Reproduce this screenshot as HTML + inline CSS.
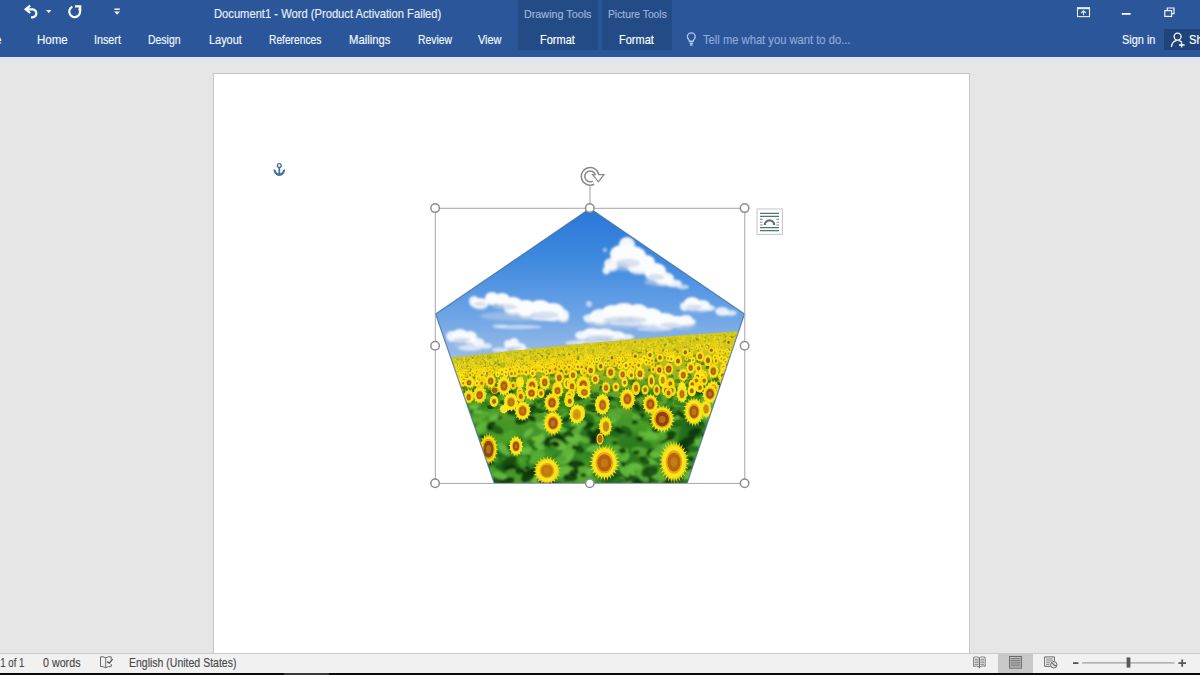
<!DOCTYPE html>
<html lang="en"><head><meta charset="utf-8"><title>Document1 - Word</title>
<style>
html,body{margin:0;padding:0}
body{width:1200px;height:675px;overflow:hidden;position:relative;background:#e6e6e6;font-family:"Liberation Sans", sans-serif}
.abs{position:absolute}
.t{position:absolute;white-space:nowrap;line-height:1.149;transform-origin:0 0;letter-spacing:0;-webkit-text-stroke:0.15px currentColor}
#ribbon{left:0;top:0;width:1200px;height:56.6px;background:#2b579a}
#strip{left:0;top:56.6px;width:1200px;height:6px;background:linear-gradient(#dfe7f4 0,#dfe7f4 35%,#e6e6e6 100%)}
.ctab{position:absolute;top:0;height:50.2px;background:#234b86}
#share{left:1164.3px;top:29.3px;width:40px;height:20.4px;background:#1e4479}
#page{left:212.9px;top:72.8px;width:754.9px;height:590px;background:#fff;border:1px solid #c6c6c6}
#status{left:0;top:652.9px;width:1200px;height:20.2px;background:#f1f1f1;border-top:1px solid #c9c9c9;box-sizing:border-box}
#black{left:0;top:672.9px;width:1200px;height:4px;background:#0a0a0a}
#selview{left:998px;top:653.9px;width:35px;height:19.1px;background:#c8c8c8}
svg{position:absolute;left:0;top:0;overflow:visible}
</style></head><body>
<div id="ribbon" class="abs"></div>
<div id="strip" class="abs"></div>
<div class="ctab" style="left:518.4px;width:79.2px"></div>
<div class="ctab" style="left:601.7px;width:70.1px"></div>
<div id="share" class="abs"></div>
<div id="page" class="abs"></div>
<div id="status" class="abs"></div>
<div id="selview" class="abs"></div>
<div id="black" class="abs"></div>
<div class="abs" style="left:284px;top:672.9px;width:45px;height:3px;background:#383838"></div>
<div class="t" style="left:213.5px;top:6.86px;font-size:12.2px;color:#e8eef8;font-weight:400;transform:scaleX(0.9176)">Document1 - Word (Product Activation Failed)</div>
<div class="t" style="left:523.8px;top:8.04px;font-size:10.9px;color:#9fb6da;font-weight:400;transform:scaleX(0.9897)">Drawing Tools</div>
<div class="t" style="left:607.5px;top:8.04px;font-size:10.9px;color:#9fb6da;font-weight:400;transform:scaleX(0.9460)">Picture Tools</div>
<div class="t" style="left:37.2px;top:32.86px;font-size:12.2px;color:#f4f7fc;font-weight:400;transform:scaleX(0.9472)">Home</div>
<div class="t" style="left:94.3px;top:32.86px;font-size:12.2px;color:#f4f7fc;font-weight:400;transform:scaleX(0.8824)">Insert</div>
<div class="t" style="left:148.3px;top:32.86px;font-size:12.2px;color:#f4f7fc;font-weight:400;transform:scaleX(0.8567)">Design</div>
<div class="t" style="left:208.7px;top:32.86px;font-size:12.2px;color:#f4f7fc;font-weight:400;transform:scaleX(0.8963)">Layout</div>
<div class="t" style="left:269.2px;top:32.86px;font-size:12.2px;color:#f4f7fc;font-weight:400;transform:scaleX(0.8391)">References</div>
<div class="t" style="left:348.7px;top:32.86px;font-size:12.2px;color:#f4f7fc;font-weight:400;transform:scaleX(0.9235)">Mailings</div>
<div class="t" style="left:417.5px;top:32.86px;font-size:12.2px;color:#f4f7fc;font-weight:400;transform:scaleX(0.8507)">Review</div>
<div class="t" style="left:478.3px;top:32.86px;font-size:12.2px;color:#f4f7fc;font-weight:400;transform:scaleX(0.8968)">View</div>
<div class="t" style="left:540.0px;top:32.86px;font-size:12.2px;color:#ffffff;font-weight:400;transform:scaleX(0.9013)">Format</div>
<div class="t" style="left:618.7px;top:32.86px;font-size:12.2px;color:#ffffff;font-weight:400;transform:scaleX(0.9013)">Format</div>
<div class="t" style="left:702.5px;top:32.86px;font-size:12.2px;color:#8eaad6;font-weight:400;transform:scaleX(0.9186)">Tell me what you want to do...</div>
<div class="t" style="left:1121.8px;top:32.86px;font-size:12.2px;color:#f4f7fc;font-weight:400;transform:scaleX(0.8963)">Sign in</div>
<div class="t" style="left:1188.9px;top:32.86px;font-size:12.2px;color:#ffffff;font-weight:400;transform:scaleX(0.9253)">Share</div>
<div class="t" style="left:-17.6px;top:32.86px;font-size:12.2px;color:#f4f7fc;font-weight:400;transform:scaleX(0.9928)">File</div>
<div class="t" style="left:-24.6px;top:655.66px;font-size:12.2px;color:#4a4a4a;font-weight:400;transform:scaleX(0.7924)">Page 1 of 1</div>
<div class="t" style="left:43.3px;top:655.66px;font-size:12.2px;color:#4a4a4a;font-weight:400;transform:scaleX(0.8785)">0 words</div>
<div class="t" style="left:128.8px;top:655.66px;font-size:12.2px;color:#4a4a4a;font-weight:400;transform:scaleX(0.8616)">English (United States)</div>
<svg width="1200" height="675" viewBox="0 0 1200 675">
<defs>
<clipPath id="pc"><polygon points="590.0,208.6 744.5,314.0 687.0,483.4 494.3,483.4 435.6,314.0"/></clipPath>
<linearGradient id="sky" gradientUnits="userSpaceOnUse" x1="0" y1="209" x2="0" y2="358">
<stop offset="0" stop-color="#2a77d8"/><stop offset="0.35" stop-color="#3f8ae0"/><stop offset="0.7" stop-color="#6ba3e6"/><stop offset="1" stop-color="#9bbce6"/></linearGradient>
<linearGradient id="fld" gradientUnits="userSpaceOnUse" x1="0" y1="330" x2="0" y2="484">
<stop offset="0" stop-color="#d6c81c"/><stop offset="0.14" stop-color="#cdc41e"/><stop offset="0.26" stop-color="#a8b422"/><stop offset="0.40" stop-color="#6ea228"/><stop offset="0.60" stop-color="#48962a"/><stop offset="1" stop-color="#3c8e28"/></linearGradient>
<filter id="b1" x="-20%" y="-20%" width="140%" height="140%"><feGaussianBlur stdDeviation="1.6"/></filter>
<filter id="b2" x="-20%" y="-20%" width="140%" height="140%"><feGaussianBlur stdDeviation="0.9"/></filter>
<filter id="b3"><feGaussianBlur stdDeviation="0.35"/></filter>
<filter id="b5" x="-20%" y="-20%" width="140%" height="140%"><feGaussianBlur stdDeviation="0.6"/></filter>
<filter id="b4" x="-20%" y="-20%" width="140%" height="140%"><feGaussianBlur stdDeviation="2.2"/></filter>
</defs>
<g clip-path="url(#pc)"><g filter="url(#b3)">
<rect x="430" y="205" width="320" height="160" fill="url(#sky)"/>
<g filter="url(#b1)">
<ellipse cx="628" cy="266" rx="20" ry="5" fill="#c9d6ea" opacity="0.6"/>
<ellipse cx="660" cy="282" rx="16" ry="4" fill="#c9d6ea" opacity="0.55"/>
<ellipse cx="520" cy="316" rx="40" ry="5" fill="#c9d6ea" opacity="0.45"/>
<ellipse cx="628" cy="324" rx="40" ry="5" fill="#c9d6ea" opacity="0.45"/>
<ellipse cx="684" cy="326" rx="12" ry="4" fill="#c9d6ea" opacity="0.4"/>
<ellipse cx="600" cy="340" rx="26" ry="4" fill="#c9d6ea" opacity="0.4"/>
<ellipse cx="470" cy="345" rx="16" ry="4" fill="#c9d6ea" opacity="0.35"/>
<ellipse cx="515" cy="351" rx="14" ry="3" fill="#c9d6ea" opacity="0.35"/>
<ellipse cx="697" cy="310" rx="14" ry="3" fill="#c9d6ea" opacity="0.35"/>
</g><g filter="url(#b2)">
<ellipse cx="627.5" cy="249.4" rx="7.6" ry="6.4" fill="#cfd9ec" opacity="0.85"/>
<ellipse cx="621.5" cy="258.9" rx="10.4" ry="7.2" fill="#cfd9ec" opacity="0.90"/>
<ellipse cx="633.5" cy="261.5" rx="12.3" ry="8.0" fill="#cfd9ec" opacity="0.90"/>
<ellipse cx="611.5" cy="267.3" rx="6.6" ry="4.8" fill="#cfd9ec" opacity="0.81"/>
<ellipse cx="606.5" cy="271.9" rx="3.3" ry="2.8" fill="#cfd9ec" opacity="0.72"/>
<ellipse cx="646.5" cy="265.9" rx="8.5" ry="5.6" fill="#cfd9ec" opacity="0.90"/>
<ellipse cx="640.5" cy="270.8" rx="11.4" ry="4.0" fill="#cfd9ec" opacity="0.81"/>
<ellipse cx="655.5" cy="275.4" rx="10.4" ry="6.4" fill="#cfd9ec" opacity="0.90"/>
<ellipse cx="664.5" cy="281.3" rx="9.5" ry="4.8" fill="#cfd9ec" opacity="0.85"/>
<ellipse cx="674.5" cy="284.9" rx="7.6" ry="2.8" fill="#cfd9ec" opacity="0.72"/>
<ellipse cx="474.5" cy="303.8" rx="4.8" ry="4.0" fill="#cfd9ec" opacity="0.81"/>
<ellipse cx="480.5" cy="305.8" rx="7.6" ry="4.0" fill="#cfd9ec" opacity="0.85"/>
<ellipse cx="492.5" cy="301.3" rx="6.6" ry="4.8" fill="#cfd9ec" opacity="0.90"/>
<ellipse cx="502.5" cy="302.3" rx="7.6" ry="4.8" fill="#cfd9ec" opacity="0.90"/>
<ellipse cx="513.5" cy="309.4" rx="9.5" ry="6.4" fill="#cfd9ec" opacity="0.90"/>
<ellipse cx="526.5" cy="312.4" rx="9.5" ry="6.4" fill="#cfd9ec" opacity="0.90"/>
<ellipse cx="540.5" cy="312.4" rx="10.4" ry="6.4" fill="#cfd9ec" opacity="0.90"/>
<ellipse cx="553.5" cy="315.4" rx="10.4" ry="6.4" fill="#cfd9ec" opacity="0.90"/>
<ellipse cx="563.5" cy="318.3" rx="5.7" ry="4.8" fill="#cfd9ec" opacity="0.81"/>
<ellipse cx="590.5" cy="320.2" rx="6.6" ry="3.2" fill="#cfd9ec" opacity="0.72"/>
<ellipse cx="600.5" cy="319.9" rx="9.5" ry="5.6" fill="#cfd9ec" opacity="0.85"/>
<ellipse cx="612.5" cy="317.4" rx="9.5" ry="6.4" fill="#cfd9ec" opacity="0.90"/>
<ellipse cx="624.5" cy="315.4" rx="11.4" ry="6.4" fill="#cfd9ec" opacity="0.90"/>
<ellipse cx="638.5" cy="316.4" rx="9.5" ry="6.4" fill="#cfd9ec" opacity="0.90"/>
<ellipse cx="650.5" cy="320.4" rx="11.4" ry="6.4" fill="#cfd9ec" opacity="0.90"/>
<ellipse cx="664.5" cy="323.9" rx="11.4" ry="5.6" fill="#cfd9ec" opacity="0.90"/>
<ellipse cx="676.5" cy="323.8" rx="9.5" ry="4.0" fill="#cfd9ec" opacity="0.90"/>
<ellipse cx="686.5" cy="322.8" rx="6.6" ry="4.0" fill="#cfd9ec" opacity="0.85"/>
<ellipse cx="684.5" cy="308.2" rx="3.8" ry="3.2" fill="#cfd9ec" opacity="0.72"/>
<ellipse cx="692.5" cy="306.3" rx="7.6" ry="4.8" fill="#cfd9ec" opacity="0.90"/>
<ellipse cx="702.5" cy="307.8" rx="7.6" ry="4.0" fill="#cfd9ec" opacity="0.85"/>
<ellipse cx="722.5" cy="313.2" rx="6.6" ry="3.2" fill="#cfd9ec" opacity="0.72"/>
<ellipse cx="582.5" cy="337.2" rx="6.6" ry="3.2" fill="#cfd9ec" opacity="0.77"/>
<ellipse cx="592.5" cy="335.8" rx="8.5" ry="4.0" fill="#cfd9ec" opacity="0.85"/>
<ellipse cx="604.5" cy="335.5" rx="9.5" ry="3.6" fill="#cfd9ec" opacity="0.85"/>
<ellipse cx="616.5" cy="337.2" rx="8.5" ry="3.2" fill="#cfd9ec" opacity="0.81"/>
<ellipse cx="452.5" cy="338.8" rx="5.7" ry="4.0" fill="#cfd9ec" opacity="0.77"/>
<ellipse cx="460.5" cy="338.3" rx="7.6" ry="4.8" fill="#cfd9ec" opacity="0.85"/>
<ellipse cx="470.5" cy="340.3" rx="6.6" ry="4.8" fill="#cfd9ec" opacity="0.85"/>
<ellipse cx="478.5" cy="344.2" rx="5.7" ry="3.2" fill="#cfd9ec" opacity="0.77"/>
<ellipse cx="508.5" cy="346.2" rx="3.8" ry="3.2" fill="#cfd9ec" opacity="0.77"/>
<ellipse cx="514.5" cy="345.8" rx="4.8" ry="4.0" fill="#cfd9ec" opacity="0.81"/>
<ellipse cx="520.5" cy="349.2" rx="5.7" ry="3.2" fill="#cfd9ec" opacity="0.77"/>
<ellipse cx="627" cy="245" rx="8" ry="8" fill="#fbfcfe" opacity="0.95"/>
<ellipse cx="621" cy="254" rx="11" ry="9" fill="#fbfcfe" opacity="1"/>
<ellipse cx="633" cy="256" rx="13" ry="10" fill="#fbfcfe" opacity="1"/>
<ellipse cx="611" cy="264" rx="7" ry="6" fill="#fbfcfe" opacity="0.9"/>
<ellipse cx="606" cy="270" rx="3.5" ry="3.5" fill="#fbfcfe" opacity="0.8"/>
<ellipse cx="646" cy="262" rx="9" ry="7" fill="#fbfcfe" opacity="1"/>
<ellipse cx="640" cy="268" rx="12" ry="5" fill="#fbfcfe" opacity="0.9"/>
<ellipse cx="655" cy="271" rx="11" ry="8" fill="#fbfcfe" opacity="1"/>
<ellipse cx="664" cy="278" rx="10" ry="6" fill="#fbfcfe" opacity="0.95"/>
<ellipse cx="674" cy="283" rx="8" ry="3.5" fill="#fbfcfe" opacity="0.8"/>
<ellipse cx="683" cy="287" rx="6" ry="2.5" fill="#fbfcfe" opacity="0.6"/>
<ellipse cx="605" cy="250" rx="2" ry="2" fill="#fbfcfe" opacity="0.6"/>
<ellipse cx="474" cy="301" rx="5" ry="5" fill="#fbfcfe" opacity="0.9"/>
<ellipse cx="480" cy="303" rx="8" ry="5" fill="#fbfcfe" opacity="0.95"/>
<ellipse cx="492" cy="298" rx="7" ry="6" fill="#fbfcfe" opacity="1"/>
<ellipse cx="502" cy="299" rx="8" ry="6" fill="#fbfcfe" opacity="1"/>
<ellipse cx="513" cy="305" rx="10" ry="8" fill="#fbfcfe" opacity="1"/>
<ellipse cx="526" cy="308" rx="10" ry="8" fill="#fbfcfe" opacity="1"/>
<ellipse cx="540" cy="308" rx="11" ry="8" fill="#fbfcfe" opacity="1"/>
<ellipse cx="553" cy="311" rx="11" ry="8" fill="#fbfcfe" opacity="1"/>
<ellipse cx="563" cy="315" rx="6" ry="6" fill="#fbfcfe" opacity="0.9"/>
<ellipse cx="545" cy="318" rx="14" ry="3" fill="#fbfcfe" opacity="0.6"/>
<ellipse cx="518" cy="327" rx="24" ry="2.2" fill="#fbfcfe" opacity="0.5"/>
<ellipse cx="500" cy="326" rx="8" ry="2" fill="#fbfcfe" opacity="0.4"/>
<ellipse cx="590" cy="318" rx="7" ry="4" fill="#fbfcfe" opacity="0.8"/>
<ellipse cx="600" cy="316" rx="10" ry="7" fill="#fbfcfe" opacity="0.95"/>
<ellipse cx="612" cy="313" rx="10" ry="8" fill="#fbfcfe" opacity="1"/>
<ellipse cx="624" cy="311" rx="12" ry="8" fill="#fbfcfe" opacity="1"/>
<ellipse cx="638" cy="312" rx="10" ry="8" fill="#fbfcfe" opacity="1"/>
<ellipse cx="650" cy="316" rx="12" ry="8" fill="#fbfcfe" opacity="1"/>
<ellipse cx="664" cy="320" rx="12" ry="7" fill="#fbfcfe" opacity="1"/>
<ellipse cx="676" cy="321" rx="10" ry="5" fill="#fbfcfe" opacity="1"/>
<ellipse cx="686" cy="320" rx="7" ry="5" fill="#fbfcfe" opacity="0.95"/>
<ellipse cx="692" cy="322" rx="4" ry="3" fill="#fbfcfe" opacity="0.8"/>
<ellipse cx="640" cy="323" rx="30" ry="3" fill="#fbfcfe" opacity="0.6"/>
<ellipse cx="589" cy="304" rx="3" ry="3" fill="#fbfcfe" opacity="0.6"/>
<ellipse cx="684" cy="306" rx="4" ry="4" fill="#fbfcfe" opacity="0.8"/>
<ellipse cx="692" cy="303" rx="8" ry="6" fill="#fbfcfe" opacity="1"/>
<ellipse cx="702" cy="305" rx="8" ry="5" fill="#fbfcfe" opacity="0.95"/>
<ellipse cx="710" cy="308" rx="5" ry="3" fill="#fbfcfe" opacity="0.8"/>
<ellipse cx="722" cy="311" rx="7" ry="4" fill="#fbfcfe" opacity="0.8"/>
<ellipse cx="731" cy="313" rx="6" ry="3" fill="#fbfcfe" opacity="0.7"/>
<ellipse cx="712" cy="286" rx="5" ry="2.5" fill="#fbfcfe" opacity="0.6"/>
<ellipse cx="582" cy="335" rx="7" ry="4" fill="#fbfcfe" opacity="0.85"/>
<ellipse cx="592" cy="333" rx="9" ry="5" fill="#fbfcfe" opacity="0.95"/>
<ellipse cx="604" cy="333" rx="10" ry="4.5" fill="#fbfcfe" opacity="0.95"/>
<ellipse cx="616" cy="335" rx="9" ry="4" fill="#fbfcfe" opacity="0.9"/>
<ellipse cx="627" cy="337" rx="7" ry="3" fill="#fbfcfe" opacity="0.8"/>
<ellipse cx="575" cy="343" rx="10" ry="2.5" fill="#fbfcfe" opacity="0.6"/>
<ellipse cx="600" cy="342" rx="22" ry="2" fill="#fbfcfe" opacity="0.45"/>
<ellipse cx="452" cy="336" rx="6" ry="5" fill="#fbfcfe" opacity="0.85"/>
<ellipse cx="460" cy="335" rx="8" ry="6" fill="#fbfcfe" opacity="0.95"/>
<ellipse cx="470" cy="337" rx="7" ry="6" fill="#fbfcfe" opacity="0.95"/>
<ellipse cx="478" cy="342" rx="6" ry="4" fill="#fbfcfe" opacity="0.85"/>
<ellipse cx="486" cy="346" rx="6" ry="3" fill="#fbfcfe" opacity="0.7"/>
<ellipse cx="470" cy="348" rx="12" ry="3" fill="#fbfcfe" opacity="0.6"/>
<ellipse cx="508" cy="344" rx="4" ry="4" fill="#fbfcfe" opacity="0.85"/>
<ellipse cx="514" cy="343" rx="5" ry="5" fill="#fbfcfe" opacity="0.9"/>
<ellipse cx="520" cy="347" rx="6" ry="4" fill="#fbfcfe" opacity="0.85"/>
<ellipse cx="528" cy="351" rx="5" ry="2.5" fill="#fbfcfe" opacity="0.6"/>
<ellipse cx="500" cy="350" rx="8" ry="2.5" fill="#fbfcfe" opacity="0.6"/>
<ellipse cx="655" cy="329" rx="18" ry="2.5" fill="#fbfcfe" opacity="0.5"/>
</g><g filter="url(#b2)">
<ellipse cx="628" cy="263" rx="12" ry="4" fill="#bccae2" opacity=".55"/>
<ellipse cx="656" cy="277" rx="8" ry="3" fill="#bccae2" opacity=".55"/>
<ellipse cx="505" cy="307" rx="12" ry="3" fill="#bccae2" opacity=".55"/>
<ellipse cx="545" cy="315" rx="14" ry="3.5" fill="#bccae2" opacity=".55"/>
<ellipse cx="480" cy="304" rx="6" ry="2" fill="#bccae2" opacity=".55"/>
<ellipse cx="625" cy="320" rx="22" ry="3.5" fill="#bccae2" opacity=".55"/>
<ellipse cx="670" cy="325" rx="10" ry="2.5" fill="#bccae2" opacity=".55"/>
<ellipse cx="694" cy="307" rx="8" ry="2.5" fill="#bccae2" opacity=".55"/>
<ellipse cx="600" cy="337" rx="14" ry="2" fill="#bccae2" opacity=".55"/>
<ellipse cx="462" cy="340" rx="8" ry="2.5" fill="#bccae2" opacity=".55"/>
<ellipse cx="516" cy="348" rx="6" ry="2" fill="#bccae2" opacity=".55"/>
</g>
<polygon points="430,359.5 438,358.8 446,358.0 454,357.3 462,356.4 470,355.5 478,354.6 486,353.8 494,352.9 502,352.0 510,351.1 518,350.3 526,349.4 534,348.6 542,347.8 550,346.9 558,346.1 566,345.3 574,344.6 582,343.8 590,343.1 598,342.3 606,341.6 614,340.9 622,340.2 630,339.5 638,338.9 646,338.2 654,337.6 662,336.9 670,336.3 678,335.7 686,335.1 694,334.5 702,333.9 710,333.3 718,332.8 726,332.2 734,331.6 742,330.9 750,330.2 752,486 430,486" fill="url(#fld)"/>
<g filter="url(#b4)">
<ellipse cx="530" cy="369" rx="9" ry="3" fill="#5f9a22" opacity="0.8"/>
<ellipse cx="697" cy="388" rx="10" ry="9" fill="#1f6a18" opacity="0.9"/>
<ellipse cx="575" cy="440" rx="30" ry="22" fill="#1e6b19" opacity="0.7"/>
<ellipse cx="640" cy="450" rx="25" ry="20" fill="#216f1a" opacity="0.7"/>
<ellipse cx="520" cy="470" rx="30" ry="12" fill="#1a5c16" opacity="0.8"/>
<ellipse cx="630" cy="478" rx="30" ry="8" fill="#174f14" opacity="0.9"/>
<ellipse cx="690" cy="440" rx="12" ry="25" fill="#1c6418" opacity="0.8"/>
<ellipse cx="480" cy="420" rx="14" ry="14" fill="#2b7d1e" opacity="0.7"/>
<ellipse cx="560" cy="395" rx="20" ry="5" fill="#3d8a22" opacity="0.6"/>
<ellipse cx="640" cy="384" rx="20" ry="4" fill="#4a9424" opacity="0.6"/>
<ellipse cx="612" cy="366" rx="10" ry="2.5" fill="#5f9f26" opacity="0.7"/>
<ellipse cx="690" cy="358" rx="10" ry="3" fill="#5c9c24" opacity="0.7"/>
<ellipse cx="665" cy="344" rx="10" ry="2" fill="#86ad24" opacity="0.6"/>
<ellipse cx="505" cy="440" rx="18" ry="14" fill="#3f9426" opacity="0.6"/>
<ellipse cx="585" cy="452" rx="14" ry="10" fill="#3f9a28" opacity="0.6"/>
<ellipse cx="640" cy="425" rx="18" ry="10" fill="#46a02a" opacity="0.6"/>
<ellipse cx="560" cy="455" rx="10" ry="12" fill="#46a02a" opacity="0.5"/>
</g>
<g filter="url(#b5)">
<ellipse cx="538.4" cy="353.8" rx="1.2" ry="0.8" fill="#8ba01c" opacity=".8"/>
<ellipse cx="604.1" cy="358.9" rx="1.5" ry="0.9" fill="#76981c" opacity=".8"/>
<ellipse cx="449.6" cy="374.6" rx="1.5" ry="1.0" fill="#72971c" opacity=".8"/>
<ellipse cx="569.6" cy="395.9" rx="2.8" ry="1.8" fill="#34801d" opacity=".8"/>
<ellipse cx="632.5" cy="406.5" rx="4.3" ry="2.7" fill="#2f7f1e" opacity=".8"/>
<ellipse cx="740.6" cy="333.9" rx="1.0" ry="0.7" fill="#92a21c" opacity=".8"/>
<ellipse cx="482.7" cy="358.4" rx="1.1" ry="0.7" fill="#768e17" opacity=".8"/>
<ellipse cx="494.0" cy="380.2" rx="2.5" ry="1.6" fill="#5e8f1d" opacity=".8"/>
<ellipse cx="607.8" cy="344.5" rx="1.0" ry="0.6" fill="#91a11c" opacity=".8"/>
<ellipse cx="648.9" cy="360.1" rx="1.8" ry="1.1" fill="#6e951c" opacity=".8"/>
<ellipse cx="578.5" cy="356.9" rx="1.6" ry="1.0" fill="#7e9b1c" opacity=".8"/>
<ellipse cx="513.7" cy="378.5" rx="2.3" ry="1.5" fill="#466e14" opacity=".8"/>
<ellipse cx="664.1" cy="350.1" rx="1.7" ry="1.1" fill="#7e9b1c" opacity=".8"/>
<ellipse cx="567.6" cy="389.9" rx="2.6" ry="1.7" fill="#3f851d" opacity=".8"/>
<ellipse cx="450.2" cy="388.2" rx="2.9" ry="1.8" fill="#558c1d" opacity=".8"/>
<ellipse cx="709.4" cy="348.8" rx="1.7" ry="1.1" fill="#7b9a1c" opacity=".8"/>
<ellipse cx="617.8" cy="364.0" rx="2.3" ry="1.4" fill="#527615" opacity=".8"/>
<ellipse cx="585.0" cy="381.5" rx="2.2" ry="1.4" fill="#4d891d" opacity=".8"/>
<ellipse cx="638.6" cy="411.3" rx="5.1" ry="3.2" fill="#2f7f1e" opacity=".8"/>
<ellipse cx="557.6" cy="383.1" rx="2.1" ry="1.4" fill="#4e8a1d" opacity=".8"/>
<ellipse cx="490.1" cy="357.6" rx="1.0" ry="0.7" fill="#768e17" opacity=".8"/>
<ellipse cx="478.1" cy="363.5" rx="1.3" ry="0.8" fill="#6c8716" opacity=".8"/>
<ellipse cx="463.0" cy="374.5" rx="1.9" ry="1.2" fill="#587a15" opacity=".8"/>
<ellipse cx="692.0" cy="397.2" rx="3.4" ry="2.1" fill="#2f7f1e" opacity=".8"/>
<ellipse cx="549.2" cy="401.4" rx="4.5" ry="2.8" fill="#2f7f1e" opacity=".8"/>
<ellipse cx="492.6" cy="361.4" rx="1.2" ry="0.8" fill="#859d1c" opacity=".8"/>
<ellipse cx="620.6" cy="351.7" rx="1.2" ry="0.8" fill="#819c1c" opacity=".8"/>
<ellipse cx="552.5" cy="375.7" rx="2.8" ry="1.8" fill="#5d8f1d" opacity=".8"/>
<ellipse cx="597.8" cy="377.2" rx="2.8" ry="1.8" fill="#548c1d" opacity=".8"/>
<ellipse cx="716.9" cy="388.0" rx="4.0" ry="2.6" fill="#1c5112" opacity=".8"/>
<ellipse cx="559.6" cy="364.1" rx="1.5" ry="1.0" fill="#73971c" opacity=".8"/>
<ellipse cx="457.3" cy="359.9" rx="1.0" ry="0.6" fill="#90a11c" opacity=".8"/>
<ellipse cx="543.4" cy="350.4" rx="1.0" ry="0.6" fill="#91a21c" opacity=".8"/>
<ellipse cx="469.5" cy="369.5" rx="1.4" ry="0.9" fill="#618016" opacity=".8"/>
<ellipse cx="628.4" cy="345.7" rx="1.1" ry="0.7" fill="#8b9f1c" opacity=".8"/>
<ellipse cx="550.9" cy="351.6" rx="1.2" ry="0.7" fill="#758d17" opacity=".8"/>
<ellipse cx="582.5" cy="368.1" rx="1.7" ry="1.1" fill="#68931c" opacity=".8"/>
<ellipse cx="544.2" cy="358.0" rx="1.5" ry="1.0" fill="#829c1c" opacity=".8"/>
<ellipse cx="445.2" cy="408.2" rx="3.7" ry="2.3" fill="#2f7f1e" opacity=".8"/>
<ellipse cx="606.4" cy="343.9" rx="1.0" ry="0.6" fill="#7a9117" opacity=".8"/>
<ellipse cx="705.6" cy="380.0" rx="2.7" ry="1.7" fill="#43861d" opacity=".8"/>
<ellipse cx="489.8" cy="393.8" rx="3.1" ry="2.0" fill="#2b5b13" opacity=".8"/>
<ellipse cx="540.2" cy="356.5" rx="1.4" ry="0.9" fill="#6e8817" opacity=".8"/>
<ellipse cx="702.3" cy="391.0" rx="4.1" ry="2.6" fill="#307f1d" opacity=".8"/>
<ellipse cx="508.3" cy="375.2" rx="2.0" ry="1.3" fill="#66921c" opacity=".8"/>
<ellipse cx="446.7" cy="367.6" rx="1.3" ry="0.8" fill="#829c1c" opacity=".8"/>
<ellipse cx="734.5" cy="357.0" rx="2.4" ry="1.5" fill="#517515" opacity=".8"/>
<ellipse cx="734.1" cy="350.9" rx="1.6" ry="1.0" fill="#74971c" opacity=".8"/>
<ellipse cx="499.0" cy="359.7" rx="1.3" ry="0.8" fill="#6f8917" opacity=".8"/>
<ellipse cx="698.5" cy="361.3" rx="2.3" ry="1.4" fill="#4d7215" opacity=".8"/>
<ellipse cx="464.3" cy="387.1" rx="3.0" ry="1.9" fill="#3d6814" opacity=".8"/>
<ellipse cx="670.5" cy="362.6" rx="1.9" ry="1.2" fill="#4e7315" opacity=".8"/>
<ellipse cx="541.1" cy="394.4" rx="4.0" ry="2.5" fill="#3a831d" opacity=".8"/>
<ellipse cx="562.4" cy="406.9" rx="4.4" ry="2.8" fill="#2f7f1e" opacity=".8"/>
<ellipse cx="477.4" cy="360.0" rx="1.2" ry="0.8" fill="#748c17" opacity=".8"/>
<ellipse cx="483.3" cy="398.1" rx="4.0" ry="2.5" fill="#3b831d" opacity=".8"/>
<ellipse cx="546.6" cy="374.8" rx="1.9" ry="1.2" fill="#60901d" opacity=".8"/>
<ellipse cx="739.0" cy="374.5" rx="2.9" ry="1.8" fill="#326013" opacity=".8"/>
<ellipse cx="572.5" cy="399.9" rx="4.2" ry="2.7" fill="#2f7f1e" opacity=".8"/>
<ellipse cx="516.1" cy="361.9" rx="1.4" ry="0.9" fill="#7f9b1c" opacity=".8"/>
<ellipse cx="518.4" cy="368.4" rx="1.6" ry="1.0" fill="#5a7b15" opacity=".8"/>
<ellipse cx="547.7" cy="368.7" rx="2.0" ry="1.3" fill="#547715" opacity=".8"/>
<ellipse cx="568.4" cy="404.2" rx="3.8" ry="2.4" fill="#2f7f1e" opacity=".8"/>
<ellipse cx="600.3" cy="344.3" rx="1.0" ry="0.6" fill="#92a21c" opacity=".8"/>
<ellipse cx="439.2" cy="397.3" rx="2.6" ry="1.6" fill="#43861d" opacity=".8"/>
<ellipse cx="662.8" cy="369.2" rx="2.2" ry="1.4" fill="#5b8e1d" opacity=".8"/>
<ellipse cx="610.2" cy="391.0" rx="2.7" ry="1.7" fill="#38821d" opacity=".8"/>
<ellipse cx="515.0" cy="361.2" rx="1.5" ry="1.0" fill="#819c1c" opacity=".8"/>
<ellipse cx="612.1" cy="388.7" rx="3.8" ry="2.4" fill="#3c831d" opacity=".8"/>
<ellipse cx="627.9" cy="367.0" rx="2.2" ry="1.4" fill="#63911c" opacity=".8"/>
<ellipse cx="578.2" cy="371.8" rx="2.2" ry="1.4" fill="#497014" opacity=".8"/>
<ellipse cx="654.8" cy="399.0" rx="4.6" ry="3.0" fill="#2f7f1e" opacity=".8"/>
<ellipse cx="611.4" cy="406.2" rx="4.8" ry="3.0" fill="#2f7f1e" opacity=".8"/>
<ellipse cx="475.7" cy="373.1" rx="1.6" ry="1.0" fill="#70961c" opacity=".8"/>
<ellipse cx="460.7" cy="387.8" rx="2.9" ry="1.8" fill="#3c6714" opacity=".8"/>
<ellipse cx="485.9" cy="389.8" rx="3.0" ry="1.9" fill="#4c891d" opacity=".8"/>
<ellipse cx="711.7" cy="408.3" rx="3.7" ry="2.3" fill="#174e12" opacity=".8"/>
<ellipse cx="561.5" cy="369.6" rx="2.5" ry="1.6" fill="#507415" opacity=".8"/>
<ellipse cx="488.1" cy="371.5" rx="1.8" ry="1.2" fill="#71961c" opacity=".8"/>
<ellipse cx="498.7" cy="364.7" rx="1.6" ry="1.0" fill="#7d9a1c" opacity=".8"/>
<ellipse cx="609.8" cy="363.4" rx="1.6" ry="1.0" fill="#6d951c" opacity=".8"/>
<ellipse cx="631.4" cy="367.3" rx="1.8" ry="1.2" fill="#4a7014" opacity=".8"/>
<ellipse cx="682.4" cy="408.9" rx="3.4" ry="2.2" fill="#2f7f1e" opacity=".8"/>
<ellipse cx="450.3" cy="395.6" rx="2.6" ry="1.7" fill="#45871d" opacity=".8"/>
<ellipse cx="568.9" cy="403.6" rx="4.4" ry="2.8" fill="#2f7f1e" opacity=".8"/>
<ellipse cx="484.3" cy="405.3" rx="3.7" ry="2.4" fill="#2f7f1e" opacity=".8"/>
<ellipse cx="465.7" cy="358.7" rx="1.0" ry="0.7" fill="#91a11c" opacity=".8"/>
<ellipse cx="460.4" cy="407.1" rx="3.9" ry="2.5" fill="#174e12" opacity=".8"/>
<ellipse cx="464.0" cy="400.8" rx="2.6" ry="1.7" fill="#205412" opacity=".8"/>
<ellipse cx="578.7" cy="359.1" rx="1.7" ry="1.1" fill="#618016" opacity=".8"/>
<ellipse cx="521.0" cy="354.7" rx="1.1" ry="0.7" fill="#8da01c" opacity=".8"/>
<ellipse cx="471.9" cy="360.9" rx="1.1" ry="0.7" fill="#8b9f1c" opacity=".8"/>
<ellipse cx="534.7" cy="360.9" rx="1.6" ry="1.0" fill="#7e9b1c" opacity=".8"/>
<ellipse cx="593.0" cy="349.8" rx="1.2" ry="0.8" fill="#899f1c" opacity=".8"/>
<ellipse cx="515.6" cy="352.6" rx="1.0" ry="0.6" fill="#92a21c" opacity=".8"/>
<ellipse cx="496.7" cy="373.4" rx="2.3" ry="1.5" fill="#6c941c" opacity=".8"/>
<ellipse cx="691.9" cy="358.1" rx="2.0" ry="1.2" fill="#547715" opacity=".8"/>
<ellipse cx="559.9" cy="371.1" rx="2.3" ry="1.5" fill="#4d7215" opacity=".8"/>
<ellipse cx="544.2" cy="397.0" rx="3.7" ry="2.4" fill="#35811d" opacity=".8"/>
<ellipse cx="563.5" cy="360.8" rx="1.4" ry="0.9" fill="#79991c" opacity=".8"/>
<ellipse cx="459.9" cy="392.7" rx="2.5" ry="1.6" fill="#4a881d" opacity=".8"/>
<ellipse cx="464.2" cy="399.7" rx="3.8" ry="2.4" fill="#3a831d" opacity=".8"/>
<ellipse cx="525.4" cy="358.7" rx="1.3" ry="0.8" fill="#849d1c" opacity=".8"/>
<ellipse cx="486.8" cy="372.4" rx="1.7" ry="1.1" fill="#587915" opacity=".8"/>
<ellipse cx="739.5" cy="365.1" rx="2.2" ry="1.4" fill="#436b14" opacity=".8"/>
<ellipse cx="534.0" cy="363.7" rx="1.4" ry="0.9" fill="#78991c" opacity=".8"/>
<ellipse cx="585.1" cy="369.2" rx="1.9" ry="1.2" fill="#65921c" opacity=".8"/>
<ellipse cx="439.5" cy="367.6" rx="1.2" ry="0.8" fill="#839d1c" opacity=".8"/>
<ellipse cx="450.9" cy="359.8" rx="1.0" ry="0.6" fill="#92a21c" opacity=".8"/>
<ellipse cx="619.5" cy="369.2" rx="2.5" ry="1.6" fill="#60901d" opacity=".8"/>
<ellipse cx="660.0" cy="399.2" rx="3.6" ry="2.3" fill="#2f7f1e" opacity=".8"/>
<ellipse cx="743.3" cy="337.4" rx="1.2" ry="0.8" fill="#8b9f1c" opacity=".8"/>
<ellipse cx="451.6" cy="399.6" rx="3.8" ry="2.4" fill="#3d841d" opacity=".8"/>
<ellipse cx="665.5" cy="392.3" rx="2.9" ry="1.8" fill="#307f1d" opacity=".8"/>
<ellipse cx="594.4" cy="396.0" rx="4.0" ry="2.6" fill="#184f12" opacity=".8"/>
<ellipse cx="619.1" cy="401.1" rx="4.2" ry="2.7" fill="#2f7f1e" opacity=".8"/>
<ellipse cx="509.3" cy="353.5" rx="1.0" ry="0.6" fill="#92a21c" opacity=".8"/>
<ellipse cx="470.5" cy="399.1" rx="3.3" ry="2.1" fill="#3b831d" opacity=".8"/>
<ellipse cx="632.1" cy="381.0" rx="2.9" ry="1.8" fill="#49881d" opacity=".8"/>
<ellipse cx="685.3" cy="385.6" rx="3.2" ry="2.1" fill="#3b831d" opacity=".8"/>
<ellipse cx="642.4" cy="341.7" rx="1.1" ry="0.7" fill="#91a11c" opacity=".8"/>
<ellipse cx="461.1" cy="365.8" rx="1.5" ry="0.9" fill="#839c1c" opacity=".8"/>
<ellipse cx="667.3" cy="409.3" rx="4.3" ry="2.7" fill="#2f7f1e" opacity=".8"/>
<ellipse cx="586.5" cy="383.0" rx="3.2" ry="2.0" fill="#4a881d" opacity=".8"/>
<ellipse cx="637.3" cy="342.4" rx="1.0" ry="0.6" fill="#90a11c" opacity=".8"/>
<ellipse cx="668.4" cy="350.8" rx="1.6" ry="1.0" fill="#7c9a1c" opacity=".8"/>
<ellipse cx="456.8" cy="366.4" rx="1.5" ry="0.9" fill="#839c1c" opacity=".8"/>
<ellipse cx="647.5" cy="351.4" rx="1.5" ry="1.0" fill="#7e9b1c" opacity=".8"/>
<ellipse cx="582.6" cy="348.5" rx="1.2" ry="0.7" fill="#8da01c" opacity=".8"/>
<ellipse cx="741.2" cy="404.6" rx="3.1" ry="2.0" fill="#2f7f1e" opacity=".8"/>
<ellipse cx="692.2" cy="408.4" rx="4.2" ry="2.7" fill="#2f7f1e" opacity=".8"/>
<ellipse cx="503.0" cy="407.3" rx="3.2" ry="2.1" fill="#2f7f1e" opacity=".8"/>
<ellipse cx="481.9" cy="377.4" rx="2.5" ry="1.6" fill="#66921c" opacity=".8"/>
<ellipse cx="692.3" cy="364.0" rx="2.6" ry="1.6" fill="#61911d" opacity=".8"/>
<ellipse cx="509.7" cy="403.2" rx="3.6" ry="2.3" fill="#2f7f1e" opacity=".8"/>
<ellipse cx="439.1" cy="378.4" rx="1.9" ry="1.2" fill="#6c941c" opacity=".8"/>
<ellipse cx="481.6" cy="367.5" rx="1.5" ry="1.0" fill="#638116" opacity=".8"/>
<ellipse cx="438.5" cy="394.1" rx="3.3" ry="2.1" fill="#4a881d" opacity=".8"/>
<ellipse cx="725.2" cy="381.1" rx="3.7" ry="2.4" fill="#40851d" opacity=".8"/>
<ellipse cx="553.4" cy="364.2" rx="2.1" ry="1.3" fill="#74971c" opacity=".8"/>
<ellipse cx="549.8" cy="366.6" rx="1.7" ry="1.1" fill="#70961c" opacity=".8"/>
<ellipse cx="469.5" cy="399.1" rx="2.9" ry="1.8" fill="#235612" opacity=".8"/>
<ellipse cx="515.3" cy="360.7" rx="1.4" ry="0.9" fill="#829c1c" opacity=".8"/>
<ellipse cx="553.7" cy="407.9" rx="4.8" ry="3.0" fill="#174e12" opacity=".8"/>
<ellipse cx="633.6" cy="403.0" rx="4.8" ry="3.1" fill="#2f7f1e" opacity=".8"/>
<ellipse cx="661.1" cy="339.8" rx="1.0" ry="0.7" fill="#91a21c" opacity=".8"/>
<ellipse cx="671.3" cy="376.4" rx="2.5" ry="1.6" fill="#4d891d" opacity=".8"/>
<ellipse cx="725.3" cy="337.8" rx="1.1" ry="0.7" fill="#8da01c" opacity=".8"/>
<ellipse cx="530.3" cy="389.7" rx="3.6" ry="2.3" fill="#45861d" opacity=".8"/>
<ellipse cx="641.4" cy="352.4" rx="1.6" ry="1.0" fill="#7d9a1c" opacity=".8"/>
<ellipse cx="489.9" cy="359.0" rx="1.1" ry="0.7" fill="#738c17" opacity=".8"/>
<ellipse cx="592.1" cy="351.8" rx="1.4" ry="0.9" fill="#6d8817" opacity=".8"/>
<ellipse cx="577.5" cy="349.7" rx="1.1" ry="0.7" fill="#8ca01c" opacity=".8"/>
<ellipse cx="544.0" cy="351.3" rx="1.0" ry="0.7" fill="#8fa11c" opacity=".8"/>
<ellipse cx="614.6" cy="400.6" rx="4.3" ry="2.7" fill="#2f7f1e" opacity=".8"/>
<ellipse cx="566.3" cy="371.9" rx="2.1" ry="1.3" fill="#63911c" opacity=".8"/>
<ellipse cx="457.2" cy="366.7" rx="1.6" ry="1.0" fill="#829c1c" opacity=".8"/>
<ellipse cx="594.1" cy="378.3" rx="3.1" ry="1.9" fill="#528b1d" opacity=".8"/>
<ellipse cx="522.0" cy="359.3" rx="1.3" ry="0.8" fill="#839d1c" opacity=".8"/>
<ellipse cx="733.7" cy="394.9" rx="4.5" ry="2.8" fill="#2f7f1e" opacity=".8"/>
<ellipse cx="448.0" cy="391.0" rx="3.2" ry="2.0" fill="#4f8a1d" opacity=".8"/>
<ellipse cx="620.0" cy="342.4" rx="1.0" ry="0.6" fill="#7b9117" opacity=".8"/>
<ellipse cx="693.9" cy="396.2" rx="4.6" ry="3.0" fill="#2f7f1e" opacity=".8"/>
<ellipse cx="471.8" cy="360.6" rx="1.2" ry="0.7" fill="#8ba01c" opacity=".8"/>
<ellipse cx="729.9" cy="381.8" rx="3.4" ry="2.1" fill="#265812" opacity=".8"/>
<ellipse cx="579.8" cy="373.0" rx="1.9" ry="1.2" fill="#466e14" opacity=".8"/>
<ellipse cx="510.1" cy="405.1" rx="4.0" ry="2.5" fill="#2f7f1e" opacity=".8"/>
<ellipse cx="477.7" cy="363.7" rx="1.4" ry="0.9" fill="#849d1c" opacity=".8"/>
<ellipse cx="472.8" cy="358.2" rx="1.0" ry="0.7" fill="#90a11c" opacity=".8"/>
<ellipse cx="558.3" cy="354.9" rx="1.3" ry="0.9" fill="#859d1c" opacity=".8"/>
<ellipse cx="531.5" cy="370.0" rx="2.3" ry="1.5" fill="#6c941c" opacity=".8"/>
<ellipse cx="712.0" cy="360.4" rx="1.9" ry="1.2" fill="#66921c" opacity=".8"/>
<ellipse cx="735.8" cy="379.9" rx="2.8" ry="1.8" fill="#41851d" opacity=".8"/>
<ellipse cx="592.5" cy="382.0" rx="2.7" ry="1.7" fill="#4b891d" opacity=".8"/>
<ellipse cx="644.9" cy="404.1" rx="3.4" ry="2.2" fill="#2f7f1e" opacity=".8"/>
<ellipse cx="542.8" cy="366.7" rx="2.0" ry="1.2" fill="#71961c" opacity=".8"/>
<ellipse cx="685.1" cy="384.7" rx="3.2" ry="2.0" fill="#3c831d" opacity=".8"/>
<ellipse cx="738.7" cy="347.0" rx="1.7" ry="1.1" fill="#7b9a1c" opacity=".8"/>
<ellipse cx="506.6" cy="392.3" rx="2.7" ry="1.7" fill="#2b5b13" opacity=".8"/>
<ellipse cx="591.7" cy="350.3" rx="1.2" ry="0.7" fill="#889e1c" opacity=".8"/>
<ellipse cx="644.2" cy="406.6" rx="3.4" ry="2.1" fill="#2f7f1e" opacity=".8"/>
<ellipse cx="504.0" cy="409.8" rx="3.2" ry="2.0" fill="#2f7f1e" opacity=".8"/>
<ellipse cx="456.6" cy="372.1" rx="1.9" ry="1.2" fill="#5e7e16" opacity=".8"/>
<ellipse cx="665.1" cy="411.7" rx="5.4" ry="3.5" fill="#2f7f1e" opacity=".8"/>
<ellipse cx="495.5" cy="406.6" rx="4.2" ry="2.7" fill="#2f7f1e" opacity=".8"/>
<ellipse cx="644.0" cy="357.1" rx="1.7" ry="1.1" fill="#74971c" opacity=".8"/>
<ellipse cx="490.5" cy="355.3" rx="1.0" ry="0.6" fill="#92a21c" opacity=".8"/>
<ellipse cx="734.2" cy="337.0" rx="1.2" ry="0.8" fill="#8da01c" opacity=".8"/>
<ellipse cx="548.6" cy="395.9" rx="3.9" ry="2.5" fill="#36811d" opacity=".8"/>
<ellipse cx="453.3" cy="376.5" rx="1.8" ry="1.2" fill="#567815" opacity=".8"/>
<ellipse cx="497.8" cy="367.1" rx="1.9" ry="1.2" fill="#78991c" opacity=".8"/>
<ellipse cx="565.3" cy="394.7" rx="3.8" ry="2.4" fill="#36811d" opacity=".8"/>
<ellipse cx="448.8" cy="360.6" rx="1.1" ry="0.7" fill="#90a11c" opacity=".8"/>
<ellipse cx="669.7" cy="401.1" rx="3.6" ry="2.3" fill="#2f7f1e" opacity=".8"/>
<ellipse cx="734.9" cy="371.6" rx="2.4" ry="1.5" fill="#508a1d" opacity=".8"/>
<ellipse cx="536.1" cy="359.3" rx="1.3" ry="0.8" fill="#698516" opacity=".8"/>
<ellipse cx="722.1" cy="373.6" rx="3.3" ry="2.1" fill="#4d891d" opacity=".8"/>
<ellipse cx="510.5" cy="372.4" rx="2.3" ry="1.5" fill="#537615" opacity=".8"/>
<ellipse cx="557.8" cy="356.2" rx="1.4" ry="0.9" fill="#839c1c" opacity=".8"/>
<ellipse cx="725.7" cy="340.3" rx="1.3" ry="0.8" fill="#889e1c" opacity=".8"/>
<ellipse cx="693.1" cy="387.8" rx="3.5" ry="2.2" fill="#36811d" opacity=".8"/>
<ellipse cx="537.1" cy="363.7" rx="1.8" ry="1.2" fill="#78991c" opacity=".8"/>
<ellipse cx="499.2" cy="392.0" rx="2.6" ry="1.7" fill="#45871d" opacity=".8"/>
<ellipse cx="448.5" cy="381.2" rx="2.0" ry="1.3" fill="#4c7215" opacity=".8"/>
<ellipse cx="711.9" cy="410.6" rx="3.9" ry="2.5" fill="#2f7f1e" opacity=".8"/>
<ellipse cx="467.9" cy="376.9" rx="2.2" ry="1.4" fill="#6a941c" opacity=".8"/>
<ellipse cx="510.6" cy="368.9" rx="1.9" ry="1.2" fill="#72971c" opacity=".8"/>
<ellipse cx="669.9" cy="395.8" rx="4.0" ry="2.5" fill="#2f7f1e" opacity=".8"/>
<ellipse cx="698.7" cy="348.2" rx="1.6" ry="1.0" fill="#7d9a1c" opacity=".8"/>
<ellipse cx="666.8" cy="345.1" rx="1.2" ry="0.8" fill="#879e1c" opacity=".8"/>
<ellipse cx="485.5" cy="402.5" rx="3.6" ry="2.3" fill="#31801d" opacity=".8"/>
<ellipse cx="560.8" cy="411.3" rx="4.2" ry="2.7" fill="#2f7f1e" opacity=".8"/>
<ellipse cx="688.6" cy="376.6" rx="3.4" ry="2.2" fill="#4b891d" opacity=".8"/>
<ellipse cx="585.2" cy="394.8" rx="4.0" ry="2.5" fill="#1c5112" opacity=".8"/>
<ellipse cx="450.5" cy="367.9" rx="1.3" ry="0.8" fill="#809c1c" opacity=".8"/>
<ellipse cx="739.6" cy="368.3" rx="3.0" ry="1.9" fill="#558c1d" opacity=".8"/>
<ellipse cx="706.5" cy="358.6" rx="1.8" ry="1.2" fill="#527515" opacity=".8"/>
<ellipse cx="731.2" cy="336.5" rx="1.1" ry="0.7" fill="#8ea11c" opacity=".8"/>
<ellipse cx="505.5" cy="366.7" rx="1.5" ry="0.9" fill="#78991c" opacity=".8"/>
<ellipse cx="517.0" cy="380.0" rx="2.6" ry="1.6" fill="#5a8e1d" opacity=".8"/>
<ellipse cx="441.5" cy="370.1" rx="1.6" ry="1.0" fill="#7d9b1c" opacity=".8"/>
<ellipse cx="534.8" cy="356.1" rx="1.3" ry="0.9" fill="#879e1c" opacity=".8"/>
<ellipse cx="457.6" cy="360.6" rx="1.1" ry="0.7" fill="#8fa11c" opacity=".8"/>
<ellipse cx="636.1" cy="343.0" rx="1.0" ry="0.7" fill="#8fa11c" opacity=".8"/>
<ellipse cx="565.0" cy="357.2" rx="1.4" ry="0.9" fill="#688416" opacity=".8"/>
<ellipse cx="534.8" cy="376.7" rx="2.2" ry="1.4" fill="#5e8f1d" opacity=".8"/>
<ellipse cx="705.9" cy="411.6" rx="4.1" ry="2.6" fill="#2f7f1e" opacity=".8"/>
<ellipse cx="663.7" cy="345.5" rx="1.2" ry="0.7" fill="#6e8917" opacity=".8"/>
<ellipse cx="569.4" cy="395.3" rx="3.2" ry="2.1" fill="#1d5212" opacity=".8"/>
<ellipse cx="580.9" cy="350.2" rx="1.1" ry="0.7" fill="#8a9f1c" opacity=".8"/>
<ellipse cx="636.6" cy="402.6" rx="3.1" ry="2.0" fill="#2f7f1e" opacity=".8"/>
<ellipse cx="553.0" cy="371.3" rx="1.8" ry="1.2" fill="#66921c" opacity=".8"/>
<ellipse cx="599.6" cy="404.6" rx="3.1" ry="2.0" fill="#2f7f1e" opacity=".8"/>
<ellipse cx="687.5" cy="408.3" rx="3.6" ry="2.3" fill="#2f7f1e" opacity=".8"/>
<ellipse cx="730.4" cy="409.2" rx="4.4" ry="2.8" fill="#2f7f1e" opacity=".8"/>
<ellipse cx="725.1" cy="353.0" rx="2.1" ry="1.3" fill="#71961c" opacity=".8"/>
<ellipse cx="693.6" cy="341.4" rx="1.3" ry="0.8" fill="#8a9f1c" opacity=".8"/>
<ellipse cx="563.4" cy="397.7" rx="4.1" ry="2.6" fill="#317f1d" opacity=".8"/>
<ellipse cx="505.6" cy="368.4" rx="1.8" ry="1.1" fill="#74971c" opacity=".8"/>
<ellipse cx="476.1" cy="363.6" rx="1.4" ry="0.9" fill="#6c8716" opacity=".8"/>
<ellipse cx="450.7" cy="381.7" rx="2.4" ry="1.5" fill="#63911c" opacity=".8"/>
<ellipse cx="697.8" cy="339.3" rx="1.1" ry="0.7" fill="#8da01c" opacity=".8"/>
<ellipse cx="632.4" cy="353.3" rx="1.5" ry="1.0" fill="#7c9a1c" opacity=".8"/>
<ellipse cx="570.0" cy="381.7" rx="2.6" ry="1.7" fill="#4f8a1d" opacity=".8"/>
<ellipse cx="445.2" cy="385.4" rx="2.4" ry="1.5" fill="#5c8f1d" opacity=".8"/>
<ellipse cx="674.7" cy="389.0" rx="3.3" ry="2.1" fill="#36811d" opacity=".8"/>
<ellipse cx="584.7" cy="347.9" rx="1.0" ry="0.7" fill="#8ea11c" opacity=".8"/>
<ellipse cx="466.4" cy="373.8" rx="1.9" ry="1.2" fill="#71961c" opacity=".8"/>
<ellipse cx="635.3" cy="342.7" rx="1.1" ry="0.7" fill="#788f17" opacity=".8"/>
<ellipse cx="596.6" cy="345.3" rx="1.0" ry="0.6" fill="#91a21c" opacity=".8"/>
<ellipse cx="732.8" cy="337.6" rx="1.2" ry="0.8" fill="#748c17" opacity=".8"/>
<ellipse cx="664.9" cy="392.6" rx="3.0" ry="1.9" fill="#184e12" opacity=".8"/>
<ellipse cx="590.5" cy="407.7" rx="4.9" ry="3.1" fill="#2f7f1e" opacity=".8"/>
<ellipse cx="682.4" cy="404.4" rx="3.2" ry="2.0" fill="#2f7f1e" opacity=".8"/>
<ellipse cx="672.4" cy="342.8" rx="1.3" ry="0.8" fill="#8a9f1c" opacity=".8"/>
<ellipse cx="690.8" cy="340.8" rx="1.2" ry="0.7" fill="#738c17" opacity=".8"/>
<ellipse cx="502.6" cy="361.8" rx="1.4" ry="0.9" fill="#829c1c" opacity=".8"/>
<ellipse cx="449.4" cy="363.8" rx="1.1" ry="0.7" fill="#728b17" opacity=".8"/>
<ellipse cx="648.7" cy="401.0" rx="3.2" ry="2.0" fill="#174e12" opacity=".8"/>
<ellipse cx="473.7" cy="378.3" rx="2.2" ry="1.4" fill="#66921c" opacity=".8"/>
<ellipse cx="708.6" cy="367.1" rx="2.5" ry="1.6" fill="#426b14" opacity=".8"/>
<ellipse cx="470.4" cy="411.4" rx="4.2" ry="2.6" fill="#2f7f1e" opacity=".8"/>
<ellipse cx="685.3" cy="347.3" rx="1.6" ry="1.0" fill="#809c1c" opacity=".8"/>
<ellipse cx="549.7" cy="391.1" rx="3.0" ry="1.9" fill="#3f851d" opacity=".8"/>
<ellipse cx="668.5" cy="339.2" rx="1.0" ry="0.7" fill="#91a21c" opacity=".8"/>
<ellipse cx="636.2" cy="410.3" rx="4.5" ry="2.9" fill="#2f7f1e" opacity=".8"/>
<ellipse cx="534.9" cy="350.5" rx="1.0" ry="0.6" fill="#92a21c" opacity=".8"/>
<ellipse cx="629.0" cy="361.6" rx="1.9" ry="1.2" fill="#557815" opacity=".8"/>
<ellipse cx="478.9" cy="362.5" rx="1.4" ry="0.9" fill="#869e1c" opacity=".8"/>
<ellipse cx="438.8" cy="371.5" rx="1.4" ry="0.9" fill="#7b9a1c" opacity=".8"/>
<ellipse cx="507.5" cy="379.5" rx="2.4" ry="1.6" fill="#5d8f1d" opacity=".8"/>
<ellipse cx="631.4" cy="364.5" rx="1.8" ry="1.1" fill="#507415" opacity=".8"/>
<ellipse cx="513.5" cy="356.2" rx="1.1" ry="0.7" fill="#8ca01c" opacity=".8"/>
<ellipse cx="708.1" cy="388.4" rx="3.2" ry="2.1" fill="#34801d" opacity=".8"/>
<ellipse cx="441.6" cy="387.1" rx="2.5" ry="1.6" fill="#598e1d" opacity=".8"/>
<ellipse cx="638.1" cy="361.9" rx="2.3" ry="1.5" fill="#6c941c" opacity=".8"/>
<ellipse cx="515.0" cy="403.6" rx="2.8" ry="1.8" fill="#2f7f1e" opacity=".8"/>
<ellipse cx="563.9" cy="355.0" rx="1.2" ry="0.8" fill="#6c8716" opacity=".8"/>
<ellipse cx="441.8" cy="381.5" rx="2.5" ry="1.6" fill="#65921c" opacity=".8"/>
<ellipse cx="499.9" cy="381.6" rx="2.4" ry="1.5" fill="#5a8e1d" opacity=".8"/>
<ellipse cx="690.1" cy="342.3" rx="1.2" ry="0.8" fill="#899f1c" opacity=".8"/>
<ellipse cx="453.0" cy="403.5" rx="3.9" ry="2.5" fill="#34801d" opacity=".8"/>
<ellipse cx="440.0" cy="400.5" rx="3.6" ry="2.3" fill="#3c831d" opacity=".8"/>
<ellipse cx="667.9" cy="360.8" rx="1.8" ry="1.2" fill="#6a941c" opacity=".8"/>
<ellipse cx="510.0" cy="353.6" rx="1.0" ry="0.6" fill="#92a21c" opacity=".8"/>
<ellipse cx="653.5" cy="395.9" rx="4.0" ry="2.6" fill="#2f7f1e" opacity=".8"/>
<ellipse cx="609.7" cy="363.1" rx="2.1" ry="1.4" fill="#6d951c" opacity=".8"/>
<ellipse cx="520.2" cy="382.9" rx="3.1" ry="2.0" fill="#548c1d" opacity=".8"/>
<ellipse cx="710.8" cy="335.4" rx="1.0" ry="0.6" fill="#93a21c" opacity=".8"/>
<ellipse cx="668.6" cy="406.0" rx="4.7" ry="3.0" fill="#2f7f1e" opacity=".8"/>
<ellipse cx="710.9" cy="349.7" rx="1.5" ry="1.0" fill="#618016" opacity=".8"/>
<ellipse cx="633.5" cy="382.0" rx="3.2" ry="2.0" fill="#2f5e13" opacity=".8"/>
<ellipse cx="583.5" cy="396.7" rx="3.8" ry="2.4" fill="#184f12" opacity=".8"/>
<ellipse cx="573.5" cy="386.9" rx="3.1" ry="2.0" fill="#44861d" opacity=".8"/>
<ellipse cx="503.7" cy="382.4" rx="2.0" ry="1.3" fill="#406914" opacity=".8"/>
<ellipse cx="482.8" cy="356.4" rx="1.0" ry="0.6" fill="#7a9017" opacity=".8"/>
<ellipse cx="544.9" cy="352.8" rx="1.1" ry="0.7" fill="#8ca01c" opacity=".8"/>
<ellipse cx="652.7" cy="376.2" rx="2.9" ry="1.9" fill="#4f8a1d" opacity=".8"/>
<ellipse cx="458.4" cy="383.0" rx="2.2" ry="1.4" fill="#476e14" opacity=".8"/>
<ellipse cx="692.1" cy="400.1" rx="3.0" ry="1.9" fill="#174e12" opacity=".8"/>
<ellipse cx="721.5" cy="405.6" rx="3.3" ry="2.1" fill="#2f7f1e" opacity=".8"/>
<ellipse cx="472.7" cy="357.6" rx="1.0" ry="0.7" fill="#7a9017" opacity=".8"/>
<ellipse cx="634.6" cy="394.2" rx="3.7" ry="2.4" fill="#307f1d" opacity=".8"/>
<ellipse cx="469.0" cy="359.3" rx="1.1" ry="0.7" fill="#8fa11c" opacity=".8"/>
<ellipse cx="536.9" cy="367.3" rx="1.5" ry="1.0" fill="#71961c" opacity=".8"/>
<ellipse cx="525.6" cy="388.1" rx="2.7" ry="1.7" fill="#49881d" opacity=".8"/>
<ellipse cx="736.8" cy="361.5" rx="2.6" ry="1.6" fill="#61911d" opacity=".8"/>
<ellipse cx="447.6" cy="373.7" rx="1.7" ry="1.1" fill="#5d7d16" opacity=".8"/>
<ellipse cx="545.5" cy="386.4" rx="2.9" ry="1.9" fill="#49881d" opacity=".8"/>
<ellipse cx="705.3" cy="337.8" rx="1.1" ry="0.7" fill="#8fa11c" opacity=".8"/>
<ellipse cx="438.4" cy="365.4" rx="1.3" ry="0.8" fill="#708a17" opacity=".8"/>
<ellipse cx="439.4" cy="378.3" rx="2.0" ry="1.2" fill="#547715" opacity=".8"/>
<ellipse cx="495.2" cy="374.7" rx="1.9" ry="1.2" fill="#517515" opacity=".8"/>
<ellipse cx="518.8" cy="407.0" rx="3.4" ry="2.2" fill="#2f7f1e" opacity=".8"/>
<ellipse cx="654.8" cy="365.0" rx="1.8" ry="1.2" fill="#64911c" opacity=".8"/>
<ellipse cx="463.1" cy="395.9" rx="3.3" ry="2.1" fill="#2b5b13" opacity=".8"/>
<ellipse cx="632.7" cy="356.3" rx="1.6" ry="1.0" fill="#77981c" opacity=".8"/>
<ellipse cx="714.0" cy="337.0" rx="1.1" ry="0.7" fill="#8fa11c" opacity=".8"/>
<ellipse cx="501.9" cy="361.8" rx="1.5" ry="1.0" fill="#829c1c" opacity=".8"/>
<ellipse cx="555.6" cy="401.3" rx="3.2" ry="2.0" fill="#2f7f1e" opacity=".8"/>
<ellipse cx="602.8" cy="388.5" rx="3.5" ry="2.3" fill="#3e841d" opacity=".8"/>
<ellipse cx="546.0" cy="361.0" rx="1.4" ry="0.9" fill="#638116" opacity=".8"/>
<ellipse cx="643.3" cy="386.2" rx="2.7" ry="1.7" fill="#3e841d" opacity=".8"/>
<ellipse cx="677.8" cy="370.5" rx="2.1" ry="1.3" fill="#578d1d" opacity=".8"/>
<ellipse cx="712.4" cy="344.1" rx="1.3" ry="0.8" fill="#839d1c" opacity=".8"/>
<ellipse cx="656.0" cy="395.7" rx="3.0" ry="1.9" fill="#2f7f1e" opacity=".8"/>
<ellipse cx="514.8" cy="363.7" rx="1.6" ry="1.0" fill="#7c9a1c" opacity=".8"/>
<ellipse cx="539.7" cy="355.1" rx="1.4" ry="0.9" fill="#889e1c" opacity=".8"/>
<ellipse cx="469.6" cy="409.0" rx="3.0" ry="1.9" fill="#2f7f1e" opacity=".8"/>
<ellipse cx="743.0" cy="388.9" rx="3.9" ry="2.5" fill="#307f1d" opacity=".8"/>
<ellipse cx="498.8" cy="383.7" rx="2.1" ry="1.3" fill="#568d1d" opacity=".8"/>
<ellipse cx="558.4" cy="348.5" rx="1.0" ry="0.6" fill="#7a9017" opacity=".8"/>
<ellipse cx="653.0" cy="365.3" rx="2.3" ry="1.5" fill="#63911c" opacity=".8"/>
<ellipse cx="482.0" cy="382.4" rx="2.3" ry="1.5" fill="#5c8f1d" opacity=".8"/>
<ellipse cx="719.5" cy="356.5" rx="2.0" ry="1.3" fill="#6c941c" opacity=".8"/>
<ellipse cx="568.6" cy="354.2" rx="1.4" ry="0.9" fill="#6d8816" opacity=".8"/>
<ellipse cx="678.0" cy="381.2" rx="3.5" ry="2.2" fill="#43861d" opacity=".8"/>
<ellipse cx="636.9" cy="362.7" rx="1.9" ry="1.2" fill="#6a941c" opacity=".8"/>
<ellipse cx="468.3" cy="372.5" rx="2.0" ry="1.2" fill="#73971c" opacity=".8"/>
<ellipse cx="633.2" cy="350.1" rx="1.4" ry="0.9" fill="#829c1c" opacity=".8"/>
<ellipse cx="630.7" cy="359.9" rx="2.0" ry="1.3" fill="#587a15" opacity=".8"/>
<ellipse cx="494.7" cy="385.1" rx="2.9" ry="1.8" fill="#548c1d" opacity=".8"/>
<ellipse cx="589.9" cy="409.5" rx="3.1" ry="2.0" fill="#2f7f1e" opacity=".8"/>
<ellipse cx="487.9" cy="394.6" rx="3.7" ry="2.4" fill="#41851d" opacity=".8"/>
<ellipse cx="469.3" cy="381.3" rx="2.3" ry="1.5" fill="#60901d" opacity=".8"/>
<ellipse cx="596.8" cy="379.0" rx="3.1" ry="1.9" fill="#518b1d" opacity=".8"/>
<ellipse cx="565.2" cy="407.0" rx="3.4" ry="2.1" fill="#2f7f1e" opacity=".8"/>
<ellipse cx="559.7" cy="390.6" rx="2.6" ry="1.6" fill="#275912" opacity=".8"/>
<ellipse cx="548.2" cy="350.0" rx="1.0" ry="0.6" fill="#91a11c" opacity=".8"/>
<ellipse cx="442.1" cy="374.4" rx="1.7" ry="1.1" fill="#74971c" opacity=".8"/>
<ellipse cx="547.2" cy="357.8" rx="1.3" ry="0.8" fill="#829c1c" opacity=".8"/>
<ellipse cx="729.4" cy="363.8" rx="2.1" ry="1.3" fill="#466d14" opacity=".8"/>
<ellipse cx="559.5" cy="354.2" rx="1.2" ry="0.8" fill="#6e8917" opacity=".8"/>
<ellipse cx="689.0" cy="374.8" rx="2.7" ry="1.7" fill="#4e8a1d" opacity=".8"/>
<ellipse cx="508.1" cy="408.8" rx="3.6" ry="2.3" fill="#2f7f1e" opacity=".8"/>
<ellipse cx="691.8" cy="392.2" rx="3.5" ry="2.2" fill="#2f7f1e" opacity=".8"/>
<ellipse cx="608.0" cy="346.5" rx="1.2" ry="0.8" fill="#8da01c" opacity=".8"/>
<ellipse cx="701.7" cy="346.5" rx="1.4" ry="0.9" fill="#809b1c" opacity=".8"/>
<ellipse cx="570.1" cy="352.2" rx="1.1" ry="0.7" fill="#889f1c" opacity=".8"/>
<ellipse cx="525.2" cy="358.8" rx="1.3" ry="0.8" fill="#849d1c" opacity=".8"/>
<ellipse cx="570.8" cy="380.0" rx="2.8" ry="1.8" fill="#528b1d" opacity=".8"/>
<ellipse cx="725.9" cy="395.6" rx="2.9" ry="1.9" fill="#174e12" opacity=".8"/>
<ellipse cx="718.8" cy="388.4" rx="2.8" ry="1.8" fill="#1b5112" opacity=".8"/>
<ellipse cx="634.3" cy="341.3" rx="0.9" ry="0.6" fill="#7b9117" opacity=".8"/>
<ellipse cx="641.3" cy="349.5" rx="1.3" ry="0.8" fill="#829c1c" opacity=".8"/>
<ellipse cx="510.4" cy="393.4" rx="2.9" ry="1.8" fill="#40851d" opacity=".8"/>
<ellipse cx="718.3" cy="389.2" rx="2.9" ry="1.8" fill="#1a5012" opacity=".8"/>
<ellipse cx="626.6" cy="390.3" rx="3.6" ry="2.3" fill="#205412" opacity=".8"/>
<ellipse cx="682.3" cy="394.7" rx="3.1" ry="2.0" fill="#2f7f1e" opacity=".8"/>
<ellipse cx="602.5" cy="387.4" rx="3.0" ry="1.9" fill="#285913" opacity=".8"/>
<ellipse cx="610.1" cy="352.6" rx="1.3" ry="0.8" fill="#819c1c" opacity=".8"/>
<ellipse cx="590.9" cy="345.9" rx="1.0" ry="0.7" fill="#91a11c" opacity=".8"/>
<ellipse cx="590.3" cy="368.6" rx="2.2" ry="1.4" fill="#4d7315" opacity=".8"/>
<ellipse cx="440.0" cy="400.2" rx="3.1" ry="2.0" fill="#3d841d" opacity=".8"/>
<ellipse cx="644.2" cy="395.6" rx="3.4" ry="2.1" fill="#2f7f1e" opacity=".8"/>
<ellipse cx="735.8" cy="335.1" rx="1.1" ry="0.7" fill="#90a11c" opacity=".8"/>
<ellipse cx="446.8" cy="384.7" rx="2.5" ry="1.6" fill="#456d14" opacity=".8"/>
<ellipse cx="540.4" cy="410.3" rx="4.1" ry="2.6" fill="#2f7f1e" opacity=".8"/>
<ellipse cx="716.2" cy="335.4" rx="1.0" ry="0.6" fill="#92a21c" opacity=".8"/>
<ellipse cx="543.0" cy="399.5" rx="3.3" ry="2.1" fill="#307f1d" opacity=".8"/>
<ellipse cx="600.9" cy="390.0" rx="2.8" ry="1.8" fill="#3b831d" opacity=".8"/>
<ellipse cx="568.9" cy="373.8" rx="2.6" ry="1.7" fill="#5e901d" opacity=".8"/>
<ellipse cx="694.6" cy="355.8" rx="1.9" ry="1.2" fill="#70961c" opacity=".8"/>
<ellipse cx="595.0" cy="409.5" rx="4.5" ry="2.9" fill="#174e12" opacity=".8"/>
<ellipse cx="540.6" cy="361.0" rx="1.5" ry="0.9" fill="#7c9a1c" opacity=".8"/>
<ellipse cx="634.8" cy="390.3" rx="2.6" ry="1.6" fill="#37811d" opacity=".8"/>
<ellipse cx="712.5" cy="366.1" rx="1.9" ry="1.2" fill="#5b8e1d" opacity=".8"/>
<ellipse cx="439.9" cy="364.8" rx="1.3" ry="0.8" fill="#899f1c" opacity=".8"/>
<ellipse cx="642.0" cy="390.6" rx="4.0" ry="2.6" fill="#36811d" opacity=".8"/>
<ellipse cx="629.2" cy="376.5" rx="2.9" ry="1.8" fill="#518b1d" opacity=".8"/>
<ellipse cx="649.1" cy="347.0" rx="1.4" ry="0.9" fill="#869e1c" opacity=".8"/>
<ellipse cx="674.4" cy="340.4" rx="1.0" ry="0.7" fill="#8ea11c" opacity=".8"/>
<ellipse cx="678.1" cy="402.6" rx="4.3" ry="2.8" fill="#2f7f1e" opacity=".8"/>
<ellipse cx="693.0" cy="389.2" rx="3.5" ry="2.2" fill="#34801d" opacity=".8"/>
<ellipse cx="531.6" cy="367.6" rx="1.7" ry="1.1" fill="#71961c" opacity=".8"/>
<ellipse cx="636.9" cy="405.1" rx="3.1" ry="2.0" fill="#2f7f1e" opacity=".8"/>
<ellipse cx="450.2" cy="361.8" rx="1.2" ry="0.7" fill="#8ea01c" opacity=".8"/>
<ellipse cx="722.8" cy="357.6" rx="1.7" ry="1.1" fill="#6a941c" opacity=".8"/>
<ellipse cx="621.5" cy="405.6" rx="5.0" ry="3.2" fill="#2f7f1e" opacity=".8"/>
<ellipse cx="565.8" cy="349.5" rx="1.1" ry="0.7" fill="#8ea11c" opacity=".8"/>
<ellipse cx="485.0" cy="356.0" rx="1.0" ry="0.6" fill="#92a21c" opacity=".8"/>
<ellipse cx="475.7" cy="409.2" rx="3.0" ry="1.9" fill="#174e12" opacity=".8"/>
<ellipse cx="478.0" cy="356.8" rx="1.0" ry="0.6" fill="#92a21c" opacity=".8"/>
<ellipse cx="665.4" cy="344.6" rx="1.1" ry="0.7" fill="#708a17" opacity=".8"/>
<ellipse cx="659.2" cy="396.8" rx="4.1" ry="2.6" fill="#2f7f1e" opacity=".8"/>
<ellipse cx="632.9" cy="383.5" rx="2.9" ry="1.9" fill="#2c5c13" opacity=".8"/>
<ellipse cx="516.8" cy="408.8" rx="4.4" ry="2.8" fill="#2f7f1e" opacity=".8"/>
<ellipse cx="442.6" cy="387.5" rx="2.8" ry="1.8" fill="#588d1d" opacity=".8"/>
<ellipse cx="534.4" cy="388.8" rx="2.5" ry="1.6" fill="#2e5d13" opacity=".8"/>
<ellipse cx="588.8" cy="346.1" rx="1.0" ry="0.6" fill="#91a11c" opacity=".8"/>
<ellipse cx="574.0" cy="383.0" rx="2.3" ry="1.5" fill="#346113" opacity=".8"/>
<ellipse cx="550.6" cy="381.6" rx="2.8" ry="1.8" fill="#528b1d" opacity=".8"/>
<ellipse cx="557.6" cy="392.7" rx="3.9" ry="2.5" fill="#235612" opacity=".8"/>
<ellipse cx="613.7" cy="353.8" rx="1.3" ry="0.8" fill="#668316" opacity=".8"/>
<ellipse cx="656.0" cy="394.0" rx="3.3" ry="2.1" fill="#2f7f1e" opacity=".8"/>
<ellipse cx="741.0" cy="392.9" rx="3.9" ry="2.5" fill="#2f7f1e" opacity=".8"/>
<ellipse cx="570.9" cy="401.4" rx="3.5" ry="2.2" fill="#2f7f1e" opacity=".8"/>
<ellipse cx="624.6" cy="401.4" rx="4.4" ry="2.8" fill="#2f7f1e" opacity=".8"/>
<ellipse cx="438.5" cy="367.6" rx="1.3" ry="0.9" fill="#839d1c" opacity=".8"/>
<ellipse cx="691.0" cy="399.7" rx="3.0" ry="1.9" fill="#174e12" opacity=".8"/>
<ellipse cx="689.6" cy="397.5" rx="3.9" ry="2.5" fill="#2f7f1e" opacity=".8"/>
<ellipse cx="701.9" cy="391.1" rx="3.8" ry="2.4" fill="#184e12" opacity=".8"/>
<ellipse cx="545.5" cy="350.9" rx="1.1" ry="0.7" fill="#778f17" opacity=".8"/>
<ellipse cx="500.1" cy="391.8" rx="3.6" ry="2.3" fill="#45871d" opacity=".8"/>
<ellipse cx="626.1" cy="381.0" rx="2.8" ry="1.8" fill="#49881d" opacity=".8"/>
<ellipse cx="517.0" cy="391.2" rx="3.4" ry="2.2" fill="#44861d" opacity=".8"/>
<ellipse cx="465.2" cy="397.1" rx="3.5" ry="2.2" fill="#40851d" opacity=".8"/>
<ellipse cx="617.7" cy="401.5" rx="4.6" ry="2.9" fill="#2f7f1e" opacity=".8"/>
<ellipse cx="585.7" cy="375.6" rx="2.1" ry="1.4" fill="#598e1d" opacity=".8"/>
<ellipse cx="494.0" cy="388.4" rx="2.6" ry="1.6" fill="#4d891d" opacity=".8"/>
<ellipse cx="562.8" cy="371.6" rx="1.9" ry="1.2" fill="#64911c" opacity=".8"/>
<ellipse cx="747.1" cy="350.7" rx="1.6" ry="1.0" fill="#73971c" opacity=".8"/>
<ellipse cx="682.1" cy="342.0" rx="1.2" ry="0.8" fill="#8a9f1c" opacity=".8"/>
<ellipse cx="599.0" cy="344.4" rx="1.0" ry="0.6" fill="#7a9117" opacity=".8"/>
<ellipse cx="706.5" cy="361.5" rx="2.2" ry="1.4" fill="#64921c" opacity=".8"/>
<ellipse cx="679.5" cy="358.3" rx="2.3" ry="1.4" fill="#557815" opacity=".8"/>
<ellipse cx="691.8" cy="407.9" rx="3.7" ry="2.4" fill="#2f7f1e" opacity=".8"/>
<ellipse cx="500.3" cy="358.6" rx="1.1" ry="0.7" fill="#899f1c" opacity=".8"/>
<ellipse cx="610.8" cy="399.1" rx="3.6" ry="2.3" fill="#174e12" opacity=".8"/>
<ellipse cx="720.1" cy="335.9" rx="1.0" ry="0.7" fill="#91a11c" opacity=".8"/>
<ellipse cx="475.2" cy="408.7" rx="3.3" ry="2.1" fill="#2f7f1e" opacity=".8"/>
<ellipse cx="636.6" cy="407.4" rx="4.5" ry="2.9" fill="#2f7f1e" opacity=".8"/>
<ellipse cx="577.0" cy="350.5" rx="1.3" ry="0.8" fill="#738b17" opacity=".8"/>
<ellipse cx="506.7" cy="353.9" rx="1.0" ry="0.6" fill="#92a21c" opacity=".8"/>
<ellipse cx="717.9" cy="401.2" rx="4.7" ry="3.0" fill="#2f7f1e" opacity=".8"/>
<ellipse cx="681.8" cy="382.0" rx="3.3" ry="2.1" fill="#2a5a13" opacity=".8"/>
<ellipse cx="455.3" cy="362.1" rx="1.2" ry="0.8" fill="#748c17" opacity=".8"/>
<ellipse cx="647.8" cy="351.8" rx="1.6" ry="1.0" fill="#658216" opacity=".8"/>
<ellipse cx="470.7" cy="367.5" rx="1.4" ry="0.9" fill="#7d9a1c" opacity=".8"/>
<ellipse cx="587.2" cy="349.9" rx="1.1" ry="0.7" fill="#8a9f1c" opacity=".8"/>
<ellipse cx="648.1" cy="340.1" rx="1.0" ry="0.6" fill="#93a21c" opacity=".8"/>
<ellipse cx="449.2" cy="406.4" rx="3.1" ry="1.9" fill="#174e12" opacity=".8"/>
<ellipse cx="706.7" cy="399.6" rx="3.2" ry="2.0" fill="#2f7f1e" opacity=".8"/>
<ellipse cx="468.1" cy="406.3" rx="4.2" ry="2.7" fill="#2f7f1e" opacity=".8"/>
<ellipse cx="578.2" cy="359.2" rx="1.8" ry="1.1" fill="#79991c" opacity=".8"/>
<ellipse cx="632.7" cy="345.1" rx="1.1" ry="0.7" fill="#8ca01c" opacity=".8"/>
<ellipse cx="659.3" cy="369.1" rx="2.0" ry="1.3" fill="#446c14" opacity=".8"/>
<ellipse cx="520.6" cy="367.9" rx="1.6" ry="1.0" fill="#72971c" opacity=".8"/>
<ellipse cx="698.3" cy="350.9" rx="1.5" ry="0.9" fill="#78991c" opacity=".8"/>
<ellipse cx="536.6" cy="403.3" rx="3.0" ry="1.9" fill="#174e12" opacity=".8"/>
<ellipse cx="455.6" cy="403.9" rx="3.7" ry="2.4" fill="#33801d" opacity=".8"/>
<ellipse cx="586.0" cy="355.6" rx="1.4" ry="0.9" fill="#7f9b1c" opacity=".8"/>
<ellipse cx="550.9" cy="411.2" rx="5.2" ry="3.3" fill="#174e12" opacity=".8"/>
<ellipse cx="468.2" cy="366.2" rx="1.6" ry="1.0" fill="#809c1c" opacity=".8"/>
<ellipse cx="663.2" cy="350.5" rx="1.7" ry="1.1" fill="#7d9b1c" opacity=".8"/>
<ellipse cx="688.2" cy="351.9" rx="1.5" ry="0.9" fill="#78991c" opacity=".8"/>
<ellipse cx="696.0" cy="365.3" rx="2.0" ry="1.3" fill="#5f901d" opacity=".8"/>
<ellipse cx="720.7" cy="342.5" rx="1.4" ry="0.9" fill="#859d1c" opacity=".8"/>
<ellipse cx="493.8" cy="393.5" rx="3.3" ry="2.1" fill="#43861d" opacity=".8"/>
<ellipse cx="462.6" cy="359.7" rx="1.1" ry="0.7" fill="#8fa11c" opacity=".8"/>
<ellipse cx="522.9" cy="357.4" rx="1.3" ry="0.8" fill="#879e1c" opacity=".8"/>
<ellipse cx="689.6" cy="370.3" rx="2.2" ry="1.4" fill="#568d1d" opacity=".8"/>
<ellipse cx="665.1" cy="357.8" rx="2.0" ry="1.3" fill="#70961c" opacity=".8"/>
<ellipse cx="689.3" cy="351.4" rx="1.8" ry="1.2" fill="#607f16" opacity=".8"/>
<ellipse cx="590.8" cy="345.1" rx="1.0" ry="0.6" fill="#92a21c" opacity=".8"/>
<ellipse cx="708.3" cy="346.0" rx="1.3" ry="0.8" fill="#688416" opacity=".8"/>
<ellipse cx="551.8" cy="352.9" rx="1.2" ry="0.7" fill="#8a9f1c" opacity=".8"/>
<ellipse cx="439.4" cy="379.9" rx="2.0" ry="1.3" fill="#69931c" opacity=".8"/>
<ellipse cx="475.4" cy="390.2" rx="3.2" ry="2.0" fill="#356213" opacity=".8"/>
<ellipse cx="537.5" cy="387.3" rx="2.7" ry="1.7" fill="#315f13" opacity=".8"/>
<ellipse cx="457.0" cy="402.2" rx="4.1" ry="2.6" fill="#36811d" opacity=".8"/>
<ellipse cx="597.1" cy="370.5" rx="2.3" ry="1.5" fill="#61901d" opacity=".8"/>
<ellipse cx="737.9" cy="341.6" rx="1.2" ry="0.8" fill="#849d1c" opacity=".8"/>
<ellipse cx="515.6" cy="396.5" rx="2.5" ry="1.6" fill="#39821d" opacity=".8"/>
<ellipse cx="654.7" cy="345.7" rx="1.1" ry="0.7" fill="#879e1c" opacity=".8"/>
<ellipse cx="616.7" cy="368.9" rx="2.4" ry="1.5" fill="#61911d" opacity=".8"/>
<ellipse cx="707.6" cy="382.0" rx="2.4" ry="1.5" fill="#3f851d" opacity=".8"/>
<ellipse cx="591.0" cy="368.7" rx="2.0" ry="1.2" fill="#65921c" opacity=".8"/>
<ellipse cx="563.8" cy="350.8" rx="1.2" ry="0.7" fill="#748d17" opacity=".8"/>
<ellipse cx="483.6" cy="380.3" rx="2.5" ry="1.6" fill="#60901d" opacity=".8"/>
<ellipse cx="694.1" cy="405.0" rx="3.9" ry="2.5" fill="#2f7f1e" opacity=".8"/>
<ellipse cx="698.3" cy="365.1" rx="2.2" ry="1.4" fill="#476e14" opacity=".8"/>
<ellipse cx="678.8" cy="352.3" rx="1.5" ry="1.0" fill="#78991c" opacity=".8"/>
<ellipse cx="573.0" cy="410.2" rx="4.8" ry="3.1" fill="#174e12" opacity=".8"/>
<ellipse cx="690.7" cy="395.5" rx="2.9" ry="1.8" fill="#2f7f1e" opacity=".8"/>
<ellipse cx="734.9" cy="404.4" rx="3.6" ry="2.3" fill="#2f7f1e" opacity=".8"/>
<ellipse cx="634.1" cy="356.8" rx="1.7" ry="1.1" fill="#76981c" opacity=".8"/>
<ellipse cx="572.2" cy="370.1" rx="1.7" ry="1.1" fill="#65921c" opacity=".8"/>
<ellipse cx="738.6" cy="387.1" rx="4.2" ry="2.6" fill="#34801d" opacity=".8"/>
<ellipse cx="688.9" cy="399.4" rx="4.6" ry="3.0" fill="#2f7f1e" opacity=".8"/>
<ellipse cx="636.9" cy="350.7" rx="1.5" ry="1.0" fill="#819c1c" opacity=".8"/>
<ellipse cx="606.1" cy="404.4" rx="4.2" ry="2.7" fill="#2f7f1e" opacity=".8"/>
<ellipse cx="599.3" cy="363.6" rx="2.2" ry="1.4" fill="#6e951c" opacity=".8"/>
<ellipse cx="532.7" cy="382.7" rx="2.2" ry="1.4" fill="#538b1d" opacity=".8"/>
<ellipse cx="734.4" cy="362.5" rx="2.1" ry="1.3" fill="#60901d" opacity=".8"/>
<ellipse cx="603.5" cy="347.7" rx="1.1" ry="0.7" fill="#8ba01c" opacity=".8"/>
<ellipse cx="529.0" cy="366.9" rx="1.7" ry="1.1" fill="#73971c" opacity=".8"/>
<ellipse cx="465.2" cy="379.8" rx="2.5" ry="1.6" fill="#64921c" opacity=".8"/>
<ellipse cx="614.8" cy="379.1" rx="2.4" ry="1.5" fill="#4e8a1d" opacity=".8"/>
<ellipse cx="580.9" cy="372.7" rx="2.4" ry="1.5" fill="#5f901d" opacity=".8"/>
<ellipse cx="534.3" cy="357.9" rx="1.3" ry="0.8" fill="#849d1c" opacity=".8"/>
<ellipse cx="556.8" cy="376.8" rx="1.9" ry="1.2" fill="#5a8e1d" opacity=".8"/>
<ellipse cx="705.2" cy="344.6" rx="1.4" ry="0.9" fill="#839d1c" opacity=".8"/>
<ellipse cx="526.3" cy="410.9" rx="3.6" ry="2.3" fill="#174e12" opacity=".8"/>
<ellipse cx="487.2" cy="356.6" rx="1.1" ry="0.7" fill="#90a11c" opacity=".8"/>
<ellipse cx="457.2" cy="371.8" rx="1.7" ry="1.1" fill="#77981c" opacity=".8"/>
<ellipse cx="471.9" cy="363.2" rx="1.4" ry="0.9" fill="#869e1c" opacity=".8"/>
<ellipse cx="485.9" cy="366.8" rx="1.5" ry="1.0" fill="#7c9a1c" opacity=".8"/>
<ellipse cx="629.1" cy="396.8" rx="4.2" ry="2.7" fill="#2f7f1e" opacity=".8"/>
<ellipse cx="667.0" cy="385.6" rx="3.6" ry="2.3" fill="#3d831d" opacity=".8"/>
<ellipse cx="681.3" cy="381.9" rx="3.6" ry="2.3" fill="#42851d" opacity=".8"/>
<ellipse cx="708.0" cy="335.5" rx="1.0" ry="0.6" fill="#93a21c" opacity=".8"/>
<ellipse cx="592.3" cy="408.3" rx="4.2" ry="2.7" fill="#2f7f1e" opacity=".8"/>
<ellipse cx="680.9" cy="398.2" rx="4.0" ry="2.6" fill="#2f7f1e" opacity=".8"/>
<ellipse cx="578.2" cy="366.6" rx="2.2" ry="1.4" fill="#6b941c" opacity=".8"/>
<ellipse cx="559.1" cy="374.5" rx="2.2" ry="1.4" fill="#5f901d" opacity=".8"/>
<ellipse cx="682.0" cy="395.8" rx="3.7" ry="2.4" fill="#2f7f1e" opacity=".8"/>
<ellipse cx="495.1" cy="364.3" rx="1.3" ry="0.9" fill="#7f9b1c" opacity=".8"/>
<ellipse cx="618.3" cy="344.3" rx="1.1" ry="0.7" fill="#8fa11c" opacity=".8"/>
<ellipse cx="699.5" cy="394.3" rx="4.5" ry="2.9" fill="#2f7f1e" opacity=".8"/>
<ellipse cx="570.2" cy="403.5" rx="2.8" ry="1.8" fill="#2f7f1e" opacity=".8"/>
<ellipse cx="613.1" cy="367.2" rx="2.5" ry="1.6" fill="#4d7215" opacity=".8"/>
<ellipse cx="604.9" cy="411.8" rx="4.3" ry="2.8" fill="#2f7f1e" opacity=".8"/>
<ellipse cx="650.4" cy="357.4" rx="1.7" ry="1.1" fill="#72971c" opacity=".8"/>
<ellipse cx="546.8" cy="407.2" rx="4.3" ry="2.7" fill="#2f7f1e" opacity=".8"/>
<ellipse cx="468.7" cy="370.1" rx="1.6" ry="1.0" fill="#78991c" opacity=".8"/>
<ellipse cx="616.0" cy="399.9" rx="4.6" ry="2.9" fill="#2f7f1e" opacity=".8"/>
<ellipse cx="574.5" cy="378.8" rx="3.1" ry="2.0" fill="#548c1d" opacity=".8"/>
<ellipse cx="602.3" cy="394.1" rx="2.9" ry="1.8" fill="#33801d" opacity=".8"/>
<ellipse cx="741.3" cy="392.3" rx="3.7" ry="2.3" fill="#2f7f1e" opacity=".8"/>
<ellipse cx="715.3" cy="379.1" rx="3.4" ry="2.2" fill="#2c5c13" opacity=".8"/>
<ellipse cx="713.3" cy="356.1" rx="1.7" ry="1.1" fill="#6d951c" opacity=".8"/>
<ellipse cx="596.6" cy="368.7" rx="1.9" ry="1.2" fill="#64921c" opacity=".8"/>
<ellipse cx="633.3" cy="374.4" rx="2.4" ry="1.5" fill="#3d6714" opacity=".8"/>
<ellipse cx="635.3" cy="341.7" rx="1.0" ry="0.6" fill="#7a9017" opacity=".8"/>
<ellipse cx="533.1" cy="385.9" rx="2.2" ry="1.4" fill="#4c891d" opacity=".8"/>
<ellipse cx="699.1" cy="370.2" rx="2.7" ry="1.7" fill="#558c1d" opacity=".8"/>
<ellipse cx="592.3" cy="372.5" rx="2.1" ry="1.3" fill="#5e8f1d" opacity=".8"/>
<ellipse cx="602.8" cy="411.7" rx="4.5" ry="2.8" fill="#2f7f1e" opacity=".8"/>
<ellipse cx="475.7" cy="360.3" rx="1.2" ry="0.8" fill="#8b9f1c" opacity=".8"/>
<ellipse cx="469.0" cy="361.5" rx="1.2" ry="0.8" fill="#728b17" opacity=".8"/>
<ellipse cx="628.0" cy="392.6" rx="2.7" ry="1.7" fill="#33801d" opacity=".8"/>
<ellipse cx="676.9" cy="351.4" rx="1.7" ry="1.1" fill="#7a991c" opacity=".8"/>
<ellipse cx="490.5" cy="363.1" rx="1.3" ry="0.8" fill="#6a8616" opacity=".8"/>
<ellipse cx="618.5" cy="356.8" rx="1.6" ry="1.0" fill="#78991c" opacity=".8"/>
<ellipse cx="455.0" cy="403.6" rx="3.6" ry="2.3" fill="#1c5112" opacity=".8"/>
<ellipse cx="574.3" cy="378.5" rx="2.3" ry="1.5" fill="#558c1d" opacity=".8"/>
<ellipse cx="726.6" cy="395.7" rx="3.4" ry="2.2" fill="#174e12" opacity=".8"/>
<ellipse cx="690.9" cy="349.3" rx="1.6" ry="1.0" fill="#648216" opacity=".8"/>
<ellipse cx="591.6" cy="407.0" rx="3.5" ry="2.2" fill="#2f7f1e" opacity=".8"/>
<ellipse cx="660.7" cy="346.6" rx="1.3" ry="0.8" fill="#6d8816" opacity=".8"/>
<ellipse cx="588.2" cy="392.4" rx="2.9" ry="1.8" fill="#38821d" opacity=".8"/>
<ellipse cx="549.1" cy="354.1" rx="1.4" ry="0.9" fill="#899f1c" opacity=".8"/>
<ellipse cx="612.1" cy="345.7" rx="1.1" ry="0.7" fill="#8ea01c" opacity=".8"/>
<ellipse cx="563.0" cy="348.7" rx="1.0" ry="0.6" fill="#788f17" opacity=".8"/>
<ellipse cx="546.9" cy="356.9" rx="1.3" ry="0.8" fill="#849d1c" opacity=".8"/>
<ellipse cx="511.5" cy="353.4" rx="1.0" ry="0.6" fill="#92a21c" opacity=".8"/>
<ellipse cx="486.3" cy="389.1" rx="2.3" ry="1.4" fill="#4d891d" opacity=".8"/>
<ellipse cx="696.9" cy="339.8" rx="1.1" ry="0.7" fill="#758d17" opacity=".8"/>
<ellipse cx="687.5" cy="341.7" rx="1.2" ry="0.7" fill="#8a9f1c" opacity=".8"/>
<ellipse cx="554.8" cy="408.1" rx="3.4" ry="2.2" fill="#174e12" opacity=".8"/>
<ellipse cx="594.5" cy="351.9" rx="1.3" ry="0.8" fill="#859d1c" opacity=".8"/>
<ellipse cx="657.0" cy="349.0" rx="1.6" ry="1.0" fill="#819c1c" opacity=".8"/>
<ellipse cx="552.1" cy="356.5" rx="1.4" ry="0.9" fill="#839d1c" opacity=".8"/>
<ellipse cx="708.4" cy="338.7" rx="1.1" ry="0.7" fill="#8da01c" opacity=".8"/>
<ellipse cx="521.8" cy="392.6" rx="2.9" ry="1.9" fill="#40851d" opacity=".8"/>
<ellipse cx="614.0" cy="354.9" rx="1.5" ry="1.0" fill="#7c9a1c" opacity=".8"/>
<ellipse cx="492.9" cy="399.7" rx="3.1" ry="1.9" fill="#36811d" opacity=".8"/>
<ellipse cx="471.8" cy="380.4" rx="2.1" ry="1.3" fill="#62911d" opacity=".8"/>
<ellipse cx="530.1" cy="352.0" rx="1.0" ry="0.6" fill="#90a11c" opacity=".8"/>
<ellipse cx="477.1" cy="390.3" rx="2.5" ry="1.6" fill="#4c891d" opacity=".8"/>
<ellipse cx="719.8" cy="387.4" rx="4.0" ry="2.6" fill="#1d5212" opacity=".8"/>
<ellipse cx="479.0" cy="364.6" rx="1.2" ry="0.8" fill="#819c1c" opacity=".8"/>
<ellipse cx="643.7" cy="355.3" rx="1.6" ry="1.0" fill="#77981c" opacity=".8"/>
<ellipse cx="654.8" cy="348.5" rx="1.5" ry="1.0" fill="#829c1c" opacity=".8"/>
<ellipse cx="632.9" cy="346.7" rx="1.1" ry="0.7" fill="#718a17" opacity=".8"/>
<ellipse cx="665.6" cy="382.8" rx="2.4" ry="1.5" fill="#42851d" opacity=".8"/>
<ellipse cx="488.2" cy="360.5" rx="1.2" ry="0.8" fill="#889e1c" opacity=".8"/>
<ellipse cx="450.2" cy="368.7" rx="1.5" ry="1.0" fill="#7f9b1c" opacity=".8"/>
<ellipse cx="698.2" cy="368.8" rx="2.7" ry="1.7" fill="#588d1d" opacity=".8"/>
<ellipse cx="572.8" cy="383.7" rx="2.6" ry="1.7" fill="#4b891d" opacity=".8"/>
<ellipse cx="696.6" cy="388.1" rx="3.0" ry="1.9" fill="#35811d" opacity=".8"/>
<ellipse cx="702.8" cy="371.9" rx="2.1" ry="1.3" fill="#528b1d" opacity=".8"/>
<ellipse cx="472.5" cy="395.8" rx="2.6" ry="1.7" fill="#295a13" opacity=".8"/>
<ellipse cx="670.4" cy="340.1" rx="1.1" ry="0.7" fill="#8fa11c" opacity=".8"/>
<ellipse cx="669.7" cy="393.9" rx="3.2" ry="2.0" fill="#2f7f1e" opacity=".8"/>
<ellipse cx="731.4" cy="355.4" rx="2.3" ry="1.4" fill="#6d951c" opacity=".8"/>
<ellipse cx="667.0" cy="394.1" rx="3.8" ry="2.4" fill="#2f7f1e" opacity=".8"/>
<ellipse cx="454.8" cy="390.0" rx="2.6" ry="1.6" fill="#518b1d" opacity=".8"/>
<ellipse cx="725.7" cy="337.8" rx="1.2" ry="0.7" fill="#8da01c" opacity=".8"/>
<ellipse cx="655.8" cy="391.9" rx="3.0" ry="1.9" fill="#32801d" opacity=".8"/>
<ellipse cx="738.5" cy="373.3" rx="2.8" ry="1.8" fill="#4c891d" opacity=".8"/>
<ellipse cx="456.4" cy="370.4" rx="1.6" ry="1.0" fill="#7a991c" opacity=".8"/>
<ellipse cx="534.3" cy="353.7" rx="1.2" ry="0.7" fill="#8ca01c" opacity=".8"/>
<ellipse cx="511.7" cy="360.0" rx="1.4" ry="0.9" fill="#849d1c" opacity=".8"/>
<ellipse cx="728.1" cy="350.3" rx="1.6" ry="1.0" fill="#5e7e16" opacity=".8"/>
<ellipse cx="482.0" cy="379.8" rx="2.1" ry="1.3" fill="#497014" opacity=".8"/>
<ellipse cx="608.0" cy="388.9" rx="2.7" ry="1.7" fill="#3c831d" opacity=".8"/>
<ellipse cx="623.6" cy="364.0" rx="2.2" ry="1.4" fill="#527515" opacity=".8"/>
<ellipse cx="473.5" cy="365.7" rx="1.4" ry="0.9" fill="#809c1c" opacity=".8"/>
<ellipse cx="456.7" cy="366.9" rx="1.3" ry="0.8" fill="#819c1c" opacity=".8"/>
<ellipse cx="576.9" cy="348.8" rx="1.1" ry="0.7" fill="#8ea01c" opacity=".8"/>
<ellipse cx="550.5" cy="353.2" rx="1.1" ry="0.7" fill="#8a9f1c" opacity=".8"/>
<ellipse cx="745.6" cy="384.2" rx="2.6" ry="1.7" fill="#38821d" opacity=".8"/>
<ellipse cx="741.9" cy="366.4" rx="2.1" ry="1.3" fill="#588d1d" opacity=".8"/>
<ellipse cx="572.6" cy="352.1" rx="1.3" ry="0.8" fill="#889e1c" opacity=".8"/>
<ellipse cx="723.1" cy="374.6" rx="3.0" ry="1.9" fill="#336113" opacity=".8"/>
<ellipse cx="640.3" cy="349.7" rx="1.3" ry="0.8" fill="#829c1c" opacity=".8"/>
<ellipse cx="446.6" cy="395.4" rx="3.4" ry="2.2" fill="#46871d" opacity=".8"/>
<ellipse cx="495.6" cy="383.9" rx="2.9" ry="1.8" fill="#3e6814" opacity=".8"/>
<ellipse cx="490.2" cy="394.7" rx="3.6" ry="2.3" fill="#41851d" opacity=".8"/>
<ellipse cx="539.3" cy="355.0" rx="1.3" ry="0.8" fill="#899f1c" opacity=".8"/>
<ellipse cx="552.2" cy="374.6" rx="2.2" ry="1.4" fill="#486f14" opacity=".8"/>
<ellipse cx="512.2" cy="353.4" rx="1.0" ry="0.6" fill="#91a21c" opacity=".8"/>
<ellipse cx="692.1" cy="381.3" rx="3.6" ry="2.3" fill="#2a5b13" opacity=".8"/>
<ellipse cx="591.3" cy="368.6" rx="1.9" ry="1.2" fill="#65921c" opacity=".8"/>
<ellipse cx="618.1" cy="344.1" rx="1.1" ry="0.7" fill="#90a11c" opacity=".8"/>
<ellipse cx="575.4" cy="409.1" rx="3.2" ry="2.0" fill="#2f7f1e" opacity=".8"/>
<ellipse cx="574.2" cy="352.0" rx="1.3" ry="0.8" fill="#889e1c" opacity=".8"/>
<ellipse cx="698.7" cy="396.2" rx="4.3" ry="2.7" fill="#2f7f1e" opacity=".8"/>
<ellipse cx="525.8" cy="384.0" rx="2.7" ry="1.7" fill="#518b1d" opacity=".8"/>
<ellipse cx="543.0" cy="367.8" rx="2.0" ry="1.3" fill="#577915" opacity=".8"/>
<ellipse cx="718.2" cy="339.9" rx="1.2" ry="0.7" fill="#8a9f1c" opacity=".8"/>
<ellipse cx="612.6" cy="357.2" rx="1.5" ry="1.0" fill="#78991c" opacity=".8"/>
<ellipse cx="538.3" cy="369.5" rx="2.3" ry="1.5" fill="#547715" opacity=".8"/>
<ellipse cx="706.3" cy="409.1" rx="5.4" ry="3.5" fill="#2f7f1e" opacity=".8"/>
<ellipse cx="689.5" cy="337.9" rx="1.0" ry="0.7" fill="#91a11c" opacity=".8"/>
<ellipse cx="530.1" cy="377.3" rx="2.8" ry="1.8" fill="#5e8f1d" opacity=".8"/>
<ellipse cx="638.7" cy="352.5" rx="1.5" ry="0.9" fill="#658216" opacity=".8"/>
<ellipse cx="446.6" cy="364.2" rx="1.3" ry="0.8" fill="#899f1c" opacity=".8"/>
<ellipse cx="464.4" cy="387.1" rx="2.4" ry="1.5" fill="#558c1d" opacity=".8"/>
<ellipse cx="567.1" cy="372.2" rx="2.3" ry="1.5" fill="#62911d" opacity=".8"/>
<ellipse cx="473.4" cy="361.4" rx="1.3" ry="0.8" fill="#899f1c" opacity=".8"/>
<ellipse cx="472.8" cy="401.1" rx="2.9" ry="1.9" fill="#36811d" opacity=".8"/>
<ellipse cx="602.5" cy="352.5" rx="1.4" ry="0.9" fill="#829c1c" opacity=".8"/>
<ellipse cx="508.2" cy="378.8" rx="1.9" ry="1.2" fill="#5f901d" opacity=".8"/>
<ellipse cx="620.4" cy="343.9" rx="1.0" ry="0.7" fill="#90a11c" opacity=".8"/>
<ellipse cx="574.3" cy="399.1" rx="3.7" ry="2.3" fill="#2f7f1e" opacity=".8"/>
<ellipse cx="672.6" cy="341.0" rx="1.2" ry="0.8" fill="#8ea01c" opacity=".8"/>
<ellipse cx="469.6" cy="398.7" rx="3.0" ry="1.9" fill="#3c831d" opacity=".8"/>
<ellipse cx="735.6" cy="366.7" rx="2.8" ry="1.8" fill="#588d1d" opacity=".8"/>
<ellipse cx="678.6" cy="338.7" rx="1.0" ry="0.6" fill="#91a21c" opacity=".8"/>
<ellipse cx="442.7" cy="384.0" rx="2.0" ry="1.3" fill="#5f901d" opacity=".8"/>
<ellipse cx="657.3" cy="359.5" rx="2.2" ry="1.4" fill="#6e951c" opacity=".8"/>
<ellipse cx="708.4" cy="367.8" rx="2.9" ry="1.8" fill="#416a14" opacity=".8"/>
<ellipse cx="490.1" cy="391.8" rx="2.7" ry="1.7" fill="#2f5e13" opacity=".8"/>
<ellipse cx="649.0" cy="394.0" rx="2.9" ry="1.8" fill="#2f7f1d" opacity=".8"/>
<ellipse cx="666.5" cy="406.4" rx="4.6" ry="3.0" fill="#2f7f1e" opacity=".8"/>
<ellipse cx="625.2" cy="344.1" rx="1.1" ry="0.7" fill="#778e17" opacity=".8"/>
<ellipse cx="473.0" cy="406.0" rx="3.9" ry="2.5" fill="#2f7f1e" opacity=".8"/>
<ellipse cx="497.9" cy="371.6" rx="2.1" ry="1.3" fill="#6f951c" opacity=".8"/>
<ellipse cx="473.2" cy="357.3" rx="1.0" ry="0.6" fill="#7a9017" opacity=".8"/>
<ellipse cx="495.4" cy="378.4" rx="2.0" ry="1.3" fill="#62911d" opacity=".8"/>
<ellipse cx="556.1" cy="351.8" rx="1.2" ry="0.8" fill="#8ca01c" opacity=".8"/>
<ellipse cx="651.8" cy="392.2" rx="4.2" ry="2.7" fill="#32801d" opacity=".8"/>
<ellipse cx="544.1" cy="353.2" rx="1.2" ry="0.7" fill="#738c17" opacity=".8"/>
<ellipse cx="686.1" cy="337.6" rx="1.0" ry="0.6" fill="#7a9017" opacity=".8"/>
<ellipse cx="648.6" cy="357.7" rx="1.8" ry="1.1" fill="#72971c" opacity=".8"/>
<ellipse cx="700.0" cy="354.8" rx="2.1" ry="1.3" fill="#71961c" opacity=".8"/>
<ellipse cx="461.5" cy="368.6" rx="1.4" ry="0.9" fill="#658216" opacity=".8"/>
<ellipse cx="620.7" cy="342.9" rx="1.0" ry="0.6" fill="#92a21c" opacity=".8"/>
<ellipse cx="583.0" cy="374.8" rx="2.3" ry="1.5" fill="#5b8e1d" opacity=".8"/>
<ellipse cx="439.9" cy="383.2" rx="2.1" ry="1.3" fill="#61911d" opacity=".8"/>
<ellipse cx="580.4" cy="410.7" rx="3.2" ry="2.0" fill="#2f7f1e" opacity=".8"/>
<ellipse cx="646.0" cy="350.4" rx="1.4" ry="0.9" fill="#809b1c" opacity=".8"/>
<ellipse cx="519.2" cy="377.8" rx="2.3" ry="1.5" fill="#476e14" opacity=".8"/>
<ellipse cx="745.6" cy="333.1" rx="1.0" ry="0.6" fill="#7a9117" opacity=".8"/>
<ellipse cx="708.4" cy="387.6" rx="3.6" ry="2.3" fill="#35811d" opacity=".8"/>
<ellipse cx="550.5" cy="358.3" rx="1.6" ry="1.0" fill="#688416" opacity=".8"/>
<ellipse cx="729.0" cy="377.9" rx="2.7" ry="1.7" fill="#2d5d13" opacity=".8"/>
<ellipse cx="667.3" cy="365.2" rx="2.3" ry="1.5" fill="#62911d" opacity=".8"/>
<ellipse cx="608.7" cy="361.1" rx="1.6" ry="1.0" fill="#71961c" opacity=".8"/>
<ellipse cx="538.2" cy="410.9" rx="4.0" ry="2.6" fill="#2f7f1e" opacity=".8"/>
<ellipse cx="513.5" cy="359.5" rx="1.3" ry="0.8" fill="#859d1c" opacity=".8"/>
<ellipse cx="440.2" cy="402.4" rx="3.2" ry="2.1" fill="#38821d" opacity=".8"/>
<ellipse cx="614.3" cy="354.4" rx="1.4" ry="0.9" fill="#7d9a1c" opacity=".8"/>
<ellipse cx="531.5" cy="361.3" rx="1.6" ry="1.0" fill="#7e9b1c" opacity=".8"/>
<ellipse cx="728.6" cy="349.5" rx="1.9" ry="1.2" fill="#77981c" opacity=".8"/>
<ellipse cx="462.8" cy="362.4" rx="1.2" ry="0.8" fill="#728b17" opacity=".8"/>
<ellipse cx="548.7" cy="392.0" rx="3.0" ry="1.9" fill="#265812" opacity=".8"/>
<ellipse cx="459.0" cy="376.7" rx="2.3" ry="1.4" fill="#6c941c" opacity=".8"/>
<ellipse cx="517.8" cy="352.5" rx="1.0" ry="0.6" fill="#92a21c" opacity=".8"/>
<ellipse cx="656.4" cy="346.8" rx="1.3" ry="0.8" fill="#859d1c" opacity=".8"/>
<ellipse cx="624.9" cy="398.2" rx="4.0" ry="2.5" fill="#2f7f1e" opacity=".8"/>
<ellipse cx="665.5" cy="408.0" rx="4.5" ry="2.8" fill="#2f7f1e" opacity=".8"/>
<ellipse cx="688.9" cy="398.4" rx="3.5" ry="2.2" fill="#2f7f1e" opacity=".8"/>
<ellipse cx="496.3" cy="377.2" rx="2.5" ry="1.6" fill="#64921c" opacity=".8"/>
<ellipse cx="724.1" cy="341.9" rx="1.3" ry="0.8" fill="#859d1c" opacity=".8"/>
<ellipse cx="639.2" cy="359.1" rx="2.0" ry="1.3" fill="#71961c" opacity=".8"/>
<ellipse cx="455.8" cy="373.2" rx="1.5" ry="1.0" fill="#74971c" opacity=".8"/>
<ellipse cx="541.7" cy="371.4" rx="2.2" ry="1.4" fill="#68931c" opacity=".8"/>
<ellipse cx="581.6" cy="345.9" rx="1.0" ry="0.6" fill="#92a21c" opacity=".8"/>
<ellipse cx="744.1" cy="333.8" rx="1.0" ry="0.7" fill="#91a21c" opacity=".8"/>
<ellipse cx="540.0" cy="351.7" rx="1.0" ry="0.7" fill="#8fa11c" opacity=".8"/>
<ellipse cx="675.8" cy="339.9" rx="1.1" ry="0.7" fill="#8fa11c" opacity=".8"/>
<ellipse cx="605.0" cy="374.5" rx="2.5" ry="1.6" fill="#588d1d" opacity=".8"/>
<ellipse cx="624.5" cy="355.3" rx="1.7" ry="1.1" fill="#7a991c" opacity=".8"/>
<ellipse cx="658.5" cy="387.7" rx="3.7" ry="2.4" fill="#39821d" opacity=".8"/>
<ellipse cx="677.5" cy="409.5" rx="4.2" ry="2.7" fill="#2f7f1e" opacity=".8"/>
<ellipse cx="600.2" cy="406.1" rx="3.2" ry="2.1" fill="#2f7f1e" opacity=".8"/>
<ellipse cx="585.5" cy="380.8" rx="3.1" ry="1.9" fill="#4f8a1d" opacity=".8"/>
<ellipse cx="744.8" cy="341.3" rx="1.4" ry="0.9" fill="#849d1c" opacity=".8"/>
<ellipse cx="446.7" cy="362.5" rx="1.1" ry="0.7" fill="#8da01c" opacity=".8"/>
<ellipse cx="610.1" cy="348.6" rx="1.3" ry="0.9" fill="#899f1c" opacity=".8"/>
<ellipse cx="484.3" cy="360.1" rx="1.3" ry="0.8" fill="#728b17" opacity=".8"/>
<ellipse cx="488.2" cy="355.8" rx="1.0" ry="0.7" fill="#92a21c" opacity=".8"/>
<ellipse cx="742.5" cy="360.8" rx="2.4" ry="1.5" fill="#62911d" opacity=".8"/>
<ellipse cx="686.2" cy="360.5" rx="1.9" ry="1.2" fill="#507415" opacity=".8"/>
<ellipse cx="471.4" cy="391.7" rx="2.3" ry="1.4" fill="#4a881d" opacity=".8"/>
<ellipse cx="562.6" cy="399.3" rx="2.8" ry="1.8" fill="#2f7f1e" opacity=".8"/>
<ellipse cx="565.1" cy="404.3" rx="4.7" ry="3.0" fill="#2f7f1e" opacity=".8"/>
<ellipse cx="507.5" cy="360.8" rx="1.3" ry="0.8" fill="#839d1c" opacity=".8"/>
<ellipse cx="509.7" cy="358.6" rx="1.3" ry="0.8" fill="#879e1c" opacity=".8"/>
<ellipse cx="530.5" cy="411.5" rx="3.5" ry="2.2" fill="#2f7f1e" opacity=".8"/>
<ellipse cx="486.6" cy="400.8" rx="4.0" ry="2.5" fill="#35811d" opacity=".8"/>
<ellipse cx="671.0" cy="393.3" rx="3.2" ry="2.0" fill="#2f7f1e" opacity=".8"/>
<ellipse cx="588.5" cy="401.4" rx="3.1" ry="2.0" fill="#2f7f1e" opacity=".8"/>
<ellipse cx="623.3" cy="363.4" rx="2.1" ry="1.3" fill="#537615" opacity=".8"/>
<ellipse cx="503.0" cy="402.2" rx="3.3" ry="2.1" fill="#184e12" opacity=".8"/>
<ellipse cx="705.6" cy="341.6" rx="1.3" ry="0.8" fill="#708a17" opacity=".8"/>
<ellipse cx="530.3" cy="351.2" rx="1.0" ry="0.6" fill="#7a9017" opacity=".8"/>
<ellipse cx="440.9" cy="405.3" rx="2.9" ry="1.8" fill="#32801d" opacity=".8"/>
<ellipse cx="468.2" cy="361.5" rx="1.2" ry="0.8" fill="#8a9f1c" opacity=".8"/>
<ellipse cx="543.3" cy="404.5" rx="4.2" ry="2.7" fill="#174e12" opacity=".8"/>
<ellipse cx="741.7" cy="333.4" rx="1.0" ry="0.6" fill="#7a9117" opacity=".8"/>
<ellipse cx="651.7" cy="340.3" rx="1.0" ry="0.6" fill="#92a21c" opacity=".8"/>
<ellipse cx="571.5" cy="349.0" rx="1.0" ry="0.7" fill="#768e17" opacity=".8"/>
<ellipse cx="536.1" cy="401.1" rx="2.9" ry="1.8" fill="#2f7f1e" opacity=".8"/>
<ellipse cx="480.1" cy="372.0" rx="1.6" ry="1.0" fill="#72961c" opacity=".8"/>
<ellipse cx="483.9" cy="391.5" rx="2.9" ry="1.8" fill="#48881d" opacity=".8"/>
<ellipse cx="547.6" cy="371.1" rx="2.4" ry="1.5" fill="#67931c" opacity=".8"/>
<ellipse cx="504.7" cy="409.2" rx="4.7" ry="3.0" fill="#2f7f1e" opacity=".8"/>
<ellipse cx="522.6" cy="356.3" rx="1.2" ry="0.7" fill="#899f1c" opacity=".8"/>
<ellipse cx="451.4" cy="378.6" rx="2.0" ry="1.2" fill="#6a931c" opacity=".8"/>
<ellipse cx="550.4" cy="349.0" rx="1.0" ry="0.6" fill="#92a21c" opacity=".8"/>
<ellipse cx="606.6" cy="371.4" rx="2.5" ry="1.6" fill="#466d14" opacity=".8"/>
<ellipse cx="709.0" cy="382.0" rx="3.0" ry="1.9" fill="#3f841d" opacity=".8"/>
<ellipse cx="567.9" cy="409.4" rx="3.8" ry="2.4" fill="#2f7f1e" opacity=".8"/>
<ellipse cx="565.1" cy="350.9" rx="1.2" ry="0.8" fill="#8ca01c" opacity=".8"/>
<ellipse cx="626.4" cy="404.4" rx="3.5" ry="2.2" fill="#2f7f1e" opacity=".8"/>
<ellipse cx="554.9" cy="356.0" rx="1.3" ry="0.8" fill="#849d1c" opacity=".8"/>
<ellipse cx="699.3" cy="388.8" rx="4.1" ry="2.6" fill="#34801d" opacity=".8"/>
<ellipse cx="653.2" cy="353.0" rx="1.7" ry="1.1" fill="#7a991c" opacity=".8"/>
<ellipse cx="535.8" cy="409.4" rx="3.0" ry="1.9" fill="#2f7f1e" opacity=".8"/>
<ellipse cx="702.6" cy="363.6" rx="2.3" ry="1.5" fill="#496f14" opacity=".8"/>
<ellipse cx="510.7" cy="382.5" rx="2.8" ry="1.8" fill="#578d1d" opacity=".8"/>
<ellipse cx="658.8" cy="357.2" rx="1.8" ry="1.2" fill="#72961c" opacity=".8"/>
<ellipse cx="647.9" cy="353.2" rx="1.7" ry="1.1" fill="#7a9a1c" opacity=".8"/>
<ellipse cx="507.2" cy="381.5" rx="2.2" ry="1.4" fill="#416a14" opacity=".8"/>
<ellipse cx="584.7" cy="386.3" rx="3.0" ry="1.9" fill="#44861d" opacity=".8"/>
<ellipse cx="506.6" cy="356.6" rx="1.2" ry="0.8" fill="#8ca01c" opacity=".8"/>
<ellipse cx="600.4" cy="370.1" rx="2.5" ry="1.6" fill="#61911d" opacity=".8"/>
<ellipse cx="491.4" cy="397.5" rx="3.2" ry="2.0" fill="#3b831d" opacity=".8"/>
<ellipse cx="694.5" cy="400.3" rx="4.7" ry="3.0" fill="#2f7f1e" opacity=".8"/>
<ellipse cx="556.2" cy="396.7" rx="4.0" ry="2.5" fill="#34801d" opacity=".8"/>
<ellipse cx="485.7" cy="362.9" rx="1.2" ry="0.8" fill="#849d1c" opacity=".8"/>
<ellipse cx="687.0" cy="365.2" rx="2.2" ry="1.4" fill="#60901d" opacity=".8"/>
<ellipse cx="560.6" cy="411.7" rx="4.6" ry="2.9" fill="#2f7f1e" opacity=".8"/>
<ellipse cx="586.3" cy="392.9" rx="3.7" ry="2.4" fill="#37821d" opacity=".8"/>
<ellipse cx="648.9" cy="356.0" rx="1.7" ry="1.1" fill="#75981c" opacity=".8"/>
<ellipse cx="552.9" cy="361.2" rx="1.6" ry="1.0" fill="#7a991c" opacity=".8"/>
<ellipse cx="500.3" cy="379.1" rx="1.9" ry="1.2" fill="#5f901d" opacity=".8"/>
<ellipse cx="660.6" cy="349.5" rx="1.4" ry="0.9" fill="#809b1c" opacity=".8"/>
<ellipse cx="696.6" cy="338.4" rx="1.1" ry="0.7" fill="#778f17" opacity=".8"/>
<ellipse cx="500.5" cy="370.1" rx="2.0" ry="1.3" fill="#72961c" opacity=".8"/>
<ellipse cx="553.2" cy="349.2" rx="1.0" ry="0.6" fill="#91a21c" opacity=".8"/>
<ellipse cx="658.9" cy="350.9" rx="1.5" ry="0.9" fill="#7d9b1c" opacity=".8"/>
<ellipse cx="689.4" cy="352.6" rx="1.6" ry="1.0" fill="#76981c" opacity=".8"/>
<ellipse cx="724.7" cy="340.8" rx="1.4" ry="0.9" fill="#879e1c" opacity=".8"/>
<ellipse cx="553.4" cy="383.0" rx="2.5" ry="1.6" fill="#4f8a1d" opacity=".8"/>
<ellipse cx="672.4" cy="355.4" rx="1.8" ry="1.1" fill="#73971c" opacity=".8"/>
<ellipse cx="717.4" cy="385.7" rx="2.5" ry="1.6" fill="#38821d" opacity=".8"/>
<ellipse cx="581.4" cy="366.6" rx="2.3" ry="1.4" fill="#6b941c" opacity=".8"/>
<ellipse cx="584.8" cy="401.4" rx="3.6" ry="2.3" fill="#2f7f1e" opacity=".8"/>
<ellipse cx="596.7" cy="395.0" rx="3.7" ry="2.4" fill="#32801d" opacity=".8"/>
<ellipse cx="562.5" cy="348.2" rx="1.0" ry="0.7" fill="#92a21c" opacity=".8"/>
<ellipse cx="676.5" cy="387.9" rx="2.7" ry="1.7" fill="#37821d" opacity=".8"/>
<ellipse cx="461.9" cy="398.0" rx="2.5" ry="1.6" fill="#3e841d" opacity=".8"/>
<ellipse cx="671.5" cy="369.5" rx="2.0" ry="1.3" fill="#5a8e1d" opacity=".8"/>
<ellipse cx="658.4" cy="363.6" rx="1.8" ry="1.1" fill="#66921c" opacity=".8"/>
<ellipse cx="567.6" cy="376.1" rx="2.9" ry="1.9" fill="#426b14" opacity=".8"/>
<ellipse cx="708.3" cy="339.7" rx="1.1" ry="0.7" fill="#8ba01c" opacity=".8"/>
<ellipse cx="439.9" cy="411.1" rx="3.3" ry="2.1" fill="#2f7f1e" opacity=".8"/>
<ellipse cx="535.0" cy="358.4" rx="1.5" ry="1.0" fill="#839c1c" opacity=".8"/>
<ellipse cx="596.4" cy="362.9" rx="1.6" ry="1.0" fill="#70961c" opacity=".8"/>
<ellipse cx="706.7" cy="390.5" rx="4.1" ry="2.6" fill="#307f1d" opacity=".8"/>
<ellipse cx="500.6" cy="354.8" rx="1.0" ry="0.7" fill="#91a21c" opacity=".8"/>
<ellipse cx="581.9" cy="368.4" rx="2.2" ry="1.4" fill="#67931c" opacity=".8"/>
<ellipse cx="686.4" cy="343.8" rx="1.4" ry="0.9" fill="#879e1c" opacity=".8"/>
<ellipse cx="453.9" cy="368.6" rx="1.5" ry="1.0" fill="#7e9b1c" opacity=".8"/>
<ellipse cx="613.1" cy="355.7" rx="1.5" ry="0.9" fill="#638116" opacity=".8"/>
<ellipse cx="528.4" cy="387.6" rx="3.3" ry="2.1" fill="#49881d" opacity=".8"/>
<ellipse cx="578.9" cy="405.7" rx="3.8" ry="2.4" fill="#174e12" opacity=".8"/>
<ellipse cx="455.9" cy="374.2" rx="1.9" ry="1.2" fill="#72971c" opacity=".8"/>
<ellipse cx="705.4" cy="337.1" rx="1.1" ry="0.7" fill="#90a11c" opacity=".8"/>
<ellipse cx="723.9" cy="367.0" rx="2.8" ry="1.8" fill="#598e1d" opacity=".8"/>
<ellipse cx="646.9" cy="380.0" rx="2.6" ry="1.7" fill="#49881d" opacity=".8"/>
<ellipse cx="697.9" cy="340.4" rx="1.2" ry="0.8" fill="#8ba01c" opacity=".8"/>
<ellipse cx="469.3" cy="359.2" rx="1.1" ry="0.7" fill="#778e17" opacity=".8"/>
<ellipse cx="566.6" cy="381.9" rx="2.4" ry="1.5" fill="#376313" opacity=".8"/>
<ellipse cx="650.6" cy="344.2" rx="1.1" ry="0.7" fill="#8b9f1c" opacity=".8"/>
<ellipse cx="450.9" cy="399.7" rx="2.9" ry="1.8" fill="#3c831d" opacity=".8"/>
<ellipse cx="618.4" cy="355.0" rx="1.6" ry="1.0" fill="#7b9a1c" opacity=".8"/>
<ellipse cx="720.7" cy="348.9" rx="1.8" ry="1.1" fill="#79991c" opacity=".8"/>
<ellipse cx="685.8" cy="409.8" rx="4.1" ry="2.6" fill="#2f7f1e" opacity=".8"/>
<ellipse cx="555.8" cy="381.0" rx="2.3" ry="1.5" fill="#528b1d" opacity=".8"/>
<ellipse cx="467.0" cy="375.0" rx="2.1" ry="1.3" fill="#6e951c" opacity=".8"/>
<ellipse cx="648.5" cy="342.8" rx="1.2" ry="0.7" fill="#8ea01c" opacity=".8"/>
<ellipse cx="724.2" cy="411.5" rx="5.6" ry="3.5" fill="#2f7f1e" opacity=".8"/>
<ellipse cx="528.1" cy="363.7" rx="1.7" ry="1.1" fill="#79991c" opacity=".8"/>
<ellipse cx="726.2" cy="336.4" rx="1.1" ry="0.7" fill="#778e17" opacity=".8"/>
<ellipse cx="623.3" cy="369.9" rx="1.9" ry="1.2" fill="#5f901d" opacity=".8"/>
<ellipse cx="522.1" cy="402.6" rx="4.2" ry="2.7" fill="#2f7f1e" opacity=".8"/>
<ellipse cx="724.6" cy="334.7" rx="1.0" ry="0.6" fill="#7a9117" opacity=".8"/>
<ellipse cx="544.7" cy="406.9" rx="4.2" ry="2.7" fill="#2f7f1e" opacity=".8"/>
<ellipse cx="541.3" cy="368.6" rx="1.8" ry="1.1" fill="#6d951c" opacity=".8"/>
<ellipse cx="493.4" cy="394.8" rx="2.8" ry="1.8" fill="#40851d" opacity=".8"/>
<ellipse cx="611.3" cy="345.2" rx="1.1" ry="0.7" fill="#778e17" opacity=".8"/>
<ellipse cx="622.6" cy="364.0" rx="1.7" ry="1.1" fill="#6a941c" opacity=".8"/>
<ellipse cx="468.1" cy="386.0" rx="2.1" ry="1.3" fill="#578d1d" opacity=".8"/>
<ellipse cx="547.4" cy="363.6" rx="1.8" ry="1.1" fill="#76981c" opacity=".8"/>
<ellipse cx="490.6" cy="407.1" rx="3.4" ry="2.2" fill="#174e12" opacity=".8"/>
<ellipse cx="708.8" cy="360.9" rx="1.8" ry="1.2" fill="#65921c" opacity=".8"/>
<ellipse cx="710.5" cy="338.4" rx="1.1" ry="0.7" fill="#8da01c" opacity=".8"/>
<ellipse cx="474.5" cy="374.6" rx="1.7" ry="1.1" fill="#6d951c" opacity=".8"/>
<ellipse cx="595.1" cy="359.6" rx="1.5" ry="1.0" fill="#76981c" opacity=".8"/>
<ellipse cx="501.1" cy="356.7" rx="1.1" ry="0.7" fill="#758d17" opacity=".8"/>
<ellipse cx="593.6" cy="401.3" rx="2.8" ry="1.8" fill="#174e12" opacity=".8"/>
<ellipse cx="589.4" cy="392.2" rx="3.4" ry="2.2" fill="#38821d" opacity=".8"/>
<ellipse cx="509.1" cy="391.4" rx="2.5" ry="1.6" fill="#45861d" opacity=".8"/>
<ellipse cx="447.6" cy="372.7" rx="1.7" ry="1.1" fill="#77981c" opacity=".8"/>
<ellipse cx="714.1" cy="336.9" rx="1.1" ry="0.7" fill="#90a11c" opacity=".8"/>
<ellipse cx="622.5" cy="390.6" rx="3.7" ry="2.3" fill="#38821d" opacity=".8"/>
<ellipse cx="514.2" cy="380.2" rx="2.9" ry="1.9" fill="#5b8e1d" opacity=".8"/>
<ellipse cx="629.7" cy="382.1" rx="3.3" ry="2.1" fill="#47871d" opacity=".8"/>
<ellipse cx="689.3" cy="360.4" rx="2.4" ry="1.5" fill="#68931c" opacity=".8"/>
<ellipse cx="729.5" cy="354.6" rx="1.8" ry="1.2" fill="#6e951c" opacity=".8"/>
<ellipse cx="513.9" cy="390.0" rx="3.2" ry="2.0" fill="#47871d" opacity=".8"/>
<ellipse cx="544.7" cy="352.8" rx="1.1" ry="0.7" fill="#8ca01c" opacity=".8"/>
<ellipse cx="540.6" cy="409.8" rx="5.1" ry="3.2" fill="#174e12" opacity=".8"/>
<ellipse cx="586.7" cy="368.7" rx="2.4" ry="1.5" fill="#4e7315" opacity=".8"/>
<ellipse cx="671.0" cy="375.7" rx="2.4" ry="1.5" fill="#4e8a1d" opacity=".8"/>
<ellipse cx="700.2" cy="389.0" rx="2.7" ry="1.7" fill="#33801d" opacity=".8"/>
<ellipse cx="546.3" cy="353.4" rx="1.3" ry="0.8" fill="#8a9f1c" opacity=".8"/>
<ellipse cx="669.1" cy="342.0" rx="1.2" ry="0.8" fill="#748d17" opacity=".8"/>
<ellipse cx="718.5" cy="384.4" rx="3.8" ry="2.4" fill="#225512" opacity=".8"/>
<ellipse cx="621.0" cy="362.3" rx="2.2" ry="1.4" fill="#557815" opacity=".8"/>
<ellipse cx="708.0" cy="348.0" rx="1.8" ry="1.1" fill="#7c9a1c" opacity=".8"/>
<ellipse cx="731.2" cy="336.9" rx="1.2" ry="0.8" fill="#758d17" opacity=".8"/>
<ellipse cx="516.1" cy="398.2" rx="2.9" ry="1.9" fill="#36811d" opacity=".8"/>
<ellipse cx="580.0" cy="353.6" rx="1.4" ry="0.9" fill="#6c8716" opacity=".8"/>
<ellipse cx="650.5" cy="383.0" rx="2.9" ry="1.8" fill="#2b5b13" opacity=".8"/>
<ellipse cx="684.0" cy="379.4" rx="3.5" ry="2.3" fill="#2e5d13" opacity=".8"/>
<ellipse cx="563.9" cy="349.2" rx="1.1" ry="0.7" fill="#778f17" opacity=".8"/>
<ellipse cx="543.3" cy="378.2" rx="2.8" ry="1.8" fill="#426b14" opacity=".8"/>
<ellipse cx="439.4" cy="378.2" rx="1.6" ry="1.0" fill="#6c941c" opacity=".8"/>
<ellipse cx="689.8" cy="357.2" rx="2.0" ry="1.3" fill="#6e951c" opacity=".8"/>
<ellipse cx="542.0" cy="355.9" rx="1.3" ry="0.8" fill="#6e8917" opacity=".8"/>
<ellipse cx="630.0" cy="352.6" rx="1.3" ry="0.9" fill="#7e9b1c" opacity=".8"/>
<ellipse cx="655.4" cy="360.8" rx="2.1" ry="1.3" fill="#537715" opacity=".8"/>
<ellipse cx="475.4" cy="388.0" rx="2.1" ry="1.3" fill="#396514" opacity=".8"/>
<ellipse cx="495.1" cy="362.9" rx="1.6" ry="1.0" fill="#829c1c" opacity=".8"/>
<ellipse cx="507.5" cy="402.6" rx="3.8" ry="2.4" fill="#174e12" opacity=".8"/>
<ellipse cx="560.3" cy="370.5" rx="2.5" ry="1.6" fill="#66921c" opacity=".8"/>
<ellipse cx="744.5" cy="339.3" rx="1.4" ry="0.9" fill="#879e1c" opacity=".8"/>
<ellipse cx="601.4" cy="344.0" rx="1.0" ry="0.6" fill="#7b9117" opacity=".8"/>
<ellipse cx="578.9" cy="394.1" rx="2.9" ry="1.9" fill="#36811d" opacity=".8"/>
<ellipse cx="469.3" cy="380.0" rx="2.5" ry="1.6" fill="#63911c" opacity=".8"/>
<ellipse cx="554.8" cy="405.3" rx="4.6" ry="2.9" fill="#2f7f1e" opacity=".8"/>
<ellipse cx="461.5" cy="384.9" rx="2.4" ry="1.5" fill="#426b14" opacity=".8"/>
<ellipse cx="550.2" cy="382.8" rx="2.9" ry="1.8" fill="#508a1d" opacity=".8"/>
<ellipse cx="599.9" cy="381.9" rx="3.3" ry="2.1" fill="#4b891d" opacity=".8"/>
<ellipse cx="550.8" cy="409.8" rx="3.1" ry="2.0" fill="#174e12" opacity=".8"/>
<ellipse cx="649.9" cy="369.9" rx="2.3" ry="1.5" fill="#436c14" opacity=".8"/>
<ellipse cx="714.2" cy="382.9" rx="3.6" ry="2.3" fill="#3d841d" opacity=".8"/>
<ellipse cx="538.8" cy="353.2" rx="1.2" ry="0.8" fill="#748d17" opacity=".8"/>
<ellipse cx="482.8" cy="381.3" rx="2.4" ry="1.5" fill="#5e8f1d" opacity=".8"/>
<ellipse cx="559.6" cy="389.3" rx="3.3" ry="2.1" fill="#42851d" opacity=".8"/>
<ellipse cx="674.4" cy="349.6" rx="1.5" ry="1.0" fill="#7e9b1c" opacity=".8"/>
<ellipse cx="741.2" cy="374.3" rx="3.2" ry="2.1" fill="#4a881d" opacity=".8"/>
<ellipse cx="556.0" cy="408.5" rx="4.4" ry="2.8" fill="#2f7f1e" opacity=".8"/>
<ellipse cx="524.0" cy="355.6" rx="1.2" ry="0.8" fill="#738b17" opacity=".8"/>
<ellipse cx="684.0" cy="352.5" rx="1.5" ry="0.9" fill="#77981c" opacity=".8"/>
<ellipse cx="710.0" cy="340.3" rx="1.3" ry="0.8" fill="#8a9f1c" opacity=".8"/>
<ellipse cx="534.7" cy="351.3" rx="1.0" ry="0.6" fill="#91a21c" opacity=".8"/>
<ellipse cx="737.7" cy="407.6" rx="3.6" ry="2.3" fill="#2f7f1e" opacity=".8"/>
<ellipse cx="730.6" cy="340.7" rx="1.2" ry="0.8" fill="#879e1c" opacity=".8"/>
<ellipse cx="471.6" cy="364.6" rx="1.3" ry="0.9" fill="#839d1c" opacity=".8"/>
<ellipse cx="736.7" cy="344.3" rx="1.3" ry="0.9" fill="#688416" opacity=".8"/>
<ellipse cx="577.6" cy="396.6" rx="3.7" ry="2.4" fill="#194f12" opacity=".8"/>
</g>
<g filter="url(#b2)">
<ellipse cx="486.4" cy="422.2" rx="6.4" ry="3.5" fill="#4ea42e" opacity=".9" transform="rotate(25 486.4 422.2)"/>
<ellipse cx="550.6" cy="418.4" rx="6.9" ry="3.8" fill="#70c040" opacity=".9" transform="rotate(35 550.6 418.4)"/>
<ellipse cx="577.1" cy="403.6" rx="3.5" ry="1.9" fill="#70c040" opacity=".9" transform="rotate(-15 577.1 403.6)"/>
<ellipse cx="521.0" cy="482.2" rx="7.8" ry="4.3" fill="#55aa30" opacity=".9" transform="rotate(25 521.0 482.2)"/>
<ellipse cx="565.9" cy="457.1" rx="9.4" ry="5.2" fill="#70c040" opacity=".9" transform="rotate(-33 565.9 457.1)"/>
<ellipse cx="660.5" cy="408.9" rx="6.0" ry="3.3" fill="#4ea42e" opacity=".9" transform="rotate(-11 660.5 408.9)"/>
<ellipse cx="666.4" cy="482.3" rx="8.4" ry="4.6" fill="#58ae34" opacity=".9" transform="rotate(-15 666.4 482.3)"/>
<ellipse cx="705.8" cy="409.8" rx="5.5" ry="3.0" fill="#70c040" opacity=".9" transform="rotate(-37 705.8 409.8)"/>
<ellipse cx="460.1" cy="424.5" rx="5.3" ry="2.9" fill="#44982a" opacity=".9" transform="rotate(8 460.1 424.5)"/>
<ellipse cx="615.0" cy="430.8" rx="5.5" ry="3.0" fill="#174a12" opacity=".9" transform="rotate(-35 615.0 430.8)"/>
<ellipse cx="670.0" cy="456.5" rx="8.0" ry="4.4" fill="#1c5a16" opacity=".9" transform="rotate(24 670.0 456.5)"/>
<ellipse cx="637.9" cy="470.8" rx="10.9" ry="6.0" fill="#4ea42e" opacity=".9" transform="rotate(11 637.9 470.8)"/>
<ellipse cx="460.5" cy="418.4" rx="5.5" ry="3.0" fill="#123c0e" opacity=".9" transform="rotate(11 460.5 418.4)"/>
<ellipse cx="534.3" cy="478.8" rx="8.4" ry="4.6" fill="#55aa30" opacity=".9" transform="rotate(-14 534.3 478.8)"/>
<ellipse cx="462.0" cy="459.1" rx="9.6" ry="5.3" fill="#4a9e2a" opacity=".9" transform="rotate(-4 462.0 459.1)"/>
<ellipse cx="576.3" cy="465.3" rx="8.4" ry="4.6" fill="#0f340c" opacity=".9" transform="rotate(5 576.3 465.3)"/>
<ellipse cx="452.1" cy="469.5" rx="10.4" ry="5.7" fill="#44982a" opacity=".9" transform="rotate(-21 452.1 469.5)"/>
<ellipse cx="734.2" cy="481.9" rx="9.6" ry="5.3" fill="#44982a" opacity=".9" transform="rotate(-22 734.2 481.9)"/>
<ellipse cx="616.1" cy="485.5" rx="10.9" ry="6.0" fill="#62b638" opacity=".9" transform="rotate(-47 616.1 485.5)"/>
<ellipse cx="569.3" cy="440.4" rx="5.1" ry="2.8" fill="#1c5a16" opacity=".9" transform="rotate(8 569.3 440.4)"/>
<ellipse cx="596.2" cy="430.4" rx="6.7" ry="3.7" fill="#4a9e2a" opacity=".9" transform="rotate(30 596.2 430.4)"/>
<ellipse cx="540.5" cy="484.3" rx="12.5" ry="6.9" fill="#66ba3c" opacity=".9" transform="rotate(8 540.5 484.3)"/>
<ellipse cx="735.6" cy="433.4" rx="8.3" ry="4.6" fill="#44982a" opacity=".9" transform="rotate(-16 735.6 433.4)"/>
<ellipse cx="562.9" cy="410.2" rx="4.5" ry="2.4" fill="#4a9e2a" opacity=".9" transform="rotate(-6 562.9 410.2)"/>
<ellipse cx="654.6" cy="411.0" rx="4.4" ry="2.4" fill="#70c040" opacity=".9" transform="rotate(25 654.6 411.0)"/>
<ellipse cx="720.6" cy="483.0" rx="10.8" ry="6.0" fill="#1c5a16" opacity=".9" transform="rotate(-15 720.6 483.0)"/>
<ellipse cx="694.8" cy="432.1" rx="7.2" ry="4.0" fill="#0f340c" opacity=".9" transform="rotate(-24 694.8 432.1)"/>
<ellipse cx="489.9" cy="426.1" rx="6.3" ry="3.5" fill="#123c0e" opacity=".9" transform="rotate(-39 489.9 426.1)"/>
<ellipse cx="650.9" cy="463.0" rx="7.9" ry="4.3" fill="#66ba3c" opacity=".9" transform="rotate(27 650.9 463.0)"/>
<ellipse cx="701.7" cy="424.9" rx="5.7" ry="3.2" fill="#236a1a" opacity=".9" transform="rotate(49 701.7 424.9)"/>
<ellipse cx="682.4" cy="479.5" rx="9.1" ry="5.0" fill="#174a12" opacity=".9" transform="rotate(35 682.4 479.5)"/>
<ellipse cx="516.6" cy="442.7" rx="6.5" ry="3.6" fill="#4a9e2a" opacity=".9" transform="rotate(44 516.6 442.7)"/>
<ellipse cx="524.9" cy="410.5" rx="5.9" ry="3.2" fill="#4ea42e" opacity=".9" transform="rotate(-34 524.9 410.5)"/>
<ellipse cx="573.2" cy="478.1" rx="7.0" ry="3.9" fill="#4ea42e" opacity=".9" transform="rotate(-47 573.2 478.1)"/>
<ellipse cx="736.8" cy="470.1" rx="6.4" ry="3.5" fill="#174a12" opacity=".9" transform="rotate(39 736.8 470.1)"/>
<ellipse cx="461.6" cy="443.3" rx="6.1" ry="3.4" fill="#236a1a" opacity=".9" transform="rotate(-2 461.6 443.3)"/>
<ellipse cx="502.7" cy="453.4" rx="6.4" ry="3.5" fill="#236a1a" opacity=".9" transform="rotate(38 502.7 453.4)"/>
<ellipse cx="707.7" cy="401.4" rx="6.2" ry="3.4" fill="#66ba3c" opacity=".9" transform="rotate(26 707.7 401.4)"/>
<ellipse cx="659.4" cy="446.7" rx="9.1" ry="5.0" fill="#44982a" opacity=".9" transform="rotate(22 659.4 446.7)"/>
<ellipse cx="708.6" cy="437.1" rx="7.4" ry="4.1" fill="#66ba3c" opacity=".9" transform="rotate(10 708.6 437.1)"/>
<ellipse cx="512.8" cy="398.0" rx="5.2" ry="2.9" fill="#4ea42e" opacity=".9" transform="rotate(7 512.8 398.0)"/>
<ellipse cx="508.4" cy="463.5" rx="9.5" ry="5.2" fill="#174a12" opacity=".9" transform="rotate(-41 508.4 463.5)"/>
<ellipse cx="684.8" cy="485.7" rx="6.7" ry="3.7" fill="#44982a" opacity=".9" transform="rotate(44 684.8 485.7)"/>
<ellipse cx="676.5" cy="484.1" rx="6.7" ry="3.7" fill="#4ea42e" opacity=".9" transform="rotate(-24 676.5 484.1)"/>
<ellipse cx="445.6" cy="406.7" rx="5.0" ry="2.8" fill="#55aa30" opacity=".9" transform="rotate(-31 445.6 406.7)"/>
<ellipse cx="489.7" cy="469.5" rx="8.7" ry="4.8" fill="#4ea42e" opacity=".9" transform="rotate(42 489.7 469.5)"/>
<ellipse cx="699.7" cy="392.2" rx="4.6" ry="2.5" fill="#0f340c" opacity=".9" transform="rotate(6 699.7 392.2)"/>
<ellipse cx="681.5" cy="450.8" rx="7.8" ry="4.3" fill="#0f340c" opacity=".9" transform="rotate(12 681.5 450.8)"/>
<ellipse cx="644.6" cy="435.9" rx="7.0" ry="3.9" fill="#62b638" opacity=".9" transform="rotate(33 644.6 435.9)"/>
<ellipse cx="579.7" cy="469.9" rx="6.6" ry="3.6" fill="#174a12" opacity=".9" transform="rotate(17 579.7 469.9)"/>
<ellipse cx="626.9" cy="486.4" rx="7.1" ry="3.9" fill="#55aa30" opacity=".9" transform="rotate(-41 626.9 486.4)"/>
<ellipse cx="708.8" cy="414.9" rx="7.3" ry="4.0" fill="#70c040" opacity=".9" transform="rotate(-20 708.8 414.9)"/>
<ellipse cx="485.1" cy="465.2" rx="8.9" ry="4.9" fill="#174a12" opacity=".9" transform="rotate(-49 485.1 465.2)"/>
<ellipse cx="474.7" cy="399.2" rx="4.5" ry="2.5" fill="#4ea42e" opacity=".9" transform="rotate(-4 474.7 399.2)"/>
<ellipse cx="626.4" cy="431.1" rx="7.0" ry="3.9" fill="#1c5a16" opacity=".9" transform="rotate(41 626.4 431.1)"/>
<ellipse cx="658.6" cy="472.4" rx="6.2" ry="3.4" fill="#236a1a" opacity=".9" transform="rotate(30 658.6 472.4)"/>
<ellipse cx="628.7" cy="397.3" rx="4.0" ry="2.2" fill="#62b638" opacity=".9" transform="rotate(-25 628.7 397.3)"/>
<ellipse cx="546.3" cy="420.9" rx="5.1" ry="2.8" fill="#66ba3c" opacity=".9" transform="rotate(-34 546.3 420.9)"/>
<ellipse cx="640.0" cy="482.9" rx="9.3" ry="5.1" fill="#123c0e" opacity=".9" transform="rotate(-23 640.0 482.9)"/>
<ellipse cx="565.8" cy="416.0" rx="3.9" ry="2.2" fill="#58ae34" opacity=".9" transform="rotate(42 565.8 416.0)"/>
<ellipse cx="675.0" cy="423.6" rx="7.1" ry="3.9" fill="#1c5a16" opacity=".9" transform="rotate(3 675.0 423.6)"/>
<ellipse cx="691.8" cy="402.1" rx="4.4" ry="2.4" fill="#123c0e" opacity=".9" transform="rotate(-44 691.8 402.1)"/>
<ellipse cx="579.7" cy="403.7" rx="4.0" ry="2.2" fill="#44982a" opacity=".9" transform="rotate(44 579.7 403.7)"/>
<ellipse cx="718.7" cy="431.1" rx="7.4" ry="4.1" fill="#1c5a16" opacity=".9" transform="rotate(15 718.7 431.1)"/>
<ellipse cx="670.3" cy="412.9" rx="6.7" ry="3.7" fill="#236a1a" opacity=".9" transform="rotate(22 670.3 412.9)"/>
<ellipse cx="493.8" cy="487.0" rx="9.3" ry="5.1" fill="#123c0e" opacity=".9" transform="rotate(25 493.8 487.0)"/>
<ellipse cx="518.4" cy="415.9" rx="3.8" ry="2.1" fill="#174a12" opacity=".9" transform="rotate(14 518.4 415.9)"/>
<ellipse cx="640.1" cy="451.4" rx="8.8" ry="4.8" fill="#55aa30" opacity=".9" transform="rotate(10 640.1 451.4)"/>
<ellipse cx="532.7" cy="458.7" rx="5.8" ry="3.2" fill="#4a9e2a" opacity=".9" transform="rotate(-43 532.7 458.7)"/>
<ellipse cx="610.0" cy="399.2" rx="5.1" ry="2.8" fill="#0f340c" opacity=".9" transform="rotate(19 610.0 399.2)"/>
<ellipse cx="674.7" cy="418.3" rx="4.7" ry="2.6" fill="#70c040" opacity=".9" transform="rotate(-11 674.7 418.3)"/>
<ellipse cx="492.8" cy="458.9" rx="10.4" ry="5.7" fill="#236a1a" opacity=".9" transform="rotate(-16 492.8 458.9)"/>
<ellipse cx="449.4" cy="471.9" rx="10.6" ry="5.8" fill="#44982a" opacity=".9" transform="rotate(30 449.4 471.9)"/>
<ellipse cx="524.7" cy="456.4" rx="5.4" ry="3.0" fill="#55aa30" opacity=".9" transform="rotate(-34 524.7 456.4)"/>
<ellipse cx="619.0" cy="455.3" rx="8.6" ry="4.8" fill="#62b638" opacity=".9" transform="rotate(-2 619.0 455.3)"/>
<ellipse cx="457.5" cy="472.3" rx="7.4" ry="4.1" fill="#44982a" opacity=".9" transform="rotate(-44 457.5 472.3)"/>
<ellipse cx="521.8" cy="420.4" rx="7.0" ry="3.8" fill="#123c0e" opacity=".9" transform="rotate(-14 521.8 420.4)"/>
<ellipse cx="482.2" cy="461.4" rx="9.5" ry="5.2" fill="#58ae34" opacity=".9" transform="rotate(-33 482.2 461.4)"/>
<ellipse cx="706.1" cy="455.7" rx="10.0" ry="5.5" fill="#4ea42e" opacity=".9" transform="rotate(43 706.1 455.7)"/>
<ellipse cx="637.8" cy="394.9" rx="5.3" ry="2.9" fill="#123c0e" opacity=".9" transform="rotate(-26 637.8 394.9)"/>
<ellipse cx="520.2" cy="477.7" rx="6.2" ry="3.4" fill="#4ea42e" opacity=".9" transform="rotate(34 520.2 477.7)"/>
<ellipse cx="449.0" cy="414.5" rx="4.8" ry="2.6" fill="#66ba3c" opacity=".9" transform="rotate(6 449.0 414.5)"/>
<ellipse cx="563.4" cy="439.2" rx="6.8" ry="3.7" fill="#174a12" opacity=".9" transform="rotate(-7 563.4 439.2)"/>
<ellipse cx="498.2" cy="397.8" rx="3.6" ry="2.0" fill="#44982a" opacity=".9" transform="rotate(44 498.2 397.8)"/>
<ellipse cx="461.8" cy="445.3" rx="5.8" ry="3.2" fill="#0f340c" opacity=".9" transform="rotate(11 461.8 445.3)"/>
<ellipse cx="723.2" cy="488.0" rx="8.9" ry="4.9" fill="#4ea42e" opacity=".9" transform="rotate(2 723.2 488.0)"/>
<ellipse cx="492.0" cy="415.0" rx="6.2" ry="3.4" fill="#55aa30" opacity=".9" transform="rotate(-2 492.0 415.0)"/>
<ellipse cx="728.6" cy="437.0" rx="8.2" ry="4.5" fill="#66ba3c" opacity=".9" transform="rotate(13 728.6 437.0)"/>
<ellipse cx="525.6" cy="401.4" rx="5.1" ry="2.8" fill="#66ba3c" opacity=".9" transform="rotate(-2 525.6 401.4)"/>
<ellipse cx="443.3" cy="409.3" rx="5.0" ry="2.7" fill="#4a9e2a" opacity=".9" transform="rotate(14 443.3 409.3)"/>
<ellipse cx="449.8" cy="457.9" rx="8.5" ry="4.7" fill="#0f340c" opacity=".9" transform="rotate(-36 449.8 457.9)"/>
<ellipse cx="558.1" cy="427.0" rx="7.5" ry="4.1" fill="#4a9e2a" opacity=".9" transform="rotate(36 558.1 427.0)"/>
<ellipse cx="715.3" cy="427.3" rx="5.2" ry="2.8" fill="#66ba3c" opacity=".9" transform="rotate(40 715.3 427.3)"/>
<ellipse cx="506.2" cy="399.9" rx="3.2" ry="1.8" fill="#62b638" opacity=".9" transform="rotate(34 506.2 399.9)"/>
<ellipse cx="535.8" cy="421.2" rx="4.7" ry="2.6" fill="#4a9e2a" opacity=".9" transform="rotate(18 535.8 421.2)"/>
<ellipse cx="729.3" cy="393.2" rx="3.9" ry="2.1" fill="#66ba3c" opacity=".9" transform="rotate(17 729.3 393.2)"/>
<ellipse cx="716.3" cy="412.4" rx="4.6" ry="2.5" fill="#70c040" opacity=".9" transform="rotate(50 716.3 412.4)"/>
<ellipse cx="509.0" cy="435.8" rx="8.3" ry="4.6" fill="#4ea42e" opacity=".9" transform="rotate(-32 509.0 435.8)"/>
<ellipse cx="656.2" cy="431.7" rx="6.8" ry="3.7" fill="#174a12" opacity=".9" transform="rotate(33 656.2 431.7)"/>
<ellipse cx="625.3" cy="392.0" rx="3.7" ry="2.0" fill="#4ea42e" opacity=".9" transform="rotate(-36 625.3 392.0)"/>
<ellipse cx="476.8" cy="415.1" rx="6.4" ry="3.5" fill="#62b638" opacity=".9" transform="rotate(50 476.8 415.1)"/>
<ellipse cx="538.0" cy="405.0" rx="5.3" ry="2.9" fill="#4ea42e" opacity=".9" transform="rotate(-33 538.0 405.0)"/>
<ellipse cx="578.0" cy="448.2" rx="7.0" ry="3.8" fill="#174a12" opacity=".9" transform="rotate(36 578.0 448.2)"/>
<ellipse cx="522.0" cy="483.9" rx="12.2" ry="6.7" fill="#4a9e2a" opacity=".9" transform="rotate(-6 522.0 483.9)"/>
<ellipse cx="735.1" cy="470.7" rx="11.1" ry="6.1" fill="#62b638" opacity=".9" transform="rotate(37 735.1 470.7)"/>
<ellipse cx="601.5" cy="432.3" rx="7.9" ry="4.3" fill="#0f340c" opacity=".9" transform="rotate(8 601.5 432.3)"/>
<ellipse cx="592.4" cy="434.8" rx="6.7" ry="3.7" fill="#123c0e" opacity=".9" transform="rotate(40 592.4 434.8)"/>
<ellipse cx="498.8" cy="484.4" rx="6.9" ry="3.8" fill="#0f340c" opacity=".9" transform="rotate(-12 498.8 484.4)"/>
<ellipse cx="731.8" cy="474.5" rx="9.8" ry="5.4" fill="#70c040" opacity=".9" transform="rotate(18 731.8 474.5)"/>
<ellipse cx="666.1" cy="399.0" rx="5.0" ry="2.8" fill="#58ae34" opacity=".9" transform="rotate(30 666.1 399.0)"/>
<ellipse cx="585.0" cy="392.9" rx="4.5" ry="2.5" fill="#174a12" opacity=".9" transform="rotate(-3 585.0 392.9)"/>
<ellipse cx="736.2" cy="423.1" rx="8.0" ry="4.4" fill="#44982a" opacity=".9" transform="rotate(4 736.2 423.1)"/>
<ellipse cx="480.8" cy="430.5" rx="7.0" ry="3.8" fill="#58ae34" opacity=".9" transform="rotate(-12 480.8 430.5)"/>
<ellipse cx="551.3" cy="439.5" rx="8.9" ry="4.9" fill="#123c0e" opacity=".9" transform="rotate(-39 551.3 439.5)"/>
<ellipse cx="709.8" cy="440.9" rx="7.6" ry="4.2" fill="#236a1a" opacity=".9" transform="rotate(8 709.8 440.9)"/>
<ellipse cx="616.0" cy="482.5" rx="8.5" ry="4.7" fill="#236a1a" opacity=".9" transform="rotate(-19 616.0 482.5)"/>
<ellipse cx="651.4" cy="469.9" rx="9.7" ry="5.3" fill="#236a1a" opacity=".9" transform="rotate(-13 651.4 469.9)"/>
<ellipse cx="673.9" cy="484.4" rx="11.6" ry="6.4" fill="#174a12" opacity=".9" transform="rotate(20 673.9 484.4)"/>
<ellipse cx="499.9" cy="484.8" rx="11.2" ry="6.2" fill="#70c040" opacity=".9" transform="rotate(-34 499.9 484.8)"/>
<ellipse cx="578.8" cy="398.2" rx="4.8" ry="2.6" fill="#1c5a16" opacity=".9" transform="rotate(-30 578.8 398.2)"/>
<ellipse cx="603.1" cy="393.4" rx="4.7" ry="2.6" fill="#55aa30" opacity=".9" transform="rotate(30 603.1 393.4)"/>
<ellipse cx="466.2" cy="472.4" rx="7.3" ry="4.0" fill="#62b638" opacity=".9" transform="rotate(-23 466.2 472.4)"/>
<ellipse cx="741.1" cy="460.3" rx="5.7" ry="3.1" fill="#55aa30" opacity=".9" transform="rotate(47 741.1 460.3)"/>
<ellipse cx="542.3" cy="406.3" rx="4.8" ry="2.7" fill="#4ea42e" opacity=".9" transform="rotate(25 542.3 406.3)"/>
<ellipse cx="541.6" cy="476.0" rx="11.5" ry="6.3" fill="#70c040" opacity=".9" transform="rotate(-41 541.6 476.0)"/>
<ellipse cx="652.5" cy="451.9" rx="6.5" ry="3.6" fill="#123c0e" opacity=".9" transform="rotate(-16 652.5 451.9)"/>
<ellipse cx="497.5" cy="439.2" rx="8.4" ry="4.6" fill="#4a9e2a" opacity=".9" transform="rotate(25 497.5 439.2)"/>
<ellipse cx="569.0" cy="472.5" rx="7.7" ry="4.2" fill="#70c040" opacity=".9" transform="rotate(30 569.0 472.5)"/>
<ellipse cx="468.7" cy="469.0" rx="9.0" ry="5.0" fill="#66ba3c" opacity=".9" transform="rotate(30 468.7 469.0)"/>
<ellipse cx="510.5" cy="468.0" rx="6.3" ry="3.5" fill="#0f340c" opacity=".9" transform="rotate(-6 510.5 468.0)"/>
<ellipse cx="724.7" cy="393.3" rx="3.8" ry="2.1" fill="#236a1a" opacity=".9" transform="rotate(-26 724.7 393.3)"/>
<ellipse cx="569.2" cy="416.8" rx="5.6" ry="3.1" fill="#1c5a16" opacity=".9" transform="rotate(-27 569.2 416.8)"/>
<ellipse cx="596.4" cy="394.3" rx="3.6" ry="2.0" fill="#236a1a" opacity=".9" transform="rotate(11 596.4 394.3)"/>
<ellipse cx="502.4" cy="478.6" rx="8.1" ry="4.4" fill="#123c0e" opacity=".9" transform="rotate(-37 502.4 478.6)"/>
<ellipse cx="581.2" cy="398.0" rx="4.0" ry="2.2" fill="#123c0e" opacity=".9" transform="rotate(-10 581.2 398.0)"/>
<ellipse cx="533.4" cy="442.2" rx="8.1" ry="4.5" fill="#70c040" opacity=".9" transform="rotate(-45 533.4 442.2)"/>
<ellipse cx="486.1" cy="441.3" rx="8.6" ry="4.7" fill="#236a1a" opacity=".9" transform="rotate(-47 486.1 441.3)"/>
<ellipse cx="679.4" cy="422.8" rx="6.9" ry="3.8" fill="#236a1a" opacity=".9" transform="rotate(3 679.4 422.8)"/>
<ellipse cx="472.4" cy="466.4" rx="6.1" ry="3.3" fill="#66ba3c" opacity=".9" transform="rotate(-43 472.4 466.4)"/>
<ellipse cx="596.6" cy="469.1" rx="8.4" ry="4.6" fill="#236a1a" opacity=".9" transform="rotate(27 596.6 469.1)"/>
<ellipse cx="576.3" cy="427.7" rx="7.7" ry="4.3" fill="#0f340c" opacity=".9" transform="rotate(-45 576.3 427.7)"/>
<ellipse cx="466.8" cy="465.8" rx="10.6" ry="5.8" fill="#62b638" opacity=".9" transform="rotate(-44 466.8 465.8)"/>
<ellipse cx="450.7" cy="457.7" rx="8.6" ry="4.7" fill="#123c0e" opacity=".9" transform="rotate(-6 450.7 457.7)"/>
<ellipse cx="560.1" cy="400.2" rx="3.5" ry="1.9" fill="#1c5a16" opacity=".9" transform="rotate(-47 560.1 400.2)"/>
<ellipse cx="644.4" cy="479.3" rx="9.4" ry="5.2" fill="#123c0e" opacity=".9" transform="rotate(-34 644.4 479.3)"/>
<ellipse cx="694.1" cy="443.1" rx="5.8" ry="3.2" fill="#4ea42e" opacity=".9" transform="rotate(21 694.1 443.1)"/>
<ellipse cx="711.8" cy="426.8" rx="6.2" ry="3.4" fill="#55aa30" opacity=".9" transform="rotate(-24 711.8 426.8)"/>
<ellipse cx="712.0" cy="463.1" rx="10.5" ry="5.8" fill="#62b638" opacity=".9" transform="rotate(10 712.0 463.1)"/>
<ellipse cx="581.9" cy="419.7" rx="6.4" ry="3.5" fill="#174a12" opacity=".9" transform="rotate(25 581.9 419.7)"/>
<ellipse cx="589.8" cy="479.9" rx="11.5" ry="6.3" fill="#44982a" opacity=".9" transform="rotate(-47 589.8 479.9)"/>
<ellipse cx="688.3" cy="441.2" rx="8.0" ry="4.4" fill="#0f340c" opacity=".9" transform="rotate(-18 688.3 441.2)"/>
<ellipse cx="667.1" cy="408.6" rx="4.8" ry="2.6" fill="#4ea42e" opacity=".9" transform="rotate(-44 667.1 408.6)"/>
<ellipse cx="510.7" cy="392.0" rx="3.5" ry="1.9" fill="#123c0e" opacity=".9" transform="rotate(11 510.7 392.0)"/>
<ellipse cx="730.4" cy="478.3" rx="8.2" ry="4.5" fill="#123c0e" opacity=".9" transform="rotate(45 730.4 478.3)"/>
<ellipse cx="628.4" cy="421.0" rx="5.5" ry="3.0" fill="#44982a" opacity=".9" transform="rotate(-49 628.4 421.0)"/>
<ellipse cx="670.7" cy="456.9" rx="9.3" ry="5.1" fill="#44982a" opacity=".9" transform="rotate(32 670.7 456.9)"/>
<ellipse cx="455.9" cy="453.8" rx="9.4" ry="5.2" fill="#62b638" opacity=".9" transform="rotate(31 455.9 453.8)"/>
<ellipse cx="640.1" cy="416.3" rx="5.2" ry="2.9" fill="#174a12" opacity=".9" transform="rotate(-26 640.1 416.3)"/>
<ellipse cx="644.6" cy="460.5" rx="5.9" ry="3.2" fill="#174a12" opacity=".9" transform="rotate(35 644.6 460.5)"/>
<ellipse cx="482.4" cy="476.4" rx="11.6" ry="6.4" fill="#0f340c" opacity=".9" transform="rotate(15 482.4 476.4)"/>
<ellipse cx="705.4" cy="396.6" rx="4.8" ry="2.6" fill="#58ae34" opacity=".9" transform="rotate(-3 705.4 396.6)"/>
<ellipse cx="668.4" cy="436.3" rx="8.2" ry="4.5" fill="#123c0e" opacity=".9" transform="rotate(-25 668.4 436.3)"/>
<ellipse cx="539.8" cy="401.6" rx="3.3" ry="1.8" fill="#174a12" opacity=".9" transform="rotate(-13 539.8 401.6)"/>
<ellipse cx="591.9" cy="451.0" rx="5.5" ry="3.0" fill="#236a1a" opacity=".9" transform="rotate(-19 591.9 451.0)"/>
<ellipse cx="555.3" cy="437.8" rx="7.3" ry="4.0" fill="#0f340c" opacity=".9" transform="rotate(-3 555.3 437.8)"/>
<ellipse cx="663.8" cy="478.4" rx="8.1" ry="4.4" fill="#0f340c" opacity=".9" transform="rotate(41 663.8 478.4)"/>
<ellipse cx="744.3" cy="449.6" rx="9.5" ry="5.2" fill="#66ba3c" opacity=".9" transform="rotate(-8 744.3 449.6)"/>
<ellipse cx="643.0" cy="476.5" rx="7.4" ry="4.1" fill="#58ae34" opacity=".9" transform="rotate(43 643.0 476.5)"/>
<ellipse cx="703.3" cy="455.2" rx="8.7" ry="4.8" fill="#66ba3c" opacity=".9" transform="rotate(9 703.3 455.2)"/>
<ellipse cx="658.8" cy="433.5" rx="6.4" ry="3.5" fill="#70c040" opacity=".9" transform="rotate(32 658.8 433.5)"/>
<ellipse cx="548.8" cy="467.7" rx="7.0" ry="3.9" fill="#1c5a16" opacity=".9" transform="rotate(-28 548.8 467.7)"/>
<ellipse cx="742.7" cy="476.8" rx="8.7" ry="4.8" fill="#55aa30" opacity=".9" transform="rotate(43 742.7 476.8)"/>
<ellipse cx="532.0" cy="411.4" rx="4.6" ry="2.5" fill="#174a12" opacity=".9" transform="rotate(-1 532.0 411.4)"/>
<ellipse cx="443.3" cy="464.2" rx="10.1" ry="5.6" fill="#4ea42e" opacity=".9" transform="rotate(50 443.3 464.2)"/>
<ellipse cx="682.5" cy="445.9" rx="5.9" ry="3.3" fill="#0f340c" opacity=".9" transform="rotate(38 682.5 445.9)"/>
<ellipse cx="613.6" cy="402.8" rx="3.6" ry="2.0" fill="#4a9e2a" opacity=".9" transform="rotate(40 613.6 402.8)"/>
<ellipse cx="657.9" cy="473.7" rx="10.1" ry="5.6" fill="#66ba3c" opacity=".9" transform="rotate(43 657.9 473.7)"/>
<ellipse cx="483.8" cy="445.8" rx="7.6" ry="4.2" fill="#236a1a" opacity=".9" transform="rotate(-36 483.8 445.8)"/>
<ellipse cx="624.3" cy="458.0" rx="6.7" ry="3.7" fill="#66ba3c" opacity=".9" transform="rotate(-45 624.3 458.0)"/>
<ellipse cx="684.8" cy="466.3" rx="10.7" ry="5.9" fill="#44982a" opacity=".9" transform="rotate(4 684.8 466.3)"/>
<ellipse cx="690.7" cy="414.3" rx="4.7" ry="2.6" fill="#44982a" opacity=".9" transform="rotate(48 690.7 414.3)"/>
<ellipse cx="473.5" cy="461.3" rx="7.9" ry="4.3" fill="#44982a" opacity=".9" transform="rotate(-23 473.5 461.3)"/>
<ellipse cx="722.2" cy="472.5" rx="6.3" ry="3.5" fill="#236a1a" opacity=".9" transform="rotate(37 722.2 472.5)"/>
<ellipse cx="713.8" cy="475.4" rx="9.4" ry="5.2" fill="#58ae34" opacity=".9" transform="rotate(-4 713.8 475.4)"/>
<ellipse cx="744.3" cy="453.3" rx="7.0" ry="3.9" fill="#174a12" opacity=".9" transform="rotate(50 744.3 453.3)"/>
<ellipse cx="705.1" cy="413.9" rx="5.2" ry="2.8" fill="#70c040" opacity=".9" transform="rotate(-34 705.1 413.9)"/>
<ellipse cx="465.9" cy="413.0" rx="4.1" ry="2.2" fill="#70c040" opacity=".9" transform="rotate(-32 465.9 413.0)"/>
<ellipse cx="574.1" cy="438.1" rx="8.7" ry="4.8" fill="#70c040" opacity=".9" transform="rotate(-3 574.1 438.1)"/>
<ellipse cx="620.6" cy="411.0" rx="4.2" ry="2.3" fill="#55aa30" opacity=".9" transform="rotate(-15 620.6 411.0)"/>
<ellipse cx="461.2" cy="428.8" rx="4.5" ry="2.5" fill="#123c0e" opacity=".9" transform="rotate(-15 461.2 428.8)"/>
<ellipse cx="559.5" cy="458.3" rx="6.2" ry="3.4" fill="#0f340c" opacity=".9" transform="rotate(5 559.5 458.3)"/>
<ellipse cx="679.3" cy="396.0" rx="4.5" ry="2.5" fill="#4ea42e" opacity=".9" transform="rotate(45 679.3 396.0)"/>
<ellipse cx="487.7" cy="451.5" rx="8.1" ry="4.5" fill="#1c5a16" opacity=".9" transform="rotate(45 487.7 451.5)"/>
<ellipse cx="551.6" cy="406.0" rx="5.7" ry="3.1" fill="#0f340c" opacity=".9" transform="rotate(7 551.6 406.0)"/>
<ellipse cx="684.3" cy="413.1" rx="4.4" ry="2.4" fill="#62b638" opacity=".9" transform="rotate(-21 684.3 413.1)"/>
<ellipse cx="715.8" cy="405.1" rx="6.6" ry="3.6" fill="#66ba3c" opacity=".9" transform="rotate(-6 715.8 405.1)"/>
<ellipse cx="599.0" cy="418.4" rx="4.1" ry="2.2" fill="#58ae34" opacity=".9" transform="rotate(14 599.0 418.4)"/>
<ellipse cx="541.4" cy="437.8" rx="6.2" ry="3.4" fill="#70c040" opacity=".9" transform="rotate(-48 541.4 437.8)"/>
<ellipse cx="460.5" cy="468.8" rx="10.2" ry="5.6" fill="#1c5a16" opacity=".9" transform="rotate(-22 460.5 468.8)"/>
<ellipse cx="690.5" cy="423.9" rx="4.9" ry="2.7" fill="#1c5a16" opacity=".9" transform="rotate(-42 690.5 423.9)"/>
<ellipse cx="664.7" cy="412.1" rx="4.3" ry="2.4" fill="#44982a" opacity=".9" transform="rotate(-44 664.7 412.1)"/>
<ellipse cx="663.7" cy="417.3" rx="6.5" ry="3.6" fill="#174a12" opacity=".9" transform="rotate(5 663.7 417.3)"/>
<ellipse cx="467.3" cy="480.5" rx="11.8" ry="6.5" fill="#44982a" opacity=".9" transform="rotate(-46 467.3 480.5)"/>
<ellipse cx="662.8" cy="439.7" rx="6.7" ry="3.7" fill="#174a12" opacity=".9" transform="rotate(10 662.8 439.7)"/>
<ellipse cx="451.6" cy="485.8" rx="6.8" ry="3.8" fill="#4a9e2a" opacity=".9" transform="rotate(-17 451.6 485.8)"/>
<ellipse cx="491.4" cy="458.7" rx="7.7" ry="4.2" fill="#44982a" opacity=".9" transform="rotate(11 491.4 458.7)"/>
<ellipse cx="735.7" cy="456.6" rx="7.3" ry="4.0" fill="#236a1a" opacity=".9" transform="rotate(-17 735.7 456.6)"/>
<ellipse cx="576.1" cy="431.3" rx="6.3" ry="3.5" fill="#62b638" opacity=".9" transform="rotate(-33 576.1 431.3)"/>
<ellipse cx="682.1" cy="477.7" rx="9.9" ry="5.4" fill="#236a1a" opacity=".9" transform="rotate(3 682.1 477.7)"/>
<ellipse cx="450.2" cy="457.3" rx="7.5" ry="4.1" fill="#0f340c" opacity=".9" transform="rotate(-49 450.2 457.3)"/>
<ellipse cx="447.0" cy="434.1" rx="6.7" ry="3.7" fill="#0f340c" opacity=".9" transform="rotate(44 447.0 434.1)"/>
<ellipse cx="719.0" cy="474.5" rx="9.3" ry="5.1" fill="#62b638" opacity=".9" transform="rotate(19 719.0 474.5)"/>
<ellipse cx="637.1" cy="407.0" rx="5.1" ry="2.8" fill="#0f340c" opacity=".9" transform="rotate(44 637.1 407.0)"/>
<ellipse cx="550.4" cy="473.1" rx="10.0" ry="5.5" fill="#4ea42e" opacity=".9" transform="rotate(23 550.4 473.1)"/>
<ellipse cx="732.8" cy="431.2" rx="8.5" ry="4.7" fill="#0f340c" opacity=".9" transform="rotate(-34 732.8 431.2)"/>
<ellipse cx="498.2" cy="477.9" rx="12.0" ry="6.6" fill="#4a9e2a" opacity=".9" transform="rotate(49 498.2 477.9)"/>
<ellipse cx="537.1" cy="458.0" rx="9.2" ry="5.1" fill="#58ae34" opacity=".9" transform="rotate(-34 537.1 458.0)"/>
<ellipse cx="589.1" cy="474.3" rx="7.6" ry="4.2" fill="#1c5a16" opacity=".9" transform="rotate(-1 589.1 474.3)"/>
<ellipse cx="454.2" cy="471.5" rx="8.3" ry="4.6" fill="#4ea42e" opacity=".9" transform="rotate(41 454.2 471.5)"/>
<ellipse cx="570.3" cy="448.3" rx="9.4" ry="5.2" fill="#62b638" opacity=".9" transform="rotate(-40 570.3 448.3)"/>
<ellipse cx="474.7" cy="418.6" rx="6.4" ry="3.5" fill="#70c040" opacity=".9" transform="rotate(-42 474.7 418.6)"/>
<ellipse cx="552.3" cy="435.1" rx="4.7" ry="2.6" fill="#123c0e" opacity=".9" transform="rotate(-29 552.3 435.1)"/>
<ellipse cx="524.8" cy="454.8" rx="7.1" ry="3.9" fill="#0f340c" opacity=".9" transform="rotate(50 524.8 454.8)"/>
<ellipse cx="614.4" cy="433.0" rx="7.8" ry="4.3" fill="#236a1a" opacity=".9" transform="rotate(14 614.4 433.0)"/>
<ellipse cx="648.4" cy="422.5" rx="6.7" ry="3.7" fill="#1c5a16" opacity=".9" transform="rotate(25 648.4 422.5)"/>
<ellipse cx="647.3" cy="405.9" rx="3.8" ry="2.1" fill="#0f340c" opacity=".9" transform="rotate(24 647.3 405.9)"/>
<ellipse cx="547.2" cy="482.0" rx="11.5" ry="6.3" fill="#123c0e" opacity=".9" transform="rotate(31 547.2 482.0)"/>
<ellipse cx="585.8" cy="395.2" rx="3.3" ry="1.8" fill="#1c5a16" opacity=".9" transform="rotate(-28 585.8 395.2)"/>
<ellipse cx="707.2" cy="449.7" rx="5.6" ry="3.1" fill="#62b638" opacity=".9" transform="rotate(46 707.2 449.7)"/>
<ellipse cx="671.1" cy="453.9" rx="8.5" ry="4.7" fill="#123c0e" opacity=".9" transform="rotate(-16 671.1 453.9)"/>
<ellipse cx="723.6" cy="407.7" rx="5.3" ry="2.9" fill="#123c0e" opacity=".9" transform="rotate(-24 723.6 407.7)"/>
<ellipse cx="489.1" cy="397.8" rx="5.1" ry="2.8" fill="#55aa30" opacity=".9" transform="rotate(13 489.1 397.8)"/>
<ellipse cx="700.7" cy="443.2" rx="7.0" ry="3.8" fill="#66ba3c" opacity=".9" transform="rotate(31 700.7 443.2)"/>
<ellipse cx="667.1" cy="457.5" rx="6.7" ry="3.7" fill="#44982a" opacity=".9" transform="rotate(42 667.1 457.5)"/>
<ellipse cx="648.6" cy="407.4" rx="5.3" ry="2.9" fill="#62b638" opacity=".9" transform="rotate(41 648.6 407.4)"/>
<ellipse cx="583.2" cy="478.3" rx="11.7" ry="6.5" fill="#55aa30" opacity=".9" transform="rotate(5 583.2 478.3)"/>
<ellipse cx="619.8" cy="465.1" rx="6.6" ry="3.6" fill="#123c0e" opacity=".9" transform="rotate(-12 619.8 465.1)"/>
<ellipse cx="735.8" cy="402.8" rx="5.1" ry="2.8" fill="#58ae34" opacity=".9" transform="rotate(-11 735.8 402.8)"/>
<ellipse cx="535.7" cy="444.6" rx="5.0" ry="2.8" fill="#55aa30" opacity=".9" transform="rotate(46 535.7 444.6)"/>
<ellipse cx="552.7" cy="435.7" rx="7.7" ry="4.2" fill="#123c0e" opacity=".9" transform="rotate(-2 552.7 435.7)"/>
<ellipse cx="500.3" cy="481.2" rx="12.1" ry="6.7" fill="#174a12" opacity=".9" transform="rotate(-14 500.3 481.2)"/>
<ellipse cx="531.6" cy="450.1" rx="9.6" ry="5.3" fill="#55aa30" opacity=".9" transform="rotate(-8 531.6 450.1)"/>
<ellipse cx="461.6" cy="412.1" rx="4.9" ry="2.7" fill="#174a12" opacity=".9" transform="rotate(17 461.6 412.1)"/>
<ellipse cx="722.6" cy="457.7" rx="10.6" ry="5.8" fill="#1c5a16" opacity=".9" transform="rotate(-23 722.6 457.7)"/>
<ellipse cx="466.7" cy="485.6" rx="8.2" ry="4.5" fill="#1c5a16" opacity=".9" transform="rotate(2 466.7 485.6)"/>
<ellipse cx="656.6" cy="425.6" rx="6.3" ry="3.5" fill="#44982a" opacity=".9" transform="rotate(49 656.6 425.6)"/>
<ellipse cx="508.4" cy="479.0" rx="7.5" ry="4.1" fill="#58ae34" opacity=".9" transform="rotate(17 508.4 479.0)"/>
<ellipse cx="742.8" cy="428.9" rx="4.7" ry="2.6" fill="#4ea42e" opacity=".9" transform="rotate(-39 742.8 428.9)"/>
<ellipse cx="522.5" cy="463.6" rx="6.4" ry="3.5" fill="#4a9e2a" opacity=".9" transform="rotate(45 522.5 463.6)"/>
<ellipse cx="743.0" cy="487.4" rx="10.5" ry="5.8" fill="#174a12" opacity=".9" transform="rotate(-13 743.0 487.4)"/>
<ellipse cx="480.7" cy="427.1" rx="7.3" ry="4.0" fill="#62b638" opacity=".9" transform="rotate(-34 480.7 427.1)"/>
<ellipse cx="473.7" cy="406.6" rx="5.2" ry="2.9" fill="#70c040" opacity=".9" transform="rotate(0 473.7 406.6)"/>
<ellipse cx="610.9" cy="447.1" rx="7.0" ry="3.8" fill="#4a9e2a" opacity=".9" transform="rotate(23 610.9 447.1)"/>
<ellipse cx="482.8" cy="414.7" rx="6.3" ry="3.5" fill="#58ae34" opacity=".9" transform="rotate(-26 482.8 414.7)"/>
<ellipse cx="585.6" cy="400.9" rx="4.3" ry="2.4" fill="#4a9e2a" opacity=".9" transform="rotate(-28 585.6 400.9)"/>
<ellipse cx="694.6" cy="456.3" rx="7.7" ry="4.3" fill="#4a9e2a" opacity=".9" transform="rotate(10 694.6 456.3)"/>
<ellipse cx="461.2" cy="409.4" rx="3.6" ry="2.0" fill="#55aa30" opacity=".9" transform="rotate(-16 461.2 409.4)"/>
<ellipse cx="670.1" cy="399.6" rx="3.6" ry="2.0" fill="#236a1a" opacity=".9" transform="rotate(-26 670.1 399.6)"/>
<ellipse cx="533.1" cy="406.9" rx="4.3" ry="2.4" fill="#0f340c" opacity=".9" transform="rotate(-7 533.1 406.9)"/>
<ellipse cx="453.9" cy="407.9" rx="3.6" ry="2.0" fill="#174a12" opacity=".9" transform="rotate(32 453.9 407.9)"/>
<ellipse cx="526.9" cy="467.9" rx="6.0" ry="3.3" fill="#44982a" opacity=".9" transform="rotate(1 526.9 467.9)"/>
<ellipse cx="644.2" cy="408.1" rx="5.0" ry="2.7" fill="#1c5a16" opacity=".9" transform="rotate(-26 644.2 408.1)"/>
<ellipse cx="654.0" cy="436.8" rx="7.5" ry="4.1" fill="#4ea42e" opacity=".9" transform="rotate(-41 654.0 436.8)"/>
<ellipse cx="743.1" cy="458.0" rx="7.3" ry="4.0" fill="#58ae34" opacity=".9" transform="rotate(-28 743.1 458.0)"/>
<ellipse cx="650.0" cy="430.5" rx="6.2" ry="3.4" fill="#55aa30" opacity=".9" transform="rotate(-44 650.0 430.5)"/>
<ellipse cx="520.3" cy="410.4" rx="5.3" ry="2.9" fill="#66ba3c" opacity=".9" transform="rotate(-25 520.3 410.4)"/>
<ellipse cx="722.1" cy="401.5" rx="5.2" ry="2.8" fill="#55aa30" opacity=".9" transform="rotate(43 722.1 401.5)"/>
<ellipse cx="584.4" cy="470.2" rx="6.7" ry="3.7" fill="#62b638" opacity=".9" transform="rotate(16 584.4 470.2)"/>
<ellipse cx="496.4" cy="394.4" rx="4.8" ry="2.6" fill="#1c5a16" opacity=".9" transform="rotate(-39 496.4 394.4)"/>
<ellipse cx="456.4" cy="422.9" rx="5.8" ry="3.2" fill="#123c0e" opacity=".9" transform="rotate(-33 456.4 422.9)"/>
<ellipse cx="564.0" cy="471.7" rx="10.6" ry="5.8" fill="#66ba3c" opacity=".9" transform="rotate(-6 564.0 471.7)"/>
<ellipse cx="467.9" cy="392.3" rx="4.0" ry="2.2" fill="#174a12" opacity=".9" transform="rotate(16 467.9 392.3)"/>
<ellipse cx="475.7" cy="417.0" rx="6.1" ry="3.4" fill="#44982a" opacity=".9" transform="rotate(-50 475.7 417.0)"/>
<ellipse cx="547.9" cy="396.1" rx="5.0" ry="2.7" fill="#123c0e" opacity=".9" transform="rotate(35 547.9 396.1)"/>
<ellipse cx="610.5" cy="463.9" rx="10.6" ry="5.9" fill="#44982a" opacity=".9" transform="rotate(-19 610.5 463.9)"/>
<ellipse cx="661.9" cy="411.6" rx="4.2" ry="2.3" fill="#44982a" opacity=".9" transform="rotate(12 661.9 411.6)"/>
<ellipse cx="479.2" cy="455.3" rx="5.4" ry="3.0" fill="#62b638" opacity=".9" transform="rotate(-46 479.2 455.3)"/>
<ellipse cx="476.3" cy="420.1" rx="5.8" ry="3.2" fill="#58ae34" opacity=".9" transform="rotate(2 476.3 420.1)"/>
<ellipse cx="722.3" cy="415.9" rx="5.8" ry="3.2" fill="#70c040" opacity=".9" transform="rotate(-21 722.3 415.9)"/>
<ellipse cx="449.7" cy="471.7" rx="7.3" ry="4.0" fill="#44982a" opacity=".9" transform="rotate(23 449.7 471.7)"/>
<ellipse cx="656.3" cy="474.8" rx="8.7" ry="4.8" fill="#58ae34" opacity=".9" transform="rotate(23 656.3 474.8)"/>
<ellipse cx="511.3" cy="411.9" rx="5.8" ry="3.2" fill="#123c0e" opacity=".9" transform="rotate(14 511.3 411.9)"/>
<ellipse cx="523.2" cy="458.6" rx="5.7" ry="3.2" fill="#4a9e2a" opacity=".9" transform="rotate(-6 523.2 458.6)"/>
<ellipse cx="711.4" cy="450.4" rx="9.4" ry="5.2" fill="#44982a" opacity=".9" transform="rotate(-16 711.4 450.4)"/>
<ellipse cx="659.5" cy="437.3" rx="7.9" ry="4.3" fill="#55aa30" opacity=".9" transform="rotate(-13 659.5 437.3)"/>
<ellipse cx="588.6" cy="417.9" rx="6.3" ry="3.5" fill="#236a1a" opacity=".9" transform="rotate(37 588.6 417.9)"/>
<ellipse cx="568.5" cy="434.2" rx="5.8" ry="3.2" fill="#174a12" opacity=".9" transform="rotate(21 568.5 434.2)"/>
<ellipse cx="458.5" cy="425.8" rx="6.3" ry="3.5" fill="#4a9e2a" opacity=".9" transform="rotate(35 458.5 425.8)"/>
<ellipse cx="570.3" cy="477.5" rx="7.3" ry="4.0" fill="#123c0e" opacity=".9" transform="rotate(1 570.3 477.5)"/>
<ellipse cx="522.8" cy="402.7" rx="4.5" ry="2.5" fill="#123c0e" opacity=".9" transform="rotate(49 522.8 402.7)"/>
<ellipse cx="496.7" cy="429.6" rx="7.1" ry="3.9" fill="#1c5a16" opacity=".9" transform="rotate(26 496.7 429.6)"/>
<ellipse cx="647.3" cy="424.0" rx="6.5" ry="3.6" fill="#4a9e2a" opacity=".9" transform="rotate(8 647.3 424.0)"/>
<ellipse cx="510.7" cy="447.0" rx="5.4" ry="3.0" fill="#174a12" opacity=".9" transform="rotate(-27 510.7 447.0)"/>
<ellipse cx="615.3" cy="448.3" rx="6.6" ry="3.6" fill="#58ae34" opacity=".9" transform="rotate(2 615.3 448.3)"/>
<ellipse cx="467.5" cy="473.6" rx="8.6" ry="4.7" fill="#66ba3c" opacity=".9" transform="rotate(-19 467.5 473.6)"/>
<ellipse cx="550.8" cy="432.0" rx="7.9" ry="4.3" fill="#4ea42e" opacity=".9" transform="rotate(-26 550.8 432.0)"/>
<ellipse cx="514.3" cy="474.2" rx="9.4" ry="5.2" fill="#4a9e2a" opacity=".9" transform="rotate(2 514.3 474.2)"/>
<ellipse cx="532.6" cy="444.8" rx="7.0" ry="3.8" fill="#236a1a" opacity=".9" transform="rotate(49 532.6 444.8)"/>
<ellipse cx="556.0" cy="397.2" rx="3.7" ry="2.0" fill="#0f340c" opacity=".9" transform="rotate(34 556.0 397.2)"/>
<ellipse cx="558.1" cy="444.6" rx="8.5" ry="4.7" fill="#70c040" opacity=".9" transform="rotate(26 558.1 444.6)"/>
<ellipse cx="726.3" cy="463.8" rx="10.4" ry="5.7" fill="#44982a" opacity=".9" transform="rotate(19 726.3 463.8)"/>
<ellipse cx="716.0" cy="398.5" rx="4.0" ry="2.2" fill="#4ea42e" opacity=".9" transform="rotate(1 716.0 398.5)"/>
<ellipse cx="654.1" cy="419.8" rx="5.9" ry="3.3" fill="#174a12" opacity=".9" transform="rotate(-40 654.1 419.8)"/>
<ellipse cx="474.8" cy="442.7" rx="6.0" ry="3.3" fill="#44982a" opacity=".9" transform="rotate(38 474.8 442.7)"/>
<ellipse cx="542.3" cy="426.3" rx="6.4" ry="3.5" fill="#70c040" opacity=".9" transform="rotate(26 542.3 426.3)"/>
<ellipse cx="658.6" cy="451.3" rx="9.3" ry="5.1" fill="#58ae34" opacity=".9" transform="rotate(-36 658.6 451.3)"/>
<ellipse cx="474.8" cy="456.7" rx="6.1" ry="3.4" fill="#58ae34" opacity=".9" transform="rotate(-28 474.8 456.7)"/>
<ellipse cx="744.5" cy="392.4" rx="3.8" ry="2.1" fill="#58ae34" opacity=".9" transform="rotate(-9 744.5 392.4)"/>
<ellipse cx="680.9" cy="414.3" rx="5.5" ry="3.0" fill="#123c0e" opacity=".9" transform="rotate(32 680.9 414.3)"/>
<ellipse cx="554.9" cy="397.6" rx="5.2" ry="2.8" fill="#4ea42e" opacity=".9" transform="rotate(18 554.9 397.6)"/>
<ellipse cx="584.1" cy="439.7" rx="5.6" ry="3.1" fill="#62b638" opacity=".9" transform="rotate(19 584.1 439.7)"/>
<ellipse cx="636.6" cy="416.8" rx="4.5" ry="2.5" fill="#62b638" opacity=".9" transform="rotate(16 636.6 416.8)"/>
<ellipse cx="528.6" cy="475.5" rx="9.2" ry="5.1" fill="#0f340c" opacity=".9" transform="rotate(-39 528.6 475.5)"/>
<ellipse cx="531.8" cy="418.3" rx="4.5" ry="2.5" fill="#0f340c" opacity=".9" transform="rotate(33 531.8 418.3)"/>
<ellipse cx="666.6" cy="456.5" rx="7.1" ry="3.9" fill="#58ae34" opacity=".9" transform="rotate(-1 666.6 456.5)"/>
<ellipse cx="490.1" cy="444.8" rx="5.1" ry="2.8" fill="#1c5a16" opacity=".9" transform="rotate(11 490.1 444.8)"/>
<ellipse cx="724.8" cy="395.2" rx="5.9" ry="3.2" fill="#123c0e" opacity=".9" transform="rotate(31 724.8 395.2)"/>
<ellipse cx="716.2" cy="398.7" rx="6.0" ry="3.3" fill="#44982a" opacity=".9" transform="rotate(-6 716.2 398.7)"/>
<ellipse cx="650.0" cy="471.7" rx="9.0" ry="4.9" fill="#174a12" opacity=".9" transform="rotate(-19 650.0 471.7)"/>
<ellipse cx="624.0" cy="452.9" rx="5.9" ry="3.3" fill="#55aa30" opacity=".9" transform="rotate(-48 624.0 452.9)"/>
<ellipse cx="455.4" cy="461.1" rx="9.0" ry="5.0" fill="#123c0e" opacity=".9" transform="rotate(42 455.4 461.1)"/>
<ellipse cx="705.4" cy="478.9" rx="12.2" ry="6.7" fill="#70c040" opacity=".9" transform="rotate(5 705.4 478.9)"/>
<ellipse cx="458.0" cy="392.5" rx="3.2" ry="1.7" fill="#66ba3c" opacity=".9" transform="rotate(11 458.0 392.5)"/>
<ellipse cx="483.8" cy="474.8" rx="10.1" ry="5.5" fill="#66ba3c" opacity=".9" transform="rotate(33 483.8 474.8)"/>
<ellipse cx="507.2" cy="482.2" rx="8.0" ry="4.4" fill="#0f340c" opacity=".9" transform="rotate(-25 507.2 482.2)"/>
<ellipse cx="560.8" cy="458.7" rx="6.6" ry="3.6" fill="#58ae34" opacity=".9" transform="rotate(-4 560.8 458.7)"/>
<ellipse cx="587.8" cy="425.4" rx="6.5" ry="3.6" fill="#123c0e" opacity=".9" transform="rotate(-10 587.8 425.4)"/>
<ellipse cx="591.4" cy="407.4" rx="6.2" ry="3.4" fill="#174a12" opacity=".9" transform="rotate(2 591.4 407.4)"/>
<ellipse cx="720.2" cy="406.8" rx="5.2" ry="2.9" fill="#44982a" opacity=".9" transform="rotate(15 720.2 406.8)"/>
<ellipse cx="614.2" cy="415.9" rx="6.9" ry="3.8" fill="#58ae34" opacity=".9" transform="rotate(14 614.2 415.9)"/>
<ellipse cx="556.2" cy="445.0" rx="3.4" ry="2.4" fill="#0d2c09" opacity=".8"/>
<ellipse cx="574.0" cy="423.1" rx="1.9" ry="1.4" fill="#0d2c09" opacity=".8"/>
<ellipse cx="519.9" cy="471.3" rx="4.7" ry="3.3" fill="#0d2c09" opacity=".8"/>
<ellipse cx="622.4" cy="450.8" rx="3.7" ry="2.6" fill="#0d2c09" opacity=".8"/>
<ellipse cx="674.3" cy="415.4" rx="2.3" ry="1.6" fill="#0d2c09" opacity=".8"/>
<ellipse cx="677.0" cy="476.6" rx="4.5" ry="3.2" fill="#0d2c09" opacity=".8"/>
<ellipse cx="573.8" cy="472.7" rx="4.4" ry="3.1" fill="#0d2c09" opacity=".8"/>
<ellipse cx="500.8" cy="484.1" rx="3.1" ry="2.2" fill="#0d2c09" opacity=".8"/>
<ellipse cx="595.3" cy="439.2" rx="2.5" ry="1.7" fill="#0d2c09" opacity=".8"/>
<ellipse cx="700.6" cy="423.4" rx="2.6" ry="1.8" fill="#0d2c09" opacity=".8"/>
<ellipse cx="499.0" cy="417.4" rx="2.6" ry="1.8" fill="#0d2c09" opacity=".8"/>
<ellipse cx="585.1" cy="420.8" rx="2.7" ry="1.9" fill="#0d2c09" opacity=".8"/>
<ellipse cx="593.6" cy="441.5" rx="3.8" ry="2.7" fill="#0d2c09" opacity=".8"/>
<ellipse cx="719.3" cy="406.4" rx="2.0" ry="1.4" fill="#0d2c09" opacity=".8"/>
<ellipse cx="671.4" cy="408.2" rx="2.6" ry="1.8" fill="#0d2c09" opacity=".8"/>
<ellipse cx="509.2" cy="449.6" rx="3.9" ry="2.7" fill="#0d2c09" opacity=".8"/>
<ellipse cx="659.4" cy="430.4" rx="2.5" ry="1.7" fill="#0d2c09" opacity=".8"/>
<ellipse cx="636.2" cy="452.5" rx="3.2" ry="2.2" fill="#0d2c09" opacity=".8"/>
<ellipse cx="464.2" cy="444.8" rx="3.4" ry="2.4" fill="#0d2c09" opacity=".8"/>
<ellipse cx="490.2" cy="462.4" rx="3.8" ry="2.6" fill="#0d2c09" opacity=".8"/>
<ellipse cx="474.8" cy="465.8" rx="4.5" ry="3.2" fill="#0d2c09" opacity=".8"/>
<ellipse cx="459.9" cy="477.2" rx="3.4" ry="2.3" fill="#0d2c09" opacity=".8"/>
<ellipse cx="519.5" cy="412.0" rx="1.8" ry="1.3" fill="#0d2c09" opacity=".8"/>
<ellipse cx="518.9" cy="445.6" rx="2.8" ry="2.0" fill="#0d2c09" opacity=".8"/>
<ellipse cx="554.6" cy="443.3" rx="3.8" ry="2.6" fill="#0d2c09" opacity=".8"/>
<ellipse cx="478.7" cy="465.0" rx="3.0" ry="2.1" fill="#0d2c09" opacity=".8"/>
<ellipse cx="542.1" cy="405.7" rx="1.8" ry="1.2" fill="#0d2c09" opacity=".8"/>
<ellipse cx="675.2" cy="462.9" rx="4.9" ry="3.4" fill="#0d2c09" opacity=".8"/>
<ellipse cx="455.8" cy="422.3" rx="2.9" ry="2.0" fill="#0d2c09" opacity=".8"/>
<ellipse cx="719.7" cy="439.2" rx="3.0" ry="2.1" fill="#0d2c09" opacity=".8"/>
<ellipse cx="466.4" cy="430.9" rx="3.5" ry="2.5" fill="#0d2c09" opacity=".8"/>
<ellipse cx="575.0" cy="447.5" rx="3.2" ry="2.2" fill="#0d2c09" opacity=".8"/>
<ellipse cx="690.1" cy="468.8" rx="3.8" ry="2.7" fill="#0d2c09" opacity=".8"/>
<ellipse cx="564.9" cy="419.8" rx="3.2" ry="2.2" fill="#0d2c09" opacity=".8"/>
<ellipse cx="640.0" cy="438.8" rx="3.3" ry="2.3" fill="#0d2c09" opacity=".8"/>
<ellipse cx="614.6" cy="443.3" rx="2.7" ry="1.9" fill="#0d2c09" opacity=".8"/>
<ellipse cx="700.1" cy="451.3" rx="2.5" ry="1.8" fill="#0d2c09" opacity=".8"/>
<ellipse cx="704.8" cy="435.6" rx="4.0" ry="2.8" fill="#0d2c09" opacity=".8"/>
<ellipse cx="630.0" cy="406.1" rx="2.5" ry="1.8" fill="#0d2c09" opacity=".8"/>
<ellipse cx="583.6" cy="475.0" rx="3.0" ry="2.1" fill="#0d2c09" opacity=".8"/>
<ellipse cx="655.2" cy="429.9" rx="3.3" ry="2.3" fill="#0d2c09" opacity=".8"/>
<ellipse cx="634.6" cy="422.0" rx="3.0" ry="2.1" fill="#0d2c09" opacity=".8"/>
<ellipse cx="451.5" cy="459.6" rx="3.4" ry="2.4" fill="#0d2c09" opacity=".8"/>
<ellipse cx="621.2" cy="432.0" rx="2.7" ry="1.9" fill="#0d2c09" opacity=".8"/>
<ellipse cx="642.8" cy="415.6" rx="2.3" ry="1.6" fill="#0d2c09" opacity=".8"/>
<ellipse cx="535.2" cy="470.6" rx="4.0" ry="2.8" fill="#0d2c09" opacity=".8"/>
<ellipse cx="479.1" cy="472.1" rx="4.5" ry="3.1" fill="#0d2c09" opacity=".8"/>
<ellipse cx="721.2" cy="410.7" rx="1.9" ry="1.3" fill="#0d2c09" opacity=".8"/>
<ellipse cx="553.8" cy="465.1" rx="3.0" ry="2.1" fill="#0d2c09" opacity=".8"/>
<ellipse cx="592.9" cy="437.8" rx="2.9" ry="2.0" fill="#0d2c09" opacity=".8"/>
<ellipse cx="599.2" cy="415.2" rx="2.3" ry="1.6" fill="#0d2c09" opacity=".8"/>
<ellipse cx="558.0" cy="485.3" rx="4.0" ry="2.8" fill="#0d2c09" opacity=".8"/>
<ellipse cx="730.8" cy="423.9" rx="2.6" ry="1.8" fill="#0d2c09" opacity=".8"/>
<ellipse cx="690.6" cy="458.6" rx="3.4" ry="2.4" fill="#0d2c09" opacity=".8"/>
<ellipse cx="527.2" cy="467.7" rx="2.8" ry="2.0" fill="#0d2c09" opacity=".8"/>
<ellipse cx="577.4" cy="408.5" rx="2.8" ry="2.0" fill="#0d2c09" opacity=".8"/>
<ellipse cx="574.9" cy="421.9" rx="3.1" ry="2.2" fill="#0d2c09" opacity=".8"/>
<ellipse cx="490.0" cy="427.9" rx="2.8" ry="1.9" fill="#0d2c09" opacity=".8"/>
<ellipse cx="721.9" cy="440.3" rx="4.0" ry="2.8" fill="#0d2c09" opacity=".8"/>
<ellipse cx="610.5" cy="424.8" rx="2.7" ry="1.9" fill="#0d2c09" opacity=".8"/>
<ellipse cx="576.1" cy="407.8" rx="2.9" ry="2.0" fill="#0d2c09" opacity=".8"/>
<ellipse cx="617.9" cy="430.1" rx="3.3" ry="2.3" fill="#0d2c09" opacity=".8"/>
<ellipse cx="717.6" cy="410.2" rx="2.0" ry="1.4" fill="#0d2c09" opacity=".8"/>
<ellipse cx="656.2" cy="430.0" rx="2.1" ry="1.5" fill="#0d2c09" opacity=".8"/>
<ellipse cx="482.4" cy="436.2" rx="2.9" ry="2.0" fill="#0d2c09" opacity=".8"/>
<ellipse cx="489.6" cy="406.3" rx="1.9" ry="1.3" fill="#0d2c09" opacity=".8"/>
<ellipse cx="471.7" cy="411.8" rx="1.9" ry="1.3" fill="#0d2c09" opacity=".8"/>
<ellipse cx="485.4" cy="448.0" rx="3.9" ry="2.7" fill="#0d2c09" opacity=".8"/>
<ellipse cx="519.3" cy="439.6" rx="2.6" ry="1.8" fill="#0d2c09" opacity=".8"/>
<ellipse cx="458.8" cy="474.7" rx="4.6" ry="3.2" fill="#0d2c09" opacity=".8"/>
<ellipse cx="719.2" cy="417.4" rx="5.1" ry="2.6" fill="#66bc40" opacity=".9" transform="rotate(10 719.2 417.4)"/>
<ellipse cx="478.6" cy="475.6" rx="6.2" ry="3.1" fill="#66bc40" opacity=".9" transform="rotate(19 478.6 475.6)"/>
<ellipse cx="655.5" cy="454.7" rx="6.2" ry="3.1" fill="#66bc40" opacity=".9" transform="rotate(-0 655.5 454.7)"/>
<ellipse cx="574.6" cy="424.2" rx="4.9" ry="2.4" fill="#66bc40" opacity=".9" transform="rotate(9 574.6 424.2)"/>
<ellipse cx="528.3" cy="432.7" rx="6.1" ry="3.0" fill="#66bc40" opacity=".9" transform="rotate(-41 528.3 432.7)"/>
<ellipse cx="591.3" cy="470.9" rx="6.7" ry="3.3" fill="#66bc40" opacity=".9" transform="rotate(-39 591.3 470.9)"/>
<ellipse cx="593.6" cy="448.7" rx="7.3" ry="3.6" fill="#66bc40" opacity=".9" transform="rotate(-13 593.6 448.7)"/>
<ellipse cx="704.4" cy="441.3" rx="5.7" ry="2.9" fill="#66bc40" opacity=".9" transform="rotate(48 704.4 441.3)"/>
<ellipse cx="732.2" cy="477.8" rx="9.7" ry="4.9" fill="#66bc40" opacity=".9" transform="rotate(-24 732.2 477.8)"/>
<ellipse cx="624.4" cy="471.9" rx="6.6" ry="3.3" fill="#66bc40" opacity=".9" transform="rotate(50 624.4 471.9)"/>
<ellipse cx="680.8" cy="459.2" rx="7.4" ry="3.7" fill="#66bc40" opacity=".9" transform="rotate(-42 680.8 459.2)"/>
<ellipse cx="500.0" cy="475.6" rx="7.0" ry="3.5" fill="#66bc40" opacity=".9" transform="rotate(12 500.0 475.6)"/>
<ellipse cx="581.8" cy="424.7" rx="5.9" ry="3.0" fill="#66bc40" opacity=".9" transform="rotate(-40 581.8 424.7)"/>
<ellipse cx="479.8" cy="460.2" rx="7.0" ry="3.5" fill="#66bc40" opacity=".9" transform="rotate(15 479.8 460.2)"/>
<ellipse cx="462.3" cy="462.2" rx="6.1" ry="3.1" fill="#66bc40" opacity=".9" transform="rotate(46 462.3 462.2)"/>
<ellipse cx="571.1" cy="439.7" rx="5.8" ry="2.9" fill="#66bc40" opacity=".9" transform="rotate(20 571.1 439.7)"/>
<ellipse cx="635.3" cy="466.3" rx="7.1" ry="3.6" fill="#66bc40" opacity=".9" transform="rotate(7 635.3 466.3)"/>
<ellipse cx="503.6" cy="449.2" rx="7.8" ry="3.9" fill="#66bc40" opacity=".9" transform="rotate(46 503.6 449.2)"/>
<ellipse cx="732.9" cy="469.1" rx="7.5" ry="3.8" fill="#66bc40" opacity=".9" transform="rotate(34 732.9 469.1)"/>
<ellipse cx="661.7" cy="428.3" rx="6.3" ry="3.1" fill="#66bc40" opacity=".9" transform="rotate(44 661.7 428.3)"/>
<ellipse cx="700.6" cy="473.3" rx="7.0" ry="3.5" fill="#66bc40" opacity=".9" transform="rotate(29 700.6 473.3)"/>
<ellipse cx="539.1" cy="446.1" rx="6.0" ry="3.0" fill="#66bc40" opacity=".9" transform="rotate(30 539.1 446.1)"/>
<ellipse cx="690.7" cy="474.0" rx="8.5" ry="4.2" fill="#66bc40" opacity=".9" transform="rotate(-33 690.7 474.0)"/>
<ellipse cx="611.9" cy="421.8" rx="4.7" ry="2.3" fill="#66bc40" opacity=".9" transform="rotate(-16 611.9 421.8)"/>
<ellipse cx="494.1" cy="417.8" rx="5.3" ry="2.6" fill="#66bc40" opacity=".9" transform="rotate(-28 494.1 417.8)"/>
<ellipse cx="543.8" cy="474.4" rx="9.1" ry="4.6" fill="#66bc40" opacity=".9" transform="rotate(-20 543.8 474.4)"/>
<ellipse cx="562.5" cy="430.3" rx="4.5" ry="2.2" fill="#66bc40" opacity=".9" transform="rotate(-6 562.5 430.3)"/>
<ellipse cx="453.6" cy="438.9" rx="6.8" ry="3.4" fill="#66bc40" opacity=".9" transform="rotate(-12 453.6 438.9)"/>
<ellipse cx="723.7" cy="410.0" rx="4.4" ry="2.2" fill="#66bc40" opacity=".9" transform="rotate(-25 723.7 410.0)"/>
<ellipse cx="478.4" cy="411.8" rx="4.9" ry="2.4" fill="#66bc40" opacity=".9" transform="rotate(8 478.4 411.8)"/>
<ellipse cx="520.2" cy="448.3" rx="5.9" ry="2.9" fill="#66bc40" opacity=".9" transform="rotate(47 520.2 448.3)"/>
<ellipse cx="732.0" cy="438.3" rx="7.3" ry="3.7" fill="#66bc40" opacity=".9" transform="rotate(-38 732.0 438.3)"/>
<ellipse cx="456.0" cy="474.5" rx="8.6" ry="4.3" fill="#66bc40" opacity=".9" transform="rotate(31 456.0 474.5)"/>
<ellipse cx="606.7" cy="462.9" rx="8.4" ry="4.2" fill="#66bc40" opacity=".9" transform="rotate(-35 606.7 462.9)"/>
<ellipse cx="525.8" cy="451.0" rx="6.3" ry="3.2" fill="#66bc40" opacity=".9" transform="rotate(-31 525.8 451.0)"/>
<ellipse cx="613.3" cy="463.8" rx="8.3" ry="4.2" fill="#66bc40" opacity=".9" transform="rotate(13 613.3 463.8)"/>
<ellipse cx="712.7" cy="455.5" rx="8.0" ry="4.0" fill="#66bc40" opacity=".9" transform="rotate(7 712.7 455.5)"/>
<ellipse cx="714.4" cy="434.8" rx="5.7" ry="2.9" fill="#66bc40" opacity=".9" transform="rotate(-40 714.4 434.8)"/>
<ellipse cx="651.3" cy="435.3" rx="7.2" ry="3.6" fill="#66bc40" opacity=".9" transform="rotate(15 651.3 435.3)"/>
<ellipse cx="717.1" cy="460.4" rx="8.2" ry="4.1" fill="#66bc40" opacity=".9" transform="rotate(-5 717.1 460.4)"/>
<ellipse cx="666.5" cy="445.1" rx="6.0" ry="3.0" fill="#66bc40" opacity=".9" transform="rotate(-39 666.5 445.1)"/>
<ellipse cx="680.6" cy="457.1" rx="6.2" ry="3.1" fill="#66bc40" opacity=".9" transform="rotate(18 680.6 457.1)"/>
<ellipse cx="486.4" cy="477.8" rx="6.6" ry="3.3" fill="#66bc40" opacity=".9" transform="rotate(-1 486.4 477.8)"/>
<ellipse cx="720.6" cy="435.4" rx="7.5" ry="3.7" fill="#66bc40" opacity=".9" transform="rotate(-5 720.6 435.4)"/>
<ellipse cx="630.0" cy="470.3" rx="6.5" ry="3.2" fill="#66bc40" opacity=".9" transform="rotate(47 630.0 470.3)"/>
</g>
<ellipse cx="745.2" cy="331.6" rx="0.7" ry="0.9" fill="#ddcf1f"/>
<ellipse cx="745.6" cy="331.7" rx="0.7" ry="0.9" fill="#d1c31b"/>
<ellipse cx="744.9" cy="331.7" rx="0.7" ry="0.9" fill="#ddd01f"/>
<ellipse cx="746.1" cy="332.1" rx="0.7" ry="0.9" fill="#ddcf1e"/>
<ellipse cx="744.4" cy="332.1" rx="0.7" ry="0.9" fill="#e5d620"/>
<ellipse cx="745.9" cy="332.3" rx="0.7" ry="0.9" fill="#d2c41a"/>
<ellipse cx="744.4" cy="332.3" rx="0.7" ry="0.9" fill="#d2c41b"/>
<ellipse cx="733.2" cy="332.6" rx="0.7" ry="0.9" fill="#c6bd1d"/>
<ellipse cx="728.0" cy="333.0" rx="0.7" ry="0.9" fill="#c6bd1d"/>
<ellipse cx="726.9" cy="333.0" rx="0.7" ry="0.9" fill="#c6bd1d"/>
<ellipse cx="734.3" cy="333.1" rx="0.7" ry="0.9" fill="#d1c41b"/>
<ellipse cx="743.3" cy="333.2" rx="0.7" ry="1.0" fill="#dfd01e"/>
<ellipse cx="747.3" cy="333.2" rx="0.8" ry="1.1" fill="#d4c51a"/>
<ellipse cx="726.5" cy="333.6" rx="0.7" ry="0.9" fill="#e5d620"/>
<ellipse cx="736.6" cy="333.5" rx="0.8" ry="1.0" fill="#e5d61f"/>
<ellipse cx="738.8" cy="333.5" rx="0.8" ry="1.0" fill="#c9c01d"/>
<ellipse cx="725.7" cy="333.6" rx="0.7" ry="0.9" fill="#c7bd1c"/>
<ellipse cx="725.7" cy="333.9" rx="0.7" ry="0.9" fill="#ded01e"/>
<ellipse cx="734.5" cy="333.9" rx="0.8" ry="1.0" fill="#ded01d"/>
<ellipse cx="742.1" cy="334.0" rx="0.8" ry="1.0" fill="#d4c519"/>
<ellipse cx="732.7" cy="334.1" rx="0.7" ry="1.0" fill="#d3c41a"/>
<ellipse cx="716.8" cy="334.3" rx="0.7" ry="0.9" fill="#ded01e"/>
<ellipse cx="708.9" cy="334.5" rx="0.7" ry="0.9" fill="#d1c31b"/>
<ellipse cx="747.1" cy="334.3" rx="0.8" ry="1.1" fill="#e1d21c"/>
<ellipse cx="736.2" cy="334.5" rx="0.8" ry="1.1" fill="#d5c61a"/>
<ellipse cx="718.6" cy="334.6" rx="0.7" ry="1.0" fill="#d2c41b"/>
<ellipse cx="717.7" cy="334.7" rx="0.8" ry="1.0" fill="#d2c41b"/>
<ellipse cx="699.4" cy="335.0" rx="0.7" ry="0.9" fill="#e4d621"/>
<ellipse cx="712.5" cy="335.0" rx="0.7" ry="0.9" fill="#d2c41a"/>
<ellipse cx="704.0" cy="335.0" rx="0.7" ry="0.9" fill="#e5d620"/>
<ellipse cx="697.8" cy="335.2" rx="0.7" ry="0.9" fill="#c6bd1d"/>
<ellipse cx="729.8" cy="335.0" rx="0.8" ry="1.1" fill="#dfd01d"/>
<ellipse cx="707.8" cy="335.2" rx="0.7" ry="1.0" fill="#d2c41b"/>
<ellipse cx="742.0" cy="335.0" rx="0.9" ry="1.2" fill="#cec21b"/>
<ellipse cx="691.5" cy="335.5" rx="0.6" ry="0.9" fill="#d0c21b"/>
<ellipse cx="692.5" cy="335.5" rx="0.7" ry="0.9" fill="#ddcf1f"/>
<ellipse cx="737.0" cy="335.2" rx="0.9" ry="1.2" fill="#cdc21b"/>
<ellipse cx="690.6" cy="335.6" rx="0.7" ry="0.9" fill="#dccf1f"/>
<ellipse cx="715.2" cy="335.5" rx="0.8" ry="1.0" fill="#d4c51a"/>
<ellipse cx="709.6" cy="335.5" rx="0.7" ry="0.9" fill="#e5d51f"/>
<ellipse cx="694.8" cy="335.7" rx="0.7" ry="0.9" fill="#d1c31a"/>
<ellipse cx="689.0" cy="335.7" rx="0.7" ry="0.9" fill="#c6bd1d"/>
<ellipse cx="707.1" cy="335.7" rx="0.7" ry="1.0" fill="#d3c41a"/>
<ellipse cx="709.8" cy="335.8" rx="0.8" ry="1.0" fill="#e6d51f"/>
<ellipse cx="739.0" cy="335.8" rx="0.9" ry="1.1" fill="#e1d01b"/>
<ellipse cx="683.6" cy="336.1" rx="0.6" ry="0.9" fill="#e4d621"/>
<ellipse cx="679.7" cy="336.4" rx="0.6" ry="0.9" fill="#e4d521"/>
<ellipse cx="709.0" cy="336.2" rx="0.8" ry="1.0" fill="#dfd01d"/>
<ellipse cx="714.4" cy="336.2" rx="0.8" ry="1.1" fill="#d5c619"/>
<ellipse cx="694.1" cy="336.4" rx="0.7" ry="0.9" fill="#decf1e"/>
<ellipse cx="678.2" cy="336.5" rx="0.7" ry="0.9" fill="#d0c31b"/>
<ellipse cx="698.5" cy="336.6" rx="0.8" ry="1.0" fill="#cac01d"/>
<ellipse cx="700.9" cy="336.6" rx="0.8" ry="1.0" fill="#d4c51a"/>
<ellipse cx="678.3" cy="336.7" rx="0.7" ry="0.9" fill="#ddcf1e"/>
<ellipse cx="694.4" cy="336.6" rx="0.8" ry="1.0" fill="#e6d61f"/>
<ellipse cx="678.9" cy="336.9" rx="0.7" ry="0.9" fill="#ddcf1f"/>
<ellipse cx="739.7" cy="336.5" rx="1.0" ry="1.4" fill="#d1c41b"/>
<ellipse cx="671.2" cy="337.0" rx="0.6" ry="0.8" fill="#ddcf1f"/>
<ellipse cx="703.7" cy="336.9" rx="0.8" ry="1.1" fill="#d5c61a"/>
<ellipse cx="671.1" cy="337.1" rx="0.7" ry="0.9" fill="#d0c21b"/>
<ellipse cx="684.7" cy="337.1" rx="0.7" ry="1.0" fill="#e6d620"/>
<ellipse cx="715.5" cy="336.9" rx="0.9" ry="1.2" fill="#e8d71f"/>
<ellipse cx="688.2" cy="337.1" rx="0.7" ry="1.0" fill="#dfd01e"/>
<ellipse cx="743.9" cy="336.7" rx="1.0" ry="1.3" fill="#dac817"/>
<ellipse cx="699.5" cy="337.1" rx="0.8" ry="1.0" fill="#e7d71f"/>
<ellipse cx="686.1" cy="337.3" rx="0.7" ry="1.0" fill="#e5d51f"/>
<ellipse cx="721.1" cy="337.1" rx="0.9" ry="1.2" fill="#d8c91c"/>
<ellipse cx="714.2" cy="337.1" rx="0.9" ry="1.2" fill="#e7d61d"/>
<ellipse cx="727.1" cy="337.1" rx="0.9" ry="1.2" fill="#e3d31b"/>
<ellipse cx="666.8" cy="337.5" rx="0.7" ry="0.9" fill="#e4d621"/>
<ellipse cx="684.0" cy="337.5" rx="0.7" ry="1.0" fill="#e6d61f"/>
<ellipse cx="739.7" cy="337.1" rx="1.0" ry="1.4" fill="#e3d019"/>
<ellipse cx="719.5" cy="337.3" rx="0.9" ry="1.2" fill="#cfc21a"/>
<ellipse cx="674.4" cy="337.7" rx="0.7" ry="1.0" fill="#c8be1d"/>
<ellipse cx="665.8" cy="337.7" rx="0.7" ry="0.9" fill="#c6bd1d"/>
<ellipse cx="676.1" cy="337.7" rx="0.8" ry="1.0" fill="#d3c51c"/>
<ellipse cx="688.7" cy="337.6" rx="0.8" ry="1.1" fill="#dfcf1d"/>
<ellipse cx="708.0" cy="337.6" rx="0.9" ry="1.2" fill="#d6c518"/>
<ellipse cx="721.9" cy="337.5" rx="0.9" ry="1.2" fill="#e2d01a"/>
<ellipse cx="679.1" cy="337.9" rx="0.7" ry="1.0" fill="#dfd01e"/>
<ellipse cx="658.2" cy="338.0" rx="0.6" ry="0.8" fill="#d0c21b"/>
<ellipse cx="662.9" cy="338.0" rx="0.7" ry="0.9" fill="#ddd01f"/>
<ellipse cx="692.7" cy="337.8" rx="0.9" ry="1.1" fill="#e7d61e"/>
<ellipse cx="699.6" cy="337.8" rx="0.9" ry="1.2" fill="#e8d920"/>
<ellipse cx="661.6" cy="338.1" rx="0.7" ry="0.9" fill="#ddd01e"/>
<ellipse cx="738.6" cy="337.7" rx="1.0" ry="1.4" fill="#ead91c"/>
<ellipse cx="719.6" cy="337.8" rx="1.0" ry="1.3" fill="#e9da20"/>
<ellipse cx="729.8" cy="337.8" rx="1.1" ry="1.4" fill="#e9d81d"/>
<ellipse cx="682.1" cy="338.1" rx="0.8" ry="1.1" fill="#e7d821"/>
<ellipse cx="658.4" cy="338.4" rx="0.7" ry="0.9" fill="#ddcf1f"/>
<ellipse cx="682.6" cy="338.3" rx="0.8" ry="1.0" fill="#e6d51e"/>
<ellipse cx="664.9" cy="338.4" rx="0.7" ry="1.0" fill="#c8bd1c"/>
<ellipse cx="656.6" cy="338.8" rx="0.7" ry="0.9" fill="#ddcf1e"/>
<ellipse cx="677.7" cy="338.7" rx="0.8" ry="1.0" fill="#cbc01b"/>
<ellipse cx="724.2" cy="338.5" rx="0.9" ry="1.2" fill="#d4c81d"/>
<ellipse cx="684.3" cy="338.6" rx="0.9" ry="1.2" fill="#e7d71f"/>
<ellipse cx="677.2" cy="338.7" rx="0.8" ry="1.1" fill="#cabf1b"/>
<ellipse cx="701.8" cy="338.6" rx="0.9" ry="1.2" fill="#e2d11b"/>
<ellipse cx="707.4" cy="338.6" rx="1.0" ry="1.3" fill="#e2d01a"/>
<ellipse cx="664.6" cy="338.9" rx="0.8" ry="1.0" fill="#e6d71f"/>
<ellipse cx="644.6" cy="339.1" rx="0.7" ry="0.9" fill="#e4d521"/>
<ellipse cx="734.4" cy="338.6" rx="1.1" ry="1.4" fill="#ecdb20"/>
<ellipse cx="726.6" cy="338.5" rx="1.1" ry="1.5" fill="#e3d019"/>
<ellipse cx="644.5" cy="339.3" rx="0.7" ry="0.9" fill="#d1c31c"/>
<ellipse cx="641.8" cy="339.3" rx="0.7" ry="0.9" fill="#e4d621"/>
<ellipse cx="647.0" cy="339.4" rx="0.7" ry="0.9" fill="#c7be1d"/>
<ellipse cx="641.1" cy="339.6" rx="0.7" ry="0.9" fill="#d1c31b"/>
<ellipse cx="714.2" cy="339.1" rx="1.0" ry="1.4" fill="#ead91c"/>
<ellipse cx="704.1" cy="339.2" rx="1.0" ry="1.3" fill="#e9d81c"/>
<ellipse cx="710.2" cy="339.1" rx="1.0" ry="1.4" fill="#e8d51b"/>
<ellipse cx="639.0" cy="339.7" rx="0.7" ry="0.9" fill="#ddd01f"/>
<ellipse cx="664.8" cy="339.6" rx="0.8" ry="1.1" fill="#e0d11e"/>
<ellipse cx="635.3" cy="340.1" rx="0.7" ry="0.9" fill="#e5d621"/>
<ellipse cx="738.7" cy="339.4" rx="1.3" ry="1.7" fill="#e7d519"/>
<ellipse cx="633.8" cy="340.2" rx="0.7" ry="0.9" fill="#d1c31b"/>
<ellipse cx="634.5" cy="340.2" rx="0.7" ry="0.9" fill="#ddd01f"/>
<ellipse cx="681.8" cy="340.1" rx="0.9" ry="1.2" fill="#cec119"/>
<ellipse cx="652.2" cy="340.2" rx="0.8" ry="1.0" fill="#dfcf1d"/>
<ellipse cx="635.0" cy="340.4" rx="0.7" ry="0.9" fill="#c7bd1c"/>
<ellipse cx="721.6" cy="340.0" rx="1.0" ry="1.3" fill="#e7d71e"/>
<ellipse cx="641.1" cy="340.4" rx="0.7" ry="0.9" fill="#c8bf1c"/>
<ellipse cx="684.0" cy="340.3" rx="0.9" ry="1.2" fill="#e2d01a"/>
<ellipse cx="742.4" cy="339.7" rx="1.3" ry="1.7" fill="#d9ca19"/>
<ellipse cx="678.4" cy="340.3" rx="0.9" ry="1.2" fill="#e2d21c"/>
<ellipse cx="626.6" cy="340.6" rx="0.7" ry="0.9" fill="#c6bd1d"/>
<ellipse cx="732.2" cy="339.9" rx="1.2" ry="1.6" fill="#d6c516"/>
<ellipse cx="644.6" cy="340.6" rx="0.7" ry="1.0" fill="#d3c41a"/>
<ellipse cx="733.0" cy="340.0" rx="1.2" ry="1.6" fill="#d8c919"/>
<ellipse cx="734.7" cy="340.2" rx="1.1" ry="1.4" fill="#e1d11c"/>
<ellipse cx="633.9" cy="340.7" rx="0.7" ry="0.9" fill="#ded01e"/>
<ellipse cx="734.6" cy="340.1" rx="1.2" ry="1.6" fill="#dec914"/>
<ellipse cx="665.5" cy="340.5" rx="0.9" ry="1.2" fill="#e8d920"/>
<ellipse cx="654.8" cy="340.7" rx="0.8" ry="1.1" fill="#d5c61a"/>
<ellipse cx="710.0" cy="340.6" rx="1.0" ry="1.3" fill="#d4c417"/>
<ellipse cx="630.7" cy="341.0" rx="0.7" ry="1.0" fill="#e5d620"/>
<ellipse cx="640.3" cy="340.9" rx="0.8" ry="1.0" fill="#e6d61f"/>
<ellipse cx="629.1" cy="341.1" rx="0.7" ry="0.9" fill="#d2c41c"/>
<ellipse cx="681.3" cy="340.7" rx="1.0" ry="1.3" fill="#e8d61c"/>
<ellipse cx="691.6" cy="340.7" rx="1.0" ry="1.3" fill="#dbca18"/>
<ellipse cx="620.6" cy="341.2" rx="0.7" ry="0.9" fill="#c6bc1d"/>
<ellipse cx="621.9" cy="341.1" rx="0.7" ry="0.9" fill="#ddcf1f"/>
<ellipse cx="682.8" cy="340.7" rx="1.0" ry="1.3" fill="#e3d11a"/>
<ellipse cx="648.7" cy="341.0" rx="0.8" ry="1.1" fill="#cbc01c"/>
<ellipse cx="678.4" cy="340.9" rx="1.0" ry="1.3" fill="#e2d01a"/>
<ellipse cx="632.1" cy="341.3" rx="0.8" ry="1.0" fill="#e6d720"/>
<ellipse cx="720.7" cy="340.7" rx="1.2" ry="1.6" fill="#deca16"/>
<ellipse cx="659.7" cy="341.1" rx="0.9" ry="1.2" fill="#d7c71a"/>
<ellipse cx="713.7" cy="340.7" rx="1.2" ry="1.6" fill="#e7d71e"/>
<ellipse cx="712.9" cy="340.8" rx="1.2" ry="1.5" fill="#ddca16"/>
<ellipse cx="738.8" cy="340.9" rx="1.2" ry="1.6" fill="#e7d116"/>
<ellipse cx="720.7" cy="341.2" rx="1.2" ry="1.5" fill="#e8d618"/>
<ellipse cx="613.1" cy="341.9" rx="0.6" ry="0.9" fill="#d0c31b"/>
<ellipse cx="701.5" cy="341.2" rx="1.1" ry="1.5" fill="#dece1c"/>
<ellipse cx="674.1" cy="341.6" rx="0.9" ry="1.2" fill="#d1c319"/>
<ellipse cx="624.4" cy="341.9" rx="0.8" ry="1.0" fill="#e5d61f"/>
<ellipse cx="686.6" cy="341.6" rx="1.1" ry="1.4" fill="#d3c518"/>
<ellipse cx="633.6" cy="341.9" rx="0.8" ry="1.0" fill="#d4c61a"/>
<ellipse cx="609.7" cy="342.1" rx="0.7" ry="0.9" fill="#c6bd1d"/>
<ellipse cx="627.4" cy="342.0" rx="0.8" ry="1.0" fill="#decf1d"/>
<ellipse cx="644.6" cy="341.8" rx="0.9" ry="1.2" fill="#d6c81c"/>
<ellipse cx="673.5" cy="341.7" rx="1.0" ry="1.3" fill="#e4d51e"/>
<ellipse cx="667.7" cy="341.7" rx="1.0" ry="1.4" fill="#e9d81d"/>
<ellipse cx="649.3" cy="342.0" rx="0.8" ry="1.1" fill="#d6c518"/>
<ellipse cx="656.3" cy="341.8" rx="0.9" ry="1.2" fill="#e3d41f"/>
<ellipse cx="608.2" cy="342.3" rx="0.7" ry="0.9" fill="#e4d520"/>
<ellipse cx="652.1" cy="342.1" rx="0.9" ry="1.2" fill="#d8c819"/>
<ellipse cx="649.7" cy="342.1" rx="0.9" ry="1.2" fill="#cec21a"/>
<ellipse cx="637.4" cy="342.2" rx="0.8" ry="1.1" fill="#e6d51e"/>
<ellipse cx="645.4" cy="342.2" rx="0.9" ry="1.2" fill="#e1d21c"/>
<ellipse cx="736.4" cy="341.5" rx="1.4" ry="1.9" fill="#ddcd16"/>
<ellipse cx="648.3" cy="342.1" rx="1.0" ry="1.3" fill="#e2d21c"/>
<ellipse cx="655.5" cy="342.2" rx="1.0" ry="1.3" fill="#e8d81e"/>
<ellipse cx="697.3" cy="342.0" rx="1.1" ry="1.4" fill="#d8cb1d"/>
<ellipse cx="619.8" cy="342.5" rx="0.8" ry="1.0" fill="#c9c01d"/>
<ellipse cx="688.0" cy="342.1" rx="1.1" ry="1.5" fill="#ead71a"/>
<ellipse cx="625.9" cy="342.5" rx="0.8" ry="1.0" fill="#d3c419"/>
<ellipse cx="639.4" cy="342.4" rx="0.8" ry="1.1" fill="#d6c619"/>
<ellipse cx="699.8" cy="342.2" rx="1.1" ry="1.5" fill="#d6c516"/>
<ellipse cx="630.5" cy="342.6" rx="0.8" ry="1.1" fill="#e0d11d"/>
<ellipse cx="600.9" cy="342.9" rx="0.6" ry="0.8" fill="#d0c31c"/>
<ellipse cx="663.9" cy="342.5" rx="1.0" ry="1.3" fill="#ead81c"/>
<ellipse cx="680.3" cy="342.3" rx="1.1" ry="1.5" fill="#ebdb20"/>
<ellipse cx="688.4" cy="342.3" rx="1.1" ry="1.5" fill="#ead519"/>
<ellipse cx="716.9" cy="342.3" rx="1.2" ry="1.6" fill="#ebd517"/>
<ellipse cx="653.3" cy="342.6" rx="1.0" ry="1.3" fill="#e3d41f"/>
<ellipse cx="707.1" cy="342.1" rx="1.3" ry="1.7" fill="#ecd91b"/>
<ellipse cx="600.8" cy="343.1" rx="0.7" ry="0.9" fill="#ddcf1f"/>
<ellipse cx="667.3" cy="342.7" rx="1.0" ry="1.3" fill="#e9d71b"/>
<ellipse cx="622.8" cy="343.0" rx="0.8" ry="1.0" fill="#e7d71f"/>
<ellipse cx="600.9" cy="343.1" rx="0.7" ry="0.9" fill="#c7be1d"/>
<ellipse cx="644.8" cy="342.8" rx="1.0" ry="1.3" fill="#d8c818"/>
<ellipse cx="651.6" cy="342.8" rx="1.0" ry="1.4" fill="#e3d21c"/>
<ellipse cx="717.3" cy="342.3" rx="1.4" ry="1.9" fill="#e9d619"/>
<ellipse cx="617.7" cy="343.1" rx="0.8" ry="1.1" fill="#dfd01d"/>
<ellipse cx="645.2" cy="342.9" rx="1.0" ry="1.3" fill="#e3d41f"/>
<ellipse cx="610.8" cy="343.3" rx="0.8" ry="1.0" fill="#ded01d"/>
<ellipse cx="693.4" cy="342.7" rx="1.3" ry="1.7" fill="#d7c516"/>
<ellipse cx="661.0" cy="343.1" rx="1.0" ry="1.4" fill="#e9d71b"/>
<ellipse cx="603.6" cy="343.5" rx="0.7" ry="1.0" fill="#c8bf1c"/>
<ellipse cx="691.8" cy="342.9" rx="1.2" ry="1.6" fill="#dacd1d"/>
<ellipse cx="615.5" cy="343.6" rx="0.8" ry="1.0" fill="#e0d11d"/>
<ellipse cx="591.8" cy="343.8" rx="0.6" ry="0.9" fill="#e5d621"/>
<ellipse cx="663.3" cy="343.1" rx="1.1" ry="1.5" fill="#d5c91d"/>
<ellipse cx="639.4" cy="343.4" rx="0.9" ry="1.2" fill="#e8d61d"/>
<ellipse cx="650.0" cy="343.5" rx="0.9" ry="1.2" fill="#ead81c"/>
<ellipse cx="590.9" cy="343.8" rx="0.7" ry="0.9" fill="#e4d621"/>
<ellipse cx="602.4" cy="343.8" rx="0.7" ry="1.0" fill="#decf1e"/>
<ellipse cx="705.1" cy="343.1" rx="1.3" ry="1.7" fill="#e2cf15"/>
<ellipse cx="648.3" cy="343.4" rx="1.0" ry="1.4" fill="#e2d01a"/>
<ellipse cx="688.8" cy="343.0" rx="1.3" ry="1.7" fill="#d7c717"/>
<ellipse cx="703.1" cy="343.1" rx="1.2" ry="1.6" fill="#dbcc17"/>
<ellipse cx="595.5" cy="343.9" rx="0.7" ry="0.9" fill="#ddcf1e"/>
<ellipse cx="595.9" cy="344.0" rx="0.7" ry="0.9" fill="#d2c41b"/>
<ellipse cx="612.0" cy="343.8" rx="0.8" ry="1.0" fill="#cbc11b"/>
<ellipse cx="616.3" cy="343.8" rx="0.8" ry="1.1" fill="#e7d71e"/>
<ellipse cx="615.5" cy="343.9" rx="0.8" ry="1.1" fill="#d5c519"/>
<ellipse cx="619.1" cy="343.9" rx="0.8" ry="1.1" fill="#e1d21c"/>
<ellipse cx="589.9" cy="344.1" rx="0.7" ry="0.9" fill="#e5d621"/>
<ellipse cx="621.2" cy="343.9" rx="0.9" ry="1.1" fill="#cdc11a"/>
<ellipse cx="644.2" cy="343.7" rx="1.0" ry="1.3" fill="#d2c519"/>
<ellipse cx="734.2" cy="343.2" rx="1.4" ry="1.8" fill="#e4ce13"/>
<ellipse cx="653.0" cy="343.6" rx="1.1" ry="1.4" fill="#d2c218"/>
<ellipse cx="739.3" cy="343.3" rx="1.4" ry="1.8" fill="#e2d015"/>
<ellipse cx="591.9" cy="344.2" rx="0.7" ry="0.9" fill="#e5d620"/>
<ellipse cx="587.2" cy="344.3" rx="0.7" ry="0.9" fill="#d1c31b"/>
<ellipse cx="743.7" cy="343.3" rx="1.4" ry="1.8" fill="#e7d216"/>
<ellipse cx="636.0" cy="343.9" rx="1.0" ry="1.3" fill="#e8d61c"/>
<ellipse cx="659.7" cy="343.9" rx="1.0" ry="1.3" fill="#dcc916"/>
<ellipse cx="584.3" cy="344.4" rx="0.6" ry="0.9" fill="#c6bd1d"/>
<ellipse cx="657.2" cy="344.0" rx="1.0" ry="1.3" fill="#d5c718"/>
<ellipse cx="728.7" cy="342.3" rx="2.7" ry="3.0" fill="#e1ca13"/>
<ellipse cx="728.7" cy="342.3" rx="1.3" ry="1.5" fill="#a0600e"/>
<ellipse cx="713.6" cy="343.8" rx="1.2" ry="1.6" fill="#e4d115"/>
<ellipse cx="686.0" cy="343.8" rx="1.3" ry="1.7" fill="#d8c515"/>
<ellipse cx="688.1" cy="343.8" rx="1.3" ry="1.8" fill="#e0cb15"/>
<ellipse cx="709.6" cy="343.8" rx="1.4" ry="1.8" fill="#efdb18"/>
<ellipse cx="583.2" cy="344.9" rx="0.7" ry="0.9" fill="#e5d721"/>
<ellipse cx="712.2" cy="343.9" rx="1.4" ry="1.9" fill="#e3cd14"/>
<ellipse cx="588.0" cy="344.9" rx="0.7" ry="0.9" fill="#d2c41a"/>
<ellipse cx="628.9" cy="344.6" rx="1.0" ry="1.3" fill="#d0c119"/>
<ellipse cx="580.7" cy="345.0" rx="0.7" ry="0.9" fill="#ddcf1f"/>
<ellipse cx="589.7" cy="344.9" rx="0.8" ry="1.0" fill="#d2c41a"/>
<ellipse cx="648.7" cy="344.4" rx="1.2" ry="1.5" fill="#ebd91b"/>
<ellipse cx="626.2" cy="344.7" rx="0.9" ry="1.2" fill="#e2d01a"/>
<ellipse cx="669.1" cy="344.4" rx="1.3" ry="1.7" fill="#eddc1f"/>
<ellipse cx="670.5" cy="344.5" rx="1.2" ry="1.5" fill="#dacd1d"/>
<ellipse cx="721.5" cy="344.3" rx="1.3" ry="1.8" fill="#e8d61c"/>
<ellipse cx="605.7" cy="345.0" rx="0.8" ry="1.1" fill="#cdc11b"/>
<ellipse cx="589.3" cy="345.2" rx="0.8" ry="1.0" fill="#c9bf1c"/>
<ellipse cx="746.0" cy="344.4" rx="1.4" ry="1.9" fill="#e8d111"/>
<ellipse cx="655.2" cy="344.8" rx="1.1" ry="1.5" fill="#ead519"/>
<ellipse cx="599.3" cy="345.2" rx="0.8" ry="1.1" fill="#e0d11d"/>
<ellipse cx="634.1" cy="344.8" rx="1.1" ry="1.4" fill="#eada20"/>
<ellipse cx="734.8" cy="344.3" rx="1.6" ry="2.0" fill="#edd817"/>
<ellipse cx="734.8" cy="344.3" rx="0.6" ry="0.8" fill="#cda015"/>
<ellipse cx="591.8" cy="345.3" rx="0.8" ry="1.1" fill="#e6d61f"/>
<ellipse cx="574.8" cy="345.5" rx="0.7" ry="0.9" fill="#ddcf1f"/>
<ellipse cx="704.1" cy="344.8" rx="1.2" ry="1.6" fill="#efdb17"/>
<ellipse cx="623.2" cy="345.2" rx="0.9" ry="1.2" fill="#d0c119"/>
<ellipse cx="628.9" cy="345.2" rx="1.0" ry="1.3" fill="#dbcc1c"/>
<ellipse cx="685.2" cy="344.9" rx="1.3" ry="1.6" fill="#e0ca13"/>
<ellipse cx="643.4" cy="345.0" rx="1.1" ry="1.5" fill="#ebd91b"/>
<ellipse cx="571.8" cy="345.8" rx="0.7" ry="0.9" fill="#ddcf1f"/>
<ellipse cx="609.3" cy="345.5" rx="0.9" ry="1.2" fill="#cec21a"/>
<ellipse cx="714.6" cy="344.7" rx="1.5" ry="2.0" fill="#efda19"/>
<ellipse cx="714.6" cy="344.7" rx="0.6" ry="0.7" fill="#cfa215"/>
<ellipse cx="616.5" cy="345.5" rx="0.9" ry="1.2" fill="#d9c918"/>
<ellipse cx="635.2" cy="345.4" rx="1.0" ry="1.3" fill="#d5c91d"/>
<ellipse cx="711.1" cy="345.0" rx="1.3" ry="1.7" fill="#e4cb12"/>
<ellipse cx="628.9" cy="345.4" rx="1.1" ry="1.4" fill="#d2c218"/>
<ellipse cx="568.6" cy="345.9" rx="0.7" ry="0.9" fill="#c6bd1d"/>
<ellipse cx="625.8" cy="345.5" rx="1.0" ry="1.4" fill="#e4d51e"/>
<ellipse cx="741.9" cy="344.6" rx="1.7" ry="2.3" fill="#f1db18"/>
<ellipse cx="741.9" cy="344.6" rx="0.7" ry="0.9" fill="#ca9b14"/>
<ellipse cx="616.3" cy="345.6" rx="1.0" ry="1.3" fill="#e3d21c"/>
<ellipse cx="674.4" cy="345.3" rx="1.2" ry="1.6" fill="#ddcf1d"/>
<ellipse cx="669.8" cy="345.1" rx="1.4" ry="1.8" fill="#e2d11c"/>
<ellipse cx="714.5" cy="345.2" rx="1.3" ry="1.7" fill="#ead113"/>
<ellipse cx="606.9" cy="345.7" rx="0.9" ry="1.2" fill="#cfc31b"/>
<ellipse cx="675.1" cy="345.2" rx="1.3" ry="1.7" fill="#e3d21c"/>
<ellipse cx="692.2" cy="345.4" rx="1.2" ry="1.6" fill="#e5d114"/>
<ellipse cx="667.8" cy="345.2" rx="1.3" ry="1.7" fill="#ecd718"/>
<ellipse cx="697.1" cy="345.4" rx="1.2" ry="1.6" fill="#eddc1d"/>
<ellipse cx="597.4" cy="345.9" rx="0.9" ry="1.2" fill="#cdc21b"/>
<ellipse cx="582.1" cy="346.0" rx="0.8" ry="1.0" fill="#e5d51f"/>
<ellipse cx="736.8" cy="345.0" rx="1.5" ry="2.0" fill="#e4ce12"/>
<ellipse cx="736.8" cy="345.0" rx="0.6" ry="0.8" fill="#cea115"/>
<ellipse cx="699.8" cy="345.3" rx="1.3" ry="1.7" fill="#eed816"/>
<ellipse cx="576.8" cy="346.1" rx="0.8" ry="1.0" fill="#d3c51c"/>
<ellipse cx="602.8" cy="345.9" rx="0.9" ry="1.1" fill="#e8d81e"/>
<ellipse cx="571.9" cy="346.2" rx="0.7" ry="1.0" fill="#ded01f"/>
<ellipse cx="738.4" cy="345.2" rx="1.5" ry="2.0" fill="#f1de1d"/>
<ellipse cx="738.4" cy="345.2" rx="0.6" ry="0.7" fill="#cfa215"/>
<ellipse cx="603.8" cy="346.1" rx="0.9" ry="1.2" fill="#e7d51c"/>
<ellipse cx="734.8" cy="345.1" rx="1.7" ry="2.3" fill="#f3e11e"/>
<ellipse cx="734.8" cy="345.1" rx="0.7" ry="0.9" fill="#ca9a14"/>
<ellipse cx="562.0" cy="346.6" rx="0.7" ry="0.9" fill="#d0c31b"/>
<ellipse cx="662.7" cy="345.9" rx="1.2" ry="1.6" fill="#e7d317"/>
<ellipse cx="601.3" cy="346.3" rx="0.9" ry="1.2" fill="#cfc21a"/>
<ellipse cx="609.9" cy="346.3" rx="1.0" ry="1.3" fill="#d1c51a"/>
<ellipse cx="574.7" cy="346.6" rx="0.7" ry="1.0" fill="#ded01d"/>
<ellipse cx="612.2" cy="346.1" rx="1.1" ry="1.4" fill="#d0c119"/>
<ellipse cx="577.8" cy="346.6" rx="0.8" ry="1.0" fill="#cac01c"/>
<ellipse cx="588.7" cy="346.5" rx="0.9" ry="1.2" fill="#e7d71f"/>
<ellipse cx="585.6" cy="346.5" rx="0.8" ry="1.1" fill="#e6d51e"/>
<ellipse cx="739.3" cy="345.5" rx="1.7" ry="2.2" fill="#f3dd14"/>
<ellipse cx="739.3" cy="345.5" rx="0.6" ry="0.8" fill="#cb9c15"/>
<ellipse cx="571.0" cy="346.8" rx="0.7" ry="0.9" fill="#c9be1c"/>
<ellipse cx="612.7" cy="346.4" rx="1.0" ry="1.4" fill="#e4d51e"/>
<ellipse cx="649.7" cy="346.2" rx="1.2" ry="1.5" fill="#e7d318"/>
<ellipse cx="609.3" cy="346.4" rx="1.0" ry="1.3" fill="#d9c817"/>
<ellipse cx="633.0" cy="346.2" rx="1.2" ry="1.6" fill="#dcca16"/>
<ellipse cx="598.9" cy="346.5" rx="1.0" ry="1.3" fill="#cfc31b"/>
<ellipse cx="622.7" cy="346.5" rx="1.0" ry="1.3" fill="#dbc716"/>
<ellipse cx="626.2" cy="346.5" rx="1.0" ry="1.4" fill="#e5d219"/>
<ellipse cx="612.6" cy="346.7" rx="0.9" ry="1.2" fill="#eadb20"/>
<ellipse cx="606.3" cy="346.8" rx="1.0" ry="1.3" fill="#d1c319"/>
<ellipse cx="679.6" cy="346.4" rx="1.2" ry="1.6" fill="#decb14"/>
<ellipse cx="585.0" cy="347.1" rx="0.8" ry="1.1" fill="#cdc21b"/>
<ellipse cx="599.8" cy="346.9" rx="1.0" ry="1.3" fill="#e9d81e"/>
<ellipse cx="743.9" cy="345.9" rx="1.7" ry="2.3" fill="#edd210"/>
<ellipse cx="743.9" cy="345.9" rx="0.7" ry="0.9" fill="#ca9a14"/>
<ellipse cx="659.3" cy="346.5" rx="1.3" ry="1.7" fill="#e7d116"/>
<ellipse cx="593.5" cy="347.1" rx="0.9" ry="1.2" fill="#d8ca1c"/>
<ellipse cx="560.8" cy="347.3" rx="0.7" ry="0.9" fill="#d2c41c"/>
<ellipse cx="597.7" cy="347.1" rx="1.0" ry="1.3" fill="#e2d11b"/>
<ellipse cx="692.9" cy="346.3" rx="1.6" ry="2.1" fill="#e1cf17"/>
<ellipse cx="692.9" cy="346.3" rx="0.6" ry="0.8" fill="#cd9f15"/>
<ellipse cx="743.4" cy="345.9" rx="1.9" ry="2.5" fill="#ecd615"/>
<ellipse cx="743.4" cy="345.9" rx="0.7" ry="0.9" fill="#c89714"/>
<ellipse cx="553.3" cy="347.5" rx="0.7" ry="0.9" fill="#e4d620"/>
<ellipse cx="554.4" cy="347.5" rx="0.7" ry="0.9" fill="#d1c31b"/>
<ellipse cx="673.2" cy="346.6" rx="1.4" ry="1.9" fill="#edd717"/>
<ellipse cx="722.2" cy="346.3" rx="1.6" ry="2.1" fill="#e5cf12"/>
<ellipse cx="722.2" cy="346.3" rx="0.6" ry="0.8" fill="#cc9e15"/>
<ellipse cx="580.4" cy="347.4" rx="0.8" ry="1.1" fill="#e1d31f"/>
<ellipse cx="551.0" cy="347.7" rx="0.7" ry="0.9" fill="#d0c21b"/>
<ellipse cx="585.3" cy="347.5" rx="0.9" ry="1.2" fill="#e2d31f"/>
<ellipse cx="694.8" cy="347.0" rx="1.3" ry="1.7" fill="#e1ca12"/>
<ellipse cx="667.3" cy="346.9" rx="1.4" ry="1.9" fill="#edd717"/>
<ellipse cx="558.7" cy="347.8" rx="0.8" ry="1.0" fill="#e6d721"/>
<ellipse cx="657.5" cy="347.1" rx="1.3" ry="1.7" fill="#ebda1e"/>
<ellipse cx="583.0" cy="347.6" rx="0.9" ry="1.2" fill="#cec31a"/>
<ellipse cx="559.8" cy="347.9" rx="0.7" ry="1.0" fill="#d3c51c"/>
<ellipse cx="548.8" cy="348.0" rx="0.7" ry="0.9" fill="#c6bd1d"/>
<ellipse cx="618.4" cy="347.4" rx="1.2" ry="1.5" fill="#ecdc1f"/>
<ellipse cx="610.9" cy="347.5" rx="1.2" ry="1.5" fill="#dccb17"/>
<ellipse cx="585.7" cy="347.8" rx="0.9" ry="1.2" fill="#e8d61d"/>
<ellipse cx="620.9" cy="347.6" rx="1.1" ry="1.4" fill="#d7c918"/>
<ellipse cx="699.6" cy="346.9" rx="1.7" ry="2.2" fill="#f1db18"/>
<ellipse cx="699.6" cy="346.9" rx="0.6" ry="0.8" fill="#cb9c15"/>
<ellipse cx="743.6" cy="346.7" rx="1.9" ry="2.6" fill="#ebd515"/>
<ellipse cx="743.6" cy="346.7" rx="0.7" ry="1.0" fill="#c69414"/>
<ellipse cx="622.7" cy="347.6" rx="1.2" ry="1.6" fill="#d8cc1d"/>
<ellipse cx="680.5" cy="347.2" rx="1.5" ry="2.0" fill="#e2d015"/>
<ellipse cx="680.5" cy="347.2" rx="0.6" ry="0.8" fill="#cea115"/>
<ellipse cx="744.3" cy="347.0" rx="1.7" ry="2.2" fill="#f2d811"/>
<ellipse cx="744.3" cy="347.0" rx="0.6" ry="0.8" fill="#cb9c15"/>
<ellipse cx="616.6" cy="347.7" rx="1.2" ry="1.6" fill="#ead519"/>
<ellipse cx="587.1" cy="348.0" rx="0.9" ry="1.3" fill="#e9d81e"/>
<ellipse cx="573.2" cy="348.2" rx="0.8" ry="1.1" fill="#e8d71e"/>
<ellipse cx="545.3" cy="348.5" rx="0.7" ry="0.9" fill="#ddcf1e"/>
<ellipse cx="542.1" cy="348.6" rx="0.7" ry="0.9" fill="#c6bd1d"/>
<ellipse cx="731.3" cy="347.1" rx="1.7" ry="2.3" fill="#f1da16"/>
<ellipse cx="731.3" cy="347.1" rx="0.7" ry="0.9" fill="#ca9a14"/>
<ellipse cx="542.1" cy="348.6" rx="0.6" ry="0.9" fill="#ddcf1f"/>
<ellipse cx="716.6" cy="347.4" rx="1.6" ry="2.1" fill="#f3dd14"/>
<ellipse cx="716.6" cy="347.4" rx="0.6" ry="0.8" fill="#cc9e15"/>
<ellipse cx="573.3" cy="348.3" rx="0.9" ry="1.2" fill="#e1d11c"/>
<ellipse cx="556.3" cy="348.5" rx="0.8" ry="1.0" fill="#d4c61c"/>
<ellipse cx="593.3" cy="348.2" rx="1.0" ry="1.3" fill="#e4d51e"/>
<ellipse cx="572.2" cy="348.4" rx="0.9" ry="1.2" fill="#cdc11a"/>
<ellipse cx="562.8" cy="348.5" rx="0.8" ry="1.1" fill="#d5c71c"/>
<ellipse cx="550.0" cy="348.7" rx="0.7" ry="1.0" fill="#d2c41a"/>
<ellipse cx="549.4" cy="348.7" rx="0.7" ry="1.0" fill="#e5d620"/>
<ellipse cx="620.7" cy="348.2" rx="1.1" ry="1.5" fill="#d9ca17"/>
<ellipse cx="721.3" cy="347.3" rx="1.8" ry="2.4" fill="#e7d011"/>
<ellipse cx="721.3" cy="347.3" rx="0.7" ry="0.9" fill="#c89714"/>
<ellipse cx="542.3" cy="348.9" rx="0.7" ry="0.9" fill="#e5d520"/>
<ellipse cx="543.2" cy="348.8" rx="0.7" ry="0.9" fill="#ddcf1f"/>
<ellipse cx="595.4" cy="348.5" rx="1.0" ry="1.3" fill="#e9d71b"/>
<ellipse cx="624.0" cy="348.1" rx="1.3" ry="1.7" fill="#ecd91b"/>
<ellipse cx="718.1" cy="347.6" rx="1.7" ry="2.2" fill="#efd612"/>
<ellipse cx="718.1" cy="347.6" rx="0.6" ry="0.8" fill="#cb9d15"/>
<ellipse cx="696.6" cy="347.8" rx="1.6" ry="2.1" fill="#eed917"/>
<ellipse cx="696.6" cy="347.8" rx="0.6" ry="0.8" fill="#cda015"/>
<ellipse cx="539.7" cy="348.9" rx="0.7" ry="0.9" fill="#d1c31b"/>
<ellipse cx="669.7" cy="347.9" rx="1.5" ry="1.9" fill="#e7d214"/>
<ellipse cx="669.7" cy="347.9" rx="0.6" ry="0.7" fill="#cfa315"/>
<ellipse cx="537.8" cy="349.0" rx="0.7" ry="0.9" fill="#ddcf1f"/>
<ellipse cx="678.7" cy="347.7" rx="1.7" ry="2.2" fill="#e0c912"/>
<ellipse cx="678.7" cy="347.7" rx="0.6" ry="0.8" fill="#cc9d15"/>
<ellipse cx="548.8" cy="348.9" rx="0.7" ry="1.0" fill="#c9bf1c"/>
<ellipse cx="668.5" cy="348.0" rx="1.5" ry="1.9" fill="#e5cf13"/>
<ellipse cx="668.5" cy="348.0" rx="0.6" ry="0.7" fill="#cfa315"/>
<ellipse cx="643.3" cy="348.3" rx="1.2" ry="1.6" fill="#eedb18"/>
<ellipse cx="637.3" cy="348.1" rx="1.4" ry="1.8" fill="#ddcf1d"/>
<ellipse cx="566.9" cy="348.8" rx="0.9" ry="1.2" fill="#e1d31f"/>
<ellipse cx="623.7" cy="348.6" rx="1.2" ry="1.5" fill="#e8d51a"/>
<ellipse cx="651.6" cy="348.4" rx="1.2" ry="1.6" fill="#ddc813"/>
<ellipse cx="544.6" cy="349.2" rx="0.7" ry="1.0" fill="#c9bf1d"/>
<ellipse cx="633.2" cy="348.6" rx="1.2" ry="1.6" fill="#dbc915"/>
<ellipse cx="616.9" cy="348.8" rx="1.1" ry="1.5" fill="#dec914"/>
<ellipse cx="554.6" cy="349.2" rx="0.8" ry="1.1" fill="#cbc01b"/>
<ellipse cx="564.7" cy="349.1" rx="0.9" ry="1.2" fill="#e8d920"/>
<ellipse cx="660.9" cy="348.4" rx="1.5" ry="2.0" fill="#e6d214"/>
<ellipse cx="660.9" cy="348.4" rx="0.6" ry="0.8" fill="#cea115"/>
<ellipse cx="706.7" cy="348.1" rx="1.7" ry="2.3" fill="#f0d916"/>
<ellipse cx="706.7" cy="348.1" rx="0.7" ry="0.9" fill="#ca9b14"/>
<ellipse cx="538.4" cy="349.5" rx="0.7" ry="1.0" fill="#ded01e"/>
<ellipse cx="557.7" cy="349.3" rx="0.9" ry="1.2" fill="#ccc01b"/>
<ellipse cx="551.2" cy="349.4" rx="0.8" ry="1.1" fill="#cbc01c"/>
<ellipse cx="671.5" cy="348.8" rx="1.3" ry="1.7" fill="#e2cd13"/>
<ellipse cx="544.3" cy="349.6" rx="0.7" ry="1.0" fill="#d3c51a"/>
<ellipse cx="600.3" cy="349.2" rx="1.1" ry="1.4" fill="#e6d519"/>
<ellipse cx="639.8" cy="348.7" rx="1.4" ry="1.9" fill="#ebdb1e"/>
<ellipse cx="612.9" cy="349.2" rx="1.1" ry="1.5" fill="#dfcb15"/>
<ellipse cx="545.8" cy="349.6" rx="0.8" ry="1.0" fill="#dfd11f"/>
<ellipse cx="585.5" cy="349.3" rx="1.0" ry="1.3" fill="#ebdb20"/>
<ellipse cx="611.3" cy="349.2" rx="1.1" ry="1.5" fill="#e8d618"/>
<ellipse cx="539.6" cy="349.7" rx="0.8" ry="1.0" fill="#decf1e"/>
<ellipse cx="746.7" cy="348.3" rx="1.9" ry="2.5" fill="#f2df1c"/>
<ellipse cx="746.7" cy="348.3" rx="0.7" ry="0.9" fill="#c89714"/>
<ellipse cx="637.1" cy="348.9" rx="1.4" ry="1.9" fill="#ebdb1e"/>
<ellipse cx="619.6" cy="349.0" rx="1.3" ry="1.7" fill="#edd91b"/>
<ellipse cx="618.3" cy="349.1" rx="1.3" ry="1.7" fill="#e1ce17"/>
<ellipse cx="579.7" cy="349.4" rx="1.1" ry="1.4" fill="#daca18"/>
<ellipse cx="554.7" cy="349.7" rx="0.9" ry="1.2" fill="#e6d51e"/>
<ellipse cx="540.4" cy="349.9" rx="0.7" ry="1.0" fill="#c9bf1c"/>
<ellipse cx="601.8" cy="349.5" rx="1.1" ry="1.4" fill="#d7c819"/>
<ellipse cx="655.1" cy="348.9" rx="1.5" ry="2.0" fill="#edd414"/>
<ellipse cx="655.1" cy="348.9" rx="0.6" ry="0.8" fill="#cea115"/>
<ellipse cx="545.3" cy="349.9" rx="0.8" ry="1.0" fill="#dfd11e"/>
<ellipse cx="580.6" cy="349.5" rx="1.1" ry="1.4" fill="#d3c51a"/>
<ellipse cx="532.0" cy="350.1" rx="0.7" ry="0.9" fill="#e5d721"/>
<ellipse cx="544.7" cy="350.0" rx="0.8" ry="1.0" fill="#cabf1b"/>
<ellipse cx="737.4" cy="348.4" rx="2.0" ry="2.7" fill="#f3db15"/>
<ellipse cx="737.4" cy="348.4" rx="0.8" ry="1.0" fill="#c49113"/>
<ellipse cx="536.8" cy="350.1" rx="0.7" ry="1.0" fill="#dfd11f"/>
<ellipse cx="574.4" cy="349.7" rx="1.0" ry="1.4" fill="#d9c817"/>
<ellipse cx="530.6" cy="350.3" rx="0.7" ry="0.9" fill="#d2c41c"/>
<ellipse cx="636.8" cy="349.2" rx="1.5" ry="2.0" fill="#dfce16"/>
<ellipse cx="636.8" cy="349.2" rx="0.6" ry="0.8" fill="#cea215"/>
<ellipse cx="540.3" cy="350.2" rx="0.8" ry="1.1" fill="#c9be1b"/>
<ellipse cx="602.6" cy="349.8" rx="1.1" ry="1.4" fill="#e0d01c"/>
<ellipse cx="545.1" cy="350.2" rx="0.8" ry="1.1" fill="#e0d11d"/>
<ellipse cx="569.8" cy="350.0" rx="1.0" ry="1.4" fill="#d0c218"/>
<ellipse cx="555.2" cy="350.3" rx="0.8" ry="1.1" fill="#e2d31f"/>
<ellipse cx="528.9" cy="350.6" rx="0.7" ry="0.9" fill="#ddcf1e"/>
<ellipse cx="569.7" cy="350.2" rx="1.0" ry="1.3" fill="#d2c51a"/>
<ellipse cx="565.6" cy="350.3" rx="1.0" ry="1.3" fill="#e2d11b"/>
<ellipse cx="660.6" cy="349.5" rx="1.5" ry="2.0" fill="#eed413"/>
<ellipse cx="660.6" cy="349.5" rx="0.6" ry="0.8" fill="#cea015"/>
<ellipse cx="579.2" cy="350.1" rx="1.1" ry="1.5" fill="#dbc917"/>
<ellipse cx="524.3" cy="350.8" rx="0.7" ry="0.9" fill="#e5d621"/>
<ellipse cx="652.1" cy="349.9" rx="1.3" ry="1.8" fill="#f0db18"/>
<ellipse cx="520.1" cy="350.9" rx="0.7" ry="0.9" fill="#d0c21b"/>
<ellipse cx="552.2" cy="350.6" rx="0.8" ry="1.1" fill="#cec31a"/>
<ellipse cx="701.4" cy="349.3" rx="1.9" ry="2.5" fill="#eed811"/>
<ellipse cx="701.4" cy="349.3" rx="0.7" ry="0.9" fill="#c89714"/>
<ellipse cx="700.6" cy="349.7" rx="1.6" ry="2.1" fill="#f2d811"/>
<ellipse cx="700.6" cy="349.7" rx="0.6" ry="0.8" fill="#cda015"/>
<ellipse cx="565.4" cy="350.4" rx="1.0" ry="1.4" fill="#e8d51b"/>
<ellipse cx="623.2" cy="349.9" rx="1.4" ry="1.8" fill="#ead619"/>
<ellipse cx="538.1" cy="350.7" rx="0.8" ry="1.1" fill="#cbc01c"/>
<ellipse cx="692.0" cy="349.4" rx="1.8" ry="2.4" fill="#f3dd14"/>
<ellipse cx="692.0" cy="349.4" rx="0.7" ry="0.9" fill="#c99814"/>
<ellipse cx="540.8" cy="350.8" rx="0.9" ry="1.1" fill="#cbbf1b"/>
<ellipse cx="551.4" cy="350.7" rx="0.9" ry="1.2" fill="#d6c518"/>
<ellipse cx="528.2" cy="351.0" rx="0.7" ry="0.9" fill="#ded01e"/>
<ellipse cx="648.5" cy="350.0" rx="1.5" ry="1.9" fill="#ecd514"/>
<ellipse cx="648.5" cy="350.0" rx="0.6" ry="0.7" fill="#cfa315"/>
<ellipse cx="522.8" cy="351.1" rx="0.7" ry="0.9" fill="#d2c41b"/>
<ellipse cx="534.1" cy="351.0" rx="0.8" ry="1.0" fill="#cac01c"/>
<ellipse cx="665.8" cy="350.2" rx="1.4" ry="1.9" fill="#f1df1d"/>
<ellipse cx="659.8" cy="349.9" rx="1.7" ry="2.2" fill="#e5d214"/>
<ellipse cx="659.8" cy="349.9" rx="0.6" ry="0.8" fill="#cc9d15"/>
<ellipse cx="537.7" cy="351.0" rx="0.8" ry="1.1" fill="#e6d61e"/>
<ellipse cx="576.2" cy="350.8" rx="1.0" ry="1.3" fill="#dccb18"/>
<ellipse cx="614.8" cy="350.6" rx="1.2" ry="1.5" fill="#ebda1e"/>
<ellipse cx="560.2" cy="350.8" rx="1.0" ry="1.4" fill="#e2d01a"/>
<ellipse cx="535.1" cy="351.2" rx="0.8" ry="1.1" fill="#cabf1b"/>
<ellipse cx="597.6" cy="350.5" rx="1.3" ry="1.7" fill="#e0ce16"/>
<ellipse cx="567.0" cy="351.0" rx="1.0" ry="1.3" fill="#d3c619"/>
<ellipse cx="544.4" cy="351.0" rx="0.9" ry="1.2" fill="#e7d61e"/>
<ellipse cx="585.3" cy="350.6" rx="1.2" ry="1.6" fill="#ebd91c"/>
<ellipse cx="583.6" cy="350.7" rx="1.2" ry="1.6" fill="#d6c617"/>
<ellipse cx="554.8" cy="351.0" rx="0.9" ry="1.2" fill="#e2d01a"/>
<ellipse cx="575.8" cy="350.8" rx="1.1" ry="1.5" fill="#d5c718"/>
<ellipse cx="733.8" cy="349.6" rx="2.1" ry="2.7" fill="#f2e01c"/>
<ellipse cx="733.8" cy="349.6" rx="0.8" ry="1.0" fill="#c49113"/>
<ellipse cx="537.0" cy="351.2" rx="0.8" ry="1.0" fill="#d5c71c"/>
<ellipse cx="603.8" cy="350.6" rx="1.3" ry="1.7" fill="#dccf1d"/>
<ellipse cx="586.2" cy="350.9" rx="1.1" ry="1.4" fill="#ddc815"/>
<ellipse cx="638.5" cy="350.5" rx="1.4" ry="1.9" fill="#e0c912"/>
<ellipse cx="562.6" cy="351.1" rx="1.0" ry="1.3" fill="#e8d51b"/>
<ellipse cx="540.1" cy="351.4" rx="0.8" ry="1.1" fill="#e8d920"/>
<ellipse cx="716.2" cy="350.3" rx="1.6" ry="2.1" fill="#f4e01c"/>
<ellipse cx="716.2" cy="350.3" rx="0.6" ry="0.8" fill="#cc9e15"/>
<ellipse cx="571.8" cy="351.0" rx="1.1" ry="1.5" fill="#ddcd1c"/>
<ellipse cx="568.1" cy="351.1" rx="1.1" ry="1.4" fill="#dccb17"/>
<ellipse cx="551.0" cy="351.3" rx="1.0" ry="1.3" fill="#d8c819"/>
<ellipse cx="512.1" cy="351.8" rx="0.7" ry="0.9" fill="#ddcf1f"/>
<ellipse cx="522.5" cy="351.6" rx="0.8" ry="1.0" fill="#e6d721"/>
<ellipse cx="609.8" cy="351.1" rx="1.2" ry="1.6" fill="#efdb18"/>
<ellipse cx="582.7" cy="351.1" rx="1.2" ry="1.6" fill="#dfd01c"/>
<ellipse cx="643.2" cy="350.6" rx="1.7" ry="2.2" fill="#efd815"/>
<ellipse cx="643.2" cy="350.6" rx="0.6" ry="0.8" fill="#cc9d15"/>
<ellipse cx="591.4" cy="351.2" rx="1.2" ry="1.6" fill="#dacb17"/>
<ellipse cx="512.8" cy="351.9" rx="0.7" ry="0.9" fill="#e5d621"/>
<ellipse cx="563.5" cy="351.6" rx="1.0" ry="1.3" fill="#e4d219"/>
<ellipse cx="510.9" cy="352.0" rx="0.7" ry="0.9" fill="#c6bd1c"/>
<ellipse cx="680.1" cy="350.9" rx="1.5" ry="2.0" fill="#f1d410"/>
<ellipse cx="680.1" cy="350.9" rx="0.6" ry="0.8" fill="#cea115"/>
<ellipse cx="586.3" cy="351.4" rx="1.2" ry="1.6" fill="#ecd91b"/>
<ellipse cx="512.1" cy="352.1" rx="0.7" ry="0.9" fill="#c7bd1c"/>
<ellipse cx="656.9" cy="350.8" rx="1.7" ry="2.2" fill="#efda14"/>
<ellipse cx="656.9" cy="350.8" rx="0.6" ry="0.8" fill="#cc9d15"/>
<ellipse cx="727.2" cy="350.8" rx="1.8" ry="2.3" fill="#f9e51c"/>
<ellipse cx="727.2" cy="350.8" rx="0.7" ry="0.9" fill="#ca9a14"/>
<ellipse cx="561.4" cy="351.8" rx="1.0" ry="1.3" fill="#e5d61e"/>
<ellipse cx="595.3" cy="351.6" rx="1.1" ry="1.5" fill="#dccc16"/>
<ellipse cx="571.2" cy="351.5" rx="1.2" ry="1.6" fill="#ecdc1f"/>
<ellipse cx="668.5" cy="351.2" rx="1.5" ry="2.0" fill="#eace0f"/>
<ellipse cx="668.5" cy="351.2" rx="0.6" ry="0.8" fill="#cea115"/>
<ellipse cx="603.8" cy="351.3" rx="1.4" ry="1.9" fill="#ded01d"/>
<ellipse cx="603.8" cy="351.3" rx="0.5" ry="0.7" fill="#cfa315"/>
<ellipse cx="539.4" cy="352.1" rx="0.9" ry="1.2" fill="#e2d41f"/>
<ellipse cx="518.4" cy="352.3" rx="0.7" ry="1.0" fill="#d3c51a"/>
<ellipse cx="541.3" cy="352.0" rx="1.0" ry="1.3" fill="#e7d51c"/>
<ellipse cx="614.7" cy="351.6" rx="1.3" ry="1.7" fill="#dec813"/>
<ellipse cx="507.5" cy="352.4" rx="0.7" ry="0.9" fill="#ddd01f"/>
<ellipse cx="570.0" cy="352.0" rx="1.1" ry="1.4" fill="#e5d018"/>
<ellipse cx="504.8" cy="352.5" rx="0.7" ry="0.9" fill="#ddcf1f"/>
<ellipse cx="603.1" cy="351.8" rx="1.2" ry="1.6" fill="#eeda1a"/>
<ellipse cx="504.7" cy="352.6" rx="0.7" ry="0.9" fill="#d1c31c"/>
<ellipse cx="519.2" cy="352.5" rx="0.8" ry="1.1" fill="#cabe1b"/>
<ellipse cx="501.6" cy="352.8" rx="0.7" ry="0.9" fill="#d0c31b"/>
<ellipse cx="666.3" cy="351.4" rx="1.8" ry="2.3" fill="#eed210"/>
<ellipse cx="666.3" cy="351.4" rx="0.7" ry="0.9" fill="#c99914"/>
<ellipse cx="666.2" cy="351.4" rx="1.8" ry="2.3" fill="#f5e21d"/>
<ellipse cx="666.2" cy="351.4" rx="0.7" ry="0.9" fill="#ca9a14"/>
<ellipse cx="556.2" cy="352.3" rx="1.1" ry="1.5" fill="#ead81d"/>
<ellipse cx="737.4" cy="351.1" rx="2.0" ry="2.7" fill="#f6d90e"/>
<ellipse cx="737.4" cy="351.1" rx="0.8" ry="1.0" fill="#c59113"/>
<ellipse cx="565.4" cy="352.2" rx="1.2" ry="1.5" fill="#ddcc18"/>
<ellipse cx="711.3" cy="350.3" rx="3.0" ry="3.5" fill="#f1da10"/>
<ellipse cx="711.3" cy="350.3" rx="1.5" ry="1.7" fill="#a0600e"/>
<ellipse cx="544.6" cy="352.5" rx="1.0" ry="1.3" fill="#d2c519"/>
<ellipse cx="558.1" cy="352.4" rx="1.1" ry="1.5" fill="#d5c718"/>
<ellipse cx="731.7" cy="351.3" rx="2.0" ry="2.6" fill="#f5d90e"/>
<ellipse cx="731.7" cy="351.3" rx="0.7" ry="1.0" fill="#c69414"/>
<ellipse cx="581.8" cy="352.5" rx="1.1" ry="1.5" fill="#e7d116"/>
<ellipse cx="502.2" cy="353.1" rx="0.7" ry="0.9" fill="#d1c31b"/>
<ellipse cx="722.5" cy="351.5" rx="1.9" ry="2.5" fill="#f1d60e"/>
<ellipse cx="722.5" cy="351.5" rx="0.7" ry="1.0" fill="#c79514"/>
<ellipse cx="536.0" cy="352.8" rx="0.9" ry="1.3" fill="#e3d31b"/>
<ellipse cx="718.0" cy="351.2" rx="2.1" ry="2.8" fill="#f9e51c"/>
<ellipse cx="718.0" cy="351.2" rx="0.8" ry="1.1" fill="#c28e13"/>
<ellipse cx="608.5" cy="352.3" rx="1.3" ry="1.7" fill="#e0ce17"/>
<ellipse cx="551.2" cy="352.6" rx="1.1" ry="1.5" fill="#d4c619"/>
<ellipse cx="601.6" cy="352.3" rx="1.4" ry="1.9" fill="#dfcd17"/>
<ellipse cx="723.8" cy="351.8" rx="1.8" ry="2.3" fill="#f7e31c"/>
<ellipse cx="723.8" cy="351.8" rx="0.7" ry="0.9" fill="#c99914"/>
<ellipse cx="510.8" cy="353.2" rx="0.8" ry="1.0" fill="#d4c61c"/>
<ellipse cx="525.1" cy="353.1" rx="0.8" ry="1.1" fill="#e1d11d"/>
<ellipse cx="510.1" cy="353.2" rx="0.8" ry="1.0" fill="#d3c51a"/>
<ellipse cx="629.0" cy="352.1" rx="1.6" ry="2.1" fill="#eed915"/>
<ellipse cx="629.0" cy="352.1" rx="0.6" ry="0.8" fill="#cc9e15"/>
<ellipse cx="572.7" cy="352.7" rx="1.2" ry="1.6" fill="#d9ca19"/>
<ellipse cx="502.1" cy="353.4" rx="0.7" ry="0.9" fill="#d2c31a"/>
<ellipse cx="719.5" cy="351.5" rx="2.2" ry="2.9" fill="#f1d60e"/>
<ellipse cx="719.5" cy="351.5" rx="0.8" ry="1.1" fill="#c28d13"/>
<ellipse cx="495.4" cy="353.5" rx="0.7" ry="0.9" fill="#e4d621"/>
<ellipse cx="656.9" cy="352.2" rx="1.7" ry="2.2" fill="#efdc1c"/>
<ellipse cx="656.9" cy="352.2" rx="0.6" ry="0.8" fill="#cb9d15"/>
<ellipse cx="527.7" cy="353.2" rx="0.9" ry="1.2" fill="#e2d41f"/>
<ellipse cx="502.9" cy="353.5" rx="0.7" ry="1.0" fill="#c8bf1d"/>
<ellipse cx="603.6" cy="352.8" rx="1.2" ry="1.6" fill="#e1d015"/>
<ellipse cx="626.5" cy="352.4" rx="1.6" ry="2.1" fill="#edd513"/>
<ellipse cx="626.5" cy="352.4" rx="0.6" ry="0.8" fill="#cd9f15"/>
<ellipse cx="516.2" cy="353.4" rx="0.9" ry="1.2" fill="#d4c419"/>
<ellipse cx="613.1" cy="352.5" rx="1.5" ry="2.0" fill="#ebd514"/>
<ellipse cx="613.1" cy="352.5" rx="0.6" ry="0.8" fill="#cea115"/>
<ellipse cx="720.0" cy="351.7" rx="2.2" ry="2.9" fill="#f4db13"/>
<ellipse cx="720.0" cy="351.7" rx="0.8" ry="1.1" fill="#c18c13"/>
<ellipse cx="575.9" cy="352.9" rx="1.3" ry="1.7" fill="#e0cc15"/>
<ellipse cx="585.0" cy="352.9" rx="1.3" ry="1.7" fill="#dcca15"/>
<ellipse cx="504.0" cy="353.6" rx="0.7" ry="1.0" fill="#e6d620"/>
<ellipse cx="579.1" cy="352.9" rx="1.3" ry="1.7" fill="#ebd517"/>
<ellipse cx="519.6" cy="353.5" rx="0.8" ry="1.1" fill="#e7d61e"/>
<ellipse cx="613.7" cy="352.6" rx="1.5" ry="2.0" fill="#e8d313"/>
<ellipse cx="613.7" cy="352.6" rx="0.6" ry="0.7" fill="#cfa215"/>
<ellipse cx="560.4" cy="353.1" rx="1.3" ry="1.6" fill="#e6d318"/>
<ellipse cx="535.5" cy="353.5" rx="0.9" ry="1.2" fill="#eada20"/>
<ellipse cx="555.7" cy="353.4" rx="1.0" ry="1.4" fill="#e7d71e"/>
<ellipse cx="595.3" cy="353.0" rx="1.3" ry="1.8" fill="#edd415"/>
<ellipse cx="520.5" cy="353.7" rx="0.9" ry="1.2" fill="#d7c719"/>
<ellipse cx="512.4" cy="353.8" rx="0.8" ry="1.1" fill="#e7d61e"/>
<ellipse cx="535.7" cy="353.6" rx="1.1" ry="1.4" fill="#e4d31b"/>
<ellipse cx="545.5" cy="353.5" rx="1.1" ry="1.5" fill="#dbc917"/>
<ellipse cx="614.9" cy="352.9" rx="1.7" ry="2.2" fill="#f1dc16"/>
<ellipse cx="614.9" cy="352.9" rx="0.6" ry="0.8" fill="#cb9d15"/>
<ellipse cx="674.8" cy="352.9" rx="1.7" ry="2.2" fill="#f0d30e"/>
<ellipse cx="674.8" cy="352.9" rx="0.6" ry="0.8" fill="#cb9c15"/>
<ellipse cx="556.9" cy="353.6" rx="1.2" ry="1.6" fill="#d8c919"/>
<ellipse cx="567.2" cy="353.6" rx="1.2" ry="1.6" fill="#edda19"/>
<ellipse cx="523.2" cy="354.0" rx="0.9" ry="1.2" fill="#e2d31b"/>
<ellipse cx="553.1" cy="353.7" rx="1.2" ry="1.5" fill="#d6c416"/>
<ellipse cx="502.9" cy="354.3" rx="0.8" ry="1.0" fill="#e6d51e"/>
<ellipse cx="630.3" cy="353.5" rx="1.4" ry="1.9" fill="#edd211"/>
<ellipse cx="616.3" cy="353.5" rx="1.4" ry="1.9" fill="#ecd212"/>
<ellipse cx="616.3" cy="353.5" rx="0.6" ry="0.7" fill="#cfa315"/>
<ellipse cx="496.0" cy="354.4" rx="0.7" ry="1.0" fill="#d2c31a"/>
<ellipse cx="664.5" cy="353.4" rx="1.5" ry="2.0" fill="#f0d20e"/>
<ellipse cx="664.5" cy="353.4" rx="0.6" ry="0.8" fill="#cea015"/>
<ellipse cx="514.8" cy="354.3" rx="0.9" ry="1.2" fill="#e1cf1b"/>
<ellipse cx="504.9" cy="354.4" rx="0.8" ry="1.1" fill="#e7d71f"/>
<ellipse cx="600.2" cy="353.3" rx="1.6" ry="2.1" fill="#edd816"/>
<ellipse cx="600.2" cy="353.3" rx="0.6" ry="0.8" fill="#cc9e15"/>
<ellipse cx="576.3" cy="353.8" rx="1.3" ry="1.7" fill="#e4d31c"/>
<ellipse cx="522.6" cy="354.2" rx="1.0" ry="1.3" fill="#d0c219"/>
<ellipse cx="543.6" cy="354.0" rx="1.2" ry="1.5" fill="#ecdb20"/>
<ellipse cx="590.7" cy="353.6" rx="1.5" ry="1.9" fill="#e5d116"/>
<ellipse cx="590.7" cy="353.6" rx="0.6" ry="0.7" fill="#cfa315"/>
<ellipse cx="535.0" cy="354.3" rx="1.0" ry="1.3" fill="#dbc917"/>
<ellipse cx="492.1" cy="354.7" rx="0.7" ry="1.0" fill="#d2c41b"/>
<ellipse cx="671.4" cy="353.5" rx="1.6" ry="2.2" fill="#f4d90f"/>
<ellipse cx="671.4" cy="353.5" rx="0.6" ry="0.8" fill="#cc9e15"/>
<ellipse cx="498.0" cy="354.6" rx="0.8" ry="1.1" fill="#d4c51a"/>
<ellipse cx="555.3" cy="354.3" rx="1.1" ry="1.5" fill="#e0cd18"/>
<ellipse cx="604.6" cy="353.8" rx="1.5" ry="1.9" fill="#f1dc16"/>
<ellipse cx="604.6" cy="353.8" rx="0.6" ry="0.7" fill="#cfa315"/>
<ellipse cx="495.2" cy="354.8" rx="0.8" ry="1.0" fill="#d3c31a"/>
<ellipse cx="643.7" cy="353.9" rx="1.5" ry="2.0" fill="#eccf0e"/>
<ellipse cx="643.7" cy="353.9" rx="0.6" ry="0.8" fill="#cea215"/>
<ellipse cx="585.4" cy="354.2" rx="1.3" ry="1.7" fill="#e2d31c"/>
<ellipse cx="691.2" cy="353.4" rx="1.9" ry="2.5" fill="#f3d40c"/>
<ellipse cx="691.2" cy="353.4" rx="0.7" ry="1.0" fill="#c79514"/>
<ellipse cx="482.0" cy="355.0" rx="0.7" ry="0.9" fill="#c6bd1d"/>
<ellipse cx="502.2" cy="354.8" rx="0.8" ry="1.1" fill="#e7d71e"/>
<ellipse cx="588.4" cy="354.3" rx="1.3" ry="1.7" fill="#e1cf17"/>
<ellipse cx="488.2" cy="355.1" rx="0.7" ry="1.0" fill="#d2c41a"/>
<ellipse cx="502.7" cy="355.0" rx="0.8" ry="1.1" fill="#cdc31d"/>
<ellipse cx="501.6" cy="355.0" rx="0.9" ry="1.1" fill="#e7d71f"/>
<ellipse cx="485.8" cy="355.2" rx="0.7" ry="0.9" fill="#e5d520"/>
<ellipse cx="728.3" cy="353.4" rx="2.1" ry="2.7" fill="#fae00e"/>
<ellipse cx="728.3" cy="353.4" rx="0.8" ry="1.0" fill="#c49113"/>
<ellipse cx="481.9" cy="355.2" rx="0.7" ry="0.9" fill="#ddcf1f"/>
<ellipse cx="491.7" cy="355.2" rx="0.8" ry="1.0" fill="#d3c51a"/>
<ellipse cx="596.8" cy="354.4" rx="1.4" ry="1.8" fill="#e2cd13"/>
<ellipse cx="622.8" cy="354.0" rx="1.7" ry="2.2" fill="#ead211"/>
<ellipse cx="622.8" cy="354.0" rx="0.6" ry="0.9" fill="#cb9b15"/>
<ellipse cx="501.3" cy="355.0" rx="0.9" ry="1.2" fill="#e7d71e"/>
<ellipse cx="531.5" cy="354.8" rx="1.1" ry="1.5" fill="#e4d219"/>
<ellipse cx="624.9" cy="354.2" rx="1.6" ry="2.1" fill="#f0d411"/>
<ellipse cx="624.9" cy="354.2" rx="0.6" ry="0.8" fill="#cd9f15"/>
<ellipse cx="534.5" cy="355.0" rx="1.0" ry="1.3" fill="#e4d018"/>
<ellipse cx="552.3" cy="354.5" rx="1.3" ry="1.7" fill="#dec914"/>
<ellipse cx="478.6" cy="355.5" rx="0.7" ry="0.9" fill="#c6bd1d"/>
<ellipse cx="731.7" cy="353.5" rx="2.2" ry="2.9" fill="#fadf12"/>
<ellipse cx="731.7" cy="353.5" rx="0.8" ry="1.1" fill="#c28d13"/>
<ellipse cx="685.3" cy="352.3" rx="3.5" ry="4.2" fill="#f1df1c"/>
<ellipse cx="685.3" cy="352.3" rx="1.7" ry="2.1" fill="#a0600e"/>
<ellipse cx="572.2" cy="354.7" rx="1.4" ry="1.8" fill="#ecd516"/>
<ellipse cx="665.5" cy="354.3" rx="1.7" ry="2.2" fill="#f3db10"/>
<ellipse cx="665.5" cy="354.3" rx="0.6" ry="0.8" fill="#cb9c15"/>
<ellipse cx="532.1" cy="355.0" rx="1.2" ry="1.5" fill="#dcc916"/>
<ellipse cx="689.8" cy="354.2" rx="1.8" ry="2.3" fill="#fae51c"/>
<ellipse cx="689.8" cy="354.2" rx="0.7" ry="0.9" fill="#c99914"/>
<ellipse cx="483.6" cy="355.6" rx="0.7" ry="0.9" fill="#decf1e"/>
<ellipse cx="479.5" cy="355.6" rx="0.7" ry="0.9" fill="#e5d520"/>
<ellipse cx="555.4" cy="354.9" rx="1.3" ry="1.7" fill="#eedd1f"/>
<ellipse cx="484.3" cy="355.6" rx="0.7" ry="1.0" fill="#e6d620"/>
<ellipse cx="495.1" cy="355.6" rx="0.8" ry="1.1" fill="#e7d71e"/>
<ellipse cx="736.1" cy="353.9" rx="2.1" ry="2.8" fill="#fadf12"/>
<ellipse cx="736.1" cy="353.9" rx="0.8" ry="1.1" fill="#c38e13"/>
<ellipse cx="518.6" cy="355.3" rx="1.1" ry="1.4" fill="#e9d71c"/>
<ellipse cx="516.2" cy="355.5" rx="0.9" ry="1.2" fill="#d2c519"/>
<ellipse cx="482.5" cy="355.7" rx="0.8" ry="1.0" fill="#d2c41a"/>
<ellipse cx="538.8" cy="355.2" rx="1.2" ry="1.6" fill="#eddc1f"/>
<ellipse cx="674.0" cy="354.4" rx="1.9" ry="2.5" fill="#f0d10c"/>
<ellipse cx="674.0" cy="354.4" rx="0.7" ry="0.9" fill="#c79614"/>
<ellipse cx="500.8" cy="355.8" rx="0.8" ry="1.1" fill="#e7d61d"/>
<ellipse cx="483.8" cy="355.9" rx="0.7" ry="1.0" fill="#c9bf1c"/>
<ellipse cx="472.5" cy="356.1" rx="0.7" ry="0.9" fill="#e4d520"/>
<ellipse cx="505.8" cy="355.8" rx="0.9" ry="1.2" fill="#d0c31b"/>
<ellipse cx="500.6" cy="355.8" rx="0.9" ry="1.2" fill="#e7d61d"/>
<ellipse cx="545.6" cy="355.5" rx="1.1" ry="1.5" fill="#edd91b"/>
<ellipse cx="679.8" cy="354.7" rx="1.8" ry="2.4" fill="#f5dd0f"/>
<ellipse cx="679.8" cy="354.7" rx="0.7" ry="0.9" fill="#c99814"/>
<ellipse cx="502.1" cy="355.9" rx="0.9" ry="1.2" fill="#e8d61d"/>
<ellipse cx="551.2" cy="355.3" rx="1.4" ry="1.8" fill="#e8d317"/>
<ellipse cx="532.8" cy="355.6" rx="1.2" ry="1.6" fill="#d8cb1d"/>
<ellipse cx="476.7" cy="356.3" rx="0.7" ry="0.9" fill="#d2c41a"/>
<ellipse cx="506.2" cy="356.1" rx="1.0" ry="1.3" fill="#e2d01a"/>
<ellipse cx="622.9" cy="354.9" rx="1.9" ry="2.5" fill="#f0d611"/>
<ellipse cx="622.9" cy="354.9" rx="0.7" ry="1.0" fill="#c79514"/>
<ellipse cx="480.9" cy="356.4" rx="0.8" ry="1.0" fill="#d4c51a"/>
<ellipse cx="497.7" cy="356.3" rx="0.9" ry="1.2" fill="#cfc51d"/>
<ellipse cx="520.5" cy="356.1" rx="1.1" ry="1.4" fill="#e6d61e"/>
<ellipse cx="486.3" cy="356.5" rx="0.8" ry="1.1" fill="#e7d71f"/>
<ellipse cx="522.2" cy="356.3" rx="1.0" ry="1.3" fill="#e5d219"/>
<ellipse cx="672.1" cy="354.8" rx="2.2" ry="2.8" fill="#f6dd13"/>
<ellipse cx="672.1" cy="354.8" rx="0.8" ry="1.1" fill="#c28d13"/>
<ellipse cx="580.5" cy="356.0" rx="1.3" ry="1.7" fill="#e3ce13"/>
<ellipse cx="522.1" cy="356.2" rx="1.2" ry="1.5" fill="#d5c71a"/>
<ellipse cx="566.3" cy="356.0" rx="1.4" ry="1.8" fill="#e9d114"/>
<ellipse cx="575.6" cy="355.9" rx="1.5" ry="1.9" fill="#e6cf12"/>
<ellipse cx="575.6" cy="355.9" rx="0.6" ry="0.7" fill="#cfa315"/>
<ellipse cx="627.7" cy="355.3" rx="1.9" ry="2.5" fill="#ebd210"/>
<ellipse cx="627.7" cy="355.3" rx="0.7" ry="0.9" fill="#c89614"/>
<ellipse cx="669.8" cy="355.2" rx="2.0" ry="2.6" fill="#f4d40c"/>
<ellipse cx="669.8" cy="355.2" rx="0.8" ry="1.0" fill="#c59313"/>
<ellipse cx="602.3" cy="356.0" rx="1.5" ry="2.0" fill="#f1db13"/>
<ellipse cx="602.3" cy="356.0" rx="0.6" ry="0.7" fill="#cfa215"/>
<ellipse cx="668.3" cy="355.6" rx="1.8" ry="2.3" fill="#f7de0f"/>
<ellipse cx="668.3" cy="355.6" rx="0.7" ry="0.9" fill="#ca9a14"/>
<ellipse cx="607.0" cy="355.6" rx="1.8" ry="2.3" fill="#eedc1c"/>
<ellipse cx="607.0" cy="355.6" rx="0.7" ry="0.9" fill="#c99914"/>
<ellipse cx="475.3" cy="357.0" rx="0.7" ry="1.0" fill="#dfd11f"/>
<ellipse cx="506.7" cy="356.8" rx="0.9" ry="1.2" fill="#dbca18"/>
<ellipse cx="468.3" cy="357.2" rx="0.7" ry="0.9" fill="#d2c41b"/>
<ellipse cx="626.5" cy="356.0" rx="1.6" ry="2.1" fill="#f5e21c"/>
<ellipse cx="626.5" cy="356.0" rx="0.6" ry="0.8" fill="#cd9f15"/>
<ellipse cx="512.9" cy="356.8" rx="1.2" ry="1.5" fill="#e5d41a"/>
<ellipse cx="463.2" cy="357.4" rx="0.7" ry="0.9" fill="#e5d621"/>
<ellipse cx="528.3" cy="356.9" rx="1.2" ry="1.5" fill="#ecd91b"/>
<ellipse cx="540.1" cy="356.9" rx="1.2" ry="1.6" fill="#dccc18"/>
<ellipse cx="617.3" cy="356.2" rx="1.7" ry="2.2" fill="#efd814"/>
<ellipse cx="617.3" cy="356.2" rx="0.6" ry="0.9" fill="#cb9c15"/>
<ellipse cx="517.5" cy="357.1" rx="1.0" ry="1.4" fill="#d8cb1d"/>
<ellipse cx="549.6" cy="356.9" rx="1.2" ry="1.6" fill="#ebd816"/>
<ellipse cx="626.9" cy="356.3" rx="1.7" ry="2.2" fill="#f0d911"/>
<ellipse cx="626.9" cy="356.3" rx="0.6" ry="0.8" fill="#cc9d15"/>
<ellipse cx="468.3" cy="357.5" rx="0.7" ry="1.0" fill="#e5d51f"/>
<ellipse cx="537.8" cy="356.8" rx="1.4" ry="1.8" fill="#e1cc14"/>
<ellipse cx="732.9" cy="355.6" rx="2.3" ry="3.0" fill="#fde81c"/>
<ellipse cx="732.9" cy="355.6" rx="0.9" ry="1.1" fill="#c08a12"/>
<ellipse cx="528.8" cy="356.9" rx="1.3" ry="1.7" fill="#eedd1f"/>
<ellipse cx="464.7" cy="357.7" rx="0.7" ry="0.9" fill="#ded11f"/>
<ellipse cx="510.5" cy="357.3" rx="1.0" ry="1.3" fill="#e6d71e"/>
<ellipse cx="586.4" cy="356.3" rx="1.8" ry="2.4" fill="#f1df1d"/>
<ellipse cx="586.4" cy="356.3" rx="0.7" ry="0.9" fill="#c99914"/>
<ellipse cx="719.6" cy="355.6" rx="2.3" ry="3.1" fill="#f6d40a"/>
<ellipse cx="719.6" cy="355.6" rx="0.9" ry="1.2" fill="#bf8812"/>
<ellipse cx="502.6" cy="357.4" rx="1.0" ry="1.3" fill="#e9d51b"/>
<ellipse cx="590.7" cy="356.6" rx="1.6" ry="2.2" fill="#f0db13"/>
<ellipse cx="590.7" cy="356.6" rx="0.6" ry="0.8" fill="#cc9d15"/>
<ellipse cx="571.9" cy="356.6" rx="1.6" ry="2.1" fill="#e8d316"/>
<ellipse cx="571.9" cy="356.6" rx="0.6" ry="0.8" fill="#cc9e15"/>
<ellipse cx="460.3" cy="357.9" rx="0.7" ry="0.9" fill="#ddcf1e"/>
<ellipse cx="620.5" cy="356.6" rx="1.7" ry="2.2" fill="#f1da10"/>
<ellipse cx="620.5" cy="356.6" rx="0.6" ry="0.8" fill="#cb9c15"/>
<ellipse cx="690.4" cy="355.8" rx="2.4" ry="3.1" fill="#f5d30a"/>
<ellipse cx="690.4" cy="355.8" rx="0.9" ry="1.2" fill="#be8712"/>
<ellipse cx="628.5" cy="356.6" rx="1.7" ry="2.3" fill="#f5dd11"/>
<ellipse cx="628.5" cy="356.6" rx="0.7" ry="0.9" fill="#ca9b14"/>
<ellipse cx="571.9" cy="356.9" rx="1.6" ry="2.1" fill="#f0d814"/>
<ellipse cx="571.9" cy="356.9" rx="0.6" ry="0.8" fill="#cc9e15"/>
<ellipse cx="481.4" cy="357.9" rx="0.9" ry="1.1" fill="#e1d21d"/>
<ellipse cx="597.8" cy="356.9" rx="1.7" ry="2.2" fill="#f3e01d"/>
<ellipse cx="597.8" cy="356.9" rx="0.6" ry="0.8" fill="#cb9d15"/>
<ellipse cx="589.9" cy="356.8" rx="1.8" ry="2.3" fill="#f1d812"/>
<ellipse cx="589.9" cy="356.8" rx="0.7" ry="0.9" fill="#c99914"/>
<ellipse cx="540.3" cy="357.5" rx="1.2" ry="1.6" fill="#ebd717"/>
<ellipse cx="650.0" cy="355.0" rx="3.5" ry="4.2" fill="#f4e11c"/>
<ellipse cx="650.0" cy="355.0" rx="1.7" ry="2.1" fill="#a0600e"/>
<ellipse cx="474.5" cy="358.1" rx="0.8" ry="1.1" fill="#d6c81c"/>
<ellipse cx="483.5" cy="358.0" rx="0.9" ry="1.2" fill="#d8c818"/>
<ellipse cx="574.5" cy="356.9" rx="1.7" ry="2.3" fill="#e6d314"/>
<ellipse cx="574.5" cy="356.9" rx="0.7" ry="0.9" fill="#ca9b14"/>
<ellipse cx="501.0" cy="357.9" rx="1.0" ry="1.3" fill="#e9d51a"/>
<ellipse cx="557.6" cy="357.2" rx="1.6" ry="2.1" fill="#e4cc11"/>
<ellipse cx="557.6" cy="357.2" rx="0.6" ry="0.8" fill="#cda015"/>
<ellipse cx="460.9" cy="358.3" rx="0.8" ry="1.0" fill="#c9bf1c"/>
<ellipse cx="523.6" cy="357.7" rx="1.2" ry="1.6" fill="#d9c816"/>
<ellipse cx="568.2" cy="357.3" rx="1.5" ry="1.9" fill="#eed817"/>
<ellipse cx="568.2" cy="357.3" rx="0.6" ry="0.7" fill="#cfa315"/>
<ellipse cx="480.2" cy="358.1" rx="0.9" ry="1.2" fill="#cec019"/>
<ellipse cx="464.6" cy="358.3" rx="0.8" ry="1.0" fill="#e6d51f"/>
<ellipse cx="630.1" cy="356.9" rx="1.8" ry="2.4" fill="#f3e11c"/>
<ellipse cx="630.1" cy="356.9" rx="0.7" ry="0.9" fill="#c89714"/>
<ellipse cx="641.1" cy="356.8" rx="1.9" ry="2.5" fill="#f2d30c"/>
<ellipse cx="641.1" cy="356.8" rx="0.7" ry="1.0" fill="#c79514"/>
<ellipse cx="525.7" cy="357.6" rx="1.3" ry="1.7" fill="#edda19"/>
<ellipse cx="618.1" cy="356.7" rx="2.0" ry="2.7" fill="#f3d910"/>
<ellipse cx="618.1" cy="356.7" rx="0.8" ry="1.0" fill="#c49113"/>
<ellipse cx="732.1" cy="356.3" rx="2.4" ry="3.1" fill="#fbe10e"/>
<ellipse cx="732.1" cy="356.3" rx="0.9" ry="1.2" fill="#be8712"/>
<ellipse cx="462.6" cy="358.4" rx="0.7" ry="1.0" fill="#d3c51a"/>
<ellipse cx="469.9" cy="358.3" rx="0.8" ry="1.1" fill="#d5c61a"/>
<ellipse cx="450.4" cy="358.5" rx="0.7" ry="0.9" fill="#c6bd1d"/>
<ellipse cx="505.8" cy="357.9" rx="1.2" ry="1.6" fill="#e5d219"/>
<ellipse cx="691.0" cy="356.9" rx="2.0" ry="2.6" fill="#f8da0c"/>
<ellipse cx="691.0" cy="356.9" rx="0.7" ry="1.0" fill="#c69414"/>
<ellipse cx="507.3" cy="358.0" rx="1.2" ry="1.6" fill="#e6d41b"/>
<ellipse cx="592.0" cy="357.2" rx="1.8" ry="2.4" fill="#f4dd13"/>
<ellipse cx="592.0" cy="357.2" rx="0.7" ry="0.9" fill="#c89714"/>
<ellipse cx="590.5" cy="357.7" rx="1.5" ry="2.0" fill="#f4dc16"/>
<ellipse cx="590.5" cy="357.7" rx="0.6" ry="0.8" fill="#cea115"/>
<ellipse cx="607.8" cy="357.4" rx="1.8" ry="2.3" fill="#f5e21c"/>
<ellipse cx="607.8" cy="357.4" rx="0.7" ry="0.9" fill="#c99a14"/>
<ellipse cx="502.1" cy="358.4" rx="1.0" ry="1.4" fill="#ead71a"/>
<ellipse cx="635.3" cy="356.3" rx="2.9" ry="3.5" fill="#f4dc14"/>
<ellipse cx="635.3" cy="356.3" rx="1.4" ry="1.7" fill="#a0600e"/>
<ellipse cx="510.3" cy="358.1" rx="1.3" ry="1.7" fill="#d7c717"/>
<ellipse cx="455.0" cy="358.9" rx="0.7" ry="0.9" fill="#decf1d"/>
<ellipse cx="498.5" cy="358.5" rx="1.0" ry="1.3" fill="#e9d51a"/>
<ellipse cx="567.2" cy="358.0" rx="1.4" ry="1.8" fill="#ecd211"/>
<ellipse cx="454.2" cy="358.9" rx="0.8" ry="1.0" fill="#d2c41b"/>
<ellipse cx="451.2" cy="358.9" rx="0.7" ry="0.9" fill="#c8be1d"/>
<ellipse cx="467.3" cy="358.9" rx="0.8" ry="1.1" fill="#d6c61a"/>
<ellipse cx="585.3" cy="357.6" rx="1.8" ry="2.4" fill="#f5e21d"/>
<ellipse cx="585.3" cy="357.6" rx="0.7" ry="0.9" fill="#c99814"/>
<ellipse cx="453.9" cy="359.1" rx="0.7" ry="0.9" fill="#ded01e"/>
<ellipse cx="507.0" cy="358.5" rx="1.2" ry="1.5" fill="#e8d81e"/>
<ellipse cx="452.5" cy="359.2" rx="0.8" ry="1.0" fill="#d2c31a"/>
<ellipse cx="492.6" cy="358.9" rx="1.0" ry="1.3" fill="#d6c91d"/>
<ellipse cx="478.5" cy="359.0" rx="0.9" ry="1.2" fill="#d1c41b"/>
<ellipse cx="509.1" cy="358.6" rx="1.2" ry="1.6" fill="#ecda1a"/>
<ellipse cx="442.5" cy="359.4" rx="0.7" ry="0.9" fill="#c7bd1c"/>
<ellipse cx="440.4" cy="359.5" rx="0.7" ry="0.9" fill="#d1c31c"/>
<ellipse cx="439.0" cy="359.5" rx="0.7" ry="0.9" fill="#e4d620"/>
<ellipse cx="563.4" cy="358.5" rx="1.4" ry="1.9" fill="#efd412"/>
<ellipse cx="717.2" cy="357.6" rx="2.2" ry="2.8" fill="#fadf12"/>
<ellipse cx="717.2" cy="357.6" rx="0.8" ry="1.1" fill="#c28d13"/>
<ellipse cx="485.8" cy="359.1" rx="1.0" ry="1.3" fill="#e4d41a"/>
<ellipse cx="471.2" cy="359.3" rx="0.9" ry="1.2" fill="#e8d61d"/>
<ellipse cx="501.5" cy="359.0" rx="1.1" ry="1.4" fill="#dfcd16"/>
<ellipse cx="747.1" cy="357.5" rx="2.2" ry="2.9" fill="#f6d40a"/>
<ellipse cx="747.1" cy="357.5" rx="0.8" ry="1.1" fill="#c18b13"/>
<ellipse cx="535.6" cy="358.7" rx="1.3" ry="1.7" fill="#dec813"/>
<ellipse cx="564.2" cy="358.4" rx="1.6" ry="2.0" fill="#eed612"/>
<ellipse cx="564.2" cy="358.4" rx="0.6" ry="0.8" fill="#cea015"/>
<ellipse cx="570.6" cy="358.6" rx="1.4" ry="1.9" fill="#f3dd14"/>
<ellipse cx="572.6" cy="358.2" rx="1.7" ry="2.2" fill="#f0d916"/>
<ellipse cx="572.6" cy="358.2" rx="0.6" ry="0.9" fill="#cb9c15"/>
<ellipse cx="485.0" cy="359.2" rx="1.0" ry="1.3" fill="#e9d51b"/>
<ellipse cx="493.7" cy="359.1" rx="1.1" ry="1.5" fill="#d6c818"/>
<ellipse cx="478.8" cy="359.4" rx="1.0" ry="1.3" fill="#dac919"/>
<ellipse cx="441.1" cy="359.8" rx="0.7" ry="0.9" fill="#c8be1c"/>
<ellipse cx="449.6" cy="359.7" rx="0.7" ry="1.0" fill="#e6d821"/>
<ellipse cx="438.4" cy="359.8" rx="0.7" ry="0.9" fill="#ddcf1e"/>
<ellipse cx="446.3" cy="359.8" rx="0.8" ry="1.0" fill="#c9c01d"/>
<ellipse cx="553.7" cy="358.8" rx="1.6" ry="2.0" fill="#e4ce12"/>
<ellipse cx="553.7" cy="358.8" rx="0.6" ry="0.8" fill="#cea015"/>
<ellipse cx="511.7" cy="359.1" rx="1.3" ry="1.7" fill="#e0cc15"/>
<ellipse cx="544.6" cy="358.8" rx="1.5" ry="2.0" fill="#f1dc16"/>
<ellipse cx="544.6" cy="358.8" rx="0.6" ry="0.8" fill="#cea015"/>
<ellipse cx="451.5" cy="359.8" rx="0.8" ry="1.0" fill="#dfd11d"/>
<ellipse cx="560.0" cy="358.9" rx="1.5" ry="1.9" fill="#e9d81c"/>
<ellipse cx="560.0" cy="358.9" rx="0.6" ry="0.7" fill="#cfa315"/>
<ellipse cx="452.0" cy="359.8" rx="0.8" ry="1.0" fill="#d5c61c"/>
<ellipse cx="474.7" cy="359.7" rx="0.9" ry="1.2" fill="#e8d51b"/>
<ellipse cx="499.6" cy="359.5" rx="1.1" ry="1.5" fill="#d8c919"/>
<ellipse cx="451.7" cy="359.9" rx="0.8" ry="1.1" fill="#cbc11d"/>
<ellipse cx="672.3" cy="357.8" rx="2.5" ry="3.2" fill="#fde81c"/>
<ellipse cx="672.3" cy="357.8" rx="0.9" ry="1.2" fill="#bc8412"/>
<ellipse cx="478.0" cy="359.8" rx="1.0" ry="1.3" fill="#daca19"/>
<ellipse cx="438.5" cy="360.1" rx="0.7" ry="0.9" fill="#e6d721"/>
<ellipse cx="495.9" cy="359.5" rx="1.2" ry="1.6" fill="#ecd91c"/>
<ellipse cx="686.5" cy="358.5" rx="2.0" ry="2.6" fill="#f6d40a"/>
<ellipse cx="686.5" cy="358.5" rx="0.8" ry="1.0" fill="#c59213"/>
<ellipse cx="509.5" cy="359.5" rx="1.2" ry="1.6" fill="#e9d618"/>
<ellipse cx="581.2" cy="358.7" rx="1.8" ry="2.4" fill="#f5de13"/>
<ellipse cx="581.2" cy="358.7" rx="0.7" ry="0.9" fill="#c89814"/>
<ellipse cx="733.5" cy="358.0" rx="2.4" ry="3.1" fill="#fde81c"/>
<ellipse cx="733.5" cy="358.0" rx="0.9" ry="1.2" fill="#be8712"/>
<ellipse cx="442.1" cy="360.1" rx="0.8" ry="1.0" fill="#decf1d"/>
<ellipse cx="612.0" cy="357.7" rx="2.9" ry="3.5" fill="#f2d70f"/>
<ellipse cx="612.0" cy="357.7" rx="1.4" ry="1.7" fill="#a0600e"/>
<ellipse cx="455.6" cy="360.1" rx="0.8" ry="1.1" fill="#e7d71e"/>
<ellipse cx="574.7" cy="359.2" rx="1.6" ry="2.1" fill="#eed714"/>
<ellipse cx="574.7" cy="359.2" rx="0.6" ry="0.8" fill="#cda015"/>
<ellipse cx="448.5" cy="360.2" rx="0.8" ry="1.1" fill="#cbc11d"/>
<ellipse cx="450.7" cy="360.2" rx="0.9" ry="1.1" fill="#e7d71f"/>
<ellipse cx="453.6" cy="360.2" rx="0.9" ry="1.1" fill="#d6c81c"/>
<ellipse cx="454.7" cy="360.3" rx="0.8" ry="1.1" fill="#e1d31f"/>
<ellipse cx="463.2" cy="360.3" rx="0.9" ry="1.2" fill="#d0c51d"/>
<ellipse cx="438.9" cy="360.4" rx="0.8" ry="1.0" fill="#c9be1c"/>
<ellipse cx="644.4" cy="358.4" rx="2.3" ry="3.1" fill="#fbe71c"/>
<ellipse cx="644.4" cy="358.4" rx="0.9" ry="1.2" fill="#bf8812"/>
<ellipse cx="567.7" cy="359.2" rx="1.7" ry="2.2" fill="#f5e21d"/>
<ellipse cx="567.7" cy="359.2" rx="0.6" ry="0.8" fill="#cb9c15"/>
<ellipse cx="715.1" cy="357.9" rx="2.7" ry="3.6" fill="#fbe10e"/>
<ellipse cx="715.1" cy="357.9" rx="1.2" ry="1.6" fill="#b87c11"/>
<ellipse cx="581.2" cy="359.4" rx="1.6" ry="2.1" fill="#f3dc12"/>
<ellipse cx="581.2" cy="359.4" rx="0.6" ry="0.8" fill="#cc9e15"/>
<ellipse cx="589.7" cy="359.0" rx="1.9" ry="2.5" fill="#f3df1c"/>
<ellipse cx="589.7" cy="359.0" rx="0.7" ry="1.0" fill="#c79514"/>
<ellipse cx="479.7" cy="360.1" rx="1.1" ry="1.4" fill="#e4d219"/>
<ellipse cx="734.9" cy="358.2" rx="2.5" ry="3.3" fill="#fbe10e"/>
<ellipse cx="734.9" cy="358.2" rx="1.0" ry="1.3" fill="#bb8211"/>
<ellipse cx="493.1" cy="360.1" rx="1.1" ry="1.4" fill="#d7c516"/>
<ellipse cx="670.6" cy="358.9" rx="2.0" ry="2.6" fill="#f6d40a"/>
<ellipse cx="670.6" cy="358.9" rx="0.8" ry="1.0" fill="#c59313"/>
<ellipse cx="668.2" cy="358.4" rx="2.4" ry="3.2" fill="#fadf12"/>
<ellipse cx="668.2" cy="358.4" rx="0.9" ry="1.2" fill="#be8612"/>
<ellipse cx="473.3" cy="360.2" rx="1.0" ry="1.4" fill="#e9d71b"/>
<ellipse cx="587.2" cy="359.0" rx="2.0" ry="2.6" fill="#f5e21c"/>
<ellipse cx="587.2" cy="359.0" rx="0.7" ry="1.0" fill="#c69314"/>
<ellipse cx="550.7" cy="359.4" rx="1.7" ry="2.2" fill="#e6d216"/>
<ellipse cx="550.7" cy="359.4" rx="0.6" ry="0.9" fill="#cb9c15"/>
<ellipse cx="472.7" cy="360.2" rx="1.0" ry="1.4" fill="#ead91c"/>
<ellipse cx="470.0" cy="360.4" rx="1.0" ry="1.3" fill="#e8d51b"/>
<ellipse cx="533.8" cy="359.5" rx="1.6" ry="2.2" fill="#e0c912"/>
<ellipse cx="533.8" cy="359.5" rx="0.6" ry="0.8" fill="#cc9e15"/>
<ellipse cx="486.4" cy="360.2" rx="1.1" ry="1.5" fill="#e7d71e"/>
<ellipse cx="618.6" cy="359.1" rx="2.0" ry="2.6" fill="#f7e31c"/>
<ellipse cx="618.6" cy="359.1" rx="0.7" ry="1.0" fill="#c69314"/>
<ellipse cx="464.3" cy="360.3" rx="1.0" ry="1.3" fill="#e8d51c"/>
<ellipse cx="540.1" cy="359.6" rx="1.6" ry="2.1" fill="#e4d214"/>
<ellipse cx="540.1" cy="359.6" rx="0.6" ry="0.8" fill="#cd9f15"/>
<ellipse cx="592.9" cy="359.6" rx="1.6" ry="2.1" fill="#f2da13"/>
<ellipse cx="592.9" cy="359.6" rx="0.6" ry="0.8" fill="#cc9e15"/>
<ellipse cx="471.4" cy="360.4" rx="1.0" ry="1.3" fill="#eada20"/>
<ellipse cx="443.4" cy="360.7" rx="0.8" ry="1.0" fill="#e6d51e"/>
<ellipse cx="438.8" cy="360.7" rx="0.8" ry="1.0" fill="#c9be1b"/>
<ellipse cx="471.0" cy="360.4" rx="1.0" ry="1.3" fill="#d1c218"/>
<ellipse cx="513.6" cy="360.0" rx="1.3" ry="1.7" fill="#e4d115"/>
<ellipse cx="445.1" cy="360.6" rx="0.8" ry="1.1" fill="#cbc11b"/>
<ellipse cx="543.0" cy="359.8" rx="1.5" ry="1.9" fill="#e4ce12"/>
<ellipse cx="543.0" cy="359.8" rx="0.6" ry="0.7" fill="#cfa315"/>
<ellipse cx="739.1" cy="358.6" rx="2.4" ry="3.2" fill="#fde81c"/>
<ellipse cx="739.1" cy="358.6" rx="0.9" ry="1.2" fill="#bd8512"/>
<ellipse cx="490.9" cy="360.2" rx="1.2" ry="1.6" fill="#d8c919"/>
<ellipse cx="454.7" cy="360.6" rx="0.9" ry="1.2" fill="#d7c91c"/>
<ellipse cx="574.5" cy="359.6" rx="1.7" ry="2.3" fill="#efd20f"/>
<ellipse cx="574.5" cy="359.6" rx="0.7" ry="0.9" fill="#ca9b14"/>
<ellipse cx="721.4" cy="358.7" rx="2.4" ry="3.2" fill="#fde81c"/>
<ellipse cx="721.4" cy="358.7" rx="0.9" ry="1.2" fill="#bd8612"/>
<ellipse cx="660.0" cy="357.7" rx="3.5" ry="4.2" fill="#fae00e"/>
<ellipse cx="660.0" cy="357.7" rx="1.7" ry="2.1" fill="#a0600e"/>
<ellipse cx="451.8" cy="360.8" rx="0.8" ry="1.1" fill="#e7d51d"/>
<ellipse cx="743.1" cy="358.1" rx="2.8" ry="3.7" fill="#f6d40a"/>
<ellipse cx="743.1" cy="358.1" rx="1.3" ry="1.7" fill="#b57810"/>
<ellipse cx="489.9" cy="360.3" rx="1.3" ry="1.7" fill="#d9cc1d"/>
<ellipse cx="506.6" cy="360.1" rx="1.4" ry="1.8" fill="#e3d31c"/>
<ellipse cx="490.8" cy="360.5" rx="1.1" ry="1.5" fill="#ecd91b"/>
<ellipse cx="556.6" cy="359.9" rx="1.6" ry="2.1" fill="#f1d812"/>
<ellipse cx="556.6" cy="359.9" rx="0.6" ry="0.8" fill="#cd9f15"/>
<ellipse cx="525.2" cy="360.2" rx="1.4" ry="1.8" fill="#f0da19"/>
<ellipse cx="573.0" cy="359.4" rx="2.0" ry="2.6" fill="#f1d410"/>
<ellipse cx="573.0" cy="359.4" rx="0.7" ry="1.0" fill="#c69414"/>
<ellipse cx="599.1" cy="359.2" rx="2.1" ry="2.8" fill="#f7df11"/>
<ellipse cx="599.1" cy="359.2" rx="0.8" ry="1.1" fill="#c28e13"/>
<ellipse cx="475.8" cy="360.6" rx="1.1" ry="1.5" fill="#ddcd1c"/>
<ellipse cx="550.1" cy="360.0" rx="1.6" ry="2.1" fill="#ebd515"/>
<ellipse cx="550.1" cy="360.0" rx="0.6" ry="0.8" fill="#cd9f15"/>
<ellipse cx="622.3" cy="359.2" rx="2.2" ry="2.9" fill="#f4d70d"/>
<ellipse cx="622.3" cy="359.2" rx="0.8" ry="1.1" fill="#c18c13"/>
<polygon points="704.8,357.2 703.1,358.1 703.6,360.3 701.8,359.9 701.3,362.1 700.0,360.5 698.6,362.1 698.1,359.8 696.3,360.2 696.9,358.0 695.2,357.1 696.7,355.7 695.6,353.7 697.5,353.5 697.4,351.2 699.1,352.2 700.0,350.3 701.0,352.3 702.6,351.3 702.6,353.6 704.4,353.8 703.3,355.7" fill="#fbe10e"/>
<polygon points="703.8,358.5 702.3,358.9 702.2,360.7 700.8,360.0 700.0,361.5 699.1,360.0 697.7,360.7 697.6,358.8 696.2,358.4 696.9,356.8 695.9,355.5 697.2,354.7 696.9,352.8 698.4,353.0 698.9,351.3 700.0,352.4 701.2,351.3 701.7,353.1 703.2,352.9 702.8,354.7 704.1,355.6 703.1,356.9" fill="#fbe620"/>
<ellipse cx="700.0" cy="356.3" rx="2.5" ry="3.1" fill="#eaa80e"/>
<ellipse cx="700.0" cy="356.5" rx="2.0" ry="2.5" fill="#a0600e"/>
<ellipse cx="700.0" cy="356.7" rx="1.0" ry="1.2" fill="#c98418" opacity=".7"/>
<ellipse cx="554.1" cy="359.8" rx="1.7" ry="2.3" fill="#f1d813"/>
<ellipse cx="554.1" cy="359.8" rx="0.7" ry="0.9" fill="#ca9a14"/>
<ellipse cx="588.2" cy="359.6" rx="1.9" ry="2.5" fill="#f8e41d"/>
<ellipse cx="588.2" cy="359.6" rx="0.7" ry="0.9" fill="#c79614"/>
<ellipse cx="439.6" cy="361.1" rx="0.8" ry="1.0" fill="#d5c61a"/>
<ellipse cx="452.9" cy="361.1" rx="0.8" ry="1.1" fill="#e8d71e"/>
<ellipse cx="508.1" cy="360.5" rx="1.3" ry="1.7" fill="#e1ca13"/>
<ellipse cx="491.0" cy="360.8" rx="1.1" ry="1.4" fill="#d8c515"/>
<ellipse cx="478.9" cy="360.7" rx="1.2" ry="1.5" fill="#ddcc17"/>
<ellipse cx="549.2" cy="359.9" rx="1.8" ry="2.3" fill="#f1d813"/>
<ellipse cx="549.2" cy="359.9" rx="0.7" ry="0.9" fill="#ca9a14"/>
<ellipse cx="528.8" cy="360.5" rx="1.4" ry="1.8" fill="#eed413"/>
<ellipse cx="552.4" cy="360.2" rx="1.6" ry="2.1" fill="#f0d411"/>
<ellipse cx="552.4" cy="360.2" rx="0.6" ry="0.8" fill="#cd9f15"/>
<ellipse cx="671.3" cy="359.1" rx="2.5" ry="3.3" fill="#fde81c"/>
<ellipse cx="671.3" cy="359.1" rx="1.0" ry="1.3" fill="#bb8211"/>
<ellipse cx="438.2" cy="361.3" rx="0.9" ry="1.1" fill="#e0d11d"/>
<ellipse cx="474.9" cy="360.9" rx="1.2" ry="1.6" fill="#d5c71a"/>
<ellipse cx="504.4" cy="360.9" rx="1.3" ry="1.7" fill="#e1ca13"/>
<ellipse cx="574.5" cy="360.5" rx="1.6" ry="2.0" fill="#f1df1c"/>
<ellipse cx="574.5" cy="360.5" rx="0.6" ry="0.8" fill="#cda015"/>
<ellipse cx="746.4" cy="359.3" rx="2.5" ry="3.2" fill="#f8da0c"/>
<ellipse cx="746.4" cy="359.3" rx="0.9" ry="1.2" fill="#bd8412"/>
<ellipse cx="456.6" cy="361.2" rx="1.0" ry="1.3" fill="#d9c819"/>
<ellipse cx="475.1" cy="361.2" rx="1.1" ry="1.4" fill="#d5c617"/>
<ellipse cx="630.5" cy="359.7" rx="2.2" ry="2.9" fill="#f5d30a"/>
<ellipse cx="630.5" cy="359.7" rx="0.8" ry="1.1" fill="#c18c13"/>
<ellipse cx="605.1" cy="360.4" rx="1.8" ry="2.3" fill="#f2d20b"/>
<ellipse cx="605.1" cy="360.4" rx="0.7" ry="0.9" fill="#c99914"/>
<ellipse cx="482.5" cy="361.2" rx="1.2" ry="1.6" fill="#d9cc1d"/>
<ellipse cx="512.4" cy="360.8" rx="1.5" ry="2.0" fill="#e9d114"/>
<ellipse cx="512.4" cy="360.8" rx="0.6" ry="0.7" fill="#cfa215"/>
<ellipse cx="451.2" cy="361.5" rx="0.9" ry="1.2" fill="#d8c819"/>
<ellipse cx="640.3" cy="360.4" rx="1.9" ry="2.5" fill="#fbe10e"/>
<ellipse cx="640.3" cy="360.4" rx="0.7" ry="0.9" fill="#c89614"/>
<ellipse cx="517.8" cy="361.0" rx="1.4" ry="1.9" fill="#e1cc13"/>
<ellipse cx="591.0" cy="360.0" rx="2.2" ry="2.9" fill="#f4d90f"/>
<ellipse cx="591.0" cy="360.0" rx="0.8" ry="1.1" fill="#c28d13"/>
<ellipse cx="566.9" cy="360.6" rx="1.7" ry="2.3" fill="#f0d911"/>
<ellipse cx="566.9" cy="360.6" rx="0.7" ry="0.9" fill="#ca9a14"/>
<ellipse cx="502.4" cy="361.3" rx="1.2" ry="1.6" fill="#eeda1a"/>
<ellipse cx="458.1" cy="361.7" rx="0.9" ry="1.2" fill="#e3d31c"/>
<ellipse cx="596.7" cy="360.1" rx="2.2" ry="2.9" fill="#f5e21c"/>
<ellipse cx="596.7" cy="360.1" rx="0.8" ry="1.1" fill="#c28d13"/>
<ellipse cx="527.6" cy="360.9" rx="1.6" ry="2.1" fill="#e9d413"/>
<ellipse cx="527.6" cy="360.9" rx="0.6" ry="0.8" fill="#cd9f15"/>
<ellipse cx="491.1" cy="361.3" rx="1.3" ry="1.7" fill="#e9d618"/>
<ellipse cx="509.0" cy="361.2" rx="1.4" ry="1.9" fill="#efda19"/>
<ellipse cx="492.0" cy="361.3" rx="1.4" ry="1.8" fill="#d9c615"/>
<ellipse cx="693.0" cy="360.1" rx="2.3" ry="3.0" fill="#fde81c"/>
<ellipse cx="693.0" cy="360.1" rx="0.9" ry="1.2" fill="#bf8912"/>
<ellipse cx="747.5" cy="360.1" rx="2.2" ry="3.0" fill="#fadf12"/>
<ellipse cx="747.5" cy="360.1" rx="0.9" ry="1.1" fill="#c08b12"/>
<ellipse cx="568.8" cy="361.0" rx="1.6" ry="2.1" fill="#f5dd15"/>
<ellipse cx="568.8" cy="361.0" rx="0.6" ry="0.8" fill="#cd9f15"/>
<ellipse cx="562.7" cy="360.9" rx="1.7" ry="2.2" fill="#edd714"/>
<ellipse cx="562.7" cy="360.9" rx="0.6" ry="0.8" fill="#cb9c15"/>
<ellipse cx="589.8" cy="360.5" rx="2.0" ry="2.7" fill="#f3d40d"/>
<ellipse cx="589.8" cy="360.5" rx="0.8" ry="1.0" fill="#c49113"/>
<ellipse cx="568.6" cy="360.8" rx="1.8" ry="2.4" fill="#f3db14"/>
<ellipse cx="568.6" cy="360.8" rx="0.7" ry="0.9" fill="#c89714"/>
<ellipse cx="588.0" cy="360.4" rx="2.1" ry="2.8" fill="#f6e21c"/>
<ellipse cx="588.0" cy="360.4" rx="0.8" ry="1.1" fill="#c38f13"/>
<ellipse cx="509.1" cy="361.3" rx="1.5" ry="2.0" fill="#ecd816"/>
<ellipse cx="509.1" cy="361.3" rx="0.6" ry="0.7" fill="#cfa215"/>
<ellipse cx="459.8" cy="361.8" rx="1.1" ry="1.4" fill="#ead81d"/>
<ellipse cx="448.8" cy="362.0" rx="1.0" ry="1.3" fill="#e9d81e"/>
<ellipse cx="740.7" cy="359.5" rx="2.9" ry="3.8" fill="#fbe10e"/>
<ellipse cx="740.7" cy="359.5" rx="1.3" ry="1.7" fill="#b57810"/>
<ellipse cx="471.4" cy="361.7" rx="1.2" ry="1.6" fill="#ead519"/>
<ellipse cx="570.5" cy="361.2" rx="1.7" ry="2.3" fill="#f0d50e"/>
<ellipse cx="570.5" cy="361.2" rx="0.7" ry="0.9" fill="#ca9a14"/>
<ellipse cx="500.2" cy="361.9" rx="1.3" ry="1.7" fill="#decb14"/>
<ellipse cx="616.2" cy="361.1" rx="1.8" ry="2.4" fill="#f5d40a"/>
<ellipse cx="616.2" cy="361.1" rx="0.7" ry="0.9" fill="#c89814"/>
<ellipse cx="451.6" cy="362.3" rx="1.0" ry="1.4" fill="#e3d31c"/>
<ellipse cx="553.3" cy="361.0" rx="2.0" ry="2.6" fill="#f4e11d"/>
<ellipse cx="553.3" cy="361.0" rx="0.7" ry="1.0" fill="#c69414"/>
<ellipse cx="641.7" cy="361.0" rx="2.0" ry="2.7" fill="#fbe10e"/>
<ellipse cx="641.7" cy="361.0" rx="0.8" ry="1.0" fill="#c59213"/>
<ellipse cx="580.8" cy="361.5" rx="1.6" ry="2.2" fill="#f6e21c"/>
<ellipse cx="580.8" cy="361.5" rx="0.6" ry="0.8" fill="#cc9d15"/>
<ellipse cx="546.8" cy="361.6" rx="1.6" ry="2.1" fill="#efd20f"/>
<ellipse cx="546.8" cy="361.6" rx="0.6" ry="0.8" fill="#cda015"/>
<ellipse cx="487.9" cy="361.9" rx="1.4" ry="1.8" fill="#eada1e"/>
<ellipse cx="591.7" cy="361.4" rx="1.8" ry="2.4" fill="#f3d70d"/>
<ellipse cx="591.7" cy="361.4" rx="0.7" ry="0.9" fill="#c99814"/>
<ellipse cx="641.3" cy="360.9" rx="2.3" ry="3.0" fill="#fde81c"/>
<ellipse cx="641.3" cy="360.9" rx="0.9" ry="1.1" fill="#c08a12"/>
<ellipse cx="522.0" cy="361.8" rx="1.5" ry="2.0" fill="#e6d314"/>
<ellipse cx="522.0" cy="361.8" rx="0.6" ry="0.8" fill="#cea115"/>
<ellipse cx="462.0" cy="362.3" rx="1.2" ry="1.5" fill="#d4c317"/>
<ellipse cx="532.1" cy="361.7" rx="1.7" ry="2.2" fill="#f0db13"/>
<ellipse cx="532.1" cy="361.7" rx="0.6" ry="0.8" fill="#cb9c15"/>
<ellipse cx="458.6" cy="362.5" rx="1.1" ry="1.4" fill="#ebdb20"/>
<ellipse cx="517.3" cy="361.7" rx="1.6" ry="2.2" fill="#efd814"/>
<ellipse cx="517.3" cy="361.7" rx="0.6" ry="0.8" fill="#cc9d15"/>
<ellipse cx="744.0" cy="360.4" rx="2.7" ry="3.6" fill="#f8da0c"/>
<ellipse cx="744.0" cy="360.4" rx="1.3" ry="1.6" fill="#b87c11"/>
<ellipse cx="652.1" cy="360.7" rx="2.5" ry="3.3" fill="#fbe10e"/>
<ellipse cx="652.1" cy="360.7" rx="1.0" ry="1.3" fill="#bc8312"/>
<ellipse cx="526.7" cy="361.9" rx="1.6" ry="2.1" fill="#eed612"/>
<ellipse cx="526.7" cy="361.9" rx="0.6" ry="0.8" fill="#cc9e15"/>
<ellipse cx="579.2" cy="361.9" rx="1.7" ry="2.2" fill="#f1d20b"/>
<ellipse cx="579.2" cy="361.9" rx="0.6" ry="0.8" fill="#cb9d15"/>
<ellipse cx="724.5" cy="360.2" rx="2.9" ry="3.9" fill="#fbe10e"/>
<ellipse cx="724.5" cy="360.2" rx="1.3" ry="1.8" fill="#b37510"/>
<ellipse cx="564.9" cy="362.0" rx="1.6" ry="2.1" fill="#edd00d"/>
<ellipse cx="564.9" cy="362.0" rx="0.6" ry="0.8" fill="#cc9e15"/>
<ellipse cx="542.3" cy="361.7" rx="1.8" ry="2.4" fill="#f3dc16"/>
<ellipse cx="542.3" cy="361.7" rx="0.7" ry="0.9" fill="#c99814"/>
<ellipse cx="519.0" cy="361.8" rx="1.7" ry="2.3" fill="#f2dc15"/>
<ellipse cx="519.0" cy="361.8" rx="0.7" ry="0.9" fill="#ca9b14"/>
<ellipse cx="620.5" cy="361.1" rx="2.3" ry="3.1" fill="#fbe10e"/>
<ellipse cx="620.5" cy="361.1" rx="0.9" ry="1.2" fill="#bf8812"/>
<ellipse cx="526.7" cy="361.9" rx="1.7" ry="2.2" fill="#ebd415"/>
<ellipse cx="526.7" cy="361.9" rx="0.6" ry="0.8" fill="#cb9d15"/>
<ellipse cx="493.3" cy="362.4" rx="1.3" ry="1.7" fill="#e2cb12"/>
<ellipse cx="636.0" cy="361.5" rx="2.0" ry="2.7" fill="#f8da0c"/>
<ellipse cx="636.0" cy="361.5" rx="0.8" ry="1.0" fill="#c49113"/>
<ellipse cx="567.7" cy="361.5" rx="2.1" ry="2.7" fill="#efd00d"/>
<ellipse cx="567.7" cy="361.5" rx="0.8" ry="1.0" fill="#c49013"/>
<ellipse cx="447.5" cy="362.8" rx="1.1" ry="1.4" fill="#e3d11a"/>
<ellipse cx="469.9" cy="362.7" rx="1.1" ry="1.5" fill="#e6d017"/>
<ellipse cx="468.4" cy="362.6" rx="1.2" ry="1.6" fill="#d7c717"/>
<ellipse cx="543.1" cy="362.0" rx="1.7" ry="2.3" fill="#f2dc12"/>
<ellipse cx="543.1" cy="362.0" rx="0.7" ry="0.9" fill="#ca9a14"/>
<ellipse cx="537.6" cy="362.2" rx="1.6" ry="2.1" fill="#ebce0f"/>
<ellipse cx="537.6" cy="362.2" rx="0.6" ry="0.8" fill="#cc9e15"/>
<ellipse cx="631.3" cy="361.5" rx="2.2" ry="2.9" fill="#fadf12"/>
<ellipse cx="631.3" cy="361.5" rx="0.8" ry="1.1" fill="#c18c13"/>
<ellipse cx="473.5" cy="362.8" rx="1.2" ry="1.6" fill="#d8c515"/>
<ellipse cx="716.0" cy="360.9" rx="2.7" ry="3.6" fill="#f8da0c"/>
<ellipse cx="716.0" cy="360.9" rx="1.2" ry="1.6" fill="#b87c11"/>
<ellipse cx="531.3" cy="362.2" rx="1.7" ry="2.3" fill="#e9ce0f"/>
<ellipse cx="531.3" cy="362.2" rx="0.7" ry="0.9" fill="#ca9a14"/>
<ellipse cx="478.0" cy="362.7" rx="1.4" ry="1.8" fill="#dccf1d"/>
<ellipse cx="639.6" cy="361.6" rx="2.2" ry="2.9" fill="#f6d40a"/>
<ellipse cx="639.6" cy="361.6" rx="0.8" ry="1.1" fill="#c18b13"/>
<ellipse cx="491.3" cy="362.9" rx="1.3" ry="1.7" fill="#edd415"/>
<ellipse cx="464.9" cy="363.1" rx="1.2" ry="1.5" fill="#ecd91b"/>
<ellipse cx="478.9" cy="362.8" rx="1.4" ry="1.9" fill="#e1cc14"/>
<ellipse cx="472.8" cy="363.2" rx="1.2" ry="1.5" fill="#edd91b"/>
<ellipse cx="639.4" cy="361.5" rx="2.5" ry="3.3" fill="#fbe10e"/>
<ellipse cx="639.4" cy="361.5" rx="0.9" ry="1.2" fill="#bc8412"/>
<ellipse cx="443.8" cy="363.4" rx="1.0" ry="1.3" fill="#e4d21a"/>
<ellipse cx="558.5" cy="362.5" rx="1.7" ry="2.3" fill="#edcf0d"/>
<ellipse cx="558.5" cy="362.5" rx="0.7" ry="0.9" fill="#ca9b14"/>
<ellipse cx="584.5" cy="362.0" rx="2.1" ry="2.8" fill="#f9e00f"/>
<ellipse cx="584.5" cy="362.0" rx="0.8" ry="1.1" fill="#c38f13"/>
<ellipse cx="506.6" cy="362.8" rx="1.5" ry="1.9" fill="#eed915"/>
<ellipse cx="506.6" cy="362.8" rx="0.6" ry="0.7" fill="#cfa315"/>
<ellipse cx="446.9" cy="363.4" rx="1.0" ry="1.4" fill="#e5d31b"/>
<ellipse cx="546.9" cy="362.4" rx="1.8" ry="2.4" fill="#f0d20e"/>
<ellipse cx="546.9" cy="362.4" rx="0.7" ry="0.9" fill="#c89714"/>
<ellipse cx="458.7" cy="363.2" rx="1.2" ry="1.6" fill="#decc17"/>
<ellipse cx="531.8" cy="362.8" rx="1.6" ry="2.2" fill="#eed811"/>
<ellipse cx="531.8" cy="362.8" rx="0.6" ry="0.8" fill="#cc9d15"/>
<ellipse cx="585.9" cy="362.1" rx="2.2" ry="2.9" fill="#f6d90d"/>
<ellipse cx="585.9" cy="362.1" rx="0.8" ry="1.1" fill="#c28d13"/>
<ellipse cx="560.1" cy="362.8" rx="1.7" ry="2.3" fill="#f2db10"/>
<ellipse cx="560.1" cy="362.8" rx="0.7" ry="0.9" fill="#ca9b14"/>
<ellipse cx="735.2" cy="361.3" rx="2.9" ry="3.8" fill="#fde81c"/>
<ellipse cx="735.2" cy="361.3" rx="1.3" ry="1.8" fill="#b47610"/>
<ellipse cx="736.8" cy="361.8" rx="2.5" ry="3.3" fill="#fde81c"/>
<ellipse cx="736.8" cy="361.8" rx="0.9" ry="1.2" fill="#bc8312"/>
<ellipse cx="561.0" cy="362.6" rx="1.9" ry="2.5" fill="#f6dd14"/>
<ellipse cx="561.0" cy="362.6" rx="0.7" ry="1.0" fill="#c79514"/>
<ellipse cx="438.9" cy="363.7" rx="1.1" ry="1.4" fill="#e3d21a"/>
<ellipse cx="454.9" cy="363.5" rx="1.2" ry="1.6" fill="#ead519"/>
<ellipse cx="529.1" cy="363.0" rx="1.7" ry="2.2" fill="#ebd612"/>
<ellipse cx="529.1" cy="363.0" rx="0.6" ry="0.8" fill="#cb9d15"/>
<ellipse cx="576.3" cy="362.3" rx="2.2" ry="2.9" fill="#f6dd13"/>
<ellipse cx="576.3" cy="362.3" rx="0.8" ry="1.1" fill="#c18b13"/>
<ellipse cx="468.1" cy="363.7" rx="1.1" ry="1.5" fill="#dccf1d"/>
<ellipse cx="509.8" cy="363.1" rx="1.6" ry="2.1" fill="#ebd91c"/>
<ellipse cx="509.8" cy="363.1" rx="0.6" ry="0.8" fill="#cd9f15"/>
<ellipse cx="487.3" cy="363.3" rx="1.5" ry="2.0" fill="#e1d21c"/>
<ellipse cx="487.3" cy="363.3" rx="0.6" ry="0.7" fill="#cfa215"/>
<ellipse cx="727.7" cy="361.6" rx="2.8" ry="3.7" fill="#fadf12"/>
<ellipse cx="727.7" cy="361.6" rx="1.3" ry="1.7" fill="#b67a10"/>
<ellipse cx="619.1" cy="362.3" rx="2.3" ry="3.1" fill="#f8da0c"/>
<ellipse cx="619.1" cy="362.3" rx="0.9" ry="1.2" fill="#bf8812"/>
<ellipse cx="516.6" cy="363.1" rx="1.7" ry="2.2" fill="#e6cf12"/>
<ellipse cx="516.6" cy="363.1" rx="0.6" ry="0.9" fill="#cb9b15"/>
<ellipse cx="451.0" cy="363.9" rx="1.1" ry="1.5" fill="#e6d519"/>
<ellipse cx="442.7" cy="364.0" rx="1.1" ry="1.4" fill="#e5d41b"/>
<ellipse cx="492.5" cy="363.8" rx="1.3" ry="1.7" fill="#e4d51c"/>
<ellipse cx="735.4" cy="361.8" rx="2.8" ry="3.7" fill="#f8da0c"/>
<ellipse cx="735.4" cy="361.8" rx="1.3" ry="1.7" fill="#b67910"/>
<ellipse cx="646.4" cy="362.3" rx="2.5" ry="3.3" fill="#fbe10e"/>
<ellipse cx="646.4" cy="362.3" rx="0.9" ry="1.2" fill="#bc8412"/>
<ellipse cx="649.3" cy="362.9" rx="2.0" ry="2.7" fill="#f8da0c"/>
<ellipse cx="649.3" cy="362.9" rx="0.8" ry="1.0" fill="#c59213"/>
<ellipse cx="454.0" cy="364.0" rx="1.1" ry="1.5" fill="#deca16"/>
<ellipse cx="629.2" cy="362.4" rx="2.5" ry="3.3" fill="#f8da0c"/>
<ellipse cx="629.2" cy="362.4" rx="0.9" ry="1.2" fill="#bc8412"/>
<ellipse cx="741.8" cy="362.1" rx="2.7" ry="3.6" fill="#fadf12"/>
<ellipse cx="741.8" cy="362.1" rx="1.3" ry="1.7" fill="#b77c11"/>
<ellipse cx="553.2" cy="362.9" rx="2.1" ry="2.8" fill="#efd40f"/>
<ellipse cx="553.2" cy="362.9" rx="0.8" ry="1.1" fill="#c38f13"/>
<ellipse cx="516.9" cy="363.6" rx="1.6" ry="2.1" fill="#ecd615"/>
<ellipse cx="516.9" cy="363.6" rx="0.6" ry="0.8" fill="#cd9f15"/>
<ellipse cx="520.6" cy="363.7" rx="1.5" ry="2.0" fill="#ead515"/>
<ellipse cx="520.6" cy="363.7" rx="0.6" ry="0.8" fill="#cea115"/>
<ellipse cx="439.9" cy="364.4" rx="1.1" ry="1.4" fill="#e5d219"/>
<ellipse cx="587.5" cy="363.0" rx="2.2" ry="2.9" fill="#f6d90c"/>
<ellipse cx="587.5" cy="363.0" rx="0.8" ry="1.1" fill="#c18c13"/>
<ellipse cx="552.9" cy="363.3" rx="1.9" ry="2.6" fill="#f0d50e"/>
<ellipse cx="552.9" cy="363.3" rx="0.7" ry="1.0" fill="#c69414"/>
<ellipse cx="439.5" cy="364.6" rx="1.0" ry="1.3" fill="#e6d71e"/>
<ellipse cx="538.7" cy="363.4" rx="2.0" ry="2.6" fill="#f7e41d"/>
<ellipse cx="538.7" cy="363.4" rx="0.7" ry="1.0" fill="#c69314"/>
<ellipse cx="589.7" cy="363.4" rx="2.0" ry="2.6" fill="#fadf12"/>
<ellipse cx="589.7" cy="363.4" rx="0.8" ry="1.0" fill="#c59313"/>
<ellipse cx="746.7" cy="362.8" rx="2.5" ry="3.2" fill="#fde81c"/>
<ellipse cx="746.7" cy="362.8" rx="0.9" ry="1.2" fill="#bc8412"/>
<ellipse cx="454.6" cy="364.5" rx="1.2" ry="1.6" fill="#d9ca17"/>
<ellipse cx="708.0" cy="360.3" rx="4.1" ry="5.8" fill="#fadf12"/>
<ellipse cx="708.0" cy="360.3" rx="2.0" ry="2.9" fill="#a0600e"/>
<ellipse cx="593.6" cy="363.6" rx="1.9" ry="2.5" fill="#fde81c"/>
<ellipse cx="593.6" cy="363.6" rx="0.7" ry="1.0" fill="#c69414"/>
<ellipse cx="469.0" cy="364.5" rx="1.2" ry="1.6" fill="#e3cf17"/>
<ellipse cx="483.8" cy="364.3" rx="1.4" ry="1.8" fill="#e1cf17"/>
<ellipse cx="534.1" cy="364.2" rx="1.6" ry="2.1" fill="#f8e41d"/>
<ellipse cx="534.1" cy="364.2" rx="0.6" ry="0.8" fill="#cda015"/>
<ellipse cx="461.8" cy="364.5" rx="1.3" ry="1.7" fill="#e2cf15"/>
<ellipse cx="678.0" cy="361.0" rx="4.1" ry="5.2" fill="#fbe10e"/>
<ellipse cx="678.0" cy="361.0" rx="2.0" ry="2.6" fill="#a0600e"/>
<ellipse cx="439.5" cy="364.7" rx="1.1" ry="1.5" fill="#ead519"/>
<ellipse cx="464.5" cy="364.7" rx="1.2" ry="1.5" fill="#eeda1a"/>
<ellipse cx="609.9" cy="363.6" rx="2.1" ry="2.7" fill="#fbe10e"/>
<ellipse cx="609.9" cy="363.6" rx="0.8" ry="1.0" fill="#c49013"/>
<ellipse cx="561.4" cy="363.9" rx="1.9" ry="2.5" fill="#f7de0f"/>
<ellipse cx="561.4" cy="363.9" rx="0.7" ry="0.9" fill="#c89714"/>
<ellipse cx="635.0" cy="363.6" rx="2.1" ry="2.8" fill="#f6d40a"/>
<ellipse cx="635.0" cy="363.6" rx="0.8" ry="1.1" fill="#c38f13"/>
<ellipse cx="615.0" cy="363.6" rx="2.2" ry="2.9" fill="#f8da0c"/>
<ellipse cx="615.0" cy="363.6" rx="0.8" ry="1.1" fill="#c28d13"/>
<ellipse cx="578.9" cy="363.9" rx="2.0" ry="2.7" fill="#fce71c"/>
<ellipse cx="578.9" cy="363.9" rx="0.8" ry="1.0" fill="#c59213"/>
<ellipse cx="455.7" cy="364.8" rx="1.3" ry="1.7" fill="#edd91b"/>
<ellipse cx="737.4" cy="362.5" rx="3.1" ry="4.1" fill="#fbe10e"/>
<ellipse cx="737.4" cy="362.5" rx="1.4" ry="1.9" fill="#b0700f"/>
<ellipse cx="449.3" cy="364.9" rx="1.2" ry="1.6" fill="#dfcb15"/>
<ellipse cx="605.8" cy="363.9" rx="2.0" ry="2.7" fill="#fde81c"/>
<ellipse cx="605.8" cy="363.9" rx="0.8" ry="1.0" fill="#c49113"/>
<ellipse cx="630.2" cy="363.7" rx="2.2" ry="2.9" fill="#fadf12"/>
<ellipse cx="630.2" cy="363.7" rx="0.8" ry="1.1" fill="#c18c13"/>
<ellipse cx="729.1" cy="363.0" rx="2.8" ry="3.7" fill="#fde81c"/>
<ellipse cx="729.1" cy="363.0" rx="1.3" ry="1.7" fill="#b67910"/>
<ellipse cx="554.3" cy="364.1" rx="2.0" ry="2.6" fill="#f5d90e"/>
<ellipse cx="554.3" cy="364.1" rx="0.8" ry="1.0" fill="#c59313"/>
<ellipse cx="546.6" cy="364.1" rx="2.0" ry="2.7" fill="#f5e11c"/>
<ellipse cx="546.6" cy="364.1" rx="0.8" ry="1.0" fill="#c49113"/>
<ellipse cx="475.5" cy="365.0" rx="1.4" ry="1.8" fill="#e0cc14"/>
<ellipse cx="441.5" cy="365.2" rx="1.3" ry="1.7" fill="#e7d519"/>
<ellipse cx="614.3" cy="363.8" rx="2.3" ry="3.1" fill="#f6d40a"/>
<ellipse cx="614.3" cy="363.8" rx="0.9" ry="1.2" fill="#bf8812"/>
<ellipse cx="471.0" cy="364.9" rx="1.5" ry="2.0" fill="#ebd816"/>
<ellipse cx="471.0" cy="364.9" rx="0.6" ry="0.8" fill="#cea115"/>
<ellipse cx="546.7" cy="364.4" rx="2.0" ry="2.6" fill="#efd10c"/>
<ellipse cx="546.7" cy="364.4" rx="0.8" ry="1.0" fill="#c59313"/>
<ellipse cx="541.8" cy="364.6" rx="1.8" ry="2.4" fill="#f0d50e"/>
<ellipse cx="541.8" cy="364.6" rx="0.7" ry="0.9" fill="#c89714"/>
<ellipse cx="474.2" cy="365.3" rx="1.3" ry="1.7" fill="#ecd718"/>
<ellipse cx="513.6" cy="364.7" rx="1.8" ry="2.4" fill="#eed714"/>
<ellipse cx="513.6" cy="364.7" rx="0.7" ry="0.9" fill="#c99814"/>
<ellipse cx="542.1" cy="364.4" rx="2.1" ry="2.7" fill="#f3d80e"/>
<ellipse cx="542.1" cy="364.4" rx="0.8" ry="1.0" fill="#c39013"/>
<ellipse cx="726.2" cy="363.1" rx="3.1" ry="4.1" fill="#fadf12"/>
<ellipse cx="726.2" cy="363.1" rx="1.4" ry="1.9" fill="#b0700f"/>
<ellipse cx="517.5" cy="364.8" rx="1.8" ry="2.3" fill="#efdd1c"/>
<ellipse cx="517.5" cy="364.8" rx="0.7" ry="0.9" fill="#c99914"/>
<ellipse cx="530.0" cy="364.5" rx="2.1" ry="2.8" fill="#f2d70f"/>
<ellipse cx="530.0" cy="364.5" rx="0.8" ry="1.0" fill="#c39013"/>
<ellipse cx="455.3" cy="365.7" rx="1.2" ry="1.6" fill="#edd717"/>
<ellipse cx="638.8" cy="364.2" rx="2.3" ry="3.1" fill="#fbe10e"/>
<ellipse cx="638.8" cy="364.2" rx="0.9" ry="1.2" fill="#bf8812"/>
<ellipse cx="443.7" cy="365.6" rx="1.3" ry="1.8" fill="#edda19"/>
<ellipse cx="465.2" cy="365.5" rx="1.5" ry="2.0" fill="#ecd816"/>
<ellipse cx="465.2" cy="365.5" rx="0.6" ry="0.8" fill="#cea115"/>
<ellipse cx="583.4" cy="364.8" rx="2.1" ry="2.7" fill="#f6d40a"/>
<ellipse cx="583.4" cy="364.8" rx="0.8" ry="1.0" fill="#c49113"/>
<ellipse cx="443.7" cy="366.0" rx="1.2" ry="1.5" fill="#ecd718"/>
<ellipse cx="630.1" cy="364.3" rx="2.4" ry="3.2" fill="#f8da0c"/>
<ellipse cx="630.1" cy="364.3" rx="0.9" ry="1.2" fill="#bd8412"/>
<ellipse cx="652.5" cy="364.5" rx="2.4" ry="3.1" fill="#f8da0c"/>
<ellipse cx="652.5" cy="364.5" rx="0.9" ry="1.2" fill="#be8712"/>
<ellipse cx="625.0" cy="364.8" rx="2.2" ry="2.9" fill="#fadf12"/>
<ellipse cx="625.0" cy="364.8" rx="0.8" ry="1.1" fill="#c18c13"/>
<ellipse cx="447.0" cy="366.0" rx="1.3" ry="1.7" fill="#dccc16"/>
<ellipse cx="746.1" cy="364.4" rx="2.5" ry="3.3" fill="#fde81c"/>
<ellipse cx="746.1" cy="364.4" rx="1.0" ry="1.3" fill="#bb8211"/>
<ellipse cx="487.7" cy="366.0" rx="1.4" ry="1.9" fill="#ebd515"/>
<ellipse cx="537.7" cy="365.2" rx="2.0" ry="2.6" fill="#f9e51c"/>
<ellipse cx="537.7" cy="365.2" rx="0.8" ry="1.0" fill="#c59313"/>
<ellipse cx="550.9" cy="365.2" rx="2.0" ry="2.6" fill="#fae61c"/>
<ellipse cx="550.9" cy="365.2" rx="0.8" ry="1.0" fill="#c59213"/>
<ellipse cx="547.2" cy="365.1" rx="2.2" ry="2.9" fill="#f8df0f"/>
<ellipse cx="547.2" cy="365.1" rx="0.8" ry="1.1" fill="#c18c13"/>
<ellipse cx="578.8" cy="365.3" rx="2.0" ry="2.7" fill="#f8da0c"/>
<ellipse cx="578.8" cy="365.3" rx="0.8" ry="1.0" fill="#c59213"/>
<ellipse cx="537.6" cy="365.3" rx="2.1" ry="2.7" fill="#f8df10"/>
<ellipse cx="537.6" cy="365.3" rx="0.8" ry="1.0" fill="#c49013"/>
<ellipse cx="442.3" cy="366.2" rx="1.4" ry="1.8" fill="#dccf1d"/>
<ellipse cx="547.8" cy="365.5" rx="1.9" ry="2.5" fill="#f4d80d"/>
<ellipse cx="547.8" cy="365.5" rx="0.7" ry="1.0" fill="#c79514"/>
<ellipse cx="455.3" cy="366.3" rx="1.4" ry="1.8" fill="#e9d114"/>
<ellipse cx="459.6" cy="366.2" rx="1.5" ry="1.9" fill="#eed816"/>
<ellipse cx="459.6" cy="366.2" rx="0.6" ry="0.7" fill="#cfa315"/>
<ellipse cx="735.8" cy="364.2" rx="3.0" ry="4.0" fill="#f6d40a"/>
<ellipse cx="735.8" cy="364.2" rx="1.4" ry="1.8" fill="#b1720f"/>
<ellipse cx="459.4" cy="366.3" rx="1.5" ry="2.0" fill="#f0db17"/>
<ellipse cx="459.4" cy="366.3" rx="0.6" ry="0.8" fill="#cea115"/>
<ellipse cx="573.3" cy="365.1" rx="2.4" ry="3.2" fill="#f8da0c"/>
<ellipse cx="573.3" cy="365.1" rx="0.9" ry="1.2" fill="#bd8612"/>
<ellipse cx="732.1" cy="364.2" rx="3.1" ry="4.1" fill="#fde81c"/>
<ellipse cx="732.1" cy="364.2" rx="1.4" ry="1.9" fill="#b06f0f"/>
<ellipse cx="551.0" cy="365.3" rx="2.3" ry="3.0" fill="#f8de12"/>
<ellipse cx="551.0" cy="365.3" rx="0.9" ry="1.1" fill="#c08912"/>
<ellipse cx="747.5" cy="364.6" rx="2.8" ry="3.7" fill="#fde81c"/>
<ellipse cx="747.5" cy="364.6" rx="1.3" ry="1.7" fill="#b57810"/>
<ellipse cx="470.4" cy="366.4" rx="1.5" ry="2.0" fill="#e5d61c"/>
<ellipse cx="470.4" cy="366.4" rx="0.6" ry="0.7" fill="#cfa215"/>
<ellipse cx="738.2" cy="364.7" rx="2.8" ry="3.7" fill="#fbe10e"/>
<ellipse cx="738.2" cy="364.7" rx="1.3" ry="1.7" fill="#b57810"/>
<ellipse cx="463.9" cy="366.4" rx="1.5" ry="2.0" fill="#ecd718"/>
<ellipse cx="463.9" cy="366.4" rx="0.6" ry="0.8" fill="#cea115"/>
<ellipse cx="727.1" cy="365.1" rx="2.5" ry="3.3" fill="#f6d40a"/>
<ellipse cx="727.1" cy="365.1" rx="1.0" ry="1.3" fill="#bb8211"/>
<ellipse cx="444.1" cy="366.8" rx="1.3" ry="1.7" fill="#ebda1e"/>
<ellipse cx="532.9" cy="365.8" rx="2.1" ry="2.8" fill="#f5d90e"/>
<ellipse cx="532.9" cy="365.8" rx="0.8" ry="1.0" fill="#c38f13"/>
<ellipse cx="546.3" cy="366.2" rx="1.8" ry="2.4" fill="#fbe61c"/>
<ellipse cx="546.3" cy="366.2" rx="0.7" ry="0.9" fill="#c89814"/>
<ellipse cx="531.4" cy="366.5" rx="1.7" ry="2.3" fill="#f3d70d"/>
<ellipse cx="531.4" cy="366.5" rx="0.7" ry="0.9" fill="#ca9b14"/>
<ellipse cx="548.1" cy="366.3" rx="1.8" ry="2.4" fill="#f5d30a"/>
<ellipse cx="548.1" cy="366.3" rx="0.7" ry="0.9" fill="#c89814"/>
<ellipse cx="444.9" cy="367.2" rx="1.2" ry="1.6" fill="#f0df1e"/>
<ellipse cx="548.1" cy="366.2" rx="1.9" ry="2.5" fill="#f5d30a"/>
<ellipse cx="548.1" cy="366.2" rx="0.7" ry="1.0" fill="#c79514"/>
<ellipse cx="438.3" cy="367.3" rx="1.2" ry="1.6" fill="#e4d015"/>
<ellipse cx="477.7" cy="366.8" rx="1.6" ry="2.1" fill="#f3dd14"/>
<ellipse cx="477.7" cy="366.8" rx="0.6" ry="0.8" fill="#cd9f15"/>
<ellipse cx="457.6" cy="367.2" rx="1.4" ry="1.8" fill="#e3d114"/>
<ellipse cx="621.1" cy="366.0" rx="2.3" ry="3.1" fill="#fadf12"/>
<ellipse cx="621.1" cy="366.0" rx="0.9" ry="1.2" fill="#bf8812"/>
<ellipse cx="488.0" cy="366.6" rx="1.9" ry="2.5" fill="#ebd210"/>
<ellipse cx="488.0" cy="366.6" rx="0.7" ry="1.0" fill="#c79514"/>
<ellipse cx="495.9" cy="366.5" rx="1.9" ry="2.6" fill="#f2dc12"/>
<ellipse cx="495.9" cy="366.5" rx="0.7" ry="1.0" fill="#c69414"/>
<ellipse cx="638.7" cy="365.3" rx="2.9" ry="3.8" fill="#fbe10e"/>
<ellipse cx="638.7" cy="365.3" rx="1.3" ry="1.8" fill="#b47710"/>
<ellipse cx="532.5" cy="366.6" rx="1.9" ry="2.6" fill="#f4d30b"/>
<ellipse cx="532.5" cy="366.6" rx="0.7" ry="1.0" fill="#c69414"/>
<ellipse cx="626.0" cy="365.5" rx="2.8" ry="3.7" fill="#fde81c"/>
<ellipse cx="626.0" cy="365.5" rx="1.3" ry="1.7" fill="#b67910"/>
<ellipse cx="518.2" cy="367.0" rx="1.8" ry="2.3" fill="#f7dd14"/>
<ellipse cx="518.2" cy="367.0" rx="0.7" ry="0.9" fill="#ca9a14"/>
<ellipse cx="478.7" cy="366.9" rx="1.8" ry="2.4" fill="#e8d315"/>
<ellipse cx="478.7" cy="366.9" rx="0.7" ry="0.9" fill="#c89814"/>
<ellipse cx="439.2" cy="367.7" rx="1.2" ry="1.6" fill="#ead415"/>
<ellipse cx="438.7" cy="367.7" rx="1.3" ry="1.7" fill="#e3ce13"/>
<ellipse cx="439.5" cy="367.6" rx="1.4" ry="1.8" fill="#e6d51c"/>
<ellipse cx="733.3" cy="365.2" rx="3.2" ry="4.2" fill="#f8da0c"/>
<ellipse cx="733.3" cy="365.2" rx="1.5" ry="1.9" fill="#af6d0f"/>
<ellipse cx="481.6" cy="367.1" rx="1.8" ry="2.4" fill="#eed210"/>
<ellipse cx="481.6" cy="367.1" rx="0.7" ry="0.9" fill="#c99814"/>
<ellipse cx="524.5" cy="366.9" rx="2.0" ry="2.6" fill="#f3d70d"/>
<ellipse cx="524.5" cy="366.9" rx="0.8" ry="1.0" fill="#c59313"/>
<ellipse cx="453.8" cy="367.6" rx="1.4" ry="1.9" fill="#f2e01e"/>
<ellipse cx="453.8" cy="367.6" rx="0.6" ry="0.7" fill="#cfa315"/>
<ellipse cx="559.1" cy="366.7" rx="2.1" ry="2.8" fill="#fde81c"/>
<ellipse cx="559.1" cy="366.7" rx="0.8" ry="1.1" fill="#c28e13"/>
<ellipse cx="561.0" cy="366.9" rx="2.0" ry="2.7" fill="#fadf12"/>
<ellipse cx="561.0" cy="366.9" rx="0.8" ry="1.0" fill="#c49113"/>
<ellipse cx="574.9" cy="366.6" rx="2.3" ry="3.1" fill="#f6d40a"/>
<ellipse cx="574.9" cy="366.6" rx="0.9" ry="1.2" fill="#bf8812"/>
<ellipse cx="562.3" cy="367.1" rx="1.9" ry="2.5" fill="#f8da0c"/>
<ellipse cx="562.3" cy="367.1" rx="0.7" ry="1.0" fill="#c69514"/>
<ellipse cx="506.4" cy="367.2" rx="1.9" ry="2.5" fill="#f4d90f"/>
<ellipse cx="506.4" cy="367.2" rx="0.7" ry="1.0" fill="#c79514"/>
<ellipse cx="479.9" cy="367.8" rx="1.5" ry="2.0" fill="#ead515"/>
<ellipse cx="479.9" cy="367.8" rx="0.6" ry="0.7" fill="#cfa215"/>
<ellipse cx="517.4" cy="367.1" rx="2.0" ry="2.6" fill="#f6e21c"/>
<ellipse cx="517.4" cy="367.1" rx="0.8" ry="1.0" fill="#c59313"/>
<ellipse cx="509.8" cy="367.5" rx="1.7" ry="2.3" fill="#f4d80e"/>
<ellipse cx="509.8" cy="367.5" rx="0.7" ry="0.9" fill="#ca9a14"/>
<ellipse cx="619.6" cy="367.0" rx="2.1" ry="2.8" fill="#fbe10e"/>
<ellipse cx="619.6" cy="367.0" rx="0.8" ry="1.1" fill="#c28e13"/>
<ellipse cx="474.3" cy="367.5" rx="1.8" ry="2.3" fill="#f0d411"/>
<ellipse cx="474.3" cy="367.5" rx="0.7" ry="0.9" fill="#c99914"/>
<ellipse cx="559.2" cy="366.7" rx="2.4" ry="3.2" fill="#f8da0c"/>
<ellipse cx="559.2" cy="366.7" rx="0.9" ry="1.2" fill="#bd8612"/>
<ellipse cx="564.3" cy="367.3" rx="2.0" ry="2.6" fill="#f8da0c"/>
<ellipse cx="564.3" cy="367.3" rx="0.8" ry="1.0" fill="#c59313"/>
<ellipse cx="472.9" cy="367.6" rx="1.8" ry="2.4" fill="#ead91c"/>
<ellipse cx="472.9" cy="367.6" rx="0.7" ry="0.9" fill="#c99914"/>
<ellipse cx="697.2" cy="366.4" rx="2.6" ry="3.5" fill="#fadf12"/>
<ellipse cx="697.2" cy="366.4" rx="1.2" ry="1.6" fill="#b97f11"/>
<ellipse cx="458.2" cy="367.8" rx="1.6" ry="2.1" fill="#eed413"/>
<ellipse cx="458.2" cy="367.8" rx="0.6" ry="0.8" fill="#cc9e15"/>
<ellipse cx="742.0" cy="365.4" rx="3.5" ry="4.6" fill="#f8da0c"/>
<ellipse cx="742.0" cy="365.4" rx="1.6" ry="2.1" fill="#a8630e"/>
<ellipse cx="563.3" cy="367.1" rx="2.3" ry="3.0" fill="#f8da0c"/>
<ellipse cx="563.3" cy="367.1" rx="0.9" ry="1.1" fill="#c08a12"/>
<ellipse cx="513.7" cy="367.9" rx="1.8" ry="2.3" fill="#f6dd0f"/>
<ellipse cx="513.7" cy="367.9" rx="0.7" ry="0.9" fill="#ca9a14"/>
<ellipse cx="517.0" cy="367.5" rx="2.1" ry="2.8" fill="#fae61c"/>
<ellipse cx="517.0" cy="367.5" rx="0.8" ry="1.1" fill="#c38e13"/>
<ellipse cx="577.8" cy="366.8" rx="2.7" ry="3.6" fill="#fde81c"/>
<ellipse cx="577.8" cy="366.8" rx="1.2" ry="1.6" fill="#b87c11"/>
<ellipse cx="569.2" cy="367.1" rx="2.6" ry="3.4" fill="#fde81c"/>
<ellipse cx="569.2" cy="367.1" rx="1.2" ry="1.5" fill="#bb8111"/>
<ellipse cx="581.7" cy="367.0" rx="2.7" ry="3.5" fill="#f8da0c"/>
<ellipse cx="581.7" cy="367.0" rx="1.2" ry="1.6" fill="#b87d11"/>
<ellipse cx="533.4" cy="367.9" rx="2.0" ry="2.6" fill="#fae00e"/>
<ellipse cx="533.4" cy="367.9" rx="0.8" ry="1.0" fill="#c69314"/>
<ellipse cx="537.6" cy="367.5" rx="2.3" ry="3.0" fill="#fce71c"/>
<ellipse cx="537.6" cy="367.5" rx="0.9" ry="1.1" fill="#c08912"/>
<ellipse cx="489.7" cy="368.4" rx="1.6" ry="2.2" fill="#f4e01c"/>
<ellipse cx="489.7" cy="368.4" rx="0.6" ry="0.8" fill="#cc9d15"/>
<ellipse cx="491.2" cy="368.4" rx="1.8" ry="2.4" fill="#f5dd11"/>
<ellipse cx="491.2" cy="368.4" rx="0.7" ry="0.9" fill="#c99814"/>
<ellipse cx="536.6" cy="368.4" rx="1.9" ry="2.5" fill="#fbe10e"/>
<ellipse cx="536.6" cy="368.4" rx="0.7" ry="0.9" fill="#c79614"/>
<ellipse cx="484.3" cy="368.8" rx="1.6" ry="2.1" fill="#f3e01c"/>
<ellipse cx="484.3" cy="368.8" rx="0.6" ry="0.8" fill="#cda015"/>
<ellipse cx="453.8" cy="368.9" rx="1.5" ry="2.0" fill="#e7cd10"/>
<ellipse cx="453.8" cy="368.9" rx="0.6" ry="0.8" fill="#cea015"/>
<ellipse cx="600.7" cy="366.3" rx="3.5" ry="4.6" fill="#fadf12"/>
<ellipse cx="600.7" cy="366.3" rx="1.7" ry="2.3" fill="#a8600e"/>
<ellipse cx="523.7" cy="368.5" rx="1.8" ry="2.4" fill="#f7d90c"/>
<ellipse cx="523.7" cy="368.5" rx="0.7" ry="0.9" fill="#c89714"/>
<ellipse cx="444.6" cy="369.1" rx="1.4" ry="1.9" fill="#e6cc11"/>
<ellipse cx="632.7" cy="367.4" rx="2.7" ry="3.5" fill="#f6d40a"/>
<ellipse cx="632.7" cy="367.4" rx="1.2" ry="1.6" fill="#b87d11"/>
<ellipse cx="526.6" cy="368.4" rx="2.0" ry="2.6" fill="#f7d90c"/>
<ellipse cx="526.6" cy="368.4" rx="0.8" ry="1.0" fill="#c59213"/>
<ellipse cx="478.6" cy="369.0" rx="1.6" ry="2.1" fill="#f3d910"/>
<ellipse cx="478.6" cy="369.0" rx="0.6" ry="0.8" fill="#cda015"/>
<ellipse cx="524.1" cy="368.6" rx="1.9" ry="2.5" fill="#f9de12"/>
<ellipse cx="524.1" cy="368.6" rx="0.7" ry="1.0" fill="#c79514"/>
<ellipse cx="736.7" cy="366.9" rx="3.2" ry="4.2" fill="#fadf12"/>
<ellipse cx="736.7" cy="366.9" rx="1.5" ry="1.9" fill="#af6d0f"/>
<ellipse cx="551.4" cy="368.1" rx="2.4" ry="3.1" fill="#fbe10e"/>
<ellipse cx="551.4" cy="368.1" rx="0.9" ry="1.2" fill="#be8612"/>
<ellipse cx="552.0" cy="368.4" rx="2.2" ry="2.9" fill="#fadf12"/>
<ellipse cx="552.0" cy="368.4" rx="0.8" ry="1.1" fill="#c18b13"/>
<ellipse cx="732.8" cy="367.5" rx="3.0" ry="3.9" fill="#f8da0c"/>
<ellipse cx="732.8" cy="367.5" rx="1.4" ry="1.8" fill="#b37410"/>
<ellipse cx="450.6" cy="369.3" rx="1.6" ry="2.1" fill="#e6d216"/>
<ellipse cx="450.6" cy="369.3" rx="0.6" ry="0.8" fill="#cc9e15"/>
<ellipse cx="457.1" cy="369.3" rx="1.7" ry="2.2" fill="#f4e21d"/>
<ellipse cx="457.1" cy="369.3" rx="0.6" ry="0.8" fill="#cb9c15"/>
<ellipse cx="468.3" cy="369.1" rx="1.9" ry="2.5" fill="#eed714"/>
<ellipse cx="468.3" cy="369.1" rx="0.7" ry="0.9" fill="#c79614"/>
<ellipse cx="455.2" cy="369.3" rx="1.8" ry="2.3" fill="#e5cc10"/>
<ellipse cx="455.2" cy="369.3" rx="0.7" ry="0.9" fill="#c99914"/>
<ellipse cx="505.5" cy="369.0" rx="2.0" ry="2.6" fill="#f4d40b"/>
<ellipse cx="505.5" cy="369.0" rx="0.8" ry="1.0" fill="#c59213"/>
<ellipse cx="481.7" cy="369.5" rx="1.6" ry="2.2" fill="#f1d30d"/>
<ellipse cx="481.7" cy="369.5" rx="0.6" ry="0.8" fill="#cc9e15"/>
<ellipse cx="441.2" cy="369.5" rx="1.6" ry="2.2" fill="#f0d814"/>
<ellipse cx="441.2" cy="369.5" rx="0.6" ry="0.8" fill="#cc9d15"/>
<ellipse cx="498.5" cy="368.9" rx="2.1" ry="2.8" fill="#f1d60e"/>
<ellipse cx="498.5" cy="368.9" rx="0.8" ry="1.1" fill="#c28e13"/>
<ellipse cx="507.0" cy="368.9" rx="2.2" ry="2.9" fill="#f2d20b"/>
<ellipse cx="507.0" cy="368.9" rx="0.8" ry="1.1" fill="#c28d13"/>
<ellipse cx="564.5" cy="369.1" rx="2.1" ry="2.7" fill="#fde81c"/>
<ellipse cx="564.5" cy="369.1" rx="0.8" ry="1.0" fill="#c49013"/>
<ellipse cx="537.6" cy="368.9" rx="2.3" ry="3.0" fill="#f8da0c"/>
<ellipse cx="537.6" cy="368.9" rx="0.9" ry="1.1" fill="#c08912"/>
<ellipse cx="738.5" cy="367.5" rx="3.3" ry="4.4" fill="#f6d40a"/>
<ellipse cx="738.5" cy="367.5" rx="1.5" ry="2.0" fill="#ac690e"/>
<ellipse cx="512.9" cy="369.3" rx="2.1" ry="2.7" fill="#f8dd12"/>
<ellipse cx="512.9" cy="369.3" rx="0.8" ry="1.0" fill="#c49013"/>
<ellipse cx="523.2" cy="368.8" rx="2.4" ry="3.2" fill="#f9de12"/>
<ellipse cx="523.2" cy="368.8" rx="0.9" ry="1.2" fill="#bd8512"/>
<ellipse cx="484.8" cy="369.6" rx="1.9" ry="2.5" fill="#f7df11"/>
<ellipse cx="484.8" cy="369.6" rx="0.7" ry="0.9" fill="#c89614"/>
<ellipse cx="564.8" cy="368.6" rx="2.7" ry="3.5" fill="#f6d40a"/>
<ellipse cx="564.8" cy="368.6" rx="1.2" ry="1.6" fill="#b97e11"/>
<ellipse cx="439.0" cy="370.2" rx="1.4" ry="1.8" fill="#f1df1d"/>
<ellipse cx="480.2" cy="370.0" rx="1.6" ry="2.1" fill="#f4dc10"/>
<ellipse cx="480.2" cy="370.0" rx="0.6" ry="0.8" fill="#cd9f15"/>
<ellipse cx="737.6" cy="367.9" rx="3.2" ry="4.2" fill="#fbe10e"/>
<ellipse cx="737.6" cy="367.9" rx="1.5" ry="1.9" fill="#ae6d0f"/>
<ellipse cx="555.4" cy="369.5" rx="2.1" ry="2.7" fill="#f6d40a"/>
<ellipse cx="555.4" cy="369.5" rx="0.8" ry="1.0" fill="#c49013"/>
<ellipse cx="474.0" cy="369.9" rx="1.7" ry="2.3" fill="#f4dd11"/>
<ellipse cx="474.0" cy="369.9" rx="0.7" ry="0.9" fill="#ca9b14"/>
<ellipse cx="486.9" cy="369.6" rx="2.0" ry="2.6" fill="#f0d10c"/>
<ellipse cx="486.9" cy="369.6" rx="0.8" ry="1.0" fill="#c59213"/>
<ellipse cx="531.4" cy="369.8" rx="1.9" ry="2.5" fill="#fde81c"/>
<ellipse cx="531.4" cy="369.8" rx="0.7" ry="1.0" fill="#c79514"/>
<ellipse cx="723.5" cy="368.0" rx="3.3" ry="4.3" fill="#fbe10e"/>
<ellipse cx="723.5" cy="368.0" rx="1.5" ry="2.0" fill="#ad6a0f"/>
<ellipse cx="745.2" cy="368.2" rx="3.2" ry="4.3" fill="#fadf12"/>
<ellipse cx="745.2" cy="368.2" rx="1.5" ry="2.0" fill="#ae6c0f"/>
<ellipse cx="519.3" cy="369.7" rx="2.1" ry="2.7" fill="#fde81c"/>
<ellipse cx="519.3" cy="369.7" rx="0.8" ry="1.0" fill="#c49113"/>
<ellipse cx="533.0" cy="369.4" rx="2.3" ry="3.1" fill="#fadf12"/>
<ellipse cx="533.0" cy="369.4" rx="0.9" ry="1.2" fill="#bf8812"/>
<ellipse cx="540.9" cy="369.0" rx="2.6" ry="3.4" fill="#f8da0c"/>
<ellipse cx="540.9" cy="369.0" rx="1.2" ry="1.6" fill="#ba8011"/>
<ellipse cx="552.9" cy="369.5" rx="2.3" ry="3.0" fill="#fbe10e"/>
<ellipse cx="552.9" cy="369.5" rx="0.9" ry="1.1" fill="#c08a12"/>
<ellipse cx="510.0" cy="369.4" rx="2.4" ry="3.1" fill="#f5d30a"/>
<ellipse cx="510.0" cy="369.4" rx="0.9" ry="1.2" fill="#be8712"/>
<ellipse cx="557.5" cy="369.8" rx="2.1" ry="2.8" fill="#f6d40a"/>
<ellipse cx="557.5" cy="369.8" rx="0.8" ry="1.0" fill="#c38f13"/>
<ellipse cx="542.6" cy="369.4" rx="2.4" ry="3.2" fill="#fde81c"/>
<ellipse cx="542.6" cy="369.4" rx="0.9" ry="1.2" fill="#bd8512"/>
<ellipse cx="505.2" cy="370.2" rx="1.9" ry="2.4" fill="#f9de12"/>
<ellipse cx="505.2" cy="370.2" rx="0.7" ry="0.9" fill="#c89714"/>
<ellipse cx="746.3" cy="368.5" rx="3.1" ry="4.1" fill="#fbe10e"/>
<ellipse cx="746.3" cy="368.5" rx="1.4" ry="1.9" fill="#b0700f"/>
<ellipse cx="555.5" cy="369.2" rx="2.6" ry="3.4" fill="#f6d40a"/>
<ellipse cx="555.5" cy="369.2" rx="1.2" ry="1.6" fill="#b97f11"/>
<ellipse cx="535.7" cy="369.7" rx="2.3" ry="3.0" fill="#f6d40a"/>
<ellipse cx="535.7" cy="369.7" rx="0.9" ry="1.2" fill="#bf8912"/>
<ellipse cx="461.3" cy="370.3" rx="1.9" ry="2.5" fill="#f1d710"/>
<ellipse cx="461.3" cy="370.3" rx="0.7" ry="1.0" fill="#c69414"/>
<ellipse cx="507.2" cy="370.3" rx="2.0" ry="2.6" fill="#f7d90c"/>
<ellipse cx="507.2" cy="370.3" rx="0.7" ry="1.0" fill="#c69414"/>
<ellipse cx="441.6" cy="370.9" rx="1.5" ry="1.9" fill="#f4dd14"/>
<ellipse cx="441.6" cy="370.9" rx="0.6" ry="0.7" fill="#cfa215"/>
<ellipse cx="698.6" cy="368.3" rx="3.5" ry="4.6" fill="#f8da0c"/>
<ellipse cx="698.6" cy="368.3" rx="1.6" ry="2.1" fill="#a9630e"/>
<ellipse cx="653.1" cy="369.5" rx="2.6" ry="3.5" fill="#f8da0c"/>
<ellipse cx="653.1" cy="369.5" rx="1.2" ry="1.6" fill="#b97f11"/>
<ellipse cx="473.8" cy="370.7" rx="1.7" ry="2.3" fill="#f0d50e"/>
<ellipse cx="473.8" cy="370.7" rx="0.7" ry="0.9" fill="#ca9b14"/>
<ellipse cx="446.0" cy="370.7" rx="1.8" ry="2.4" fill="#edd614"/>
<ellipse cx="446.0" cy="370.7" rx="0.7" ry="0.9" fill="#c99914"/>
<ellipse cx="455.0" cy="370.5" rx="1.9" ry="2.5" fill="#f6e31d"/>
<ellipse cx="455.0" cy="370.5" rx="0.7" ry="1.0" fill="#c69514"/>
<ellipse cx="485.0" cy="370.5" rx="2.0" ry="2.6" fill="#f6dd0f"/>
<ellipse cx="485.0" cy="370.5" rx="0.7" ry="1.0" fill="#c69414"/>
<ellipse cx="516.0" cy="370.7" rx="2.0" ry="2.6" fill="#f8da0c"/>
<ellipse cx="516.0" cy="370.7" rx="0.7" ry="1.0" fill="#c69414"/>
<ellipse cx="501.9" cy="370.5" rx="2.2" ry="2.9" fill="#f5d30a"/>
<ellipse cx="501.9" cy="370.5" rx="0.8" ry="1.1" fill="#c18b13"/>
<ellipse cx="527.3" cy="370.1" rx="2.6" ry="3.4" fill="#f6d40a"/>
<ellipse cx="527.3" cy="370.1" rx="1.2" ry="1.6" fill="#ba8011"/>
<ellipse cx="506.2" cy="370.7" rx="2.3" ry="3.0" fill="#fde81c"/>
<ellipse cx="506.2" cy="370.7" rx="0.9" ry="1.1" fill="#c08912"/>
<ellipse cx="483.4" cy="371.0" rx="2.2" ry="2.9" fill="#f6dc12"/>
<ellipse cx="483.4" cy="371.0" rx="0.8" ry="1.1" fill="#c28d13"/>
<ellipse cx="462.8" cy="371.6" rx="1.9" ry="2.5" fill="#f1d913"/>
<ellipse cx="462.8" cy="371.6" rx="0.7" ry="0.9" fill="#c79614"/>
<ellipse cx="478.6" cy="371.3" rx="2.1" ry="2.8" fill="#f4db13"/>
<ellipse cx="478.6" cy="371.3" rx="0.8" ry="1.0" fill="#c38f13"/>
<polygon points="693.5,373.1 691.8,372.1 690.9,374.3 689.9,372.2 688.2,373.4 688.2,370.9 686.4,370.7 687.4,368.5 685.9,367.0 687.6,365.9 686.9,363.5 688.8,363.9 689.2,361.4 690.6,363.1 691.9,361.3 692.4,363.7 694.2,363.2 693.7,365.6 695.4,366.5 694.1,368.2 695.2,370.2 693.3,370.6" fill="#fde81c"/>
<polygon points="692.0,373.1 690.8,371.9 689.7,373.3 689.1,371.4 687.6,371.6 687.9,369.6 686.6,368.7 687.6,367.3 686.8,365.5 688.3,365.0 688.3,363.0 689.7,363.7 690.5,362.0 691.5,363.6 692.8,362.8 693.0,364.8 694.4,365.1 693.7,366.9 694.9,368.3 693.6,369.3 694.0,371.3 692.5,371.2" fill="#fbe620"/>
<ellipse cx="690.7" cy="367.7" rx="2.5" ry="3.4" fill="#eaa80e"/>
<ellipse cx="690.7" cy="367.9" rx="2.0" ry="2.7" fill="#a8600e"/>
<ellipse cx="690.7" cy="368.1" rx="1.0" ry="1.4" fill="#c98418" opacity=".7"/>
<ellipse cx="501.9" cy="371.2" rx="2.2" ry="2.9" fill="#fde81c"/>
<ellipse cx="501.9" cy="371.2" rx="0.8" ry="1.1" fill="#c18b13"/>
<ellipse cx="497.5" cy="371.2" rx="2.3" ry="3.0" fill="#f7d90c"/>
<ellipse cx="497.5" cy="371.2" rx="0.9" ry="1.1" fill="#c08a12"/>
<ellipse cx="464.6" cy="371.4" rx="2.1" ry="2.7" fill="#f6dd14"/>
<ellipse cx="464.6" cy="371.4" rx="0.8" ry="1.0" fill="#c39013"/>
<ellipse cx="552.0" cy="371.3" rx="2.2" ry="2.9" fill="#f6d40a"/>
<ellipse cx="552.0" cy="371.3" rx="0.8" ry="1.1" fill="#c18c13"/>
<ellipse cx="500.5" cy="371.4" rx="2.1" ry="2.8" fill="#fde81c"/>
<ellipse cx="500.5" cy="371.4" rx="0.8" ry="1.1" fill="#c38f13"/>
<ellipse cx="483.0" cy="371.3" rx="2.2" ry="2.9" fill="#f6d90d"/>
<ellipse cx="483.0" cy="371.3" rx="0.8" ry="1.1" fill="#c18c13"/>
<ellipse cx="482.9" cy="371.4" rx="2.2" ry="2.9" fill="#f4d40b"/>
<ellipse cx="482.9" cy="371.4" rx="0.8" ry="1.1" fill="#c28d13"/>
<ellipse cx="453.7" cy="372.1" rx="1.7" ry="2.2" fill="#f8e41d"/>
<ellipse cx="453.7" cy="372.1" rx="0.6" ry="0.8" fill="#cb9c15"/>
<ellipse cx="549.8" cy="370.6" rx="2.8" ry="3.7" fill="#f8da0c"/>
<ellipse cx="549.8" cy="370.6" rx="1.3" ry="1.7" fill="#b67910"/>
<ellipse cx="631.2" cy="370.7" rx="2.8" ry="3.6" fill="#fbe10e"/>
<ellipse cx="631.2" cy="370.7" rx="1.3" ry="1.7" fill="#b77b11"/>
<ellipse cx="489.8" cy="371.5" rx="2.2" ry="2.9" fill="#f5d30a"/>
<ellipse cx="489.8" cy="371.5" rx="0.8" ry="1.1" fill="#c18c13"/>
<ellipse cx="524.5" cy="371.4" rx="2.3" ry="3.0" fill="#fbe10e"/>
<ellipse cx="524.5" cy="371.4" rx="0.9" ry="1.2" fill="#bf8912"/>
<ellipse cx="528.6" cy="371.0" rx="2.6" ry="3.4" fill="#f6d40a"/>
<ellipse cx="528.6" cy="371.0" rx="1.2" ry="1.6" fill="#ba8011"/>
<ellipse cx="521.1" cy="371.3" rx="2.4" ry="3.2" fill="#fadf12"/>
<ellipse cx="521.1" cy="371.3" rx="0.9" ry="1.2" fill="#bd8512"/>
<ellipse cx="451.6" cy="372.4" rx="1.6" ry="2.1" fill="#edcf0d"/>
<ellipse cx="451.6" cy="372.4" rx="0.6" ry="0.8" fill="#cd9f15"/>
<ellipse cx="582.5" cy="371.4" rx="2.4" ry="3.2" fill="#fde81c"/>
<ellipse cx="582.5" cy="371.4" rx="0.9" ry="1.2" fill="#bd8512"/>
<ellipse cx="476.9" cy="371.9" rx="2.2" ry="2.9" fill="#f6dc12"/>
<ellipse cx="476.9" cy="371.9" rx="0.8" ry="1.1" fill="#c28d13"/>
<ellipse cx="521.9" cy="371.6" rx="2.5" ry="3.3" fill="#fadf12"/>
<ellipse cx="521.9" cy="371.6" rx="0.9" ry="1.2" fill="#bc8412"/>
<ellipse cx="492.8" cy="372.2" rx="2.0" ry="2.6" fill="#fbe10e"/>
<ellipse cx="492.8" cy="372.2" rx="0.8" ry="1.0" fill="#c59213"/>
<ellipse cx="519.0" cy="371.6" rx="2.5" ry="3.3" fill="#f6d40a"/>
<ellipse cx="519.0" cy="371.6" rx="1.0" ry="1.3" fill="#bb8211"/>
<ellipse cx="513.6" cy="372.1" rx="2.2" ry="2.9" fill="#fde81c"/>
<ellipse cx="513.6" cy="372.1" rx="0.8" ry="1.1" fill="#c28d13"/>
<ellipse cx="591.3" cy="369.7" rx="4.1" ry="5.2" fill="#fbe10e"/>
<ellipse cx="591.3" cy="369.7" rx="2.0" ry="2.6" fill="#a8600e"/>
<ellipse cx="443.5" cy="372.6" rx="1.8" ry="2.3" fill="#f5dd15"/>
<ellipse cx="443.5" cy="372.6" rx="0.7" ry="0.9" fill="#c99914"/>
<ellipse cx="546.3" cy="372.1" rx="2.2" ry="2.9" fill="#fbe10e"/>
<ellipse cx="546.3" cy="372.1" rx="0.8" ry="1.1" fill="#c18c13"/>
<ellipse cx="739.3" cy="371.3" rx="2.8" ry="3.7" fill="#fbe10e"/>
<ellipse cx="739.3" cy="371.3" rx="1.3" ry="1.7" fill="#b57910"/>
<ellipse cx="465.6" cy="372.3" rx="2.1" ry="2.8" fill="#f6dd13"/>
<ellipse cx="465.6" cy="372.3" rx="0.8" ry="1.1" fill="#c38f13"/>
<ellipse cx="583.5" cy="371.5" rx="2.8" ry="3.6" fill="#fadf12"/>
<ellipse cx="583.5" cy="371.5" rx="1.3" ry="1.7" fill="#b77b11"/>
<ellipse cx="473.0" cy="372.4" rx="2.1" ry="2.8" fill="#f9e00f"/>
<ellipse cx="473.0" cy="372.4" rx="0.8" ry="1.1" fill="#c38e13"/>
<ellipse cx="460.6" cy="372.9" rx="1.8" ry="2.4" fill="#f4d40c"/>
<ellipse cx="460.6" cy="372.9" rx="0.7" ry="0.9" fill="#c89814"/>
<ellipse cx="737.2" cy="370.8" rx="3.4" ry="4.4" fill="#f8da0c"/>
<ellipse cx="737.2" cy="370.8" rx="1.6" ry="2.0" fill="#ab680e"/>
<ellipse cx="501.9" cy="372.3" rx="2.3" ry="3.0" fill="#fbe10e"/>
<ellipse cx="501.9" cy="372.3" rx="0.9" ry="1.2" fill="#bf8912"/>
<ellipse cx="526.6" cy="372.1" rx="2.5" ry="3.3" fill="#fadf12"/>
<ellipse cx="526.6" cy="372.1" rx="1.0" ry="1.3" fill="#bb8211"/>
<polygon points="663.1,373.4 661.3,373.1 660.9,375.4 659.5,373.9 658.2,375.6 657.6,373.4 655.8,373.9 656.3,371.6 654.6,370.9 655.9,369.3 654.8,367.5 656.6,367.1 656.5,364.8 658.2,365.7 659.1,363.7 660.1,365.6 661.7,364.5 661.7,366.8 663.6,366.9 662.6,368.9 664.1,370.3 662.4,371.3" fill="#f6d40a"/>
<polygon points="661.7,373.9 660.3,373.3 659.5,374.9 658.6,373.5 657.2,374.2 657.1,372.4 655.6,372.1 656.3,370.4 655.1,369.2 656.4,368.3 656.0,366.5 657.5,366.6 657.9,364.8 659.1,365.8 660.3,364.6 660.8,366.3 662.3,366.1 662.0,367.9 663.4,368.7 662.4,370.1 663.2,371.6 661.7,372.1" fill="#fbe620"/>
<ellipse cx="659.3" cy="369.7" rx="2.5" ry="3.1" fill="#eaa80e"/>
<ellipse cx="659.3" cy="369.9" rx="2.0" ry="2.5" fill="#9a520e"/>
<ellipse cx="659.3" cy="370.1" rx="1.0" ry="1.2" fill="#c98418" opacity=".7"/>
<ellipse cx="526.1" cy="372.1" rx="2.6" ry="3.5" fill="#fadf12"/>
<ellipse cx="526.1" cy="372.1" rx="1.2" ry="1.6" fill="#b97f11"/>
<ellipse cx="566.2" cy="371.8" rx="2.9" ry="3.8" fill="#f6d40a"/>
<ellipse cx="566.2" cy="371.8" rx="1.3" ry="1.7" fill="#b57810"/>
<ellipse cx="442.0" cy="373.2" rx="1.8" ry="2.4" fill="#f0d50e"/>
<ellipse cx="442.0" cy="373.2" rx="0.7" ry="0.9" fill="#c89814"/>
<ellipse cx="733.8" cy="371.4" rx="3.3" ry="4.3" fill="#fbe10e"/>
<ellipse cx="733.8" cy="371.4" rx="1.5" ry="2.0" fill="#ad6b0f"/>
<ellipse cx="514.7" cy="372.7" rx="2.3" ry="3.0" fill="#fde81c"/>
<ellipse cx="514.7" cy="372.7" rx="0.9" ry="1.1" fill="#c08a12"/>
<ellipse cx="483.2" cy="373.2" rx="2.0" ry="2.7" fill="#fadf12"/>
<ellipse cx="483.2" cy="373.2" rx="0.8" ry="1.0" fill="#c59213"/>
<ellipse cx="743.5" cy="371.4" rx="3.4" ry="4.5" fill="#f6d40a"/>
<ellipse cx="743.5" cy="371.4" rx="1.6" ry="2.1" fill="#ab670e"/>
<ellipse cx="480.9" cy="372.8" rx="2.3" ry="3.1" fill="#f7d90c"/>
<ellipse cx="480.9" cy="372.8" rx="0.9" ry="1.2" fill="#bf8812"/>
<polygon points="672.9,373.5 670.9,373.2 670.4,375.9 668.9,374.1 667.4,376.0 666.8,373.4 664.7,374.0 665.3,371.3 663.4,370.3 664.9,368.5 663.7,366.3 665.7,365.8 665.6,363.1 667.5,364.2 668.5,361.8 669.6,364.1 671.5,362.8 671.5,365.5 673.5,365.7 672.4,368.1 674.1,369.7 672.2,370.9" fill="#f8da0c"/>
<polygon points="671.4,374.1 669.8,373.4 668.9,375.3 667.9,373.5 666.3,374.4 666.2,372.2 664.5,371.8 665.3,369.8 664.0,368.4 665.5,367.2 665.0,365.1 666.7,365.2 667.2,363.1 668.6,364.4 669.8,362.9 670.5,365.0 672.1,364.7 671.8,366.9 673.3,367.9 672.2,369.5 673.0,371.4 671.4,371.9" fill="#fbe620"/>
<ellipse cx="668.7" cy="369.0" rx="3.1" ry="4.1" fill="#eaa80e"/>
<ellipse cx="668.7" cy="369.2" rx="2.5" ry="3.3" fill="#9a4c0e"/>
<ellipse cx="668.7" cy="369.4" rx="1.2" ry="1.6" fill="#c98418" opacity=".7"/>
<ellipse cx="483.8" cy="373.0" rx="2.2" ry="2.9" fill="#fbe10e"/>
<ellipse cx="483.8" cy="373.0" rx="0.8" ry="1.1" fill="#c18b13"/>
<ellipse cx="454.6" cy="373.1" rx="2.2" ry="2.9" fill="#f5d90e"/>
<ellipse cx="454.6" cy="373.1" rx="0.8" ry="1.1" fill="#c18c13"/>
<ellipse cx="442.4" cy="373.4" rx="2.0" ry="2.6" fill="#f3d40d"/>
<ellipse cx="442.4" cy="373.4" rx="0.7" ry="1.0" fill="#c69314"/>
<ellipse cx="459.3" cy="373.4" rx="2.0" ry="2.7" fill="#f3d70d"/>
<ellipse cx="459.3" cy="373.4" rx="0.8" ry="1.0" fill="#c49113"/>
<polygon points="595.4,371.6 593.7,372.3 594.1,374.6 592.3,374.0 591.7,376.2 590.4,374.5 589.0,375.9 588.7,373.7 586.8,373.9 587.5,371.8 585.9,370.7 587.4,369.4 586.5,367.4 588.3,367.3 588.4,365.0 590.0,366.2 591.1,364.3 591.9,366.3 593.6,365.5 593.4,367.8 595.2,368.2 594.1,370.0" fill="#fbe10e"/>
<polygon points="594.4,372.8 592.9,373.0 592.7,374.9 591.3,374.1 590.4,375.5 589.6,373.9 588.2,374.5 588.2,372.6 586.8,372.1 587.6,370.6 586.6,369.2 588.0,368.4 587.8,366.6 589.2,366.9 589.8,365.2 590.9,366.4 592.2,365.4 592.6,367.2 594.1,367.2 593.6,369.0 594.9,369.9 593.7,371.1" fill="#fbe620"/>
<ellipse cx="590.7" cy="370.3" rx="2.5" ry="3.1" fill="#eaa80e"/>
<ellipse cx="590.7" cy="370.5" rx="2.0" ry="2.5" fill="#a8600e"/>
<ellipse cx="590.7" cy="370.7" rx="1.0" ry="1.2" fill="#c98418" opacity=".7"/>
<ellipse cx="472.7" cy="373.5" rx="2.0" ry="2.7" fill="#fae00e"/>
<ellipse cx="472.7" cy="373.5" rx="0.8" ry="1.0" fill="#c59213"/>
<ellipse cx="444.3" cy="373.8" rx="1.8" ry="2.4" fill="#f8e41c"/>
<ellipse cx="444.3" cy="373.8" rx="0.7" ry="0.9" fill="#c99814"/>
<ellipse cx="479.1" cy="373.5" rx="2.1" ry="2.7" fill="#f8da0c"/>
<ellipse cx="479.1" cy="373.5" rx="0.8" ry="1.0" fill="#c49013"/>
<ellipse cx="584.4" cy="373.0" rx="2.4" ry="3.2" fill="#f6d40a"/>
<ellipse cx="584.4" cy="373.0" rx="0.9" ry="1.2" fill="#bd8412"/>
<ellipse cx="463.4" cy="373.8" rx="1.8" ry="2.4" fill="#f8df0e"/>
<ellipse cx="463.4" cy="373.8" rx="0.7" ry="0.9" fill="#c89814"/>
<ellipse cx="497.5" cy="373.5" rx="2.2" ry="2.9" fill="#f8da0c"/>
<ellipse cx="497.5" cy="373.5" rx="0.8" ry="1.1" fill="#c28d13"/>
<ellipse cx="533.6" cy="373.2" rx="2.4" ry="3.2" fill="#f6d40a"/>
<ellipse cx="533.6" cy="373.2" rx="0.9" ry="1.2" fill="#bd8612"/>
<ellipse cx="448.6" cy="373.9" rx="2.0" ry="2.6" fill="#f9e51c"/>
<ellipse cx="448.6" cy="373.9" rx="0.8" ry="1.0" fill="#c59313"/>
<ellipse cx="515.8" cy="373.9" rx="2.1" ry="2.8" fill="#fadf12"/>
<ellipse cx="515.8" cy="373.9" rx="0.8" ry="1.0" fill="#c38f13"/>
<ellipse cx="532.6" cy="373.4" rx="2.6" ry="3.4" fill="#fde81c"/>
<ellipse cx="532.6" cy="373.4" rx="1.2" ry="1.6" fill="#ba8011"/>
<ellipse cx="512.5" cy="373.6" rx="2.4" ry="3.2" fill="#fadf12"/>
<ellipse cx="512.5" cy="373.6" rx="0.9" ry="1.2" fill="#bd8412"/>
<ellipse cx="726.6" cy="371.8" rx="3.8" ry="5.0" fill="#f8da0c"/>
<ellipse cx="726.6" cy="371.8" rx="1.7" ry="2.3" fill="#a8620e"/>
<ellipse cx="514.6" cy="373.5" rx="2.6" ry="3.4" fill="#f8da0c"/>
<ellipse cx="514.6" cy="373.5" rx="1.2" ry="1.6" fill="#ba8011"/>
<ellipse cx="730.1" cy="372.5" rx="3.4" ry="4.5" fill="#f8da0c"/>
<ellipse cx="730.1" cy="372.5" rx="1.6" ry="2.1" fill="#aa660e"/>
<ellipse cx="465.5" cy="374.4" rx="2.0" ry="2.6" fill="#f6d40a"/>
<ellipse cx="465.5" cy="374.4" rx="0.8" ry="1.0" fill="#c59213"/>
<ellipse cx="458.9" cy="374.6" rx="1.8" ry="2.4" fill="#fce71c"/>
<ellipse cx="458.9" cy="374.6" rx="0.7" ry="0.9" fill="#c89714"/>
<ellipse cx="724.6" cy="371.8" rx="4.0" ry="5.3" fill="#fde81c"/>
<ellipse cx="724.6" cy="371.8" rx="1.8" ry="2.4" fill="#a8620e"/>
<ellipse cx="458.3" cy="374.6" rx="2.0" ry="2.6" fill="#f9de12"/>
<ellipse cx="458.3" cy="374.6" rx="0.8" ry="1.0" fill="#c59213"/>
<ellipse cx="511.5" cy="373.6" rx="2.8" ry="3.7" fill="#fadf12"/>
<ellipse cx="511.5" cy="373.6" rx="1.3" ry="1.7" fill="#b67910"/>
<ellipse cx="505.9" cy="374.1" rx="2.4" ry="3.2" fill="#fde81c"/>
<ellipse cx="505.9" cy="374.1" rx="0.9" ry="1.2" fill="#bd8412"/>
<ellipse cx="741.0" cy="372.6" rx="3.6" ry="4.8" fill="#fadf12"/>
<ellipse cx="741.0" cy="372.6" rx="1.7" ry="2.2" fill="#a8620e"/>
<ellipse cx="497.5" cy="374.6" rx="2.2" ry="2.8" fill="#fde81c"/>
<ellipse cx="497.5" cy="374.6" rx="0.8" ry="1.1" fill="#c28e13"/>
<ellipse cx="456.0" cy="374.6" rx="2.1" ry="2.8" fill="#f7d90c"/>
<ellipse cx="456.0" cy="374.6" rx="0.8" ry="1.1" fill="#c38f13"/>
<ellipse cx="701.7" cy="373.5" rx="3.0" ry="3.9" fill="#fadf12"/>
<ellipse cx="701.7" cy="373.5" rx="1.4" ry="1.8" fill="#b37410"/>
<ellipse cx="440.2" cy="374.9" rx="1.9" ry="2.5" fill="#f9e41c"/>
<ellipse cx="440.2" cy="374.9" rx="0.7" ry="1.0" fill="#c79514"/>
<ellipse cx="478.4" cy="374.7" rx="2.1" ry="2.8" fill="#f8da0c"/>
<ellipse cx="478.4" cy="374.7" rx="0.8" ry="1.1" fill="#c38f13"/>
<ellipse cx="439.5" cy="374.7" rx="2.2" ry="2.9" fill="#f0d10c"/>
<ellipse cx="439.5" cy="374.7" rx="0.8" ry="1.1" fill="#c18c13"/>
<ellipse cx="457.5" cy="374.7" rx="2.2" ry="3.0" fill="#fae00e"/>
<ellipse cx="457.5" cy="374.7" rx="0.9" ry="1.1" fill="#c08b12"/>
<ellipse cx="724.7" cy="372.7" rx="3.9" ry="5.1" fill="#fde81c"/>
<ellipse cx="724.7" cy="372.7" rx="1.8" ry="2.3" fill="#a8620e"/>
<ellipse cx="629.7" cy="373.5" rx="3.3" ry="4.3" fill="#fde81c"/>
<ellipse cx="629.7" cy="373.5" rx="1.5" ry="2.0" fill="#ad6b0f"/>
<ellipse cx="470.0" cy="375.0" rx="2.5" ry="3.3" fill="#f6d40a"/>
<ellipse cx="470.0" cy="375.0" rx="1.0" ry="1.3" fill="#bb8211"/>
<ellipse cx="447.2" cy="376.0" rx="1.8" ry="2.4" fill="#f6d40a"/>
<ellipse cx="447.2" cy="376.0" rx="0.7" ry="0.9" fill="#c99814"/>
<ellipse cx="448.5" cy="375.4" rx="2.4" ry="3.1" fill="#fce71c"/>
<ellipse cx="448.5" cy="375.4" rx="0.9" ry="1.2" fill="#be8712"/>
<ellipse cx="739.3" cy="374.0" rx="3.5" ry="4.7" fill="#f8da0c"/>
<ellipse cx="739.3" cy="374.0" rx="1.6" ry="2.1" fill="#a8630e"/>
<ellipse cx="457.7" cy="375.4" rx="2.5" ry="3.3" fill="#fde81c"/>
<ellipse cx="457.7" cy="375.4" rx="0.9" ry="1.2" fill="#bc8412"/>
<ellipse cx="457.1" cy="375.6" rx="2.3" ry="3.1" fill="#f6d40a"/>
<ellipse cx="457.1" cy="375.6" rx="0.9" ry="1.2" fill="#bf8812"/>
<ellipse cx="728.4" cy="374.2" rx="3.6" ry="4.7" fill="#fde81c"/>
<ellipse cx="728.4" cy="374.2" rx="1.6" ry="2.2" fill="#a8620e"/>
<ellipse cx="747.3" cy="373.8" rx="3.9" ry="5.2" fill="#fbe10e"/>
<ellipse cx="747.3" cy="373.8" rx="1.8" ry="2.4" fill="#a8620e"/>
<ellipse cx="481.9" cy="375.6" rx="2.6" ry="3.4" fill="#f6d40a"/>
<ellipse cx="481.9" cy="375.6" rx="1.2" ry="1.6" fill="#ba8011"/>
<ellipse cx="461.3" cy="376.4" rx="2.1" ry="2.7" fill="#fde81c"/>
<ellipse cx="461.3" cy="376.4" rx="0.8" ry="1.0" fill="#c49113"/>
<polygon points="718.7,374.9 716.4,375.1 716.3,378.3 714.3,376.7 713.0,379.4 711.9,376.6 709.8,377.9 710.0,374.7 707.7,374.1 709.1,371.6 707.4,369.4 709.5,368.3 708.9,365.2 711.2,365.9 711.9,362.8 713.5,365.1 715.3,363.0 715.7,366.2 718.0,365.8 717.2,368.8 719.3,370.2 717.4,372.1" fill="#f8da0c"/>
<polygon points="717.1,376.0 715.2,375.7 714.5,378.1 713.1,376.4 711.6,377.9 711.1,375.4 709.2,375.5 709.7,373.0 708.1,371.7 709.5,370.0 708.7,367.7 710.5,367.3 710.7,364.7 712.4,365.7 713.5,363.7 714.6,365.9 716.3,365.0 716.3,367.7 718.1,368.3 717.1,370.5 718.4,372.4 716.7,373.5" fill="#fbe620"/>
<ellipse cx="713.3" cy="371.0" rx="3.1" ry="4.4" fill="#eaa80e"/>
<ellipse cx="713.3" cy="371.2" rx="2.5" ry="3.5" fill="#a8600e"/>
<ellipse cx="713.3" cy="371.4" rx="1.2" ry="1.7" fill="#c98418" opacity=".7"/>
<ellipse cx="459.6" cy="376.6" rx="2.0" ry="2.6" fill="#fadf12"/>
<ellipse cx="459.6" cy="376.6" rx="0.8" ry="1.0" fill="#c59213"/>
<polygon points="615.6,375.5 613.5,375.7 613.5,378.5 611.6,377.2 610.5,379.5 609.5,377.1 607.6,378.3 607.7,375.5 605.7,375.1 606.9,372.9 605.4,371.0 607.3,370.0 606.7,367.4 608.8,367.9 609.3,365.3 610.8,367.2 612.4,365.4 612.9,368.1 614.9,367.7 614.2,370.3 616.1,371.5 614.4,373.2" fill="#fadf12"/>
<polygon points="614.1,376.6 612.5,376.3 611.9,378.4 610.6,376.9 609.2,378.2 608.7,376.1 607.0,376.2 607.5,374.1 606.0,373.0 607.3,371.5 606.5,369.5 608.1,369.2 608.3,366.9 609.8,367.8 610.9,366.0 611.8,367.9 613.4,367.1 613.4,369.4 615.0,369.9 614.2,371.8 615.3,373.4 613.8,374.4" fill="#fbe620"/>
<ellipse cx="610.7" cy="372.3" rx="2.8" ry="3.7" fill="#eaa80e"/>
<ellipse cx="610.7" cy="372.5" rx="2.2" ry="3.0" fill="#a8600e"/>
<ellipse cx="610.7" cy="372.7" rx="1.1" ry="1.5" fill="#c98418" opacity=".7"/>
<ellipse cx="725.9" cy="375.2" rx="3.1" ry="4.1" fill="#f8da0c"/>
<ellipse cx="725.9" cy="375.2" rx="1.4" ry="1.9" fill="#b06f0f"/>
<ellipse cx="747.3" cy="374.9" rx="3.5" ry="4.6" fill="#f8da0c"/>
<ellipse cx="747.3" cy="374.9" rx="1.6" ry="2.1" fill="#a9630e"/>
<ellipse cx="631.3" cy="375.2" rx="3.3" ry="4.4" fill="#fadf12"/>
<ellipse cx="631.3" cy="375.2" rx="1.5" ry="2.0" fill="#ad6a0f"/>
<ellipse cx="443.7" cy="376.3" rx="2.5" ry="3.2" fill="#f8da0c"/>
<ellipse cx="443.7" cy="376.3" rx="0.9" ry="1.2" fill="#bc8412"/>
<ellipse cx="452.6" cy="377.0" rx="1.9" ry="2.6" fill="#f6d40a"/>
<ellipse cx="452.6" cy="377.0" rx="0.7" ry="1.0" fill="#c69414"/>
<ellipse cx="456.5" cy="376.4" rx="2.5" ry="3.3" fill="#fadf12"/>
<ellipse cx="456.5" cy="376.4" rx="0.9" ry="1.2" fill="#bc8312"/>
<ellipse cx="461.9" cy="377.2" rx="2.0" ry="2.7" fill="#fde81c"/>
<ellipse cx="461.9" cy="377.2" rx="0.8" ry="1.0" fill="#c59213"/>
<ellipse cx="440.6" cy="376.9" rx="2.3" ry="3.0" fill="#fadf12"/>
<ellipse cx="440.6" cy="376.9" rx="0.9" ry="1.2" fill="#bf8912"/>
<ellipse cx="698.8" cy="376.1" rx="3.0" ry="3.9" fill="#fadf12"/>
<ellipse cx="698.8" cy="376.1" rx="1.4" ry="1.8" fill="#b37410"/>
<ellipse cx="451.6" cy="376.9" rx="2.4" ry="3.2" fill="#fadf12"/>
<ellipse cx="451.6" cy="376.9" rx="0.9" ry="1.2" fill="#be8612"/>
<ellipse cx="457.7" cy="377.3" rx="2.1" ry="2.8" fill="#f6d40a"/>
<ellipse cx="457.7" cy="377.3" rx="0.8" ry="1.1" fill="#c38f13"/>
<ellipse cx="703.8" cy="375.5" rx="3.7" ry="4.8" fill="#f8da0c"/>
<ellipse cx="703.8" cy="375.5" rx="1.7" ry="2.2" fill="#a8620e"/>
<ellipse cx="477.8" cy="377.0" rx="2.7" ry="3.5" fill="#f6d40a"/>
<ellipse cx="477.8" cy="377.0" rx="1.2" ry="1.6" fill="#b97e11"/>
<polygon points="645.0,376.4 643.0,376.8 643.1,379.6 641.2,378.5 640.2,380.9 639.1,378.6 637.3,380.0 637.2,377.2 635.2,377.0 636.3,374.6 634.6,373.0 636.5,371.8 635.7,369.2 637.8,369.6 638.2,366.9 639.8,368.6 641.3,366.7 641.9,369.3 643.9,368.7 643.4,371.4 645.3,372.4 643.8,374.2" fill="#fde81c"/>
<polygon points="643.7,377.6 642.0,377.5 641.5,379.6 640.2,378.3 638.9,379.8 638.3,377.7 636.6,378.0 636.9,375.8 635.4,374.9 636.5,373.2 635.6,371.4 637.3,370.8 637.3,368.6 638.9,369.3 639.8,367.4 640.8,369.2 642.4,368.3 642.5,370.5 644.2,370.8 643.4,372.8 644.7,374.3 643.2,375.4" fill="#fbe620"/>
<ellipse cx="640.0" cy="373.7" rx="2.8" ry="3.7" fill="#eaa80e"/>
<ellipse cx="640.0" cy="373.9" rx="2.2" ry="3.0" fill="#a8600e"/>
<ellipse cx="640.0" cy="374.1" rx="1.1" ry="1.5" fill="#c98418" opacity=".7"/>
<ellipse cx="721.4" cy="376.6" rx="3.1" ry="4.1" fill="#fbe10e"/>
<ellipse cx="721.4" cy="376.6" rx="1.4" ry="1.9" fill="#b0700f"/>
<polygon points="626.7,377.9 624.9,377.8 624.7,380.4 623.2,378.9 622.0,380.9 621.3,378.5 619.5,379.3 619.8,376.8 618.1,376.1 619.3,374.3 618.1,372.4 619.9,371.8 619.6,369.3 621.3,370.1 622.0,367.7 623.2,369.7 624.7,368.3 624.9,370.8 626.8,370.8 625.9,373.0 627.5,374.3 625.9,375.6" fill="#f6d40a"/>
<polygon points="625.4,378.7 624.0,378.2 623.3,380.0 622.2,378.5 620.9,379.5 620.7,377.5 619.2,377.4 619.7,375.5 618.5,374.3 619.7,373.1 619.2,371.2 620.7,371.1 621.0,369.1 622.3,370.1 623.3,368.6 624.0,370.4 625.5,370.0 625.3,372.0 626.7,372.7 625.8,374.3 626.7,376.0 625.3,376.6" fill="#fbe620"/>
<ellipse cx="622.7" cy="374.3" rx="2.5" ry="3.4" fill="#eaa80e"/>
<ellipse cx="622.7" cy="374.5" rx="2.0" ry="2.7" fill="#a8600e"/>
<ellipse cx="622.7" cy="374.7" rx="1.0" ry="1.4" fill="#c98418" opacity=".7"/>
<ellipse cx="572.7" cy="375.0" rx="4.1" ry="5.8" fill="#f6d40a"/>
<ellipse cx="572.7" cy="375.0" rx="2.0" ry="2.9" fill="#a8600e"/>
<polygon points="577.0,378.3 575.2,378.2 574.9,380.5 573.4,379.2 572.2,381.0 571.6,378.8 569.8,379.5 570.1,377.2 568.4,376.6 569.6,374.9 568.4,373.2 570.2,372.7 569.9,370.4 571.6,371.1 572.4,369.0 573.5,370.8 575.1,369.5 575.2,371.8 577.1,371.8 576.3,373.9 577.8,375.1 576.2,376.2" fill="#fadf12"/>
<polygon points="575.7,379.0 574.2,378.5 573.5,380.2 572.5,378.8 571.2,379.7 570.9,377.9 569.5,377.8 570.0,376.0 568.8,374.9 570.0,373.9 569.5,372.1 571.0,372.0 571.3,370.2 572.6,371.2 573.6,369.8 574.3,371.5 575.8,371.1 575.6,373.0 577.0,373.6 576.1,375.1 577.0,376.5 575.6,377.1" fill="#fbe620"/>
<ellipse cx="573.0" cy="375.0" rx="2.5" ry="3.1" fill="#eaa80e"/>
<ellipse cx="573.0" cy="375.2" rx="2.0" ry="2.5" fill="#a8600e"/>
<ellipse cx="573.0" cy="375.4" rx="1.0" ry="1.2" fill="#c98418" opacity=".7"/>
<ellipse cx="445.7" cy="377.6" rx="2.5" ry="3.3" fill="#fde81c"/>
<ellipse cx="445.7" cy="377.6" rx="1.0" ry="1.3" fill="#bb8211"/>
<ellipse cx="722.6" cy="375.8" rx="3.9" ry="5.2" fill="#fbe10e"/>
<ellipse cx="722.6" cy="375.8" rx="1.8" ry="2.4" fill="#a8620e"/>
<ellipse cx="478.1" cy="378.1" rx="2.2" ry="2.9" fill="#fbe10e"/>
<ellipse cx="478.1" cy="378.1" rx="0.8" ry="1.1" fill="#c28d13"/>
<ellipse cx="455.6" cy="377.8" rx="2.7" ry="3.6" fill="#f8da0c"/>
<ellipse cx="455.6" cy="377.8" rx="1.2" ry="1.6" fill="#b87c11"/>
<ellipse cx="730.4" cy="376.7" rx="3.6" ry="4.7" fill="#fde81c"/>
<ellipse cx="730.4" cy="376.7" rx="1.7" ry="2.2" fill="#a8620e"/>
<ellipse cx="701.0" cy="376.5" rx="3.7" ry="4.9" fill="#f8da0c"/>
<ellipse cx="701.0" cy="376.5" rx="1.7" ry="2.3" fill="#a8620e"/>
<ellipse cx="697.6" cy="376.7" rx="3.6" ry="4.8" fill="#fde81c"/>
<ellipse cx="697.6" cy="376.7" rx="1.7" ry="2.2" fill="#a8620e"/>
<ellipse cx="743.8" cy="377.3" rx="3.2" ry="4.2" fill="#fde81c"/>
<ellipse cx="743.8" cy="377.3" rx="1.5" ry="1.9" fill="#af6d0f"/>
<ellipse cx="451.5" cy="378.6" rx="2.3" ry="3.0" fill="#fbe10e"/>
<ellipse cx="451.5" cy="378.6" rx="0.9" ry="1.1" fill="#c08a12"/>
<polygon points="687.5,379.6 685.4,379.2 684.9,381.9 683.4,380.1 681.9,382.0 681.3,379.3 679.3,379.8 679.9,377.2 677.9,376.2 679.5,374.4 678.3,372.1 680.4,371.8 680.3,369.0 682.2,370.2 683.2,367.8 684.3,370.1 686.2,368.8 686.1,371.6 688.2,371.9 687.1,374.2 688.7,375.9 686.8,377.0" fill="#fbe10e"/>
<polygon points="685.9,380.2 684.3,379.4 683.4,381.3 682.4,379.5 680.8,380.3 680.7,378.1 679.1,377.7 679.9,375.7 678.6,374.2 680.1,373.2 679.7,371.0 681.4,371.1 681.9,369.0 683.2,370.4 684.5,369.0 685.1,371.1 686.8,370.8 686.4,373.0 687.9,374.0 686.7,375.6 687.6,377.5 686.0,378.0" fill="#fbe620"/>
<ellipse cx="683.3" cy="375.0" rx="2.8" ry="3.7" fill="#eaa80e"/>
<ellipse cx="683.3" cy="375.2" rx="2.2" ry="3.0" fill="#a8600e"/>
<ellipse cx="683.3" cy="375.4" rx="1.1" ry="1.5" fill="#c98418" opacity=".7"/>
<ellipse cx="443.3" cy="379.1" rx="2.2" ry="2.9" fill="#fadf12"/>
<ellipse cx="443.3" cy="379.1" rx="0.8" ry="1.1" fill="#c18b13"/>
<ellipse cx="739.9" cy="376.5" rx="4.3" ry="5.7" fill="#f8da0c"/>
<ellipse cx="739.9" cy="376.5" rx="2.0" ry="2.6" fill="#a8620e"/>
<ellipse cx="738.9" cy="377.6" rx="3.4" ry="4.5" fill="#fadf12"/>
<ellipse cx="738.9" cy="377.6" rx="1.6" ry="2.1" fill="#aa660e"/>
<ellipse cx="702.6" cy="377.9" rx="3.3" ry="4.4" fill="#fde81c"/>
<ellipse cx="702.6" cy="377.9" rx="1.5" ry="2.0" fill="#ac690e"/>
<ellipse cx="725.4" cy="378.2" rx="3.2" ry="4.3" fill="#f6d40a"/>
<ellipse cx="725.4" cy="378.2" rx="1.5" ry="2.0" fill="#ae6c0f"/>
<ellipse cx="478.9" cy="378.9" rx="2.9" ry="3.8" fill="#fde81c"/>
<ellipse cx="478.9" cy="378.9" rx="1.3" ry="1.7" fill="#b57810"/>
<ellipse cx="478.3" cy="379.2" rx="2.7" ry="3.5" fill="#fadf12"/>
<ellipse cx="478.3" cy="379.2" rx="1.2" ry="1.6" fill="#b87d11"/>
<ellipse cx="441.0" cy="379.7" rx="2.3" ry="3.1" fill="#fde81c"/>
<ellipse cx="441.0" cy="379.7" rx="0.9" ry="1.2" fill="#bf8812"/>
<ellipse cx="734.7" cy="378.0" rx="3.7" ry="4.8" fill="#fde81c"/>
<ellipse cx="734.7" cy="378.0" rx="1.7" ry="2.2" fill="#a8620e"/>
<ellipse cx="456.6" cy="379.3" rx="2.7" ry="3.5" fill="#fde81c"/>
<ellipse cx="456.6" cy="379.3" rx="1.2" ry="1.6" fill="#b97e11"/>
<ellipse cx="460.3" cy="380.1" rx="2.2" ry="2.9" fill="#fadf12"/>
<ellipse cx="460.3" cy="380.1" rx="0.8" ry="1.1" fill="#c28c13"/>
<ellipse cx="440.6" cy="380.7" rx="2.2" ry="2.9" fill="#fde81c"/>
<ellipse cx="440.6" cy="380.7" rx="0.8" ry="1.1" fill="#c28d13"/>
<ellipse cx="479.7" cy="380.5" rx="2.4" ry="3.2" fill="#f6d40a"/>
<ellipse cx="479.7" cy="380.5" rx="0.9" ry="1.2" fill="#be8612"/>
<ellipse cx="447.8" cy="380.3" rx="2.6" ry="3.4" fill="#fbe10e"/>
<ellipse cx="447.8" cy="380.3" rx="1.2" ry="1.6" fill="#bb8111"/>
<ellipse cx="744.2" cy="378.4" rx="4.0" ry="5.2" fill="#f8da0c"/>
<ellipse cx="744.2" cy="378.4" rx="1.8" ry="2.4" fill="#a8620e"/>
<ellipse cx="483.3" cy="379.9" rx="2.9" ry="3.8" fill="#fde81c"/>
<ellipse cx="483.3" cy="379.9" rx="1.3" ry="1.7" fill="#b47710"/>
<ellipse cx="463.9" cy="380.4" rx="2.6" ry="3.4" fill="#f8da0c"/>
<ellipse cx="463.9" cy="380.4" rx="1.2" ry="1.6" fill="#ba7f11"/>
<ellipse cx="450.5" cy="380.6" rx="2.7" ry="3.6" fill="#f8da0c"/>
<ellipse cx="450.5" cy="380.6" rx="1.2" ry="1.6" fill="#b87c11"/>
<ellipse cx="729.5" cy="379.6" rx="3.8" ry="5.0" fill="#fadf12"/>
<ellipse cx="729.5" cy="379.6" rx="1.7" ry="2.3" fill="#a8620e"/>
<polygon points="564.7,378.7 562.8,379.8 563.4,382.4 561.4,382.0 560.8,384.6 559.3,382.8 557.8,384.6 557.3,382.0 555.2,382.4 555.8,379.8 553.9,378.7 555.5,377.0 554.4,374.7 556.4,374.4 556.4,371.6 558.2,372.8 559.3,370.5 560.4,372.8 562.2,371.6 562.2,374.4 564.2,374.7 563.1,377.0" fill="#f6d40a"/>
<polygon points="563.6,380.3 561.9,380.7 561.8,383.0 560.3,382.1 559.3,384.0 558.3,382.1 556.8,383.0 556.7,380.7 555.0,380.3 555.9,378.4 554.6,376.8 556.1,375.8 555.7,373.6 557.4,373.8 558.0,371.7 559.3,373.1 560.6,371.7 561.2,373.8 562.8,373.6 562.5,375.8 563.9,376.8 562.7,378.4" fill="#fbe620"/>
<ellipse cx="559.3" cy="377.7" rx="2.8" ry="3.7" fill="#eaa80e"/>
<ellipse cx="559.3" cy="377.9" rx="2.2" ry="3.0" fill="#a8600e"/>
<ellipse cx="559.3" cy="378.1" rx="1.1" ry="1.5" fill="#c98418" opacity=".7"/>
<ellipse cx="482.8" cy="380.9" rx="2.9" ry="3.8" fill="#f6d40a"/>
<ellipse cx="482.8" cy="380.9" rx="1.3" ry="1.7" fill="#b57710"/>
<ellipse cx="739.4" cy="380.0" rx="3.6" ry="4.7" fill="#fde81c"/>
<ellipse cx="739.4" cy="380.0" rx="1.7" ry="2.2" fill="#a8620e"/>
<polygon points="599.8,381.2 598.0,381.6 598.1,383.9 596.4,383.0 595.5,385.0 594.5,383.1 592.9,384.2 592.9,381.9 591.0,381.8 592.0,379.8 590.5,378.4 592.2,377.4 591.5,375.3 593.3,375.6 593.7,373.3 595.1,374.8 596.4,373.1 597.0,375.3 598.8,374.8 598.3,377.1 600.0,377.9 598.7,379.4" fill="#fadf12"/>
<polygon points="598.6,382.2 597.1,382.1 596.7,383.9 595.4,382.9 594.3,384.1 593.8,382.3 592.3,382.6 592.6,380.8 591.2,380.0 592.2,378.6 591.4,377.1 592.9,376.6 592.9,374.7 594.3,375.3 595.1,373.8 596.0,375.2 597.4,374.5 597.5,376.3 599.0,376.6 598.3,378.3 599.5,379.5 598.2,380.4" fill="#fbe620"/>
<ellipse cx="595.3" cy="379.0" rx="2.5" ry="3.1" fill="#eaa80e"/>
<ellipse cx="595.3" cy="379.2" rx="2.0" ry="2.5" fill="#a8600e"/>
<ellipse cx="595.3" cy="379.4" rx="1.0" ry="1.2" fill="#c98418" opacity=".7"/>
<ellipse cx="741.8" cy="380.5" rx="3.4" ry="4.5" fill="#f8da0c"/>
<ellipse cx="741.8" cy="380.5" rx="1.6" ry="2.1" fill="#ab670e"/>
<ellipse cx="458.8" cy="381.8" rx="2.5" ry="3.3" fill="#fde81c"/>
<ellipse cx="458.8" cy="381.8" rx="0.9" ry="1.2" fill="#bc8412"/>
<ellipse cx="442.7" cy="381.3" rx="2.9" ry="3.9" fill="#fbe10e"/>
<ellipse cx="442.7" cy="381.3" rx="1.4" ry="1.8" fill="#b37510"/>
<ellipse cx="704.2" cy="380.6" rx="3.6" ry="4.8" fill="#f8da0c"/>
<ellipse cx="704.2" cy="380.6" rx="1.7" ry="2.2" fill="#a8620e"/>
<ellipse cx="742.0" cy="380.7" rx="3.5" ry="4.6" fill="#f6d40a"/>
<ellipse cx="742.0" cy="380.7" rx="1.6" ry="2.1" fill="#a9640e"/>
<ellipse cx="735.8" cy="379.9" rx="4.3" ry="5.6" fill="#fadf12"/>
<ellipse cx="735.8" cy="379.9" rx="2.0" ry="2.6" fill="#a8620e"/>
<ellipse cx="728.5" cy="380.7" rx="3.8" ry="5.0" fill="#f6d40a"/>
<ellipse cx="728.5" cy="380.7" rx="1.7" ry="2.3" fill="#a8620e"/>
<ellipse cx="723.2" cy="380.9" rx="3.7" ry="4.9" fill="#f8da0c"/>
<ellipse cx="723.2" cy="380.9" rx="1.7" ry="2.2" fill="#a8620e"/>
<ellipse cx="744.7" cy="380.5" rx="4.2" ry="5.5" fill="#f6d40a"/>
<ellipse cx="744.7" cy="380.5" rx="1.9" ry="2.5" fill="#a8620e"/>
<ellipse cx="460.2" cy="382.9" rx="2.7" ry="3.5" fill="#fde81c"/>
<ellipse cx="460.2" cy="382.9" rx="1.2" ry="1.6" fill="#b97e11"/>
<ellipse cx="462.1" cy="383.2" rx="2.5" ry="3.3" fill="#fde81c"/>
<ellipse cx="462.1" cy="383.2" rx="0.9" ry="1.2" fill="#bc8312"/>
<ellipse cx="463.2" cy="383.2" rx="2.5" ry="3.3" fill="#fbe10e"/>
<ellipse cx="463.2" cy="383.2" rx="1.0" ry="1.3" fill="#bb8211"/>
<ellipse cx="451.2" cy="383.1" rx="2.6" ry="3.5" fill="#f8da0c"/>
<ellipse cx="451.2" cy="383.1" rx="1.2" ry="1.6" fill="#b97f11"/>
<ellipse cx="476.9" cy="383.3" rx="2.5" ry="3.3" fill="#fde81c"/>
<ellipse cx="476.9" cy="383.3" rx="0.9" ry="1.2" fill="#bc8312"/>
<ellipse cx="696.2" cy="381.3" rx="4.1" ry="5.4" fill="#f8da0c"/>
<ellipse cx="696.2" cy="381.3" rx="1.9" ry="2.5" fill="#a8620e"/>
<ellipse cx="624.7" cy="382.6" rx="3.2" ry="4.3" fill="#fde81c"/>
<ellipse cx="624.7" cy="382.6" rx="1.5" ry="2.0" fill="#ae6c0f"/>
<ellipse cx="740.1" cy="381.8" rx="3.9" ry="5.1" fill="#fde81c"/>
<ellipse cx="740.1" cy="381.8" rx="1.8" ry="2.4" fill="#a8620e"/>
<ellipse cx="742.5" cy="381.6" rx="4.1" ry="5.4" fill="#fde81c"/>
<ellipse cx="742.5" cy="381.6" rx="1.9" ry="2.5" fill="#a8620e"/>
<ellipse cx="449.7" cy="383.8" rx="2.4" ry="3.2" fill="#f6d40a"/>
<ellipse cx="449.7" cy="383.8" rx="0.9" ry="1.2" fill="#bd8512"/>
<ellipse cx="481.7" cy="383.2" rx="3.0" ry="4.0" fill="#f6d40a"/>
<ellipse cx="481.7" cy="383.2" rx="1.4" ry="1.8" fill="#b27310"/>
<ellipse cx="662.7" cy="380.3" rx="4.1" ry="7.0" fill="#fde81c"/>
<ellipse cx="662.7" cy="380.3" rx="2.0" ry="3.5" fill="#b88a10"/>
<ellipse cx="670.3" cy="382.6" rx="3.7" ry="4.8" fill="#f6d40a"/>
<ellipse cx="670.3" cy="382.6" rx="1.7" ry="2.2" fill="#a8620e"/>
<ellipse cx="447.5" cy="383.7" rx="2.9" ry="3.8" fill="#fadf12"/>
<ellipse cx="447.5" cy="383.7" rx="1.3" ry="1.7" fill="#b57710"/>
<ellipse cx="729.3" cy="382.8" rx="3.7" ry="4.9" fill="#f6d40a"/>
<ellipse cx="729.3" cy="382.8" rx="1.7" ry="2.3" fill="#a8620e"/>
<ellipse cx="651.3" cy="381.0" rx="3.5" ry="7.0" fill="#fbe10e"/>
<ellipse cx="651.3" cy="381.0" rx="1.7" ry="3.5" fill="#a8600e"/>
<polygon points="474.8,385.4 473.0,385.4 472.8,387.7 471.3,386.5 470.2,388.3 469.4,386.2 467.6,387.0 467.9,384.7 466.1,384.2 467.3,382.4 466.0,380.8 467.8,380.1 467.4,377.9 469.2,378.5 469.9,376.4 471.1,378.1 472.6,376.7 472.8,379.0 474.7,378.9 473.9,381.0 475.5,382.1 474.0,383.4" fill="#fadf12"/>
<polygon points="473.5,386.1 472.1,385.8 471.4,387.4 470.4,386.1 469.1,387.1 468.7,385.3 467.3,385.3 467.8,383.5 466.5,382.5 467.7,381.3 467.1,379.6 468.6,379.5 468.9,377.6 470.2,378.5 471.2,377.1 471.9,378.7 473.3,378.3 473.2,380.1 474.7,380.7 473.8,382.2 474.7,383.6 473.3,384.3" fill="#fbe620"/>
<ellipse cx="470.7" cy="382.3" rx="2.5" ry="3.1" fill="#eaa80e"/>
<ellipse cx="470.7" cy="382.5" rx="2.0" ry="2.5" fill="#a8600e"/>
<ellipse cx="470.7" cy="382.7" rx="1.0" ry="1.2" fill="#c98418" opacity=".7"/>
<polygon points="473.2,386.4 471.1,386.0 470.6,388.3 469.1,386.7 467.6,388.3 467.0,386.1 465.0,386.5 465.6,384.3 463.6,383.5 465.2,382.0 464.0,380.1 466.1,379.8 466.0,377.5 467.9,378.5 468.9,376.5 470.0,378.4 471.8,377.4 471.8,379.7 473.9,379.9 472.8,381.8 474.4,383.2 472.5,384.2" fill="#fadf12"/>
<polygon points="471.6,386.8 470.0,386.2 469.1,387.7 468.1,386.2 466.5,386.9 466.4,385.1 464.8,384.8 465.6,383.1 464.3,381.9 465.8,381.0 465.4,379.2 467.1,379.3 467.6,377.5 468.9,378.6 470.2,377.5 470.8,379.2 472.5,379.0 472.1,380.8 473.6,381.7 472.4,383.0 473.3,384.6 471.7,385.0" fill="#fbe620"/>
<ellipse cx="469.0" cy="382.5" rx="2.8" ry="3.1" fill="#eaa80e"/>
<ellipse cx="469.0" cy="382.7" rx="2.2" ry="2.5" fill="#a8600e"/>
<ellipse cx="469.0" cy="382.9" rx="1.1" ry="1.2" fill="#c98418" opacity=".7"/>
<ellipse cx="445.8" cy="385.0" rx="2.6" ry="3.4" fill="#fbe10e"/>
<ellipse cx="445.8" cy="385.0" rx="1.2" ry="1.6" fill="#ba8111"/>
<ellipse cx="453.1" cy="384.4" rx="3.1" ry="4.1" fill="#fbe10e"/>
<ellipse cx="453.1" cy="384.4" rx="1.4" ry="1.9" fill="#b0700f"/>
<polygon points="494.8,386.8 492.6,385.9 491.7,388.7 490.2,386.5 488.4,388.2 488.0,385.3 485.7,385.4 486.7,382.7 484.7,381.2 486.6,379.6 485.5,377.0 487.8,377.0 488.0,374.0 490.0,375.6 491.4,373.2 492.3,375.9 494.5,374.9 494.2,377.9 496.4,378.6 494.9,380.8 496.5,383.0 494.3,383.8" fill="#f8da0c"/>
<polygon points="493.0,387.1 491.4,385.9 490.1,387.7 489.2,385.6 487.4,386.3 487.5,383.8 485.7,383.1 486.8,381.2 485.6,379.3 487.4,378.4 487.2,376.0 489.0,376.5 489.8,374.3 491.1,376.0 492.7,374.7 493.1,377.1 495.0,377.2 494.4,379.4 495.9,380.8 494.4,382.3 495.2,384.5 493.3,384.7" fill="#fbe620"/>
<ellipse cx="490.7" cy="381.0" rx="3.1" ry="4.1" fill="#eaa80e"/>
<ellipse cx="490.7" cy="381.2" rx="2.5" ry="3.2" fill="#a8600e"/>
<ellipse cx="490.7" cy="381.4" rx="1.2" ry="1.6" fill="#c98418" opacity=".7"/>
<ellipse cx="443.2" cy="385.0" rx="2.8" ry="3.6" fill="#fbe10e"/>
<ellipse cx="443.2" cy="385.0" rx="1.3" ry="1.7" fill="#b77a11"/>
<ellipse cx="670.3" cy="383.7" rx="4.0" ry="5.3" fill="#f6d40a"/>
<ellipse cx="670.3" cy="383.7" rx="1.8" ry="2.4" fill="#a8620e"/>
<ellipse cx="747.2" cy="383.4" rx="4.3" ry="5.7" fill="#f8da0c"/>
<ellipse cx="747.2" cy="383.4" rx="2.0" ry="2.6" fill="#a8620e"/>
<ellipse cx="448.3" cy="385.6" rx="2.6" ry="3.4" fill="#fde81c"/>
<ellipse cx="448.3" cy="385.6" rx="1.2" ry="1.6" fill="#ba8011"/>
<polygon points="524.7,383.8 523.0,384.7 523.4,387.4 521.6,386.7 521.0,389.4 519.8,387.4 518.3,389.1 518.0,386.4 516.1,386.7 516.8,384.1 515.2,382.8 516.7,381.2 515.8,378.8 517.6,378.7 517.7,376.0 519.3,377.4 520.3,375.1 521.2,377.5 522.9,376.5 522.7,379.3 524.5,379.8 523.4,381.9" fill="#f6d40a"/>
<polygon points="523.7,385.3 522.2,385.6 522.0,387.8 520.7,386.8 519.7,388.5 518.9,386.6 517.5,387.3 517.5,385.1 516.1,384.5 516.9,382.6 515.9,381.0 517.3,380.1 517.0,377.9 518.5,378.2 519.1,376.2 520.2,377.7 521.5,376.4 521.8,378.6 523.3,378.5 522.9,380.7 524.2,381.8 523.0,383.3" fill="#fbe620"/>
<ellipse cx="567.5" cy="383.5" rx="4.1" ry="5.8" fill="#fbe10e"/>
<ellipse cx="567.5" cy="383.5" rx="2.0" ry="2.9" fill="#a8600e"/>
<ellipse cx="670.3" cy="383.8" rx="4.2" ry="5.6" fill="#f8da0c"/>
<ellipse cx="670.3" cy="383.8" rx="1.9" ry="2.6" fill="#a8620e"/>
<ellipse cx="692.3" cy="384.5" rx="3.7" ry="4.9" fill="#fadf12"/>
<ellipse cx="692.3" cy="384.5" rx="1.7" ry="2.3" fill="#a8620e"/>
<polygon points="574.0,388.1 572.2,387.5 571.6,389.6 570.3,387.9 568.9,389.3 568.6,387.0 566.7,387.1 567.5,385.0 565.9,383.9 567.4,382.7 566.5,380.6 568.4,380.6 568.5,378.3 570.1,379.5 571.2,377.7 572.0,379.8 573.7,379.0 573.5,381.3 575.3,381.8 574.1,383.5 575.4,385.2 573.6,385.8" fill="#f6d40a"/>
<polygon points="572.6,388.4 571.3,387.5 570.3,388.9 569.5,387.3 568.1,387.8 568.2,385.9 566.7,385.4 567.6,383.8 566.7,382.4 568.0,381.7 567.8,379.9 569.3,380.2 570.0,378.6 571.0,379.9 572.3,378.9 572.6,380.7 574.1,380.7 573.6,382.5 574.9,383.5 573.7,384.6 574.3,386.4 572.8,386.5" fill="#fbe620"/>
<ellipse cx="570.7" cy="383.7" rx="2.5" ry="3.1" fill="#eaa80e"/>
<ellipse cx="570.7" cy="383.9" rx="2.0" ry="2.5" fill="#a8600e"/>
<ellipse cx="570.7" cy="384.1" rx="1.0" ry="1.2" fill="#c98418" opacity=".7"/>
<ellipse cx="458.7" cy="385.8" rx="2.9" ry="3.8" fill="#f8da0c"/>
<ellipse cx="458.7" cy="385.8" rx="1.3" ry="1.8" fill="#b47610"/>
<ellipse cx="513.1" cy="385.6" rx="3.1" ry="4.1" fill="#f6d40a"/>
<ellipse cx="513.1" cy="385.6" rx="1.4" ry="1.9" fill="#b1700f"/>
<ellipse cx="445.1" cy="385.8" rx="3.3" ry="4.3" fill="#f6d40a"/>
<ellipse cx="445.1" cy="385.8" rx="1.5" ry="2.0" fill="#ad6b0f"/>
<polygon points="548.9,388.4 546.6,387.6 545.8,390.6 544.3,388.2 542.5,390.1 542.1,386.9 539.8,387.2 540.7,384.2 538.7,382.7 540.6,380.9 539.5,378.1 541.8,378.0 541.9,374.8 543.9,376.5 545.3,373.9 546.3,376.8 548.4,375.7 548.1,378.9 550.4,379.5 548.9,382.0 550.6,384.3 548.4,385.3" fill="#fadf12"/>
<polygon points="547.1,388.8 545.4,387.6 544.2,389.6 543.3,387.3 541.5,388.0 541.6,385.4 539.8,384.7 540.8,382.6 539.6,380.6 541.4,379.6 541.1,377.0 542.9,377.5 543.7,375.1 545.1,376.9 546.6,375.5 547.1,378.1 549.0,378.1 548.4,380.5 549.9,382.0 548.5,383.6 549.2,386.0 547.4,386.2" fill="#fbe620"/>
<ellipse cx="544.7" cy="382.3" rx="3.1" ry="4.4" fill="#eaa80e"/>
<ellipse cx="544.7" cy="382.5" rx="2.5" ry="3.5" fill="#a8600e"/>
<ellipse cx="544.7" cy="382.7" rx="1.2" ry="1.7" fill="#c98418" opacity=".7"/>
<ellipse cx="556.2" cy="386.5" rx="3.2" ry="4.2" fill="#f6d40a"/>
<ellipse cx="556.2" cy="386.5" rx="1.5" ry="1.9" fill="#af6e0f"/>
<ellipse cx="448.8" cy="387.2" rx="2.7" ry="3.6" fill="#fbe10e"/>
<ellipse cx="448.8" cy="387.2" rx="1.2" ry="1.6" fill="#b87c11"/>
<ellipse cx="450.6" cy="387.4" rx="2.7" ry="3.5" fill="#fde81c"/>
<ellipse cx="450.6" cy="387.4" rx="1.2" ry="1.6" fill="#b87d11"/>
<ellipse cx="737.2" cy="386.0" rx="3.9" ry="5.1" fill="#fbe10e"/>
<ellipse cx="737.2" cy="386.0" rx="1.8" ry="2.3" fill="#a8620e"/>
<ellipse cx="726.9" cy="385.7" rx="4.1" ry="5.4" fill="#fde81c"/>
<ellipse cx="726.9" cy="385.7" rx="1.9" ry="2.5" fill="#a8620e"/>
<ellipse cx="439.6" cy="387.0" rx="3.1" ry="4.1" fill="#f6d40a"/>
<ellipse cx="439.6" cy="387.0" rx="1.4" ry="1.9" fill="#b06f0f"/>
<ellipse cx="727.5" cy="385.9" rx="4.2" ry="5.5" fill="#fde81c"/>
<ellipse cx="727.5" cy="385.9" rx="1.9" ry="2.5" fill="#a8620e"/>
<ellipse cx="454.8" cy="386.6" rx="3.6" ry="4.8" fill="#fbe10e"/>
<ellipse cx="454.8" cy="386.6" rx="1.7" ry="2.2" fill="#a8620e"/>
<ellipse cx="449.3" cy="387.7" rx="2.8" ry="3.7" fill="#fadf12"/>
<ellipse cx="449.3" cy="387.7" rx="1.3" ry="1.7" fill="#b67910"/>
<ellipse cx="615.9" cy="387.0" rx="3.5" ry="4.6" fill="#fadf12"/>
<ellipse cx="615.9" cy="387.0" rx="1.6" ry="2.1" fill="#a9640e"/>
<ellipse cx="698.7" cy="386.7" rx="4.0" ry="5.3" fill="#fadf12"/>
<ellipse cx="698.7" cy="386.7" rx="1.8" ry="2.4" fill="#a8620e"/>
<ellipse cx="442.5" cy="387.8" rx="3.1" ry="4.1" fill="#fbe10e"/>
<ellipse cx="442.5" cy="387.8" rx="1.4" ry="1.9" fill="#b06f0f"/>
<ellipse cx="456.5" cy="388.7" rx="2.7" ry="3.6" fill="#fbe10e"/>
<ellipse cx="456.5" cy="388.7" rx="1.2" ry="1.6" fill="#b87c11"/>
<ellipse cx="700.0" cy="387.8" rx="3.7" ry="4.9" fill="#fadf12"/>
<ellipse cx="700.0" cy="387.8" rx="1.7" ry="2.2" fill="#a8620e"/>
<ellipse cx="440.7" cy="388.5" rx="3.3" ry="4.4" fill="#fbe10e"/>
<ellipse cx="440.7" cy="388.5" rx="1.5" ry="2.0" fill="#ac690e"/>
<ellipse cx="738.3" cy="388.1" rx="3.9" ry="5.2" fill="#fde81c"/>
<ellipse cx="738.3" cy="388.1" rx="1.8" ry="2.4" fill="#a8620e"/>
<ellipse cx="438.8" cy="389.7" rx="2.8" ry="3.6" fill="#fadf12"/>
<ellipse cx="438.8" cy="389.7" rx="1.3" ry="1.7" fill="#b77b11"/>
<polygon points="575.6,391.3 573.8,390.8 573.3,393.5 572.0,391.6 570.6,393.4 570.2,390.8 568.3,391.2 568.9,388.6 567.2,387.5 568.7,385.8 567.6,383.5 569.5,383.2 569.4,380.4 571.1,381.6 572.0,379.3 573.0,381.6 574.6,380.4 574.6,383.2 576.4,383.5 575.3,385.8 576.8,387.6 575.1,388.6" fill="#fde81c"/>
<polygon points="574.2,391.8 572.9,391.0 572.0,392.8 571.1,390.9 569.7,391.8 569.7,389.5 568.2,389.1 568.9,387.1 567.9,385.6 569.2,384.6 568.9,382.4 570.3,382.6 570.8,380.5 572.0,381.9 573.2,380.5 573.7,382.6 575.2,382.4 574.8,384.6 576.1,385.6 575.1,387.2 575.8,389.1 574.3,389.5" fill="#fbe620"/>
<ellipse cx="572.0" cy="386.5" rx="2.5" ry="3.7" fill="#eaa80e"/>
<ellipse cx="572.0" cy="386.7" rx="2.0" ry="3.0" fill="#a8600e"/>
<ellipse cx="572.0" cy="386.9" rx="1.0" ry="1.5" fill="#c98418" opacity=".7"/>
<ellipse cx="558.1" cy="387.8" rx="4.3" ry="5.7" fill="#fde81c"/>
<ellipse cx="558.1" cy="387.8" rx="2.0" ry="2.6" fill="#a8620e"/>
<ellipse cx="494.7" cy="390.3" rx="3.5" ry="3.5" fill="#f6d40a"/>
<ellipse cx="494.7" cy="390.3" rx="2.8" ry="2.8" fill="#a0600e"/>
<ellipse cx="458.3" cy="389.8" rx="3.1" ry="4.0" fill="#fadf12"/>
<ellipse cx="458.3" cy="389.8" rx="1.4" ry="1.9" fill="#b1710f"/>
<ellipse cx="447.4" cy="390.0" rx="3.0" ry="4.0" fill="#f6d40a"/>
<ellipse cx="447.4" cy="390.0" rx="1.4" ry="1.8" fill="#b1720f"/>
<polygon points="610.8,388.2 609.2,389.3 609.9,391.7 608.0,391.4 607.7,393.9 606.3,392.3 605.0,394.2 604.4,391.8 602.6,392.4 603.0,389.9 601.3,389.1 602.6,387.4 601.5,385.4 603.3,384.9 603.1,382.4 604.8,383.4 605.6,381.1 606.7,383.2 608.3,381.9 608.4,384.4 610.2,384.5 609.3,386.7" fill="#fbe10e"/>
<polygon points="609.9,389.7 608.5,390.2 608.5,392.3 607.1,391.7 606.3,393.4 605.4,391.9 604.0,392.7 603.8,390.7 602.3,390.5 603.0,388.6 601.8,387.3 603.1,386.2 602.7,384.3 604.1,384.3 604.5,382.3 605.8,383.5 606.9,382.1 607.5,384.0 608.9,383.6 608.7,385.7 610.1,386.5 609.1,388.0" fill="#fbe620"/>
<ellipse cx="606.0" cy="387.7" rx="2.5" ry="3.4" fill="#eaa80e"/>
<ellipse cx="606.0" cy="387.9" rx="2.0" ry="2.7" fill="#a8600e"/>
<ellipse cx="606.0" cy="388.1" rx="1.0" ry="1.4" fill="#c98418" opacity=".7"/>
<ellipse cx="448.2" cy="389.5" rx="3.6" ry="4.8" fill="#f8da0c"/>
<ellipse cx="448.2" cy="389.5" rx="1.7" ry="2.2" fill="#a8620e"/>
<ellipse cx="450.2" cy="390.1" rx="3.4" ry="4.5" fill="#fbe10e"/>
<ellipse cx="450.2" cy="390.1" rx="1.6" ry="2.0" fill="#ab670e"/>
<ellipse cx="729.0" cy="389.3" rx="4.0" ry="5.3" fill="#fadf12"/>
<ellipse cx="729.0" cy="389.3" rx="1.8" ry="2.4" fill="#a8620e"/>
<ellipse cx="451.2" cy="389.7" rx="3.7" ry="4.9" fill="#f6d40a"/>
<ellipse cx="451.2" cy="389.7" rx="1.7" ry="2.3" fill="#a8620e"/>
<ellipse cx="645.1" cy="389.8" rx="3.7" ry="4.8" fill="#f8da0c"/>
<ellipse cx="645.1" cy="389.8" rx="1.7" ry="2.2" fill="#a8620e"/>
<ellipse cx="442.6" cy="390.7" rx="3.0" ry="3.9" fill="#fbe10e"/>
<ellipse cx="442.6" cy="390.7" rx="1.4" ry="1.8" fill="#b27410"/>
<ellipse cx="731.5" cy="389.5" rx="4.2" ry="5.6" fill="#f8da0c"/>
<ellipse cx="731.5" cy="389.5" rx="1.9" ry="2.6" fill="#a8620e"/>
<ellipse cx="636.0" cy="388.3" rx="4.1" ry="7.0" fill="#f8da0c"/>
<ellipse cx="636.0" cy="388.3" rx="2.0" ry="3.5" fill="#b0700e"/>
<polygon points="590.8,390.1 587.8,389.9 588.5,393.5 585.9,391.8 585.4,395.5 583.5,392.6 581.8,395.7 581.1,392.1 578.6,394.0 579.1,390.3 576.1,390.8 577.7,387.6 574.9,386.5 577.4,384.5 575.2,382.0 578.1,381.4 576.8,378.0 579.7,379.0 579.6,375.2 581.9,377.6 583.0,374.1 584.3,377.5 586.5,374.9 586.6,378.7 589.4,377.4 588.3,381.0 591.2,381.3 589.2,383.9 591.7,385.7 589.0,387.1" fill="#f8da0c"/>
<polygon points="588.9,391.0 586.6,390.5 586.5,393.4 584.6,391.7 583.6,394.4 582.4,391.8 580.6,393.7 580.3,390.8 578.0,391.5 578.7,388.7 576.4,388.2 577.9,386.0 576.0,384.4 578.1,383.1 576.8,380.6 579.2,380.5 578.8,377.6 580.9,378.8 581.5,375.9 583.1,378.1 584.6,375.7 585.3,378.5 587.4,377.2 587.2,380.2 589.5,380.0 588.4,382.6 590.5,383.7 588.7,385.5 590.3,387.6 588.1,388.3" fill="#fbe620"/>
<ellipse cx="583.3" cy="385.0" rx="4.4" ry="5.6" fill="#eaa80e"/>
<ellipse cx="583.3" cy="385.2" rx="3.5" ry="4.5" fill="#a8600e"/>
<ellipse cx="583.3" cy="385.4" rx="1.7" ry="2.2" fill="#c98418" opacity=".7"/>
<ellipse cx="736.4" cy="390.3" rx="3.9" ry="5.2" fill="#fde81c"/>
<ellipse cx="736.4" cy="390.3" rx="1.8" ry="2.4" fill="#a8620e"/>
<ellipse cx="439.7" cy="391.3" rx="3.3" ry="4.4" fill="#f6d40a"/>
<ellipse cx="439.7" cy="391.3" rx="1.5" ry="2.0" fill="#ac690e"/>
<ellipse cx="724.9" cy="390.6" rx="3.9" ry="5.1" fill="#fde81c"/>
<ellipse cx="724.9" cy="390.6" rx="1.8" ry="2.3" fill="#a8620e"/>
<ellipse cx="459.8" cy="391.6" rx="3.2" ry="4.2" fill="#fde81c"/>
<ellipse cx="459.8" cy="391.6" rx="1.5" ry="1.9" fill="#ae6d0f"/>
<ellipse cx="656.7" cy="390.0" rx="3.5" ry="5.8" fill="#f8da0c"/>
<ellipse cx="656.7" cy="390.0" rx="1.7" ry="2.9" fill="#a8600e"/>
<ellipse cx="665.9" cy="390.3" rx="4.2" ry="5.5" fill="#fadf12"/>
<ellipse cx="665.9" cy="390.3" rx="1.9" ry="2.5" fill="#a8620e"/>
<ellipse cx="671.8" cy="390.5" rx="4.2" ry="5.5" fill="#fadf12"/>
<ellipse cx="671.8" cy="390.5" rx="1.9" ry="2.5" fill="#a8620e"/>
<ellipse cx="740.4" cy="390.7" rx="4.0" ry="5.3" fill="#f8da0c"/>
<ellipse cx="740.4" cy="390.7" rx="1.8" ry="2.4" fill="#a8620e"/>
<ellipse cx="455.1" cy="392.3" rx="2.9" ry="3.9" fill="#f6d40a"/>
<ellipse cx="455.1" cy="392.3" rx="1.3" ry="1.8" fill="#b47610"/>
<polygon points="511.1,390.3 508.4,390.3 509.2,393.9 506.7,392.3 506.3,396.1 504.5,393.3 503.1,396.5 502.2,392.9 500.0,395.0 500.3,391.3 497.6,392.0 499.0,388.7 496.3,387.8 498.5,385.6 496.4,383.3 499.0,382.5 497.7,379.2 500.4,380.0 500.2,376.2 502.4,378.4 503.3,374.9 504.6,378.2 506.5,375.4 506.8,379.2 509.3,377.7 508.5,381.3 511.2,381.4 509.4,384.2 511.8,385.9 509.4,387.4" fill="#fde81c"/>
<polygon points="509.4,391.3 507.3,390.9 507.3,393.9 505.5,392.3 504.6,395.1 503.4,392.6 501.8,394.6 501.4,391.7 499.4,392.6 499.9,389.7 497.8,389.4 499.1,387.1 497.2,385.6 499.1,384.2 497.8,381.8 500.0,381.5 499.5,378.6 501.6,379.6 502.0,376.7 503.5,378.8 504.8,376.4 505.6,379.1 507.5,377.6 507.4,380.6 509.5,380.3 508.6,383.0 510.7,383.9 509.0,385.8 510.6,387.8 508.6,388.6" fill="#fbe620"/>
<ellipse cx="504.0" cy="385.7" rx="4.1" ry="5.6" fill="#eaa80e"/>
<ellipse cx="504.0" cy="385.9" rx="3.2" ry="4.5" fill="#a8600e"/>
<ellipse cx="504.0" cy="386.1" rx="1.6" ry="2.2" fill="#c98418" opacity=".7"/>
<ellipse cx="442.1" cy="391.9" rx="3.4" ry="4.5" fill="#fadf12"/>
<ellipse cx="442.1" cy="391.9" rx="1.6" ry="2.1" fill="#aa660e"/>
<ellipse cx="691.8" cy="390.8" rx="4.3" ry="5.6" fill="#fde81c"/>
<ellipse cx="691.8" cy="390.8" rx="2.0" ry="2.6" fill="#a8620e"/>
<ellipse cx="519.9" cy="392.2" rx="3.4" ry="4.5" fill="#f8da0c"/>
<ellipse cx="519.9" cy="392.2" rx="1.6" ry="2.0" fill="#ab670e"/>
<polygon points="538.8,389.9 536.3,390.3 537.1,394.0 534.7,392.7 534.4,396.5 532.6,393.9 531.2,397.1 530.3,393.5 528.2,395.5 528.4,391.7 525.9,392.1 527.2,388.8 524.8,387.5 527.0,385.5 525.2,382.7 527.7,382.3 526.9,378.6 529.3,379.9 529.6,376.1 531.4,378.7 532.8,375.5 533.7,379.1 535.8,377.1 535.6,380.9 538.1,380.5 536.8,383.8 539.2,385.1 537.0,387.1" fill="#f8da0c"/>
<polygon points="537.3,391.3 535.3,391.2 535.3,394.3 533.5,392.9 532.7,395.6 531.5,393.2 529.9,395.2 529.5,392.2 527.6,392.9 528.1,390.0 526.1,389.4 527.4,387.1 525.8,385.3 527.6,384.0 526.7,381.3 528.7,381.4 528.7,378.3 530.5,379.7 531.3,377.0 532.5,379.4 534.1,377.4 534.5,380.4 536.4,379.7 535.9,382.6 537.9,383.2 536.6,385.5 538.2,387.3 536.4,388.6" fill="#fbe620"/>
<ellipse cx="532.0" cy="386.3" rx="3.7" ry="5.6" fill="#eaa80e"/>
<ellipse cx="532.0" cy="386.5" rx="3.0" ry="4.5" fill="#a8600e"/>
<ellipse cx="532.0" cy="386.7" rx="1.5" ry="2.2" fill="#c98418" opacity=".7"/>
<ellipse cx="451.3" cy="392.8" rx="3.2" ry="4.2" fill="#fadf12"/>
<ellipse cx="451.3" cy="392.8" rx="1.5" ry="1.9" fill="#af6e0f"/>
<ellipse cx="443.0" cy="392.0" rx="3.9" ry="5.2" fill="#fde81c"/>
<ellipse cx="443.0" cy="392.0" rx="1.8" ry="2.4" fill="#a8620e"/>
<ellipse cx="445.3" cy="393.2" rx="3.4" ry="4.5" fill="#f8da0c"/>
<ellipse cx="445.3" cy="393.2" rx="1.6" ry="2.1" fill="#aa660e"/>
<polygon points="563.9,392.4 561.5,393.3 562.0,396.2 559.6,395.4 558.7,398.2 557.0,396.0 555.0,397.8 554.6,394.8 552.1,395.0 553.1,392.3 550.9,390.8 553.0,389.2 551.8,386.5 554.3,386.5 554.5,383.5 556.7,385.1 558.2,382.7 559.3,385.4 561.6,384.4 561.3,387.3 563.8,388.0 562.1,390.3" fill="#f6d40a"/>
<polygon points="562.5,393.9 560.4,394.2 560.1,396.6 558.3,395.4 556.9,397.3 555.9,395.1 553.9,395.8 554.0,393.4 552.1,392.7 553.3,390.7 551.9,388.9 553.8,388.0 553.6,385.6 555.6,386.0 556.5,383.8 557.9,385.5 559.7,384.2 560.2,386.6 562.2,386.6 561.5,388.9 563.2,390.2 561.6,391.7" fill="#fbe620"/>
<ellipse cx="557.5" cy="390.5" rx="3.4" ry="4.1" fill="#eaa80e"/>
<ellipse cx="557.5" cy="390.7" rx="2.7" ry="3.2" fill="#a8600e"/>
<ellipse cx="557.5" cy="390.9" rx="1.4" ry="1.6" fill="#c98418" opacity=".7"/>
<ellipse cx="541.0" cy="393.4" rx="3.6" ry="4.8" fill="#f8da0c"/>
<ellipse cx="541.0" cy="393.4" rx="1.7" ry="2.2" fill="#a8620e"/>
<ellipse cx="442.9" cy="393.7" rx="3.4" ry="4.5" fill="#fadf12"/>
<ellipse cx="442.9" cy="393.7" rx="1.6" ry="2.1" fill="#aa660e"/>
<ellipse cx="453.6" cy="394.0" rx="3.2" ry="4.3" fill="#fbe10e"/>
<ellipse cx="453.6" cy="394.0" rx="1.5" ry="2.0" fill="#ae6c0f"/>
<ellipse cx="458.9" cy="393.6" rx="3.6" ry="4.7" fill="#f6d40a"/>
<ellipse cx="458.9" cy="393.6" rx="1.7" ry="2.2" fill="#a8620e"/>
<ellipse cx="668.6" cy="393.1" rx="4.0" ry="5.3" fill="#f6d40a"/>
<ellipse cx="668.6" cy="393.1" rx="1.9" ry="2.5" fill="#a8620e"/>
<polygon points="588.5,396.2 585.8,395.8 585.1,398.4 583.0,396.6 581.0,398.5 580.3,395.8 577.5,396.3 578.4,393.6 575.8,392.6 578.0,390.8 576.4,388.5 579.2,388.2 579.1,385.4 581.6,386.6 583.0,384.3 584.4,386.6 586.9,385.4 586.8,388.2 589.6,388.5 588.0,390.8 590.2,392.5 587.6,393.6" fill="#fadf12"/>
<polygon points="586.4,396.8 584.3,395.9 583.0,397.8 581.7,396.0 579.6,396.8 579.5,394.5 577.3,394.1 578.4,392.2 576.8,390.6 578.8,389.6 578.3,387.4 580.5,387.6 581.2,385.5 583.0,386.9 584.7,385.5 585.5,387.6 587.7,387.4 587.2,389.6 589.2,390.6 587.6,392.1 588.7,394.1 586.5,394.5" fill="#fbe620"/>
<ellipse cx="583.0" cy="391.5" rx="3.7" ry="3.7" fill="#eaa80e"/>
<ellipse cx="583.0" cy="391.7" rx="3.0" ry="3.0" fill="#a8600e"/>
<ellipse cx="583.0" cy="391.9" rx="1.5" ry="1.5" fill="#c98418" opacity=".7"/>
<ellipse cx="571.4" cy="393.8" rx="3.6" ry="4.7" fill="#f8da0c"/>
<ellipse cx="571.4" cy="393.8" rx="1.6" ry="2.2" fill="#a8620e"/>
<ellipse cx="441.1" cy="394.6" rx="3.0" ry="4.0" fill="#fde81c"/>
<ellipse cx="441.1" cy="394.6" rx="1.4" ry="1.8" fill="#b27210"/>
<polygon points="591.5,393.5 588.9,394.5 589.7,397.1 587.0,396.6 586.2,399.2 584.2,397.3 582.1,399.1 581.5,396.4 578.8,396.7 579.7,394.1 577.2,393.0 579.4,391.3 577.9,389.0 580.7,388.7 580.7,386.0 583.2,387.3 584.7,385.0 586.0,387.4 588.5,386.3 588.3,389.0 591.1,389.4 589.4,391.7" fill="#fbe10e"/>
<polygon points="590.0,395.0 587.8,395.4 587.6,397.6 585.5,396.7 584.2,398.5 582.9,396.6 580.8,397.3 580.8,395.1 578.6,394.6 579.8,392.7 578.2,391.1 580.3,390.1 579.8,387.9 582.0,388.2 582.9,386.1 584.6,387.6 586.4,386.3 587.0,388.4 589.3,388.3 588.7,390.4 590.6,391.5 589.0,393.0" fill="#fbe620"/>
<ellipse cx="584.4" cy="392.2" rx="3.7" ry="3.7" fill="#eaa80e"/>
<ellipse cx="584.4" cy="392.4" rx="3.0" ry="3.0" fill="#b06a10"/>
<ellipse cx="584.4" cy="392.6" rx="1.5" ry="1.5" fill="#c98418" opacity=".7"/>
<ellipse cx="438.3" cy="394.0" rx="4.0" ry="5.3" fill="#f6d40a"/>
<ellipse cx="438.3" cy="394.0" rx="1.9" ry="2.5" fill="#a8620e"/>
<ellipse cx="451.4" cy="394.8" rx="3.9" ry="5.1" fill="#fadf12"/>
<ellipse cx="451.4" cy="394.8" rx="1.8" ry="2.3" fill="#a8620e"/>
<ellipse cx="438.2" cy="395.8" rx="3.1" ry="4.1" fill="#f8da0c"/>
<ellipse cx="438.2" cy="395.8" rx="1.4" ry="1.9" fill="#b06f0f"/>
<ellipse cx="452.7" cy="395.8" rx="3.2" ry="4.3" fill="#fbe10e"/>
<ellipse cx="452.7" cy="395.8" rx="1.5" ry="2.0" fill="#ae6c0f"/>
<ellipse cx="729.7" cy="394.6" rx="4.3" ry="5.7" fill="#fde81c"/>
<ellipse cx="729.7" cy="394.6" rx="2.0" ry="2.6" fill="#a8620e"/>
<ellipse cx="457.9" cy="395.2" rx="3.9" ry="5.2" fill="#fde81c"/>
<ellipse cx="457.9" cy="395.2" rx="1.8" ry="2.4" fill="#a8620e"/>
<polygon points="538.6,394.4 536.1,395.4 537.0,398.1 534.4,397.5 533.9,400.4 531.9,398.5 530.2,400.7 529.3,398.0 526.8,399.0 527.3,396.1 524.7,395.6 526.4,393.4 524.4,391.6 526.9,390.6 526.0,387.9 528.6,388.5 529.1,385.6 531.1,387.5 532.8,385.3 533.7,388.0 536.2,387.0 535.7,389.9 538.3,390.4 536.6,392.6" fill="#fde81c"/>
<polygon points="537.2,395.9 535.0,396.3 535.1,398.6 533.0,397.7 532.0,399.8 530.7,397.9 528.8,399.1 528.5,396.8 526.3,396.8 527.1,394.7 525.3,393.5 526.9,392.1 525.8,390.1 528.0,389.7 527.9,387.4 530.0,388.3 531.0,386.2 532.3,388.1 534.2,386.9 534.5,389.2 536.7,389.2 535.9,391.3 537.7,392.5 536.1,393.9" fill="#fbe620"/>
<ellipse cx="531.5" cy="393.0" rx="3.7" ry="4.1" fill="#eaa80e"/>
<ellipse cx="531.5" cy="393.2" rx="3.0" ry="3.2" fill="#a8580e"/>
<ellipse cx="531.5" cy="393.4" rx="1.5" ry="1.6" fill="#c98418" opacity=".7"/>
<ellipse cx="458.3" cy="396.2" rx="3.3" ry="4.4" fill="#f6d40a"/>
<ellipse cx="458.3" cy="396.2" rx="1.5" ry="2.0" fill="#ac690e"/>
<polygon points="718.2,398.3 715.8,396.9 715.4,400.7 713.6,397.9 712.2,401.0 711.4,397.4 709.2,399.2 709.6,395.4 707.0,395.7 708.4,392.5 706.1,391.0 708.3,389.1 706.6,386.3 709.1,386.0 708.4,382.3 710.8,383.7 711.2,379.9 713.0,382.7 714.4,379.6 715.2,383.2 717.4,381.4 717.0,385.2 719.6,384.9 718.2,388.1 720.5,389.6 718.3,391.5 720.0,394.3 717.5,394.6" fill="#fadf12"/>
<polygon points="716.4,398.5 714.6,397.0 713.7,399.7 712.6,397.2 711.0,399.0 710.7,396.0 708.7,396.7 709.3,393.7 707.3,393.0 708.7,390.8 707.1,388.8 709.0,387.7 708.1,385.0 710.2,385.2 710.2,382.1 712.0,383.6 712.9,380.9 714.0,383.4 715.6,381.6 715.9,384.6 717.9,383.9 717.3,386.9 719.3,387.6 717.9,389.8 719.5,391.8 717.6,392.9 718.5,395.6 716.4,395.4" fill="#fbe620"/>
<ellipse cx="713.3" cy="390.3" rx="4.1" ry="6.2" fill="#eaa80e"/>
<ellipse cx="713.3" cy="390.5" rx="3.3" ry="4.9" fill="#a8600e"/>
<ellipse cx="713.3" cy="390.7" rx="1.6" ry="2.5" fill="#c98418" opacity=".7"/>
<ellipse cx="452.2" cy="395.2" rx="4.3" ry="5.6" fill="#fadf12"/>
<ellipse cx="452.2" cy="395.2" rx="2.0" ry="2.6" fill="#a8620e"/>
<ellipse cx="439.5" cy="395.8" rx="3.8" ry="5.0" fill="#fbe10e"/>
<ellipse cx="439.5" cy="395.8" rx="1.8" ry="2.3" fill="#a8620e"/>
<polygon points="686.7,393.2 685.0,394.2 685.5,398.1 683.7,396.9 683.2,400.9 682.0,397.9 680.7,400.8 680.3,396.9 678.5,398.0 679.0,394.1 677.2,393.1 678.6,390.3 677.3,387.4 679.0,386.4 678.5,382.5 680.3,383.7 680.8,379.7 682.0,382.7 683.3,379.8 683.7,383.7 685.5,382.6 685.0,386.5 686.8,387.5 685.4,390.3" fill="#fde81c"/>
<polygon points="685.7,395.1 684.2,395.3 684.1,398.5 682.8,397.1 682.0,399.7 681.2,397.0 679.9,398.5 679.8,395.2 678.3,395.0 679.0,392.1 677.7,390.3 679.0,388.5 678.3,385.5 679.8,385.3 679.9,382.1 681.2,383.5 682.0,380.9 682.8,383.6 684.1,382.1 684.2,385.4 685.7,385.6 685.0,388.5 686.3,390.3 685.0,392.1" fill="#fbe620"/>
<ellipse cx="455.1" cy="395.0" rx="4.4" ry="5.8" fill="#fadf12"/>
<ellipse cx="455.1" cy="395.0" rx="2.0" ry="2.7" fill="#a8620e"/>
<ellipse cx="456.8" cy="395.4" rx="4.1" ry="5.4" fill="#fbe10e"/>
<ellipse cx="456.8" cy="395.4" rx="1.9" ry="2.5" fill="#a8620e"/>
<ellipse cx="440.2" cy="395.9" rx="4.1" ry="5.4" fill="#fadf12"/>
<ellipse cx="440.2" cy="395.9" rx="1.9" ry="2.5" fill="#a8620e"/>
<ellipse cx="453.1" cy="396.4" rx="3.7" ry="4.9" fill="#fbe10e"/>
<ellipse cx="453.1" cy="396.4" rx="1.7" ry="2.2" fill="#a8620e"/>
<ellipse cx="743.0" cy="395.7" rx="4.3" ry="5.7" fill="#f6d40a"/>
<ellipse cx="743.0" cy="395.7" rx="2.0" ry="2.6" fill="#a8620e"/>
<ellipse cx="569.3" cy="396.2" rx="4.1" ry="5.3" fill="#fadf12"/>
<ellipse cx="569.3" cy="396.2" rx="1.9" ry="2.5" fill="#a8620e"/>
<ellipse cx="520.8" cy="396.4" rx="4.4" ry="5.7" fill="#f6d40a"/>
<ellipse cx="520.8" cy="396.4" rx="2.0" ry="2.6" fill="#a8620e"/>
<ellipse cx="438.1" cy="397.6" rx="3.5" ry="4.6" fill="#fde81c"/>
<ellipse cx="438.1" cy="397.6" rx="1.6" ry="2.1" fill="#a9640e"/>
<ellipse cx="447.1" cy="397.5" rx="3.6" ry="4.8" fill="#fde81c"/>
<ellipse cx="447.1" cy="397.5" rx="1.7" ry="2.2" fill="#a8620e"/>
<ellipse cx="740.8" cy="396.8" rx="4.3" ry="5.6" fill="#f6d40a"/>
<ellipse cx="740.8" cy="396.8" rx="2.0" ry="2.6" fill="#a8620e"/>
<ellipse cx="448.7" cy="397.3" rx="3.9" ry="5.2" fill="#f6d40a"/>
<ellipse cx="448.7" cy="397.3" rx="1.8" ry="2.4" fill="#a8620e"/>
<ellipse cx="442.9" cy="397.6" rx="3.9" ry="5.1" fill="#fbe10e"/>
<ellipse cx="442.9" cy="397.6" rx="1.8" ry="2.3" fill="#a8620e"/>
<ellipse cx="444.7" cy="397.5" rx="4.0" ry="5.3" fill="#fde81c"/>
<ellipse cx="444.7" cy="397.5" rx="1.8" ry="2.4" fill="#a8620e"/>
<polygon points="475.0,396.4 473.0,397.7 473.9,400.2 471.6,400.0 471.2,402.7 469.4,401.0 467.8,403.1 467.0,400.5 464.8,401.2 465.3,398.5 463.1,397.7 464.8,395.7 463.3,393.6 465.6,393.0 465.3,390.3 467.5,391.3 468.5,388.8 469.8,391.0 471.8,389.6 471.9,392.4 474.2,392.4 473.1,394.8" fill="#fbe10e"/>
<polygon points="473.9,398.1 472.1,398.7 472.2,401.0 470.4,400.3 469.5,402.2 468.2,400.5 466.6,401.5 466.3,399.3 464.5,399.1 465.2,397.1 463.8,395.7 465.4,394.4 464.8,392.3 466.6,392.3 467.1,390.2 468.7,391.4 470.0,389.9 470.8,391.9 472.6,391.5 472.4,393.7 474.1,394.6 472.9,396.3" fill="#fbe620"/>
<ellipse cx="469.0" cy="396.0" rx="3.1" ry="3.7" fill="#eaa80e"/>
<ellipse cx="469.0" cy="396.2" rx="2.5" ry="3.0" fill="#b0640e"/>
<ellipse cx="469.0" cy="396.4" rx="1.2" ry="1.5" fill="#c98418" opacity=".7"/>
<ellipse cx="458.3" cy="397.5" rx="4.3" ry="5.7" fill="#f6d40a"/>
<ellipse cx="458.3" cy="397.5" rx="2.0" ry="2.6" fill="#a8620e"/>
<ellipse cx="451.4" cy="398.2" rx="3.9" ry="5.1" fill="#fbe10e"/>
<ellipse cx="451.4" cy="398.2" rx="1.8" ry="2.3" fill="#a8620e"/>
<polygon points="687.9,395.7 685.8,396.9 686.6,400.2 684.4,399.6 684.0,403.1 682.3,400.7 680.9,403.5 680.2,400.1 678.1,401.4 678.5,397.8 676.3,397.3 677.8,394.6 676.1,392.3 678.2,391.1 677.4,387.8 679.6,388.4 680.0,384.9 681.7,387.3 683.1,384.5 683.8,387.9 685.9,386.6 685.5,390.2 687.7,390.7 686.2,393.4" fill="#fde81c"/>
<polygon points="686.7,397.6 684.9,398.0 685.0,400.9 683.3,399.8 682.4,402.3 681.3,400.1 679.8,401.6 679.5,398.7 677.7,398.8 678.4,396.1 676.8,394.7 678.2,392.9 677.3,390.4 679.1,390.0 679.0,387.1 680.7,388.2 681.6,385.7 682.7,387.9 684.2,386.4 684.5,389.3 686.3,389.2 685.6,391.9 687.2,393.3 685.8,395.1" fill="#fbe620"/>
<ellipse cx="682.0" cy="394.0" rx="2.8" ry="4.5" fill="#eaa80e"/>
<ellipse cx="682.0" cy="394.2" rx="2.2" ry="3.6" fill="#b07010"/>
<ellipse cx="682.0" cy="394.4" rx="1.1" ry="1.8" fill="#c98418" opacity=".7"/>
<polygon points="462.9,398.9 461.3,399.6 461.7,401.9 460.0,401.3 459.4,403.5 458.2,401.8 456.8,403.2 456.5,401.0 454.8,401.2 455.4,399.0 453.9,398.0 455.3,396.7 454.4,394.7 456.2,394.6 456.3,392.3 457.8,393.4 458.8,391.5 459.6,393.6 461.2,392.8 461.0,395.1 462.8,395.5 461.7,397.3" fill="#f6d40a"/>
<polygon points="461.9,400.1 460.5,400.3 460.4,402.2 459.1,401.4 458.2,402.8 457.4,401.2 456.1,401.8 456.1,399.9 454.7,399.4 455.5,397.8 454.6,396.4 455.9,395.7 455.7,393.9 457.1,394.2 457.6,392.5 458.7,393.7 459.9,392.7 460.2,394.5 461.7,394.5 461.2,396.2 462.4,397.2 461.3,398.4" fill="#fbe620"/>
<ellipse cx="458.5" cy="397.6" rx="2.2" ry="2.9" fill="#eaa80e"/>
<ellipse cx="458.5" cy="397.8" rx="1.7" ry="2.3" fill="#a8620e"/>
<ellipse cx="458.5" cy="398.0" rx="0.9" ry="1.2" fill="#c98418" opacity=".7"/>
<ellipse cx="732.4" cy="398.0" rx="4.2" ry="5.6" fill="#fde81c"/>
<ellipse cx="732.4" cy="398.0" rx="2.0" ry="2.6" fill="#a8620e"/>
<polygon points="484.6,401.8 482.2,400.4 481.4,403.8 479.8,401.1 478.0,403.6 477.5,400.2 475.0,401.3 475.7,397.9 473.1,397.4 474.9,394.8 472.9,392.8 475.3,391.7 474.2,388.5 476.8,389.1 476.9,385.6 479.0,387.7 480.3,384.7 481.4,387.8 483.6,385.9 483.5,389.4 486.1,389.1 484.8,392.2 487.2,393.5 485.0,395.4 486.7,398.1 484.1,398.4" fill="#f6d40a"/>
<polygon points="482.7,401.8 480.9,400.4 479.7,402.6 478.7,400.2 476.9,401.5 476.8,398.8 474.7,398.8 475.6,396.3 473.8,395.0 475.4,393.3 474.2,391.0 476.3,390.6 476.0,387.8 478.0,388.7 478.7,386.1 480.2,388.1 481.7,386.3 482.3,388.9 484.3,388.3 483.9,391.0 485.9,391.7 484.6,393.8 486.2,395.6 484.3,396.7 485.0,399.3 482.9,399.1" fill="#fbe620"/>
<ellipse cx="480.0" cy="394.3" rx="3.7" ry="5.0" fill="#eaa80e"/>
<ellipse cx="480.0" cy="394.5" rx="3.0" ry="4.0" fill="#a8600e"/>
<ellipse cx="480.0" cy="394.7" rx="1.5" ry="2.0" fill="#c98418" opacity=".7"/>
<polygon points="486.3,398.4 483.7,398.7 484.3,401.9 481.9,400.7 481.2,403.8 479.5,401.3 477.7,403.7 477.2,400.6 474.7,401.7 475.4,398.5 472.8,398.1 474.6,395.7 472.4,393.8 474.9,392.6 473.7,389.7 476.3,390.2 476.3,386.9 478.5,388.8 479.7,386.0 480.9,388.9 483.1,387.1 483.0,390.3 485.6,390.0 484.4,392.9 486.8,394.1 484.6,395.9" fill="#f6d40a"/>
<polygon points="484.7,399.6 482.6,399.4 482.4,402.0 480.6,400.6 479.5,402.8 478.4,400.6 476.6,401.9 476.5,399.3 474.4,399.3 475.2,397.0 473.4,395.8 475.0,394.2 473.8,392.1 475.8,391.6 475.5,389.0 477.5,389.8 478.2,387.4 479.7,389.2 481.2,387.4 481.8,389.9 483.8,389.2 483.5,391.8 485.5,392.4 484.2,394.4 485.8,396.1 483.9,397.2" fill="#fbe620"/>
<ellipse cx="479.6" cy="395.0" rx="3.7" ry="4.7" fill="#eaa80e"/>
<ellipse cx="479.6" cy="395.2" rx="3.0" ry="3.7" fill="#b0600e"/>
<ellipse cx="479.6" cy="395.4" rx="1.5" ry="1.9" fill="#c98418" opacity=".7"/>
<ellipse cx="731.5" cy="398.0" rx="4.4" ry="5.8" fill="#f6d40a"/>
<ellipse cx="731.5" cy="398.0" rx="2.0" ry="2.7" fill="#a8620e"/>
<polygon points="472.7,401.1 470.8,400.9 470.6,403.7 469.1,402.0 467.9,404.1 467.2,401.5 465.4,402.3 465.8,399.6 464.0,398.8 465.3,396.9 464.1,394.8 465.9,394.1 465.6,391.4 467.4,392.3 468.1,389.8 469.3,392.0 470.8,390.5 471.0,393.3 472.8,393.3 472.0,395.7 473.5,397.2 471.9,398.6" fill="#f6d40a"/>
<polygon points="471.3,401.8 469.9,401.3 469.2,403.2 468.2,401.6 466.9,402.6 466.6,400.4 465.1,400.2 465.7,398.2 464.5,396.8 465.8,395.6 465.3,393.5 466.7,393.4 467.1,391.2 468.3,392.4 469.4,390.8 470.1,392.8 471.5,392.4 471.3,394.6 472.7,395.4 471.8,397.1 472.7,398.9 471.3,399.6" fill="#fbe620"/>
<ellipse cx="468.7" cy="397.0" rx="2.5" ry="3.7" fill="#eaa80e"/>
<ellipse cx="468.7" cy="397.2" rx="2.0" ry="3.0" fill="#a8600e"/>
<ellipse cx="468.7" cy="397.4" rx="1.0" ry="1.5" fill="#c98418" opacity=".7"/>
<ellipse cx="450.4" cy="398.8" rx="4.0" ry="5.3" fill="#f8da0c"/>
<ellipse cx="450.4" cy="398.8" rx="1.8" ry="2.4" fill="#a8620e"/>
<polygon points="716.2,401.1 713.4,399.9 713.3,403.7 711.1,401.2 709.8,404.6 708.6,401.1 706.4,403.5 706.4,399.8 703.6,400.8 704.8,397.4 701.9,396.8 704.1,394.3 701.6,392.3 704.4,391.2 702.8,388.1 705.7,388.5 705.2,384.8 707.7,386.7 708.4,383.0 710.1,386.1 711.9,383.1 712.5,386.8 715.1,385.1 714.5,388.7 717.4,388.5 715.7,391.5 718.4,392.8 715.9,394.7 718.0,397.3 715.1,397.6" fill="#fbe10e"/>
<polygon points="714.2,401.4 712.1,400.1 711.4,402.9 709.9,400.7 708.3,402.8 707.7,400.0 705.6,401.2 705.9,398.2 703.6,398.2 704.8,395.7 702.7,394.5 704.6,392.8 703.1,390.6 705.4,390.1 704.7,387.3 706.9,388.0 707.2,385.0 709.0,386.9 710.2,384.3 711.2,386.9 713.1,385.2 713.3,388.2 715.5,387.6 714.7,390.4 717.0,391.0 715.4,393.1 717.2,394.9 715.1,396.0 716.2,398.6 713.9,398.5" fill="#fbe620"/>
<ellipse cx="710.0" cy="393.7" rx="4.8" ry="6.2" fill="#eaa80e"/>
<ellipse cx="710.0" cy="393.9" rx="3.8" ry="4.9" fill="#9a5210"/>
<ellipse cx="710.0" cy="394.1" rx="1.9" ry="2.5" fill="#c98418" opacity=".7"/>
<ellipse cx="446.9" cy="398.6" rx="4.3" ry="5.6" fill="#fbe10e"/>
<ellipse cx="446.9" cy="398.6" rx="2.0" ry="2.6" fill="#a8620e"/>
<ellipse cx="449.6" cy="399.7" rx="3.7" ry="4.9" fill="#f8da0c"/>
<ellipse cx="449.6" cy="399.7" rx="1.7" ry="2.2" fill="#a8620e"/>
<ellipse cx="460.3" cy="400.3" rx="3.6" ry="4.7" fill="#fde81c"/>
<ellipse cx="460.3" cy="400.3" rx="1.7" ry="2.2" fill="#a8620e"/>
<ellipse cx="442.1" cy="399.9" rx="4.1" ry="5.4" fill="#fde81c"/>
<ellipse cx="442.1" cy="399.9" rx="1.9" ry="2.5" fill="#a8620e"/>
<ellipse cx="452.5" cy="400.8" rx="3.8" ry="5.0" fill="#f8da0c"/>
<ellipse cx="452.5" cy="400.8" rx="1.7" ry="2.3" fill="#a8620e"/>
<ellipse cx="441.0" cy="400.9" rx="3.8" ry="5.1" fill="#fadf12"/>
<ellipse cx="441.0" cy="400.9" rx="1.8" ry="2.3" fill="#a8620e"/>
<polygon points="573.0,400.7 571.5,401.8 572.1,403.9 570.4,403.7 570.1,406.0 568.7,404.6 567.5,406.3 566.9,404.1 565.2,404.7 565.6,402.4 564.0,401.7 565.2,400.1 564.1,398.3 565.8,397.9 565.6,395.6 567.3,396.4 568.0,394.3 569.1,396.2 570.6,395.0 570.7,397.3 572.4,397.4 571.6,399.4" fill="#fbe10e"/>
<polygon points="572.2,402.1 570.8,402.6 570.9,404.5 569.5,404.0 568.8,405.6 567.8,404.1 566.6,405.0 566.4,403.1 565.0,402.9 565.6,401.2 564.5,400.0 565.7,399.0 565.2,397.3 566.6,397.3 567.0,395.5 568.2,396.5 569.2,395.2 569.8,396.9 571.2,396.6 571.0,398.4 572.3,399.2 571.4,400.6" fill="#fbe620"/>
<ellipse cx="568.4" cy="400.3" rx="2.2" ry="2.9" fill="#eaa80e"/>
<ellipse cx="568.4" cy="400.5" rx="1.7" ry="2.3" fill="#a8620e"/>
<ellipse cx="568.4" cy="400.7" rx="0.9" ry="1.2" fill="#c98418" opacity=".7"/>
<ellipse cx="568.7" cy="401.1" rx="4.4" ry="5.8" fill="#fadf12"/>
<ellipse cx="568.7" cy="401.1" rx="2.0" ry="2.6" fill="#a8620e"/>
<ellipse cx="569.8" cy="401.2" rx="4.3" ry="5.7" fill="#fadf12"/>
<ellipse cx="569.8" cy="401.2" rx="2.0" ry="2.6" fill="#a8620e"/>
<ellipse cx="494.0" cy="401.3" rx="4.3" ry="5.7" fill="#fbe10e"/>
<ellipse cx="494.0" cy="401.3" rx="2.0" ry="2.6" fill="#a8620e"/>
<ellipse cx="438.6" cy="401.6" rx="4.1" ry="5.4" fill="#f6d40a"/>
<ellipse cx="438.6" cy="401.6" rx="1.9" ry="2.5" fill="#a8620e"/>
<ellipse cx="438.1" cy="402.3" rx="4.0" ry="5.3" fill="#fadf12"/>
<ellipse cx="438.1" cy="402.3" rx="1.8" ry="2.4" fill="#a8620e"/>
<polygon points="636.0,400.8 633.1,401.8 634.9,405.2 631.9,404.6 632.5,408.6 630.0,406.5 629.4,410.6 627.6,407.3 626.0,410.8 625.3,406.8 622.8,409.1 623.3,405.1 620.3,406.0 621.8,402.4 618.9,401.7 621.3,399.2 618.8,397.0 621.7,396.0 619.9,392.6 622.9,393.2 622.3,389.2 624.8,391.3 625.4,387.2 627.2,390.5 628.8,387.0 629.5,391.0 632.0,388.7 631.5,392.7 634.5,391.8 633.0,395.4 635.9,396.1 633.5,398.6" fill="#f6d40a"/>
<polygon points="634.5,402.5 632.2,402.9 633.0,406.0 630.7,405.1 630.6,408.3 628.7,406.4 627.7,409.3 626.5,406.5 624.8,408.7 624.5,405.5 622.3,406.5 622.9,403.4 620.5,403.3 622.0,400.7 619.8,399.3 621.9,397.7 620.3,395.3 622.6,394.9 621.8,391.8 624.1,392.7 624.2,389.5 626.1,391.4 627.1,388.5 628.3,391.3 630.0,389.1 630.3,392.3 632.5,391.3 631.9,394.4 634.3,394.5 632.8,397.1 635.0,398.5 632.9,400.1" fill="#fbe620"/>
<ellipse cx="627.4" cy="398.9" rx="4.5" ry="6.2" fill="#eaa80e"/>
<ellipse cx="627.4" cy="399.1" rx="3.6" ry="5.0" fill="#b0600e"/>
<ellipse cx="627.4" cy="399.3" rx="1.8" ry="2.5" fill="#c98418" opacity=".7"/>
<polygon points="517.9,402.3 515.6,403.7 516.9,406.7 514.3,406.5 514.5,410.0 512.3,408.2 511.2,411.4 509.9,408.5 507.8,410.7 507.6,407.2 505.1,407.9 506.1,404.7 503.6,403.7 505.6,401.5 503.8,399.1 506.3,398.4 505.5,395.1 508.0,396.1 508.5,392.6 510.3,395.1 511.9,392.3 512.7,395.6 515.1,394.1 514.6,397.6 517.3,397.7 515.7,400.5" fill="#fde81c"/>
<polygon points="516.7,404.2 514.7,404.9 515.2,407.6 513.2,407.0 512.6,409.7 511.0,408.0 509.7,410.0 508.9,407.5 506.9,408.4 507.1,405.7 505.0,405.3 506.2,403.0 504.4,401.4 506.3,400.0 505.3,397.6 507.4,397.5 507.4,394.7 509.3,395.9 510.2,393.5 511.5,395.7 513.2,394.1 513.5,396.9 515.6,396.6 514.9,399.2 516.8,400.2 515.3,402.1" fill="#fbe620"/>
<ellipse cx="510.7" cy="401.8" rx="3.7" ry="5.0" fill="#eaa80e"/>
<ellipse cx="510.7" cy="402.0" rx="3.0" ry="4.0" fill="#a0560e"/>
<ellipse cx="510.7" cy="402.2" rx="1.5" ry="2.0" fill="#c98418" opacity=".7"/>
<polygon points="517.7,407.1 514.9,406.7 515.2,410.1 512.8,408.4 511.9,411.6 510.4,408.7 508.5,411.1 508.1,407.7 505.5,408.9 506.4,405.6 503.6,405.2 505.5,402.8 503.2,401.0 505.8,399.8 504.3,396.9 507.1,397.3 506.8,393.9 509.2,395.6 510.1,392.4 511.6,395.3 513.5,392.9 513.9,396.3 516.5,395.1 515.6,398.4 518.4,398.8 516.5,401.2 518.8,403.0 516.2,404.2" fill="#fde81c"/>
<polygon points="515.8,407.9 513.7,407.2 513.3,409.9 511.6,408.1 510.3,410.3 509.4,407.8 507.4,409.1 507.5,406.4 505.3,406.5 506.3,404.1 504.3,403.0 506.0,401.3 504.6,399.3 506.7,398.7 506.2,396.1 508.3,396.8 508.7,394.1 510.4,395.9 511.7,393.7 512.6,396.2 514.6,394.9 514.5,397.6 516.7,397.5 515.7,399.9 517.7,401.0 516.0,402.7 517.4,404.7 515.3,405.3" fill="#fbe620"/>
<ellipse cx="511.0" cy="402.0" rx="4.1" ry="5.0" fill="#eaa80e"/>
<ellipse cx="511.0" cy="402.2" rx="3.2" ry="4.0" fill="#b8780e"/>
<ellipse cx="511.0" cy="402.4" rx="1.6" ry="2.0" fill="#c98418" opacity=".7"/>
<polygon points="557.9,410.6 555.2,409.1 555.0,412.9 552.9,410.2 551.6,413.5 550.6,410.0 548.3,412.5 548.4,408.8 545.6,410.0 546.8,406.6 543.8,406.4 546.0,403.8 543.3,402.1 546.1,400.8 544.1,398.0 547.1,398.1 546.1,394.6 548.8,396.1 549.0,392.3 551.1,395.0 552.4,391.7 553.4,395.2 555.7,392.7 555.6,396.4 558.4,395.2 557.2,398.6 560.2,398.8 558.0,401.4 560.7,403.1 557.9,404.4 559.9,407.2 556.9,407.1" fill="#f6d40a"/>
<polygon points="555.9,410.7 553.9,409.2 553.2,411.9 551.8,409.6 550.2,411.8 549.6,408.9 547.5,410.2 547.9,407.3 545.5,407.5 546.7,405.0 544.5,404.1 546.4,402.3 544.7,400.4 546.9,399.7 545.9,397.0 548.2,397.5 548.1,394.5 550.1,396.0 550.8,393.3 552.2,395.6 553.8,393.4 554.4,396.3 556.5,395.0 556.1,397.9 558.5,397.7 557.3,400.2 559.5,401.1 557.6,402.9 559.3,404.8 557.1,405.5 558.1,408.2 555.8,407.7" fill="#fbe620"/>
<ellipse cx="552.0" cy="402.6" rx="4.5" ry="5.6" fill="#eaa80e"/>
<ellipse cx="552.0" cy="402.8" rx="3.6" ry="4.5" fill="#a9560d"/>
<ellipse cx="552.0" cy="403.0" rx="1.8" ry="2.3" fill="#c98418" opacity=".7"/>
<polygon points="508.7,410.1 506.9,410.7 507.4,412.5 505.6,412.0 505.0,413.7 503.7,412.4 502.2,413.5 501.9,411.7 500.1,411.8 500.8,410.1 499.2,409.3 500.7,408.2 499.8,406.6 501.6,406.6 501.8,404.7 503.3,405.7 504.4,404.2 505.2,405.9 506.9,405.2 506.7,407.0 508.5,407.4 507.4,408.8" fill="#fde81c"/>
<polygon points="507.6,411.1 506.2,411.2 505.9,412.7 504.6,412.0 503.6,413.2 502.9,411.9 501.4,412.3 501.5,410.8 500.1,410.4 500.9,409.2 499.9,408.1 501.3,407.5 501.1,406.0 502.6,406.3 503.2,404.9 504.3,405.9 505.5,405.1 505.9,406.6 507.4,406.5 506.9,408.0 508.2,408.8 507.0,409.7" fill="#fbe620"/>
<polygon points="609.4,409.0 606.7,408.7 607.3,412.5 604.9,410.6 604.4,414.4 602.8,411.3 601.2,414.4 600.6,410.7 598.3,412.6 598.8,408.9 596.1,409.3 597.6,406.2 595.1,405.0 597.4,403.0 595.4,400.5 598.0,400.0 597.0,396.5 599.5,397.6 599.5,393.8 601.5,396.2 602.6,392.8 603.7,396.2 605.7,393.7 605.8,397.5 608.3,396.3 607.3,399.8 609.9,400.2 608.0,402.8 610.3,404.7 607.8,406.0" fill="#fde81c"/>
<polygon points="607.7,409.9 605.6,409.3 605.5,412.3 603.8,410.5 602.8,413.1 601.7,410.6 600.1,412.4 599.9,409.4 597.8,410.1 598.5,407.3 596.4,406.7 597.8,404.5 596.1,402.8 598.0,401.6 596.9,399.1 599.0,399.1 598.7,396.1 600.7,397.3 601.2,394.5 602.6,396.7 604.0,394.4 604.6,397.3 606.5,396.0 606.3,399.0 608.4,398.9 607.3,401.5 609.3,402.6 607.6,404.3 609.0,406.5 607.0,407.1" fill="#fbe620"/>
<ellipse cx="602.7" cy="403.7" rx="4.0" ry="5.6" fill="#eaa80e"/>
<ellipse cx="602.7" cy="403.9" rx="3.2" ry="4.5" fill="#a8600e"/>
<ellipse cx="602.7" cy="404.1" rx="1.6" ry="2.3" fill="#c98418" opacity=".7"/>
<polygon points="604.0,407.1 602.3,408.3 602.7,411.9 600.9,410.9 600.3,414.4 599.0,411.7 597.6,414.0 597.3,410.4 595.4,410.7 596.1,407.3 594.5,405.6 596.0,403.5 595.1,400.3 596.9,400.2 597.0,396.5 598.6,398.4 599.7,395.4 600.5,398.7 602.2,397.3 602.0,401.0 603.8,401.7 602.7,404.6" fill="#fadf12"/>
<polygon points="603.0,409.0 601.5,409.4 601.3,412.4 599.9,411.0 599.0,413.3 598.2,410.8 596.8,411.7 596.8,408.7 595.4,407.9 596.2,405.4 595.2,403.2 596.6,402.0 596.4,399.1 597.8,399.6 598.4,396.8 599.5,398.8 600.8,397.2 601.2,400.1 602.7,400.0 602.2,402.9 603.5,404.5 602.3,406.3" fill="#fbe620"/>
<ellipse cx="599.3" cy="405.0" rx="2.0" ry="4.0" fill="#eaa80e"/>
<ellipse cx="599.3" cy="405.2" rx="1.6" ry="3.2" fill="#b88a10"/>
<ellipse cx="599.3" cy="405.4" rx="0.8" ry="1.6" fill="#c98418" opacity=".7"/>
<polygon points="657.5,409.8 654.6,409.3 655.1,413.0 652.6,411.1 651.8,414.7 650.1,411.6 648.3,414.5 647.8,410.8 645.1,412.5 645.8,408.8 642.9,409.0 644.7,406.0 642.0,404.7 644.6,402.9 642.5,400.2 645.4,399.9 644.4,396.4 647.1,397.7 647.3,393.9 649.4,396.5 650.8,393.2 651.9,396.6 654.2,394.3 654.1,398.0 656.9,397.1 655.6,400.5 658.5,401.1 656.3,403.5 658.8,405.6 655.9,406.7" fill="#fadf12"/>
<polygon points="655.6,410.6 653.4,409.8 653.1,412.7 651.3,410.9 650.1,413.4 649.1,410.7 647.1,412.4 647.0,409.4 644.8,410.0 645.6,407.2 643.4,406.5 645.0,404.4 643.2,402.6 645.3,401.6 644.2,399.0 646.5,399.1 646.4,396.2 648.4,397.5 649.2,394.7 650.6,397.1 652.2,394.9 652.8,397.8 654.9,396.6 654.6,399.6 656.9,399.7 655.6,402.1 657.7,403.4 655.7,405.0 657.2,407.3 655.0,407.7" fill="#fbe620"/>
<ellipse cx="650.4" cy="404.0" rx="4.8" ry="6.2" fill="#eaa80e"/>
<ellipse cx="650.4" cy="404.2" rx="3.8" ry="4.9" fill="#a8520e"/>
<ellipse cx="650.4" cy="404.4" rx="1.9" ry="2.5" fill="#c98418" opacity=".7"/>
<polygon points="608.5,412.1 605.9,411.1 606.0,415.0 604.0,412.6 603.0,416.3 601.7,412.7 599.8,415.5 599.7,411.5 597.2,412.9 598.1,409.1 595.4,408.9 597.3,406.0 595.0,404.1 597.4,402.7 595.8,399.5 598.5,399.7 597.8,395.9 600.2,397.6 600.7,393.7 602.3,396.8 603.8,393.5 604.5,397.3 606.8,395.2 606.4,399.2 609.0,398.6 607.6,402.0 610.2,403.1 607.9,405.3 610.0,407.8 607.4,408.5" fill="#fadf12"/>
<polygon points="606.7,412.5 604.8,411.4 604.3,414.4 602.8,412.1 601.5,414.6 600.8,411.6 599.0,413.1 599.1,410.0 597.0,410.2 598.0,407.4 596.1,406.3 597.7,404.4 596.2,402.2 598.3,401.4 597.5,398.5 599.5,399.1 599.6,395.9 601.4,397.7 602.3,394.9 603.4,397.6 605.0,395.6 605.3,398.7 607.3,397.8 606.7,400.8 608.8,401.3 607.4,403.7 609.2,405.4 607.3,406.7 608.5,409.4 606.4,409.5" fill="#fbe620"/>
<ellipse cx="602.6" cy="404.8" rx="4.0" ry="5.9" fill="#eaa80e"/>
<ellipse cx="602.6" cy="405.0" rx="3.2" ry="4.7" fill="#b5640f"/>
<ellipse cx="602.6" cy="405.2" rx="1.6" ry="2.4" fill="#c98418" opacity=".7"/>
<polygon points="667.6,413.7 665.4,414.1 665.6,415.9 663.4,415.2 662.4,416.8 661.1,415.3 659.1,416.2 659.0,414.4 656.7,414.3 657.9,412.7 656.0,411.6 658.1,410.8 657.2,409.1 659.5,409.3 659.9,407.5 661.7,408.6 663.3,407.3 664.1,409.1 666.3,408.6 665.7,410.4 667.9,411.0 666.2,412.3" fill="#fde81c"/>
<polygon points="666.1,414.5 664.3,414.5 663.8,415.9 662.2,415.1 660.8,416.1 660.1,414.7 658.3,414.9 658.6,413.5 656.9,412.8 658.1,411.7 657.1,410.5 658.9,410.1 658.9,408.6 660.7,409.1 661.7,407.8 662.9,409.0 664.5,408.4 664.8,409.8 666.6,410.0 665.8,411.4 667.2,412.3 665.6,413.1" fill="#fbe620"/>
<ellipse cx="662.0" cy="412.0" rx="3.1" ry="2.5" fill="#eaa80e"/>
<ellipse cx="662.0" cy="412.2" rx="2.5" ry="2.0" fill="#a8600e"/>
<ellipse cx="662.0" cy="412.4" rx="1.2" ry="1.0" fill="#c98418" opacity=".7"/>
<polygon points="708.1,415.5 706.4,414.4 705.6,417.4 704.5,414.8 702.9,416.6 702.8,413.4 700.9,413.5 701.7,410.6 700.2,408.9 701.8,407.3 701.0,404.3 702.8,404.5 703.1,401.3 704.6,403.1 705.8,400.7 706.4,403.7 708.2,402.7 707.9,405.9 709.6,406.7 708.4,409.1 709.6,411.5 707.8,412.3" fill="#f8da0c"/>
<polygon points="706.7,415.7 705.4,414.4 704.3,416.2 703.7,413.9 702.2,414.5 702.4,411.9 701.0,411.0 701.9,408.9 701.0,406.8 702.4,406.0 702.3,403.4 703.8,404.0 704.5,401.8 705.5,403.7 706.8,402.4 707.1,405.0 708.5,405.1 708.0,407.5 709.2,409.1 708.0,410.6 708.5,413.0 707.0,413.1" fill="#fbe620"/>
<ellipse cx="705.0" cy="409.0" rx="2.5" ry="4.4" fill="#eaa80e"/>
<ellipse cx="705.0" cy="409.2" rx="2.0" ry="3.5" fill="#b88a10"/>
<ellipse cx="705.0" cy="409.4" rx="1.0" ry="1.7" fill="#c98418" opacity=".7"/>
<polygon points="584.4,412.6 581.7,413.5 582.3,416.2 579.7,415.5 578.7,418.1 576.9,416.0 574.7,417.7 574.2,415.0 571.4,415.3 572.5,412.7 570.1,411.4 572.4,409.9 571.0,407.4 573.8,407.4 573.9,404.6 576.3,406.0 577.9,403.8 579.1,406.3 581.7,405.3 581.4,408.0 584.1,408.6 582.4,410.7" fill="#fadf12"/>
<polygon points="582.8,414.1 580.5,414.3 580.2,416.5 578.2,415.5 576.8,417.2 575.6,415.3 573.5,416.0 573.5,413.7 571.4,413.1 572.7,411.3 571.2,409.6 573.3,408.7 572.9,406.5 575.1,406.9 576.1,404.9 577.7,406.4 579.6,405.2 580.1,407.3 582.4,407.3 581.7,409.4 583.6,410.6 581.8,412.0" fill="#fbe620"/>
<ellipse cx="577.3" cy="411.0" rx="3.7" ry="3.7" fill="#eaa80e"/>
<ellipse cx="577.3" cy="411.2" rx="3.0" ry="3.0" fill="#b88a10"/>
<ellipse cx="577.3" cy="411.4" rx="1.5" ry="1.5" fill="#c98418" opacity=".7"/>
<polygon points="711.4,413.3 709.2,413.5 709.3,417.0 707.4,415.4 706.4,418.6 705.2,415.6 703.3,417.6 703.2,414.1 701.0,414.3 702.0,411.2 700.0,409.6 701.9,407.7 700.6,404.7 702.8,404.5 702.7,401.0 704.6,402.6 705.6,399.4 706.8,402.4 708.7,400.4 708.8,403.9 711.0,403.7 710.0,406.8 712.0,408.4 710.1,410.3" fill="#fadf12"/>
<polygon points="709.9,414.5 708.1,414.1 707.7,416.9 706.2,415.2 705.0,417.2 704.3,414.5 702.6,415.3 702.8,412.4 701.1,411.7 702.1,409.4 700.9,407.4 702.5,406.3 702.1,403.5 703.9,403.9 704.3,401.1 705.8,402.8 707.0,400.8 707.7,403.5 709.4,402.7 709.2,405.6 710.9,406.3 709.9,408.6 711.1,410.6 709.5,411.7" fill="#fbe620"/>
<ellipse cx="706.0" cy="409.0" rx="3.1" ry="5.0" fill="#eaa80e"/>
<ellipse cx="706.0" cy="409.2" rx="2.5" ry="4.0" fill="#c08a10"/>
<ellipse cx="706.0" cy="409.4" rx="1.2" ry="2.0" fill="#c98418" opacity=".7"/>
<ellipse cx="581.5" cy="413.0" rx="3.5" ry="7.0" fill="#fadf12"/>
<ellipse cx="581.5" cy="413.0" rx="1.4" ry="2.8" fill="#c8a010"/>
<polygon points="531.3,411.4 528.5,412.7 530.4,415.5 527.5,415.3 528.4,418.9 525.7,417.3 525.4,421.0 523.4,418.3 522.1,421.6 521.0,418.1 518.8,420.5 518.9,416.8 516.0,417.9 517.3,414.5 514.3,414.2 516.5,411.7 513.9,410.0 516.7,408.7 514.8,405.9 517.7,406.1 516.8,402.5 519.5,404.1 519.8,400.4 521.8,403.1 523.1,399.8 524.2,403.3 526.4,400.9 526.3,404.6 529.2,403.5 527.9,406.9 530.9,407.2 528.7,409.7" fill="#fbe10e"/>
<polygon points="529.9,413.1 527.6,413.8 528.6,416.4 526.3,415.9 526.4,418.9 524.4,417.3 523.6,420.1 522.2,417.7 520.7,419.8 520.1,417.0 518.0,418.2 518.4,415.3 516.1,415.4 517.3,413.0 515.1,412.0 517.0,410.3 515.3,408.3 517.6,407.6 516.6,405.0 518.9,405.5 518.8,402.5 520.8,404.1 521.6,401.3 523.0,403.7 524.5,401.6 525.1,404.4 527.2,403.2 526.8,406.1 529.1,406.0 527.9,408.4 530.1,409.4 528.2,411.1" fill="#fbe620"/>
<ellipse cx="522.6" cy="410.7" rx="4.5" ry="5.6" fill="#eaa80e"/>
<ellipse cx="522.6" cy="410.9" rx="3.6" ry="4.5" fill="#b5640f"/>
<ellipse cx="522.6" cy="411.1" rx="1.8" ry="2.3" fill="#c98418" opacity=".7"/>
<polygon points="584.9,417.0 582.0,417.7 583.4,421.1 580.5,420.2 580.7,424.0 578.3,421.7 577.3,425.2 575.9,421.9 573.8,424.6 573.6,420.9 570.9,422.2 571.8,418.7 568.9,418.5 570.9,415.7 568.3,414.1 571.0,412.6 569.1,409.7 572.0,409.7 571.3,406.1 573.9,407.7 574.3,404.0 576.3,406.8 577.9,403.6 578.7,407.3 581.2,405.2 580.8,408.9 583.7,408.3 582.2,411.5 585.0,412.5 582.6,414.6" fill="#fbe10e"/>
<polygon points="583.3,418.5 581.0,418.7 581.4,421.6 579.3,420.5 578.7,423.4 577.1,421.3 575.7,423.7 574.9,420.9 572.8,422.4 573.0,419.4 570.7,419.7 571.7,417.0 569.5,416.1 571.3,414.2 569.6,412.2 571.8,411.4 570.9,408.6 573.2,409.1 573.3,406.1 575.2,407.7 576.2,405.0 577.4,407.5 579.2,405.6 579.6,408.5 581.8,407.6 581.2,410.5 583.5,410.9 582.0,413.2 584.0,414.7 582.0,416.1" fill="#fbe620"/>
<ellipse cx="576.7" cy="414.4" rx="4.4" ry="5.6" fill="#eaa80e"/>
<ellipse cx="576.7" cy="414.6" rx="3.5" ry="4.5" fill="#c9a012"/>
<ellipse cx="576.7" cy="414.8" rx="1.7" ry="2.2" fill="#c98418" opacity=".7"/>
<polygon points="701.4,422.7 698.3,420.4 698.7,425.3 696.2,421.7 695.6,426.6 694.0,422.2 692.3,426.6 691.7,421.7 689.2,425.3 689.7,420.3 686.5,422.7 688.0,418.1 684.5,419.1 686.9,415.4 683.3,414.9 686.4,412.3 683.1,410.3 686.6,409.1 683.8,405.9 687.4,406.1 685.5,401.9 688.8,403.6 687.9,398.8 690.7,401.8 690.8,396.9 692.9,400.9 694.0,396.2 695.2,400.9 697.3,396.9 697.3,401.9 700.2,398.9 699.2,403.7 702.6,402.0 700.6,406.2 704.2,406.0 701.5,409.2 704.9,410.4 701.6,412.3 704.6,414.9 701.1,415.4 703.4,419.2 700.0,418.2" fill="#f8da0c"/>
<polygon points="699.3,422.5 697.0,420.3 696.8,424.2 695.0,421.2 694.0,424.7 692.9,421.2 691.2,424.1 690.9,420.3 688.7,422.4 689.2,418.7 686.6,419.7 687.9,416.4 685.2,416.3 687.2,413.6 684.6,412.4 687.0,410.7 684.8,408.5 687.5,407.9 685.8,404.8 688.5,405.4 687.6,401.8 690.1,403.4 689.9,399.6 692.0,402.1 692.6,398.4 694.0,401.7 695.4,398.4 696.1,402.2 698.1,399.6 698.0,403.4 700.4,401.8 699.5,405.4 702.2,404.9 700.5,408.0 703.2,408.6 701.0,410.8 703.4,412.5 700.8,413.7 702.8,416.4 700.0,416.4 701.4,419.8 698.7,418.7" fill="#fbe620"/>
<ellipse cx="694.0" cy="411.5" rx="5.6" ry="7.9" fill="#eaa80e"/>
<ellipse cx="694.0" cy="411.7" rx="4.5" ry="6.3" fill="#a8580e"/>
<ellipse cx="694.0" cy="411.9" rx="2.3" ry="3.2" fill="#c98418" opacity=".7"/>
<polygon points="673.6,425.8 669.5,424.9 671.4,429.0 667.6,426.9 668.4,431.4 665.3,428.2 664.9,432.8 662.8,428.8 661.1,433.0 660.2,428.6 657.5,432.1 657.7,427.6 654.2,430.2 655.6,425.9 651.6,427.3 654.1,423.6 649.9,423.7 653.2,420.9 649.1,419.8 653.1,418.1 649.4,415.7 653.6,415.3 650.8,412.0 654.9,412.9 653.0,408.8 656.8,410.9 656.0,406.4 659.1,409.6 659.5,405.0 661.6,409.0 663.3,404.8 664.2,409.2 666.9,405.7 666.7,410.2 670.2,407.6 668.8,411.9 672.8,410.5 670.3,414.2 674.5,414.1 671.2,416.9 675.3,418.0 671.3,419.7 675.0,422.1 670.8,422.5" fill="#fbe10e"/>
<polygon points="671.2,426.4 668.1,425.4 668.9,428.8 666.1,426.9 666.1,430.5 663.9,427.8 662.9,431.2 661.5,428.0 659.7,430.9 659.2,427.4 656.7,429.6 657.1,426.1 654.1,427.5 655.4,424.3 652.2,424.7 654.3,422.0 651.1,421.4 653.8,419.5 650.9,417.9 654.0,416.9 651.6,414.5 654.9,414.5 653.2,411.4 656.3,412.4 655.5,409.0 658.3,410.9 658.3,407.3 660.5,410.0 661.5,406.6 662.9,409.8 664.7,406.9 665.2,410.4 667.7,408.2 667.3,411.7 670.3,410.3 669.0,413.5 672.2,413.1 670.1,415.8 673.3,416.4 670.6,418.3 673.5,419.9 670.4,420.9 672.8,423.3 669.5,423.3" fill="#fbe620"/>
<ellipse cx="662.2" cy="418.9" rx="8.4" ry="9.1" fill="#eaa80e"/>
<ellipse cx="662.2" cy="419.1" rx="6.7" ry="7.3" fill="#8f3f0e"/>
<ellipse cx="662.2" cy="419.3" rx="3.4" ry="3.6" fill="#c98418" opacity=".7"/>
<polygon points="562.6,427.9 559.2,427.8 560.8,431.6 557.6,430.1 558.2,434.3 555.6,431.6 555.0,435.9 553.2,432.2 551.6,436.0 550.8,431.8 548.3,434.7 548.7,430.4 545.6,432.1 547.0,428.2 543.6,428.6 546.0,425.5 542.7,424.5 545.7,422.5 542.9,420.1 546.3,419.6 544.2,416.1 547.5,417.0 546.4,412.9 549.4,415.1 549.4,410.7 551.6,414.0 552.7,409.9 554.0,413.9 556.1,410.5 556.3,414.8 559.1,412.4 558.2,416.6 561.5,415.5 559.6,419.1 563.0,419.4 560.2,422.0 563.4,423.7 560.1,425.0" fill="#f8da0c"/>
<polygon points="560.7,428.9 558.0,428.5 558.7,431.7 556.3,430.3 556.2,433.6 554.3,431.2 553.3,434.3 552.1,431.3 550.3,433.8 550.0,430.5 547.7,432.1 548.2,428.9 545.6,429.5 547.0,426.6 544.4,426.1 546.4,423.9 544.0,422.4 546.5,421.2 544.7,418.7 547.3,418.6 546.2,415.6 548.8,416.5 548.5,413.2 550.7,415.1 551.3,411.9 552.8,414.6 554.2,411.8 555.0,415.0 557.0,412.9 556.9,416.2 559.4,415.1 558.5,418.2 561.1,418.2 559.4,420.7 561.9,421.7 559.6,423.5 561.8,425.5 559.2,426.2" fill="#fbe620"/>
<ellipse cx="553.0" cy="423.0" rx="5.6" ry="7.0" fill="#eaa80e"/>
<ellipse cx="553.0" cy="423.2" rx="4.5" ry="5.6" fill="#a35510"/>
<ellipse cx="553.0" cy="423.4" rx="2.2" ry="2.8" fill="#c98418" opacity=".7"/>
<polygon points="610.6,431.0 608.3,431.1 608.6,434.8 606.5,433.1 605.7,436.6 604.3,433.5 602.5,436.0 602.2,432.3 599.9,433.3 600.8,429.7 598.5,428.9 600.2,426.4 598.4,423.9 600.7,423.0 599.9,419.5 602.2,420.4 602.4,416.6 604.2,419.1 605.5,416.0 606.4,419.5 608.5,417.7 608.2,421.4 610.6,421.4 609.2,424.5 611.4,426.2 609.3,428.0" fill="#fbe10e"/>
<polygon points="609.1,432.2 607.2,431.7 606.9,434.7 605.3,432.9 604.2,435.2 603.3,432.5 601.6,433.7 601.7,430.8 599.8,430.5 600.7,427.9 599.1,426.4 600.7,424.8 599.8,422.2 601.6,421.9 601.5,419.0 603.3,420.1 604.1,417.4 605.3,419.7 606.8,417.9 607.2,420.8 609.0,420.3 608.5,423.2 610.3,424.1 609.0,426.2 610.3,428.4 608.5,429.3" fill="#fbe620"/>
<ellipse cx="604.8" cy="426.3" rx="3.4" ry="5.4" fill="#eaa80e"/>
<ellipse cx="604.8" cy="426.5" rx="2.7" ry="4.3" fill="#c08a10"/>
<ellipse cx="604.8" cy="426.7" rx="1.4" ry="2.1" fill="#c98418" opacity=".7"/>
<polygon points="610.0,435.0 607.9,433.3 607.3,437.0 605.9,433.9 604.4,436.9 603.9,433.1 601.8,434.7 602.3,430.9 600.0,430.8 601.5,427.8 599.4,426.0 601.6,424.4 600.2,421.3 602.5,421.4 602.0,417.6 604.1,419.3 604.7,415.6 606.1,418.7 607.6,415.7 608.1,419.5 610.2,417.9 609.7,421.7 612.0,421.8 610.5,424.8 612.6,426.6 610.4,428.2 611.8,431.3 609.5,431.2" fill="#f8da0c"/>
<polygon points="608.3,434.9 606.8,433.2 605.9,435.7 605.0,433.1 603.4,434.7 603.3,431.7 601.5,432.0 602.2,429.2 600.4,428.2 601.8,426.1 600.5,424.0 602.3,423.1 601.7,420.2 603.5,420.7 603.7,417.7 605.2,419.4 606.1,416.9 607.0,419.5 608.6,417.9 608.7,420.9 610.5,420.6 609.8,423.4 611.6,424.4 610.2,426.5 611.5,428.6 609.7,429.5 610.3,432.4 608.5,431.9" fill="#fbe620"/>
<ellipse cx="606.0" cy="426.3" rx="3.4" ry="5.6" fill="#eaa80e"/>
<ellipse cx="606.0" cy="426.5" rx="2.7" ry="4.5" fill="#b98a14"/>
<ellipse cx="606.0" cy="426.7" rx="1.4" ry="2.3" fill="#c98418" opacity=".7"/>
<ellipse cx="600.0" cy="439.0" rx="3.5" ry="5.8" fill="#fadf12"/>
<ellipse cx="600.0" cy="439.0" rx="2.4" ry="4.1" fill="#b46a10"/>
<polygon points="523.5,446.7 521.0,448.1 522.5,451.3 519.9,451.1 520.3,454.9 518.0,453.0 517.2,456.7 515.7,453.6 513.9,456.4 513.4,452.6 511.0,454.1 511.7,450.4 509.1,450.1 510.8,447.2 508.5,445.3 511.0,443.9 509.5,440.7 512.1,440.9 511.7,437.1 514.0,439.0 514.8,435.3 516.3,438.4 518.1,435.6 518.6,439.4 521.0,437.9 520.3,441.6 522.9,441.9 521.2,444.8" fill="#fde81c"/>
<polygon points="522.2,448.7 520.2,449.4 520.8,452.3 518.7,451.7 518.4,454.7 516.8,452.9 515.6,455.4 514.6,452.7 512.8,454.2 512.8,451.2 510.7,451.4 511.6,448.6 509.6,447.5 511.2,445.6 509.8,443.3 511.8,442.6 511.2,439.7 513.3,440.3 513.6,437.3 515.2,439.1 516.4,436.6 517.4,439.3 519.2,437.8 519.2,440.8 521.3,440.6 520.4,443.4 522.4,444.5 520.8,446.4" fill="#fbe620"/>
<ellipse cx="516.0" cy="446.0" rx="3.9" ry="5.6" fill="#eaa80e"/>
<ellipse cx="516.0" cy="446.2" rx="3.1" ry="4.5" fill="#9a4e0e"/>
<ellipse cx="516.0" cy="446.4" rx="1.5" ry="2.2" fill="#c98418" opacity=".7"/>
<polygon points="496.5,458.6 493.4,457.0 494.4,462.1 491.8,459.1 491.9,464.4 489.9,460.2 489.0,465.4 487.8,460.4 486.1,464.9 485.8,459.6 483.4,463.0 484.1,457.8 481.1,459.8 482.7,455.2 479.5,455.7 481.9,452.1 478.7,451.0 481.6,448.7 478.8,446.2 482.0,445.3 479.8,441.5 482.9,442.3 481.5,437.6 484.3,439.9 483.8,434.6 486.1,438.2 486.6,432.9 488.2,437.5 489.5,432.7 490.2,437.9 492.3,433.9 492.1,439.2 494.8,436.5 493.7,441.4 496.8,440.1 494.8,444.3 498.0,444.6 495.3,447.6 498.3,449.4 495.3,451.0 497.8,454.2 494.6,454.2" fill="#f6d40a"/>
<polygon points="494.6,458.9 492.3,457.4 492.6,461.4 490.7,458.9 490.2,462.9 488.8,459.5 487.7,463.1 486.9,459.2 485.2,462.1 485.2,457.9 483.0,459.9 483.8,455.9 481.4,456.7 482.8,453.3 480.3,452.8 482.3,450.3 480.0,448.6 482.3,447.2 480.4,444.5 482.9,444.2 481.6,440.7 484.0,441.7 483.4,437.7 485.5,439.8 485.6,435.7 487.3,438.7 488.1,434.8 489.1,438.6 490.6,435.3 490.9,439.3 492.9,436.9 492.5,441.0 494.9,439.6 493.8,443.3 496.3,443.2 494.6,446.2 496.9,447.2 494.8,449.3 496.9,451.5 494.5,452.3 496.1,455.5 493.6,455.1" fill="#fbe620"/>
<ellipse cx="488.5" cy="449.0" rx="6.3" ry="10.5" fill="#eaa80e"/>
<ellipse cx="488.5" cy="449.2" rx="5.0" ry="8.4" fill="#8c4a10"/>
<ellipse cx="488.5" cy="449.4" rx="2.5" ry="4.2" fill="#c98418" opacity=".7"/>
<polygon points="618.4,470.0 613.6,469.2 616.6,473.8 612.1,471.6 614.2,476.9 610.2,473.5 611.2,479.2 608.0,474.8 607.9,480.7 605.6,475.5 604.3,481.2 603.1,475.5 600.8,480.6 600.7,474.8 597.5,479.1 598.5,473.4 594.5,476.8 596.6,471.5 592.1,473.6 595.1,469.0 590.3,469.9 594.1,466.3 589.3,465.7 593.7,463.3 589.1,461.4 593.9,460.3 589.8,457.2 594.6,457.4 591.2,453.2 595.8,454.8 593.3,449.8 597.6,452.6 596.1,447.0 599.6,451.0 599.2,445.1 602.0,449.9 602.7,444.2 604.5,449.6 606.3,444.2 606.9,450.0 609.7,445.2 609.3,451.0 612.9,447.1 611.3,452.7 615.6,449.9 613.0,454.9 617.7,453.4 614.2,457.5 619.1,457.4 614.9,460.4 619.7,461.6 615.1,463.4 619.4,465.9 614.6,466.4" fill="#fadf12"/>
<polygon points="615.8,470.7 612.2,469.7 614.0,473.7 610.7,471.7 611.6,476.1 608.7,473.3 608.9,477.7 606.6,474.2 605.9,478.6 604.4,474.5 602.8,478.5 602.1,474.2 599.8,477.7 600.0,473.2 597.1,476.0 598.1,471.7 594.7,473.6 596.5,469.7 592.9,470.6 595.4,467.3 591.7,467.1 594.8,464.6 591.2,463.5 594.6,461.8 591.4,459.7 595.0,459.1 592.3,456.2 595.9,456.6 593.8,452.9 597.3,454.4 595.9,450.2 599.1,452.6 598.5,448.2 601.1,451.4 601.4,446.9 603.3,450.8 604.5,446.5 605.6,450.8 607.5,447.0 607.8,451.4 610.4,448.3 609.8,452.7 613.0,450.3 611.6,454.5 615.1,453.1 612.9,456.7 616.6,456.3 613.8,459.2 617.4,459.9 614.2,462.0 617.6,463.6 614.0,464.7 617.1,467.3 613.4,467.4" fill="#fbe620"/>
<ellipse cx="604.4" cy="462.6" rx="8.8" ry="10.7" fill="#eaa80e"/>
<ellipse cx="604.4" cy="462.8" rx="7.1" ry="8.6" fill="#b8600e"/>
<ellipse cx="604.4" cy="463.0" rx="3.5" ry="4.3" fill="#c98418" opacity=".7"/>
<polygon points="688.6,468.5 683.8,468.0 687.3,472.7 682.7,470.8 685.4,476.4 681.2,473.2 683.1,479.5 679.4,475.1 680.3,481.8 677.4,476.4 677.3,483.2 675.2,477.1 674.1,483.7 672.9,477.1 670.9,483.3 670.8,476.5 667.9,481.9 668.7,475.2 665.1,479.7 666.9,473.3 662.7,476.6 665.4,471.0 660.8,472.9 664.3,468.2 659.5,468.8 663.5,465.2 658.8,464.3 663.3,462.0 658.8,459.8 663.5,458.8 659.4,455.3 664.2,455.8 660.7,451.1 665.3,453.0 662.6,447.4 666.8,450.6 664.9,444.3 668.6,448.7 667.7,442.0 670.6,447.4 670.7,440.6 672.8,446.7 673.9,440.1 675.1,446.7 677.1,440.5 677.2,447.3 680.1,441.9 679.3,448.6 682.9,444.1 681.1,450.5 685.3,447.2 682.6,452.8 687.2,450.9 683.7,455.6 688.5,455.0 684.5,458.6 689.2,459.5 684.7,461.8 689.2,464.0 684.5,465.0" fill="#f8da0c"/>
<polygon points="686.1,469.5 682.5,468.8 684.8,472.9 681.3,471.2 682.9,475.9 679.8,473.2 680.7,478.2 678.0,474.6 678.2,479.8 676.1,475.6 675.5,480.7 674.1,475.9 672.7,480.7 672.0,475.6 670.0,479.9 670.1,474.7 667.5,478.3 668.3,473.3 665.2,476.0 666.8,471.3 663.3,473.1 665.6,469.0 661.9,469.7 664.7,466.3 661.1,465.9 664.3,463.5 660.8,462.0 664.3,460.5 661.0,458.1 664.7,457.7 661.9,454.3 665.5,455.0 663.2,450.9 666.7,452.6 665.1,447.9 668.2,450.6 667.3,445.6 670.0,449.2 669.8,444.0 671.9,448.2 672.5,443.1 673.9,447.9 675.3,443.1 676.0,448.2 678.0,443.9 677.9,449.1 680.5,445.5 679.7,450.5 682.8,447.8 681.2,452.5 684.7,450.7 682.4,454.8 686.1,454.1 683.3,457.5 686.9,457.9 683.7,460.3 687.2,461.8 683.7,463.3 687.0,465.7 683.3,466.1" fill="#fbe620"/>
<ellipse cx="674.0" cy="461.9" rx="8.2" ry="11.7" fill="#eaa80e"/>
<ellipse cx="674.0" cy="462.1" rx="6.6" ry="9.4" fill="#b8640e"/>
<ellipse cx="674.0" cy="462.3" rx="3.3" ry="4.7" fill="#c98418" opacity=".7"/>
<polygon points="555.6,482.4 551.9,479.7 552.3,484.4 549.4,480.7 548.5,485.4 546.7,481.0 544.6,485.2 544.0,480.5 541.0,484.0 541.6,479.4 537.7,481.8 539.5,477.5 535.2,478.8 538.0,475.2 533.5,475.2 537.2,472.5 532.8,471.3 537.1,469.7 533.2,467.3 537.7,467.0 534.6,463.5 539.1,464.5 536.9,460.3 541.0,462.5 540.0,457.9 543.3,461.1 543.6,456.4 545.9,460.4 547.4,456.0 548.7,460.5 551.2,456.6 551.2,461.4 554.7,458.3 553.5,462.9 557.7,461.0 555.3,465.0 559.8,464.3 556.5,467.5 561.0,468.1 556.9,470.3 561.1,472.2 556.7,473.1 560.2,476.1 555.7,475.7 558.3,479.6 554.1,478.0" fill="#f6d40a"/>
<polygon points="553.1,481.8 550.4,479.5 550.0,483.1 548.0,480.1 546.6,483.5 545.5,480.0 543.3,482.9 543.1,479.2 540.3,481.4 541.1,477.8 537.8,479.1 539.4,475.9 535.9,476.2 538.3,473.6 534.9,472.9 537.9,471.1 534.8,469.4 538.2,468.5 535.6,466.1 539.1,466.1 537.2,463.0 540.5,464.1 539.5,460.6 542.5,462.5 542.4,458.8 544.8,461.5 545.7,458.0 547.3,461.3 549.0,458.1 549.7,461.7 552.2,459.2 552.0,462.8 555.0,461.1 553.8,464.5 557.2,463.7 555.2,466.6 558.7,466.8 556.0,469.1 559.3,470.2 556.0,471.6 558.9,473.7 555.5,474.1 557.7,476.9 554.3,476.4 555.7,479.7 552.5,478.2" fill="#fbe620"/>
<ellipse cx="547.0" cy="470.7" rx="7.3" ry="7.6" fill="#eaa80e"/>
<ellipse cx="547.0" cy="470.9" rx="5.9" ry="6.1" fill="#c07a10"/>
<ellipse cx="547.0" cy="471.1" rx="2.9" ry="3.0" fill="#c98418" opacity=".7"/>
</g></g>
<polygon points="590.0,208.6 744.5,314.0 687.0,483.4 494.3,483.4 435.6,314.0" fill="none" stroke="#44709c" stroke-width="1.2" opacity=".8"/>
<rect x="435.3" y="208.3" width="309.5" height="275.1" fill="none" stroke="#a6a6a6" stroke-width="1"/>
<path d="M590 185.6 V204" stroke="#a0a0a0" stroke-width="1"/>
<circle cx="435.1" cy="208.1" r="4.25" fill="#fff" stroke="#8e8e8e" stroke-width="1.5"/>
<circle cx="435.1" cy="345.7" r="4.25" fill="#fff" stroke="#8e8e8e" stroke-width="1.5"/>
<circle cx="435.1" cy="483.2" r="4.25" fill="#fff" stroke="#8e8e8e" stroke-width="1.5"/>
<circle cx="589.8" cy="208.1" r="4.25" fill="#fff" stroke="#8e8e8e" stroke-width="1.5"/>
<circle cx="589.8" cy="483.2" r="4.25" fill="#fff" stroke="#8e8e8e" stroke-width="1.5"/>
<circle cx="744.6" cy="208.1" r="4.25" fill="#fff" stroke="#8e8e8e" stroke-width="1.5"/>
<circle cx="744.6" cy="345.7" r="4.25" fill="#fff" stroke="#8e8e8e" stroke-width="1.5"/>
<circle cx="744.6" cy="483.2" r="4.25" fill="#fff" stroke="#8e8e8e" stroke-width="1.5"/>
<g fill="none" stroke-linecap="butt">
<path d="M597 178.2 A7.1 7.1 0 1 0 593.4 182.7" stroke="#8a8a8a" stroke-width="5"/>
<path d="M592.6 174.6 H604 L598.4 181.8 Z" fill="#fff" stroke="#8a8a8a" stroke-width="1.3"/>
<path d="M597 178.4 A7.1 7.1 0 1 0 593.2 182.8" stroke="#fff" stroke-width="1.9"/>
<path d="M595.6 175.2 H598.8 V177.8 H595.9 Z" fill="#fff" stroke="none"/>
</g>
<g>
<rect x="757" y="209" width="25.4" height="25.4" fill="#fdfefe" stroke="#c4c4c4" stroke-width="1"/>
<path d="M760 213.4 H779 M760 216.4 H779 M760 227.6 H779 M760 230.6 H779" stroke="#53707f" stroke-width="1.1" fill="none"/>
<path d="M760 219.4 H762.6 M760 222.2 H762.6 M760 225 H762.6 M776.4 219.4 H779 M776.4 222.2 H779 M776.4 225 H779" stroke="#7d93a0" stroke-width="1.1" fill="none"/>
<path d="M764.8 225 A4.7 4.7 0 0 1 774.2 225" stroke="#6a6f72" stroke-width="2.2" fill="none"/>
</g>
</svg>
<svg width="1200" height="675" viewBox="0 0 1200 675" fill="none">
<!-- QAT icons -->
<g stroke="#fff" stroke-width="2.2" stroke-linecap="butt" stroke-linejoin="miter">
  <path d="M30.2 5.6 L25.6 9.3 L30.2 13"/>
  <path d="M26 9.3 H32.6 A4.4 4.1 0 0 1 32.6 17.4 H31"/>
</g>
<path d="M46 10.1 H51.4 L48.7 13 Z" fill="#fff"/>
<g stroke="#fff" stroke-width="2.2">
  <path d="M78.9 8.4 A5.4 5.4 0 1 1 72.4 6.8"/>
  <path d="M75 6.4 H80.2 V11.4" stroke-linejoin="miter"/>
</g>
<path d="M114.4 9.2 H119.8" stroke="#fff" stroke-width="1.4"/>
<path d="M114.2 11.6 H120 L117.1 14.8 Z" fill="#fff"/>
<!-- window controls -->
<g stroke="#e9eef8" stroke-width="1.1">
  <rect x="1077.5" y="8" width="12" height="8.6"/>
  <path d="M1077 8.2 H1090" stroke-width="2"/>
  <path d="M1083.5 15.2 V11 M1081.2 13 L1083.5 10.7 L1085.8 13"/>
</g>
<path d="M1121.8 13.9 H1130.6" stroke="#fff" stroke-width="1.8"/>
<g stroke="#f0f4fb" stroke-width="1.2">
  <rect x="1164.8" y="10.6" width="6.8" height="5.8"/>
  <path d="M1167.3 10.4 V8 H1174 V13.6 H1171.8"/>
</g>
<!-- lightbulb -->
<g stroke="#b4c6e6" stroke-width="1.35">
  <path d="M689.4 41.2 C689.4 39.6 687.4 39 687.4 36.8 A3.9 3.9 0 0 1 695.2 36.8 C695.2 39 693.2 39.6 693.2 41.2 Z"/>
  <path d="M689.6 43.2 H693 M690 45 H692.6"/>
</g>
<!-- share person -->
<g stroke="#fff" stroke-width="1.3">
  <circle cx="1177.6" cy="36.6" r="3.5"/>
  <path d="M1171.4 46.8 C1172 42.6 1174.4 40.8 1176.6 40.6"/>
  <path d="M1178.6 40.6 C1180 40.8 1181 41.4 1181.8 42.2"/>
  <path d="M1181.6 42.6 V47.4 M1179 45 H1184.6"/>
</g>
<!-- anchor -->
<g stroke="#47709f" stroke-width="1.4" stroke-linecap="butt">
  <circle cx="279.3" cy="165.5" r="1.9"/>
  <path d="M279.3 167.4 V175" stroke-width="1.8"/>
  <path d="M273.5 169.3 L275.7 169.9 C275.9 172 277.4 173.3 279.3 173.3 C281.2 173.3 282.7 172 282.9 169.9 L285.1 169.3 C285 173.4 282.6 175.9 279.3 175.9 C276 175.9 273.6 173.4 273.5 169.3 Z" fill="#47709f" stroke="none"/>
</g>
<!-- status bar icons -->
<g stroke="#6a6a6a" stroke-width="1">
  <path d="M100.5 656.8 H103 L105.7 657.8 V667.8 L103 666.6 H100.5 Z"/>
  <path d="M105.7 657.8 L108.4 656.8 H111.2 V659.4 M111.2 664 V666.6 H108.4 L105.7 667.8"/>
  <path d="M107.2 661.6 L109.4 663.2 L112.6 659.2" stroke="#505050" stroke-width="1.3"/>
</g>
<!-- read mode -->
<g stroke="#6e6e6e" stroke-width="0.9">
  <path d="M973.6 657.4 C975.6 656.6 977.6 656.8 979.4 657.8 C981.2 656.8 983.2 656.6 985.2 657.4 V666.4 C983.2 665.8 981.2 666 979.4 667 C977.6 666 975.6 665.8 973.6 666.4 Z"/>
  <path d="M979.4 657.8 V668.2" stroke-width="1.2"/>
  <path d="M974.6 659.3 H978.4 M974.6 661 H978.4 M974.6 662.7 H978.4 M974.6 664.4 H978.4 M980.4 659.3 H984.2 M980.4 661 H984.2 M980.4 662.7 H984.2 M980.4 664.4 H984.2" stroke-width="0.8"/>
</g>
<!-- print layout -->
<g stroke="#666" stroke-width="1">
  <rect x="1009.6" y="656.5" width="11.8" height="11.6"/>
  <path d="M1010.6 658.6 H1020.4 M1010.6 660.4 H1020.4 M1010.6 662.2 H1020.4 M1010.6 664 H1020.4 M1010.6 665.8 H1020.4" stroke-width="0.9"/>
</g>
<!-- web layout -->
<g stroke="#6a6a6a" stroke-width="1">
  <path d="M1050.6 666.4 H1044.6 V656.9 H1054.4 V661.4"/>
  <path d="M1046.2 659 H1052.8 M1046.2 660.9 H1052.8 M1046.2 662.8 H1050 M1046.2 664.6 H1049.4" stroke-width="0.8"/>
  <circle cx="1053.8" cy="664.8" r="3.2" fill="#e4e4e4"/>
  <path d="M1051.6 663 C1053 663.2 1053.4 664.4 1054.2 665 C1055 665.6 1056 665.6 1056.6 666.4" stroke-width="1.2"/>
</g>
<!-- zoom slider -->
<path d="M1073 663.1 H1078.4" stroke="#555" stroke-width="1.8"/>
<path d="M1082 662.9 H1174.6" stroke="#8a8a8a" stroke-width="1"/>
<rect x="1126.6" y="657.4" width="3.8" height="10.2" fill="#5a5a5a"/>
<path d="M1178.4 663.1 H1186 M1182.2 659.4 V666.8" stroke="#555" stroke-width="1.8"/>
</svg>

</body></html>
